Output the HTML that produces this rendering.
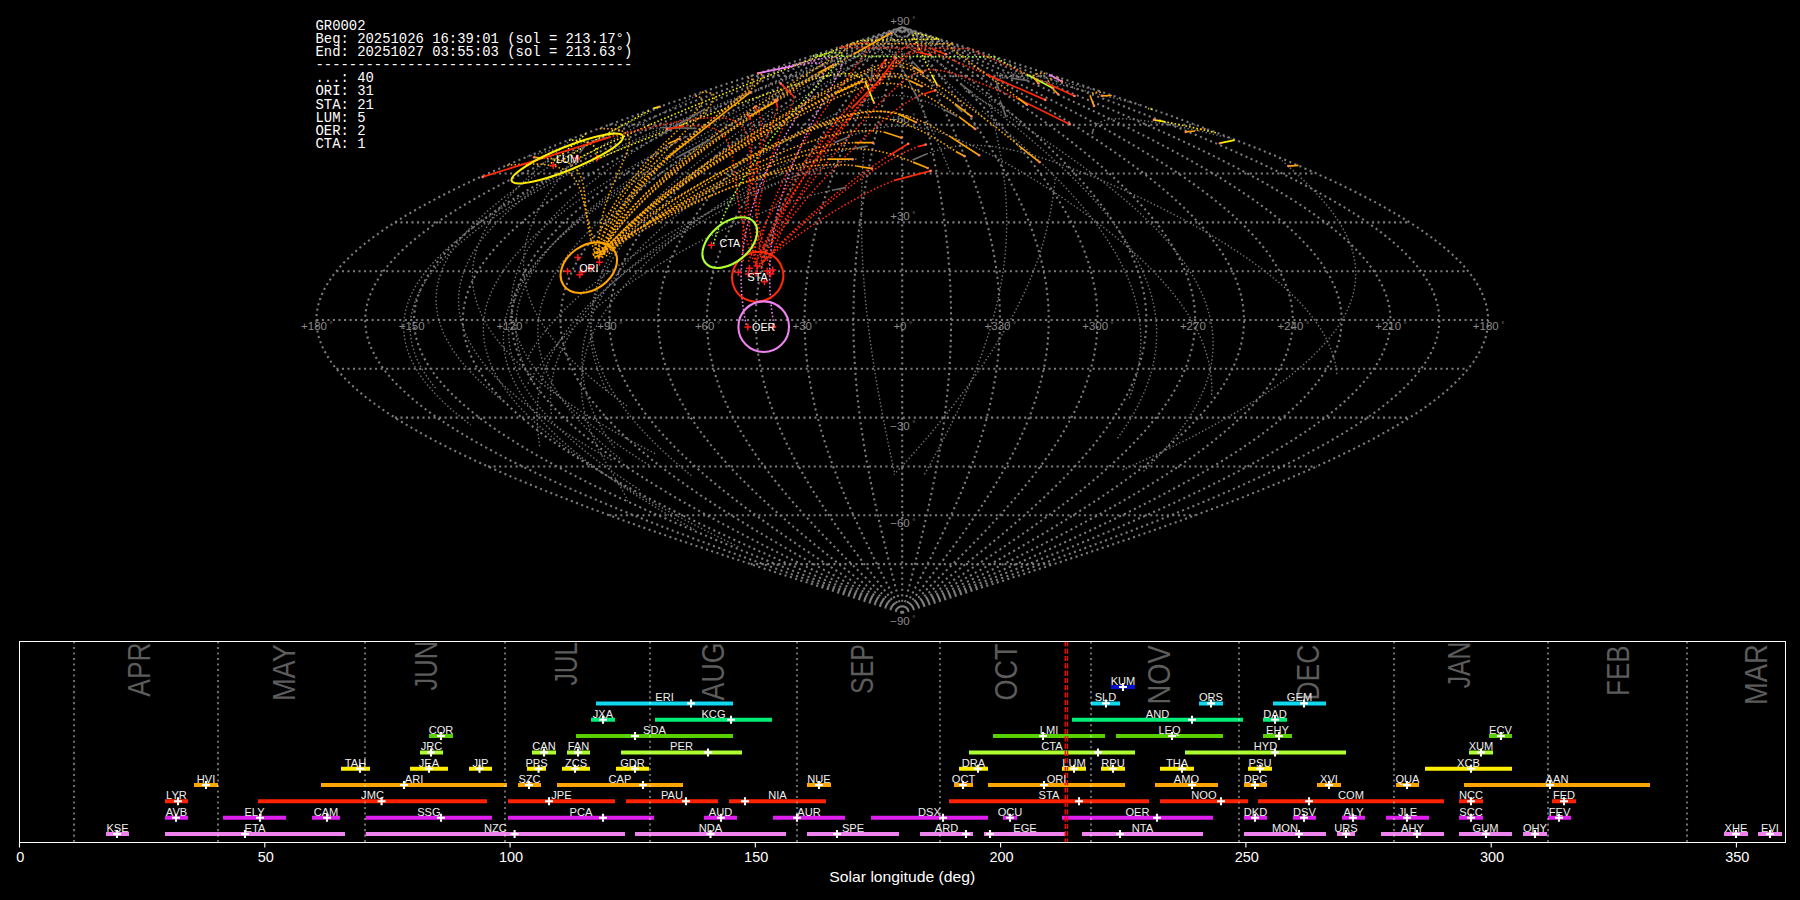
<!DOCTYPE html><html><head><meta charset="utf-8"><style>html,body{margin:0;padding:0;background:#000;width:1800px;height:900px;overflow:hidden}svg{display:block}</style></head><body>
<svg width="1800" height="900" viewBox="0 0 1800 900">
<rect width="1800" height="900" fill="#000"/>
<path d="M902.2 612.9 L907.4 611.3 L912.5 609.7 L917.6 608 L922.7 606.4 L927.8 604.8 L932.9 603.2 L938 601.5 L943.1 599.9 L948.2 598.3 L953.3 596.6 L958.4 595 L963.5 593.4 L968.6 591.8 L973.6 590.1 L978.7 588.5 L983.8 586.9 L988.8 585.3 L993.9 583.6 L998.9 582 L1004 580.4 L1009 578.7 L1014 577.1 L1019 575.5 L1024.1 573.9 L1029.1 572.2 L1034 570.6 L1039 569 L1044 567.4 L1048.9 565.7 L1053.9 564.1 L1058.8 562.5 L1063.7 560.8 L1068.6 559.2 L1073.5 557.6 L1078.4 556 L1083.3 554.3 L1088.1 552.7 L1093 551.1 L1097.8 549.5 L1102.6 547.8 L1107.4 546.2 L1112.2 544.6 L1117 542.9 L1121.7 541.3 L1126.4 539.7 L1131.2 538.1 L1135.9 536.4 L1140.5 534.8 L1145.2 533.2 L1149.8 531.6 L1154.5 529.9 L1159.1 528.3 L1163.7 526.7 L1168.2 525 L1172.8 523.4 L1177.3 521.8 L1181.8 520.2 L1186.3 518.5 L1190.7 516.9 L1195.2 515.3 L1199.6 513.7 L1204 512 L1208.4 510.4 L1212.7 508.8 L1217 507.1 L1221.3 505.5 L1225.6 503.9 L1229.9 502.3 L1234.1 500.6 L1238.3 499 L1242.5 497.4 L1246.6 495.8 L1250.7 494.1 L1254.8 492.5 L1258.9 490.9 L1262.9 489.2 L1266.9 487.6 L1270.9 486 L1274.9 484.4 L1278.8 482.7 L1282.7 481.1 L1286.6 479.5 L1290.4 477.9 L1294.3 476.2 L1298 474.6 L1301.8 473 L1305.5 471.3 L1309.2 469.7 L1312.9 468.1 L1316.5 466.5 L1320.1 464.8 L1323.7 463.2 L1327.2 461.6 L1330.7 460 L1334.2 458.3 L1337.6 456.7 L1341 455.1 L1344.4 453.4 L1347.7 451.8 L1351 450.2 L1354.3 448.6 L1357.5 446.9 L1360.7 445.3 L1363.9 443.7 L1367 442.1 L1370.1 440.4 L1373.2 438.8 L1376.2 437.2 L1379.2 435.5 L1382.1 433.9 L1385.1 432.3 L1387.9 430.7 L1390.8 429 L1393.6 427.4 L1396.3 425.8 L1399.1 424.2 L1401.8 422.5 L1404.4 420.9 L1407 419.3 L1409.6 417.6 L1412.1 416 L1414.6 414.4 L1417.1 412.8 L1419.5 411.1 L1421.9 409.5 L1424.2 407.9 L1426.5 406.2 L1428.8 404.6 L1431 403 L1433.2 401.4 L1435.3 399.7 L1437.4 398.1 L1439.5 396.5 L1441.5 394.9 L1443.5 393.2 L1445.4 391.6 L1447.3 390 L1449.2 388.3 L1451 386.7 L1452.8 385.1 L1454.5 383.5 L1456.2 381.8 L1457.8 380.2 L1459.4 378.6 L1461 377 L1462.5 375.3 L1464 373.7 L1465.4 372.1 L1466.8 370.4 L1468.1 368.8 L1469.4 367.2 L1470.7 365.6 L1471.9 363.9 L1473.1 362.3 L1474.2 360.7 L1475.3 359.1 L1476.3 357.4 L1477.3 355.8 L1478.3 354.2 L1479.2 352.5 L1480.1 350.9 L1480.9 349.3 L1481.7 347.7 L1482.4 346 L1483.1 344.4 L1483.7 342.8 L1484.3 341.2 L1484.9 339.5 L1485.4 337.9 L1485.9 336.3 L1486.3 334.6 L1486.7 333 L1487 331.4 L1487.3 329.8 L1487.5 328.1 L1487.7 326.5 L1487.9 324.9 L1488 323.3 L1488.1 321.6 L1488.1 320 L1488.1 318.4 L1488 316.7 L1487.9 315.1 L1487.7 313.5 L1487.5 311.9 L1487.3 310.2 L1487 308.6 L1486.7 307 L1486.3 305.4 L1485.9 303.7 L1485.4 302.1 L1484.9 300.5 L1484.3 298.8 L1483.7 297.2 L1483.1 295.6 L1482.4 294 L1481.7 292.3 L1480.9 290.7 L1480.1 289.1 L1479.2 287.5 L1478.3 285.8 L1477.3 284.2 L1476.3 282.6 L1475.3 280.9 L1474.2 279.3 L1473.1 277.7 L1471.9 276.1 L1470.7 274.4 L1469.4 272.8 L1468.1 271.2 L1466.8 269.6 L1465.4 267.9 L1464 266.3 L1462.5 264.7 L1461 263 L1459.4 261.4 L1457.8 259.8 L1456.2 258.2 L1454.5 256.5 L1452.8 254.9 L1451 253.3 L1449.2 251.7 L1447.3 250 L1445.4 248.4 L1443.5 246.8 L1441.5 245.1 L1439.5 243.5 L1437.4 241.9 L1435.3 240.3 L1433.2 238.6 L1431 237 L1428.8 235.4 L1426.5 233.8 L1424.2 232.1 L1421.9 230.5 L1419.5 228.9 L1417.1 227.2 L1414.6 225.6 L1412.1 224 L1409.6 222.4 L1407 220.7 L1404.4 219.1 L1401.8 217.5 L1399.1 215.8 L1396.3 214.2 L1393.6 212.6 L1390.8 211 L1387.9 209.3 L1385.1 207.7 L1382.1 206.1 L1379.2 204.5 L1376.2 202.8 L1373.2 201.2 L1370.1 199.6 L1367 197.9 L1363.9 196.3 L1360.7 194.7 L1357.5 193.1 L1354.3 191.4 L1351 189.8 L1347.7 188.2 L1344.4 186.6 L1341 184.9 L1337.6 183.3 L1334.2 181.7 L1330.7 180 L1327.2 178.4 L1323.7 176.8 L1320.1 175.2 L1316.5 173.5 L1312.9 171.9 L1309.2 170.3 L1305.5 168.7 L1301.8 167 L1298 165.4 L1294.3 163.8 L1290.4 162.1 L1286.6 160.5 L1282.7 158.9 L1278.8 157.3 L1274.9 155.6 L1270.9 154 L1266.9 152.4 L1262.9 150.8 L1258.9 149.1 L1254.8 147.5 L1250.7 145.9 L1246.6 144.2 L1242.5 142.6 L1238.3 141 L1234.1 139.4 L1229.9 137.7 L1225.6 136.1 L1221.3 134.5 L1217 132.9 L1212.7 131.2 L1208.4 129.6 L1204 128 L1199.6 126.3 L1195.2 124.7 L1190.7 123.1 L1186.3 121.5 L1181.8 119.8 L1177.3 118.2 L1172.8 116.6 L1168.2 115 L1163.7 113.3 L1159.1 111.7 L1154.5 110.1 L1149.8 108.4 L1145.2 106.8 L1140.5 105.2 L1135.9 103.6 L1131.2 101.9 L1126.4 100.3 L1121.7 98.7 L1117 97.1 L1112.2 95.4 L1107.4 93.8 L1102.6 92.2 L1097.8 90.5 L1093 88.9 L1088.1 87.3 L1083.3 85.7 L1078.4 84 L1073.5 82.4 L1068.6 80.8 L1063.7 79.2 L1058.8 77.5 L1053.9 75.9 L1048.9 74.3 L1044 72.6 L1039 71 L1034 69.4 L1029.1 67.8 L1024.1 66.1 L1019 64.5 L1014 62.9 L1009 61.3 L1004 59.6 L998.9 58 L993.9 56.4 L988.8 54.7 L983.8 53.1 L978.7 51.5 L973.6 49.9 L968.6 48.2 L963.5 46.6 L958.4 45 L953.3 43.4 L948.2 41.7 L943.1 40.1 L938 38.5 L932.9 36.8 L927.8 35.2 L922.7 33.6 L917.6 32 L912.5 30.3 L907.4 28.7 L902.2 27.1 M902.2 612.9 L906.9 611.3 L911.6 609.7 L916.3 608 L921 606.4 L925.7 604.8 L930.4 603.2 L935 601.5 L939.7 599.9 L944.4 598.3 L949.1 596.6 L953.7 595 L958.4 593.4 L963 591.8 L967.7 590.1 L972.3 588.5 L977 586.9 L981.6 585.3 L986.3 583.6 L990.9 582 L995.5 580.4 L1000.1 578.7 L1004.7 577.1 L1009.3 575.5 L1013.9 573.9 L1018.5 572.2 L1023.1 570.6 L1027.6 569 L1032.2 567.4 L1036.7 565.7 L1041.2 564.1 L1045.8 562.5 L1050.3 560.8 L1054.8 559.2 L1059.3 557.6 L1063.7 556 L1068.2 554.3 L1072.7 552.7 L1077.1 551.1 L1081.5 549.5 L1085.9 547.8 L1090.3 546.2 L1094.7 544.6 L1099.1 542.9 L1103.4 541.3 L1107.8 539.7 L1112.1 538.1 L1116.4 536.4 L1120.7 534.8 L1125 533.2 L1129.2 531.6 L1133.4 529.9 L1137.7 528.3 L1141.9 526.7 L1146.1 525 L1150.2 523.4 L1154.4 521.8 L1158.5 520.2 L1162.6 518.5 L1166.7 516.9 L1170.8 515.3 L1174.8 513.7 L1178.8 512 L1182.8 510.4 L1186.8 508.8 L1190.8 507.1 L1194.7 505.5 L1198.7 503.9 L1202.6 502.3 L1206.4 500.6 L1210.3 499 L1214.1 497.4 L1217.9 495.8 L1221.7 494.1 L1225.4 492.5 L1229.2 490.9 L1232.9 489.2 L1236.6 487.6 L1240.2 486 L1243.8 484.4 L1247.4 482.7 L1251 481.1 L1254.6 479.5 L1258.1 477.9 L1261.6 476.2 L1265.1 474.6 L1268.5 473 L1271.9 471.3 L1275.3 469.7 L1278.7 468.1 L1282 466.5 L1285.3 464.8 L1288.6 463.2 L1291.8 461.6 L1295 460 L1298.2 458.3 L1301.3 456.7 L1304.5 455.1 L1307.5 453.4 L1310.6 451.8 L1313.6 450.2 L1316.6 448.6 L1319.6 446.9 L1322.5 445.3 L1325.4 443.7 L1328.3 442.1 L1331.1 440.4 L1333.9 438.8 L1336.7 437.2 L1339.5 435.5 L1342.2 433.9 L1344.8 432.3 L1347.5 430.7 L1350.1 429 L1352.6 427.4 L1355.2 425.8 L1357.7 424.2 L1360.1 422.5 L1362.6 420.9 L1365 419.3 L1367.3 417.6 L1369.7 416 L1371.9 414.4 L1374.2 412.8 L1376.4 411.1 L1378.6 409.5 L1380.7 407.9 L1382.9 406.2 L1384.9 404.6 L1387 403 L1389 401.4 L1390.9 399.7 L1392.8 398.1 L1394.7 396.5 L1396.6 394.9 L1398.4 393.2 L1400.2 391.6 L1401.9 390 L1403.6 388.3 L1405.3 386.7 L1406.9 385.1 L1408.5 383.5 L1410 381.8 L1411.5 380.2 L1413 378.6 L1414.4 377 L1415.8 375.3 L1417.2 373.7 L1418.5 372.1 L1419.7 370.4 L1421 368.8 L1422.2 367.2 L1423.3 365.6 L1424.4 363.9 L1425.5 362.3 L1426.5 360.7 L1427.5 359.1 L1428.5 357.4 L1429.4 355.8 L1430.3 354.2 L1431.1 352.5 L1431.9 350.9 L1432.7 349.3 L1433.4 347.7 L1434 346 L1434.7 344.4 L1435.3 342.8 L1435.8 341.2 L1436.3 339.5 L1436.8 337.9 L1437.2 336.3 L1437.6 334.6 L1438 333 L1438.3 331.4 L1438.5 329.8 L1438.8 328.1 L1438.9 326.5 L1439.1 324.9 L1439.2 323.3 L1439.3 321.6 L1439.3 320 L1439.3 318.4 L1439.2 316.7 L1439.1 315.1 L1438.9 313.5 L1438.8 311.9 L1438.5 310.2 L1438.3 308.6 L1438 307 L1437.6 305.4 L1437.2 303.7 L1436.8 302.1 L1436.3 300.5 L1435.8 298.8 L1435.3 297.2 L1434.7 295.6 L1434 294 L1433.4 292.3 L1432.7 290.7 L1431.9 289.1 L1431.1 287.5 L1430.3 285.8 L1429.4 284.2 L1428.5 282.6 L1427.5 280.9 L1426.5 279.3 L1425.5 277.7 L1424.4 276.1 L1423.3 274.4 L1422.2 272.8 L1421 271.2 L1419.7 269.6 L1418.5 267.9 L1417.2 266.3 L1415.8 264.7 L1414.4 263 L1413 261.4 L1411.5 259.8 L1410 258.2 L1408.5 256.5 L1406.9 254.9 L1405.3 253.3 L1403.6 251.7 L1401.9 250 L1400.2 248.4 L1398.4 246.8 L1396.6 245.1 L1394.7 243.5 L1392.8 241.9 L1390.9 240.3 L1389 238.6 L1387 237 L1384.9 235.4 L1382.9 233.8 L1380.7 232.1 L1378.6 230.5 L1376.4 228.9 L1374.2 227.2 L1371.9 225.6 L1369.7 224 L1367.3 222.4 L1365 220.7 L1362.6 219.1 L1360.1 217.5 L1357.7 215.8 L1355.2 214.2 L1352.6 212.6 L1350.1 211 L1347.5 209.3 L1344.8 207.7 L1342.2 206.1 L1339.5 204.5 L1336.7 202.8 L1333.9 201.2 L1331.1 199.6 L1328.3 197.9 L1325.4 196.3 L1322.5 194.7 L1319.6 193.1 L1316.6 191.4 L1313.6 189.8 L1310.6 188.2 L1307.5 186.6 L1304.5 184.9 L1301.3 183.3 L1298.2 181.7 L1295 180 L1291.8 178.4 L1288.6 176.8 L1285.3 175.2 L1282 173.5 L1278.7 171.9 L1275.3 170.3 L1271.9 168.7 L1268.5 167 L1265.1 165.4 L1261.6 163.8 L1258.1 162.1 L1254.6 160.5 L1251 158.9 L1247.4 157.3 L1243.8 155.6 L1240.2 154 L1236.6 152.4 L1232.9 150.8 L1229.2 149.1 L1225.4 147.5 L1221.7 145.9 L1217.9 144.2 L1214.1 142.6 L1210.3 141 L1206.4 139.4 L1202.6 137.7 L1198.7 136.1 L1194.7 134.5 L1190.8 132.9 L1186.8 131.2 L1182.8 129.6 L1178.8 128 L1174.8 126.3 L1170.8 124.7 L1166.7 123.1 L1162.6 121.5 L1158.5 119.8 L1154.4 118.2 L1150.2 116.6 L1146.1 115 L1141.9 113.3 L1137.7 111.7 L1133.4 110.1 L1129.2 108.4 L1125 106.8 L1120.7 105.2 L1116.4 103.6 L1112.1 101.9 L1107.8 100.3 L1103.4 98.7 L1099.1 97.1 L1094.7 95.4 L1090.3 93.8 L1085.9 92.2 L1081.5 90.5 L1077.1 88.9 L1072.7 87.3 L1068.2 85.7 L1063.7 84 L1059.3 82.4 L1054.8 80.8 L1050.3 79.2 L1045.8 77.5 L1041.2 75.9 L1036.7 74.3 L1032.2 72.6 L1027.6 71 L1023.1 69.4 L1018.5 67.8 L1013.9 66.1 L1009.3 64.5 L1004.7 62.9 L1000.1 61.3 L995.5 59.6 L990.9 58 L986.3 56.4 L981.6 54.7 L977 53.1 L972.3 51.5 L967.7 49.9 L963 48.2 L958.4 46.6 L953.7 45 L949.1 43.4 L944.4 41.7 L939.7 40.1 L935 38.5 L930.4 36.8 L925.7 35.2 L921 33.6 L916.3 32 L911.6 30.3 L906.9 28.7 L902.2 27.1 M902.2 612.9 L906.5 611.3 L910.8 609.7 L915 608 L919.3 606.4 L923.5 604.8 L927.8 603.2 L932.1 601.5 L936.3 599.9 L940.6 598.3 L944.8 596.6 L949 595 L953.3 593.4 L957.5 591.8 L961.7 590.1 L966 588.5 L970.2 586.9 L974.4 585.3 L978.6 583.6 L982.8 582 L987 580.4 L991.2 578.7 L995.4 577.1 L999.6 575.5 L1003.8 573.9 L1007.9 572.2 L1012.1 570.6 L1016.2 569 L1020.4 567.4 L1024.5 565.7 L1028.6 564.1 L1032.7 562.5 L1036.8 560.8 L1040.9 559.2 L1045 557.6 L1049.1 556 L1053.1 554.3 L1057.2 552.7 L1061.2 551.1 L1065.2 549.5 L1069.2 547.8 L1073.2 546.2 L1077.2 544.6 L1081.2 542.9 L1085.1 541.3 L1089.1 539.7 L1093 538.1 L1096.9 536.4 L1100.8 534.8 L1104.7 533.2 L1108.6 531.6 L1112.4 529.9 L1116.3 528.3 L1120.1 526.7 L1123.9 525 L1127.7 523.4 L1131.4 521.8 L1135.2 520.2 L1138.9 518.5 L1142.7 516.9 L1146.4 515.3 L1150 513.7 L1153.7 512 L1157.3 510.4 L1161 508.8 L1164.6 507.1 L1168.1 505.5 L1171.7 503.9 L1175.3 502.3 L1178.8 500.6 L1182.3 499 L1185.8 497.4 L1189.2 495.8 L1192.6 494.1 L1196.1 492.5 L1199.5 490.9 L1202.8 489.2 L1206.2 487.6 L1209.5 486 L1212.8 484.4 L1216.1 482.7 L1219.3 481.1 L1222.5 479.5 L1225.7 477.9 L1228.9 476.2 L1232.1 474.6 L1235.2 473 L1238.3 471.3 L1241.4 469.7 L1244.4 468.1 L1247.5 466.5 L1250.5 464.8 L1253.4 463.2 L1256.4 461.6 L1259.3 460 L1262.2 458.3 L1265.1 456.7 L1267.9 455.1 L1270.7 453.4 L1273.5 451.8 L1276.2 450.2 L1279 448.6 L1281.7 446.9 L1284.3 445.3 L1287 443.7 L1289.6 442.1 L1292.1 440.4 L1294.7 438.8 L1297.2 437.2 L1299.7 435.5 L1302.2 433.9 L1304.6 432.3 L1307 430.7 L1309.4 429 L1311.7 427.4 L1314 425.8 L1316.3 424.2 L1318.5 422.5 L1320.7 420.9 L1322.9 419.3 L1325 417.6 L1327.2 416 L1329.2 414.4 L1331.3 412.8 L1333.3 411.1 L1335.3 409.5 L1337.2 407.9 L1339.2 406.2 L1341 404.6 L1342.9 403 L1344.7 401.4 L1346.5 399.7 L1348.2 398.1 L1350 396.5 L1351.6 394.9 L1353.3 393.2 L1354.9 391.6 L1356.5 390 L1358 388.3 L1359.5 386.7 L1361 385.1 L1362.5 383.5 L1363.9 381.8 L1365.2 380.2 L1366.6 378.6 L1367.9 377 L1369.1 375.3 L1370.4 373.7 L1371.5 372.1 L1372.7 370.4 L1373.8 368.8 L1374.9 367.2 L1376 365.6 L1377 363.9 L1377.9 362.3 L1378.9 360.7 L1379.8 359.1 L1380.7 357.4 L1381.5 355.8 L1382.3 354.2 L1383 352.5 L1383.8 350.9 L1384.4 349.3 L1385.1 347.7 L1385.7 346 L1386.3 344.4 L1386.8 342.8 L1387.3 341.2 L1387.8 339.5 L1388.2 337.9 L1388.6 336.3 L1389 334.6 L1389.3 333 L1389.5 331.4 L1389.8 329.8 L1390 328.1 L1390.2 326.5 L1390.3 324.9 L1390.4 323.3 L1390.4 321.6 L1390.5 320 L1390.4 318.4 L1390.4 316.7 L1390.3 315.1 L1390.2 313.5 L1390 311.9 L1389.8 310.2 L1389.5 308.6 L1389.3 307 L1389 305.4 L1388.6 303.7 L1388.2 302.1 L1387.8 300.5 L1387.3 298.8 L1386.8 297.2 L1386.3 295.6 L1385.7 294 L1385.1 292.3 L1384.4 290.7 L1383.8 289.1 L1383 287.5 L1382.3 285.8 L1381.5 284.2 L1380.7 282.6 L1379.8 280.9 L1378.9 279.3 L1377.9 277.7 L1377 276.1 L1376 274.4 L1374.9 272.8 L1373.8 271.2 L1372.7 269.6 L1371.5 267.9 L1370.4 266.3 L1369.1 264.7 L1367.9 263 L1366.6 261.4 L1365.2 259.8 L1363.9 258.2 L1362.5 256.5 L1361 254.9 L1359.5 253.3 L1358 251.7 L1356.5 250 L1354.9 248.4 L1353.3 246.8 L1351.6 245.1 L1350 243.5 L1348.2 241.9 L1346.5 240.3 L1344.7 238.6 L1342.9 237 L1341 235.4 L1339.2 233.8 L1337.2 232.1 L1335.3 230.5 L1333.3 228.9 L1331.3 227.2 L1329.2 225.6 L1327.2 224 L1325 222.4 L1322.9 220.7 L1320.7 219.1 L1318.5 217.5 L1316.3 215.8 L1314 214.2 L1311.7 212.6 L1309.4 211 L1307 209.3 L1304.6 207.7 L1302.2 206.1 L1299.7 204.5 L1297.2 202.8 L1294.7 201.2 L1292.1 199.6 L1289.6 197.9 L1287 196.3 L1284.3 194.7 L1281.7 193.1 L1279 191.4 L1276.2 189.8 L1273.5 188.2 L1270.7 186.6 L1267.9 184.9 L1265.1 183.3 L1262.2 181.7 L1259.3 180 L1256.4 178.4 L1253.4 176.8 L1250.5 175.2 L1247.5 173.5 L1244.4 171.9 L1241.4 170.3 L1238.3 168.7 L1235.2 167 L1232.1 165.4 L1228.9 163.8 L1225.7 162.1 L1222.5 160.5 L1219.3 158.9 L1216.1 157.3 L1212.8 155.6 L1209.5 154 L1206.2 152.4 L1202.8 150.8 L1199.5 149.1 L1196.1 147.5 L1192.6 145.9 L1189.2 144.2 L1185.8 142.6 L1182.3 141 L1178.8 139.4 L1175.3 137.7 L1171.7 136.1 L1168.1 134.5 L1164.6 132.9 L1161 131.2 L1157.3 129.6 L1153.7 128 L1150 126.3 L1146.4 124.7 L1142.7 123.1 L1138.9 121.5 L1135.2 119.8 L1131.4 118.2 L1127.7 116.6 L1123.9 115 L1120.1 113.3 L1116.3 111.7 L1112.4 110.1 L1108.6 108.4 L1104.7 106.8 L1100.8 105.2 L1096.9 103.6 L1093 101.9 L1089.1 100.3 L1085.1 98.7 L1081.2 97.1 L1077.2 95.4 L1073.2 93.8 L1069.2 92.2 L1065.2 90.5 L1061.2 88.9 L1057.2 87.3 L1053.1 85.7 L1049.1 84 L1045 82.4 L1040.9 80.8 L1036.8 79.2 L1032.7 77.5 L1028.6 75.9 L1024.5 74.3 L1020.4 72.6 L1016.2 71 L1012.1 69.4 L1007.9 67.8 L1003.8 66.1 L999.6 64.5 L995.4 62.9 L991.2 61.3 L987 59.6 L982.8 58 L978.6 56.4 L974.4 54.7 L970.2 53.1 L966 51.5 L961.7 49.9 L957.5 48.2 L953.3 46.6 L949 45 L944.8 43.4 L940.6 41.7 L936.3 40.1 L932.1 38.5 L927.8 36.8 L923.5 35.2 L919.3 33.6 L915 32 L910.8 30.3 L906.5 28.7 L902.2 27.1 M902.2 612.9 L906.1 611.3 L909.9 609.7 L913.8 608 L917.6 606.4 L921.4 604.8 L925.2 603.2 L929.1 601.5 L932.9 599.9 L936.7 598.3 L940.5 596.6 L944.4 595 L948.2 593.4 L952 591.8 L955.8 590.1 L959.6 588.5 L963.4 586.9 L967.2 585.3 L971 583.6 L974.8 582 L978.5 580.4 L982.3 578.7 L986.1 577.1 L989.8 575.5 L993.6 573.9 L997.4 572.2 L1001.1 570.6 L1004.8 569 L1008.5 567.4 L1012.3 565.7 L1016 564.1 L1019.7 562.5 L1023.4 560.8 L1027 559.2 L1030.7 557.6 L1034.4 556 L1038 554.3 L1041.7 552.7 L1045.3 551.1 L1048.9 549.5 L1052.5 547.8 L1056.1 546.2 L1059.7 544.6 L1063.3 542.9 L1066.8 541.3 L1070.4 539.7 L1073.9 538.1 L1077.5 536.4 L1081 534.8 L1084.5 533.2 L1087.9 531.6 L1091.4 529.9 L1094.9 528.3 L1098.3 526.7 L1101.7 525 L1105.1 523.4 L1108.5 521.8 L1111.9 520.2 L1115.3 518.5 L1118.6 516.9 L1121.9 515.3 L1125.3 513.7 L1128.5 512 L1131.8 510.4 L1135.1 508.8 L1138.3 507.1 L1141.6 505.5 L1144.8 503.9 L1148 502.3 L1151.1 500.6 L1154.3 499 L1157.4 497.4 L1160.5 495.8 L1163.6 494.1 L1166.7 492.5 L1169.7 490.9 L1172.8 489.2 L1175.8 487.6 L1178.8 486 L1181.7 484.4 L1184.7 482.7 L1187.6 481.1 L1190.5 479.5 L1193.4 477.9 L1196.3 476.2 L1199.1 474.6 L1201.9 473 L1204.7 471.3 L1207.5 469.7 L1210.2 468.1 L1212.9 466.5 L1215.6 464.8 L1218.3 463.2 L1221 461.6 L1223.6 460 L1226.2 458.3 L1228.8 456.7 L1231.3 455.1 L1233.9 453.4 L1236.4 451.8 L1238.8 450.2 L1241.3 448.6 L1243.7 446.9 L1246.1 445.3 L1248.5 443.7 L1250.8 442.1 L1253.2 440.4 L1255.5 438.8 L1257.7 437.2 L1260 435.5 L1262.2 433.9 L1264.4 432.3 L1266.5 430.7 L1268.6 429 L1270.7 427.4 L1272.8 425.8 L1274.9 424.2 L1276.9 422.5 L1278.9 420.9 L1280.8 419.3 L1282.8 417.6 L1284.7 416 L1286.5 414.4 L1288.4 412.8 L1290.2 411.1 L1292 409.5 L1293.7 407.9 L1295.5 406.2 L1297.2 404.6 L1298.8 403 L1300.5 401.4 L1302.1 399.7 L1303.6 398.1 L1305.2 396.5 L1306.7 394.9 L1308.2 393.2 L1309.6 391.6 L1311.1 390 L1312.5 388.3 L1313.8 386.7 L1315.1 385.1 L1316.4 383.5 L1317.7 381.8 L1318.9 380.2 L1320.1 378.6 L1321.3 377 L1322.4 375.3 L1323.5 373.7 L1324.6 372.1 L1325.7 370.4 L1326.7 368.8 L1327.6 367.2 L1328.6 365.6 L1329.5 363.9 L1330.4 362.3 L1331.2 360.7 L1332 359.1 L1332.8 357.4 L1333.6 355.8 L1334.3 354.2 L1335 352.5 L1335.6 350.9 L1336.2 349.3 L1336.8 347.7 L1337.4 346 L1337.9 344.4 L1338.4 342.8 L1338.8 341.2 L1339.2 339.5 L1339.6 337.9 L1340 336.3 L1340.3 334.6 L1340.6 333 L1340.8 331.4 L1341 329.8 L1341.2 328.1 L1341.4 326.5 L1341.5 324.9 L1341.6 323.3 L1341.6 321.6 L1341.6 320 L1341.6 318.4 L1341.6 316.7 L1341.5 315.1 L1341.4 313.5 L1341.2 311.9 L1341 310.2 L1340.8 308.6 L1340.6 307 L1340.3 305.4 L1340 303.7 L1339.6 302.1 L1339.2 300.5 L1338.8 298.8 L1338.4 297.2 L1337.9 295.6 L1337.4 294 L1336.8 292.3 L1336.2 290.7 L1335.6 289.1 L1335 287.5 L1334.3 285.8 L1333.6 284.2 L1332.8 282.6 L1332 280.9 L1331.2 279.3 L1330.4 277.7 L1329.5 276.1 L1328.6 274.4 L1327.6 272.8 L1326.7 271.2 L1325.7 269.6 L1324.6 267.9 L1323.5 266.3 L1322.4 264.7 L1321.3 263 L1320.1 261.4 L1318.9 259.8 L1317.7 258.2 L1316.4 256.5 L1315.1 254.9 L1313.8 253.3 L1312.5 251.7 L1311.1 250 L1309.6 248.4 L1308.2 246.8 L1306.7 245.1 L1305.2 243.5 L1303.6 241.9 L1302.1 240.3 L1300.5 238.6 L1298.8 237 L1297.2 235.4 L1295.5 233.8 L1293.7 232.1 L1292 230.5 L1290.2 228.9 L1288.4 227.2 L1286.5 225.6 L1284.7 224 L1282.8 222.4 L1280.8 220.7 L1278.9 219.1 L1276.9 217.5 L1274.9 215.8 L1272.8 214.2 L1270.7 212.6 L1268.6 211 L1266.5 209.3 L1264.4 207.7 L1262.2 206.1 L1260 204.5 L1257.7 202.8 L1255.5 201.2 L1253.2 199.6 L1250.8 197.9 L1248.5 196.3 L1246.1 194.7 L1243.7 193.1 L1241.3 191.4 L1238.8 189.8 L1236.4 188.2 L1233.9 186.6 L1231.3 184.9 L1228.8 183.3 L1226.2 181.7 L1223.6 180 L1221 178.4 L1218.3 176.8 L1215.6 175.2 L1212.9 173.5 L1210.2 171.9 L1207.5 170.3 L1204.7 168.7 L1201.9 167 L1199.1 165.4 L1196.3 163.8 L1193.4 162.1 L1190.5 160.5 L1187.6 158.9 L1184.7 157.3 L1181.7 155.6 L1178.8 154 L1175.8 152.4 L1172.8 150.8 L1169.7 149.1 L1166.7 147.5 L1163.6 145.9 L1160.5 144.2 L1157.4 142.6 L1154.3 141 L1151.1 139.4 L1148 137.7 L1144.8 136.1 L1141.6 134.5 L1138.3 132.9 L1135.1 131.2 L1131.8 129.6 L1128.5 128 L1125.3 126.3 L1121.9 124.7 L1118.6 123.1 L1115.3 121.5 L1111.9 119.8 L1108.5 118.2 L1105.1 116.6 L1101.7 115 L1098.3 113.3 L1094.9 111.7 L1091.4 110.1 L1087.9 108.4 L1084.5 106.8 L1081 105.2 L1077.5 103.6 L1073.9 101.9 L1070.4 100.3 L1066.8 98.7 L1063.3 97.1 L1059.7 95.4 L1056.1 93.8 L1052.5 92.2 L1048.9 90.5 L1045.3 88.9 L1041.7 87.3 L1038 85.7 L1034.4 84 L1030.7 82.4 L1027 80.8 L1023.4 79.2 L1019.7 77.5 L1016 75.9 L1012.3 74.3 L1008.5 72.6 L1004.8 71 L1001.1 69.4 L997.4 67.8 L993.6 66.1 L989.8 64.5 L986.1 62.9 L982.3 61.3 L978.5 59.6 L974.8 58 L971 56.4 L967.2 54.7 L963.4 53.1 L959.6 51.5 L955.8 49.9 L952 48.2 L948.2 46.6 L944.4 45 L940.5 43.4 L936.7 41.7 L932.9 40.1 L929.1 38.5 L925.2 36.8 L921.4 35.2 L917.6 33.6 L913.8 32 L909.9 30.3 L906.1 28.7 L902.2 27.1 M902.2 612.9 L905.7 611.3 L909.1 609.7 L912.5 608 L915.9 606.4 L919.3 604.8 L922.7 603.2 L926.1 601.5 L929.5 599.9 L932.9 598.3 L936.3 596.6 L939.7 595 L943.1 593.4 L946.5 591.8 L949.8 590.1 L953.2 588.5 L956.6 586.9 L960 585.3 L963.3 583.6 L966.7 582 L970.1 580.4 L973.4 578.7 L976.8 577.1 L980.1 575.5 L983.5 573.9 L986.8 572.2 L990.1 570.6 L993.4 569 L996.7 567.4 L1000 565.7 L1003.3 564.1 L1006.6 562.5 L1009.9 560.8 L1013.2 559.2 L1016.4 557.6 L1019.7 556 L1022.9 554.3 L1026.2 552.7 L1029.4 551.1 L1032.6 549.5 L1035.8 547.8 L1039 546.2 L1042.2 544.6 L1045.4 542.9 L1048.6 541.3 L1051.7 539.7 L1054.9 538.1 L1058 536.4 L1061.1 534.8 L1064.2 533.2 L1067.3 531.6 L1070.4 529.9 L1073.5 528.3 L1076.5 526.7 L1079.6 525 L1082.6 523.4 L1085.6 521.8 L1088.6 520.2 L1091.6 518.5 L1094.6 516.9 L1097.5 515.3 L1100.5 513.7 L1103.4 512 L1106.3 510.4 L1109.2 508.8 L1112.1 507.1 L1115 505.5 L1117.8 503.9 L1120.7 502.3 L1123.5 500.6 L1126.3 499 L1129.1 497.4 L1131.8 495.8 L1134.6 494.1 L1137.3 492.5 L1140 490.9 L1142.7 489.2 L1145.4 487.6 L1148 486 L1150.7 484.4 L1153.3 482.7 L1155.9 481.1 L1158.5 479.5 L1161 477.9 L1163.6 476.2 L1166.1 474.6 L1168.6 473 L1171.1 471.3 L1173.6 469.7 L1176 468.1 L1178.4 466.5 L1180.8 464.8 L1183.2 463.2 L1185.6 461.6 L1187.9 460 L1190.2 458.3 L1192.5 456.7 L1194.8 455.1 L1197 453.4 L1199.2 451.8 L1201.4 450.2 L1203.6 448.6 L1205.8 446.9 L1207.9 445.3 L1210 443.7 L1212.1 442.1 L1214.2 440.4 L1216.2 438.8 L1218.2 437.2 L1220.2 435.5 L1222.2 433.9 L1224.1 432.3 L1226 430.7 L1227.9 429 L1229.8 427.4 L1231.6 425.8 L1233.5 424.2 L1235.3 422.5 L1237 420.9 L1238.8 419.3 L1240.5 417.6 L1242.2 416 L1243.8 414.4 L1245.5 412.8 L1247.1 411.1 L1248.7 409.5 L1250.2 407.9 L1251.8 406.2 L1253.3 404.6 L1254.8 403 L1256.2 401.4 L1257.6 399.7 L1259 398.1 L1260.4 396.5 L1261.8 394.9 L1263.1 393.2 L1264.4 391.6 L1265.6 390 L1266.9 388.3 L1268.1 386.7 L1269.3 385.1 L1270.4 383.5 L1271.5 381.8 L1272.6 380.2 L1273.7 378.6 L1274.7 377 L1275.7 375.3 L1276.7 373.7 L1277.7 372.1 L1278.6 370.4 L1279.5 368.8 L1280.4 367.2 L1281.2 365.6 L1282 363.9 L1282.8 362.3 L1283.6 360.7 L1284.3 359.1 L1285 357.4 L1285.6 355.8 L1286.3 354.2 L1286.9 352.5 L1287.5 350.9 L1288 349.3 L1288.5 347.7 L1289 346 L1289.5 344.4 L1289.9 342.8 L1290.3 341.2 L1290.7 339.5 L1291 337.9 L1291.3 336.3 L1291.6 334.6 L1291.9 333 L1292.1 331.4 L1292.3 329.8 L1292.4 328.1 L1292.6 326.5 L1292.7 324.9 L1292.8 323.3 L1292.8 321.6 L1292.8 320 L1292.8 318.4 L1292.8 316.7 L1292.7 315.1 L1292.6 313.5 L1292.4 311.9 L1292.3 310.2 L1292.1 308.6 L1291.9 307 L1291.6 305.4 L1291.3 303.7 L1291 302.1 L1290.7 300.5 L1290.3 298.8 L1289.9 297.2 L1289.5 295.6 L1289 294 L1288.5 292.3 L1288 290.7 L1287.5 289.1 L1286.9 287.5 L1286.3 285.8 L1285.6 284.2 L1285 282.6 L1284.3 280.9 L1283.6 279.3 L1282.8 277.7 L1282 276.1 L1281.2 274.4 L1280.4 272.8 L1279.5 271.2 L1278.6 269.6 L1277.7 267.9 L1276.7 266.3 L1275.7 264.7 L1274.7 263 L1273.7 261.4 L1272.6 259.8 L1271.5 258.2 L1270.4 256.5 L1269.3 254.9 L1268.1 253.3 L1266.9 251.7 L1265.6 250 L1264.4 248.4 L1263.1 246.8 L1261.8 245.1 L1260.4 243.5 L1259 241.9 L1257.6 240.3 L1256.2 238.6 L1254.8 237 L1253.3 235.4 L1251.8 233.8 L1250.2 232.1 L1248.7 230.5 L1247.1 228.9 L1245.5 227.2 L1243.8 225.6 L1242.2 224 L1240.5 222.4 L1238.8 220.7 L1237 219.1 L1235.3 217.5 L1233.5 215.8 L1231.6 214.2 L1229.8 212.6 L1227.9 211 L1226 209.3 L1224.1 207.7 L1222.2 206.1 L1220.2 204.5 L1218.2 202.8 L1216.2 201.2 L1214.2 199.6 L1212.1 197.9 L1210 196.3 L1207.9 194.7 L1205.8 193.1 L1203.6 191.4 L1201.4 189.8 L1199.2 188.2 L1197 186.6 L1194.8 184.9 L1192.5 183.3 L1190.2 181.7 L1187.9 180 L1185.6 178.4 L1183.2 176.8 L1180.8 175.2 L1178.4 173.5 L1176 171.9 L1173.6 170.3 L1171.1 168.7 L1168.6 167 L1166.1 165.4 L1163.6 163.8 L1161 162.1 L1158.5 160.5 L1155.9 158.9 L1153.3 157.3 L1150.7 155.6 L1148 154 L1145.4 152.4 L1142.7 150.8 L1140 149.1 L1137.3 147.5 L1134.6 145.9 L1131.8 144.2 L1129.1 142.6 L1126.3 141 L1123.5 139.4 L1120.7 137.7 L1117.8 136.1 L1115 134.5 L1112.1 132.9 L1109.2 131.2 L1106.3 129.6 L1103.4 128 L1100.5 126.3 L1097.5 124.7 L1094.6 123.1 L1091.6 121.5 L1088.6 119.8 L1085.6 118.2 L1082.6 116.6 L1079.6 115 L1076.5 113.3 L1073.5 111.7 L1070.4 110.1 L1067.3 108.4 L1064.2 106.8 L1061.1 105.2 L1058 103.6 L1054.9 101.9 L1051.7 100.3 L1048.6 98.7 L1045.4 97.1 L1042.2 95.4 L1039 93.8 L1035.8 92.2 L1032.6 90.5 L1029.4 88.9 L1026.2 87.3 L1022.9 85.7 L1019.7 84 L1016.4 82.4 L1013.2 80.8 L1009.9 79.2 L1006.6 77.5 L1003.3 75.9 L1000 74.3 L996.7 72.6 L993.4 71 L990.1 69.4 L986.8 67.8 L983.5 66.1 L980.1 64.5 L976.8 62.9 L973.4 61.3 L970.1 59.6 L966.7 58 L963.3 56.4 L960 54.7 L956.6 53.1 L953.2 51.5 L949.8 49.9 L946.5 48.2 L943.1 46.6 L939.7 45 L936.3 43.4 L932.9 41.7 L929.5 40.1 L926.1 38.5 L922.7 36.8 L919.3 35.2 L915.9 33.6 L912.5 32 L909.1 30.3 L905.7 28.7 L902.2 27.1 M902.2 612.9 L905.2 611.3 L908.2 609.7 L911.2 608 L914.2 606.4 L917.2 604.8 L920.1 603.2 L923.1 601.5 L926.1 599.9 L929.1 598.3 L932 596.6 L935 595 L938 593.4 L940.9 591.8 L943.9 590.1 L946.9 588.5 L949.8 586.9 L952.8 585.3 L955.7 583.6 L958.7 582 L961.6 580.4 L964.5 578.7 L967.5 577.1 L970.4 575.5 L973.3 573.9 L976.2 572.2 L979.1 570.6 L982 569 L984.9 567.4 L987.8 565.7 L990.7 564.1 L993.6 562.5 L996.4 560.8 L999.3 559.2 L1002.2 557.6 L1005 556 L1007.9 554.3 L1010.7 552.7 L1013.5 551.1 L1016.3 549.5 L1019.1 547.8 L1021.9 546.2 L1024.7 544.6 L1027.5 542.9 L1030.3 541.3 L1033 539.7 L1035.8 538.1 L1038.5 536.4 L1041.2 534.8 L1044 533.2 L1046.7 531.6 L1049.4 529.9 L1052.1 528.3 L1054.7 526.7 L1057.4 525 L1060 523.4 L1062.7 521.8 L1065.3 520.2 L1067.9 518.5 L1070.5 516.9 L1073.1 515.3 L1075.7 513.7 L1078.3 512 L1080.8 510.4 L1083.3 508.8 L1085.9 507.1 L1088.4 505.5 L1090.9 503.9 L1093.4 502.3 L1095.8 500.6 L1098.3 499 L1100.7 497.4 L1103.1 495.8 L1105.5 494.1 L1107.9 492.5 L1110.3 490.9 L1112.6 489.2 L1115 487.6 L1117.3 486 L1119.6 484.4 L1121.9 482.7 L1124.2 481.1 L1126.5 479.5 L1128.7 477.9 L1130.9 476.2 L1133.1 474.6 L1135.3 473 L1137.5 471.3 L1139.6 469.7 L1141.8 468.1 L1143.9 466.5 L1146 464.8 L1148.1 463.2 L1150.1 461.6 L1152.2 460 L1154.2 458.3 L1156.2 456.7 L1158.2 455.1 L1160.2 453.4 L1162.1 451.8 L1164 450.2 L1165.9 448.6 L1167.8 446.9 L1169.7 445.3 L1171.5 443.7 L1173.4 442.1 L1175.2 440.4 L1177 438.8 L1178.7 437.2 L1180.5 435.5 L1182.2 433.9 L1183.9 432.3 L1185.6 430.7 L1187.2 429 L1188.9 427.4 L1190.5 425.8 L1192.1 424.2 L1193.6 422.5 L1195.2 420.9 L1196.7 419.3 L1198.2 417.6 L1199.7 416 L1201.1 414.4 L1202.6 412.8 L1204 411.1 L1205.4 409.5 L1206.7 407.9 L1208.1 406.2 L1209.4 404.6 L1210.7 403 L1212 401.4 L1213.2 399.7 L1214.4 398.1 L1215.6 396.5 L1216.8 394.9 L1218 393.2 L1219.1 391.6 L1220.2 390 L1221.3 388.3 L1222.4 386.7 L1223.4 385.1 L1224.4 383.5 L1225.4 381.8 L1226.3 380.2 L1227.3 378.6 L1228.2 377 L1229.1 375.3 L1229.9 373.7 L1230.8 372.1 L1231.6 370.4 L1232.3 368.8 L1233.1 367.2 L1233.8 365.6 L1234.6 363.9 L1235.2 362.3 L1235.9 360.7 L1236.5 359.1 L1237.1 357.4 L1237.7 355.8 L1238.3 354.2 L1238.8 352.5 L1239.3 350.9 L1239.8 349.3 L1240.2 347.7 L1240.7 346 L1241.1 344.4 L1241.4 342.8 L1241.8 341.2 L1242.1 339.5 L1242.4 337.9 L1242.7 336.3 L1242.9 334.6 L1243.2 333 L1243.4 331.4 L1243.5 329.8 L1243.7 328.1 L1243.8 326.5 L1243.9 324.9 L1243.9 323.3 L1244 321.6 L1244 320 L1244 318.4 L1243.9 316.7 L1243.9 315.1 L1243.8 313.5 L1243.7 311.9 L1243.5 310.2 L1243.4 308.6 L1243.2 307 L1242.9 305.4 L1242.7 303.7 L1242.4 302.1 L1242.1 300.5 L1241.8 298.8 L1241.4 297.2 L1241.1 295.6 L1240.7 294 L1240.2 292.3 L1239.8 290.7 L1239.3 289.1 L1238.8 287.5 L1238.3 285.8 L1237.7 284.2 L1237.1 282.6 L1236.5 280.9 L1235.9 279.3 L1235.2 277.7 L1234.6 276.1 L1233.8 274.4 L1233.1 272.8 L1232.3 271.2 L1231.6 269.6 L1230.8 267.9 L1229.9 266.3 L1229.1 264.7 L1228.2 263 L1227.3 261.4 L1226.3 259.8 L1225.4 258.2 L1224.4 256.5 L1223.4 254.9 L1222.4 253.3 L1221.3 251.7 L1220.2 250 L1219.1 248.4 L1218 246.8 L1216.8 245.1 L1215.6 243.5 L1214.4 241.9 L1213.2 240.3 L1212 238.6 L1210.7 237 L1209.4 235.4 L1208.1 233.8 L1206.7 232.1 L1205.4 230.5 L1204 228.9 L1202.6 227.2 L1201.1 225.6 L1199.7 224 L1198.2 222.4 L1196.7 220.7 L1195.2 219.1 L1193.6 217.5 L1192.1 215.8 L1190.5 214.2 L1188.9 212.6 L1187.2 211 L1185.6 209.3 L1183.9 207.7 L1182.2 206.1 L1180.5 204.5 L1178.7 202.8 L1177 201.2 L1175.2 199.6 L1173.4 197.9 L1171.5 196.3 L1169.7 194.7 L1167.8 193.1 L1165.9 191.4 L1164 189.8 L1162.1 188.2 L1160.2 186.6 L1158.2 184.9 L1156.2 183.3 L1154.2 181.7 L1152.2 180 L1150.1 178.4 L1148.1 176.8 L1146 175.2 L1143.9 173.5 L1141.8 171.9 L1139.6 170.3 L1137.5 168.7 L1135.3 167 L1133.1 165.4 L1130.9 163.8 L1128.7 162.1 L1126.5 160.5 L1124.2 158.9 L1121.9 157.3 L1119.6 155.6 L1117.3 154 L1115 152.4 L1112.6 150.8 L1110.3 149.1 L1107.9 147.5 L1105.5 145.9 L1103.1 144.2 L1100.7 142.6 L1098.3 141 L1095.8 139.4 L1093.4 137.7 L1090.9 136.1 L1088.4 134.5 L1085.9 132.9 L1083.3 131.2 L1080.8 129.6 L1078.3 128 L1075.7 126.3 L1073.1 124.7 L1070.5 123.1 L1067.9 121.5 L1065.3 119.8 L1062.7 118.2 L1060 116.6 L1057.4 115 L1054.7 113.3 L1052.1 111.7 L1049.4 110.1 L1046.7 108.4 L1044 106.8 L1041.2 105.2 L1038.5 103.6 L1035.8 101.9 L1033 100.3 L1030.3 98.7 L1027.5 97.1 L1024.7 95.4 L1021.9 93.8 L1019.1 92.2 L1016.3 90.5 L1013.5 88.9 L1010.7 87.3 L1007.9 85.7 L1005 84 L1002.2 82.4 L999.3 80.8 L996.4 79.2 L993.6 77.5 L990.7 75.9 L987.8 74.3 L984.9 72.6 L982 71 L979.1 69.4 L976.2 67.8 L973.3 66.1 L970.4 64.5 L967.5 62.9 L964.5 61.3 L961.6 59.6 L958.7 58 L955.7 56.4 L952.8 54.7 L949.8 53.1 L946.9 51.5 L943.9 49.9 L940.9 48.2 L938 46.6 L935 45 L932 43.4 L929.1 41.7 L926.1 40.1 L923.1 38.5 L920.1 36.8 L917.2 35.2 L914.2 33.6 L911.2 32 L908.2 30.3 L905.2 28.7 L902.2 27.1 M902.2 612.9 L904.8 611.3 L907.4 609.7 L909.9 608 L912.5 606.4 L915 604.8 L917.6 603.2 L920.1 601.5 L922.7 599.9 L925.2 598.3 L927.8 596.6 L930.3 595 L932.9 593.4 L935.4 591.8 L937.9 590.1 L940.5 588.5 L943 586.9 L945.5 585.3 L948.1 583.6 L950.6 582 L953.1 580.4 L955.6 578.7 L958.1 577.1 L960.6 575.5 L963.2 573.9 L965.7 572.2 L968.1 570.6 L970.6 569 L973.1 567.4 L975.6 565.7 L978.1 564.1 L980.5 562.5 L983 560.8 L985.4 559.2 L987.9 557.6 L990.3 556 L992.8 554.3 L995.2 552.7 L997.6 551.1 L1000 549.5 L1002.4 547.8 L1004.8 546.2 L1007.2 544.6 L1009.6 542.9 L1012 541.3 L1014.3 539.7 L1016.7 538.1 L1019.1 536.4 L1021.4 534.8 L1023.7 533.2 L1026 531.6 L1028.4 529.9 L1030.7 528.3 L1033 526.7 L1035.2 525 L1037.5 523.4 L1039.8 521.8 L1042 520.2 L1044.3 518.5 L1046.5 516.9 L1048.7 515.3 L1050.9 513.7 L1053.1 512 L1055.3 510.4 L1057.5 508.8 L1059.6 507.1 L1061.8 505.5 L1063.9 503.9 L1066.1 502.3 L1068.2 500.6 L1070.3 499 L1072.4 497.4 L1074.4 495.8 L1076.5 494.1 L1078.5 492.5 L1080.6 490.9 L1082.6 489.2 L1084.6 487.6 L1086.6 486 L1088.6 484.4 L1090.5 482.7 L1092.5 481.1 L1094.4 479.5 L1096.3 477.9 L1098.3 476.2 L1100.1 474.6 L1102 473 L1103.9 471.3 L1105.7 469.7 L1107.6 468.1 L1109.4 466.5 L1111.2 464.8 L1113 463.2 L1114.7 461.6 L1116.5 460 L1118.2 458.3 L1119.9 456.7 L1121.6 455.1 L1123.3 453.4 L1125 451.8 L1126.6 450.2 L1128.3 448.6 L1129.9 446.9 L1131.5 445.3 L1133.1 443.7 L1134.6 442.1 L1136.2 440.4 L1137.7 438.8 L1139.2 437.2 L1140.7 435.5 L1142.2 433.9 L1143.7 432.3 L1145.1 430.7 L1146.5 429 L1147.9 427.4 L1149.3 425.8 L1150.7 424.2 L1152 422.5 L1153.3 420.9 L1154.6 419.3 L1155.9 417.6 L1157.2 416 L1158.4 414.4 L1159.7 412.8 L1160.9 411.1 L1162.1 409.5 L1163.2 407.9 L1164.4 406.2 L1165.5 404.6 L1166.6 403 L1167.7 401.4 L1168.8 399.7 L1169.8 398.1 L1170.9 396.5 L1171.9 394.9 L1172.9 393.2 L1173.8 391.6 L1174.8 390 L1175.7 388.3 L1176.6 386.7 L1177.5 385.1 L1178.4 383.5 L1179.2 381.8 L1180 380.2 L1180.8 378.6 L1181.6 377 L1182.4 375.3 L1183.1 373.7 L1183.8 372.1 L1184.5 370.4 L1185.2 368.8 L1185.8 367.2 L1186.5 365.6 L1187.1 363.9 L1187.7 362.3 L1188.2 360.7 L1188.8 359.1 L1189.3 357.4 L1189.8 355.8 L1190.3 354.2 L1190.7 352.5 L1191.2 350.9 L1191.6 349.3 L1192 347.7 L1192.3 346 L1192.7 344.4 L1193 342.8 L1193.3 341.2 L1193.6 339.5 L1193.8 337.9 L1194.1 336.3 L1194.3 334.6 L1194.5 333 L1194.6 331.4 L1194.8 329.8 L1194.9 328.1 L1195 326.5 L1195.1 324.9 L1195.1 323.3 L1195.2 321.6 L1195.2 320 L1195.2 318.4 L1195.1 316.7 L1195.1 315.1 L1195 313.5 L1194.9 311.9 L1194.8 310.2 L1194.6 308.6 L1194.5 307 L1194.3 305.4 L1194.1 303.7 L1193.8 302.1 L1193.6 300.5 L1193.3 298.8 L1193 297.2 L1192.7 295.6 L1192.3 294 L1192 292.3 L1191.6 290.7 L1191.2 289.1 L1190.7 287.5 L1190.3 285.8 L1189.8 284.2 L1189.3 282.6 L1188.8 280.9 L1188.2 279.3 L1187.7 277.7 L1187.1 276.1 L1186.5 274.4 L1185.8 272.8 L1185.2 271.2 L1184.5 269.6 L1183.8 267.9 L1183.1 266.3 L1182.4 264.7 L1181.6 263 L1180.8 261.4 L1180 259.8 L1179.2 258.2 L1178.4 256.5 L1177.5 254.9 L1176.6 253.3 L1175.7 251.7 L1174.8 250 L1173.8 248.4 L1172.9 246.8 L1171.9 245.1 L1170.9 243.5 L1169.8 241.9 L1168.8 240.3 L1167.7 238.6 L1166.6 237 L1165.5 235.4 L1164.4 233.8 L1163.2 232.1 L1162.1 230.5 L1160.9 228.9 L1159.7 227.2 L1158.4 225.6 L1157.2 224 L1155.9 222.4 L1154.6 220.7 L1153.3 219.1 L1152 217.5 L1150.7 215.8 L1149.3 214.2 L1147.9 212.6 L1146.5 211 L1145.1 209.3 L1143.7 207.7 L1142.2 206.1 L1140.7 204.5 L1139.2 202.8 L1137.7 201.2 L1136.2 199.6 L1134.6 197.9 L1133.1 196.3 L1131.5 194.7 L1129.9 193.1 L1128.3 191.4 L1126.6 189.8 L1125 188.2 L1123.3 186.6 L1121.6 184.9 L1119.9 183.3 L1118.2 181.7 L1116.5 180 L1114.7 178.4 L1113 176.8 L1111.2 175.2 L1109.4 173.5 L1107.6 171.9 L1105.7 170.3 L1103.9 168.7 L1102 167 L1100.1 165.4 L1098.3 163.8 L1096.3 162.1 L1094.4 160.5 L1092.5 158.9 L1090.5 157.3 L1088.6 155.6 L1086.6 154 L1084.6 152.4 L1082.6 150.8 L1080.6 149.1 L1078.5 147.5 L1076.5 145.9 L1074.4 144.2 L1072.4 142.6 L1070.3 141 L1068.2 139.4 L1066.1 137.7 L1063.9 136.1 L1061.8 134.5 L1059.6 132.9 L1057.5 131.2 L1055.3 129.6 L1053.1 128 L1050.9 126.3 L1048.7 124.7 L1046.5 123.1 L1044.3 121.5 L1042 119.8 L1039.8 118.2 L1037.5 116.6 L1035.2 115 L1033 113.3 L1030.7 111.7 L1028.4 110.1 L1026 108.4 L1023.7 106.8 L1021.4 105.2 L1019.1 103.6 L1016.7 101.9 L1014.3 100.3 L1012 98.7 L1009.6 97.1 L1007.2 95.4 L1004.8 93.8 L1002.4 92.2 L1000 90.5 L997.6 88.9 L995.2 87.3 L992.8 85.7 L990.3 84 L987.9 82.4 L985.4 80.8 L983 79.2 L980.5 77.5 L978.1 75.9 L975.6 74.3 L973.1 72.6 L970.6 71 L968.1 69.4 L965.7 67.8 L963.2 66.1 L960.6 64.5 L958.1 62.9 L955.6 61.3 L953.1 59.6 L950.6 58 L948.1 56.4 L945.5 54.7 L943 53.1 L940.5 51.5 L937.9 49.9 L935.4 48.2 L932.9 46.6 L930.3 45 L927.8 43.4 L925.2 41.7 L922.7 40.1 L920.1 38.5 L917.6 36.8 L915 35.2 L912.5 33.6 L909.9 32 L907.4 30.3 L904.8 28.7 L902.2 27.1 M902.2 612.9 L904.4 611.3 L906.5 609.7 L908.6 608 L910.8 606.4 L912.9 604.8 L915 603.2 L917.2 601.5 L919.3 599.9 L921.4 598.3 L923.5 596.6 L925.6 595 L927.8 593.4 L929.9 591.8 L932 590.1 L934.1 588.5 L936.2 586.9 L938.3 585.3 L940.4 583.6 L942.5 582 L944.6 580.4 L946.7 578.7 L948.8 577.1 L950.9 575.5 L953 573.9 L955.1 572.2 L957.2 570.6 L959.2 569 L961.3 567.4 L963.4 565.7 L965.4 564.1 L967.5 562.5 L969.5 560.8 L971.6 559.2 L973.6 557.6 L975.7 556 L977.7 554.3 L979.7 552.7 L981.7 551.1 L983.7 549.5 L985.7 547.8 L987.7 546.2 L989.7 544.6 L991.7 542.9 L993.7 541.3 L995.7 539.7 L997.6 538.1 L999.6 536.4 L1001.5 534.8 L1003.5 533.2 L1005.4 531.6 L1007.3 529.9 L1009.3 528.3 L1011.2 526.7 L1013.1 525 L1015 523.4 L1016.8 521.8 L1018.7 520.2 L1020.6 518.5 L1022.5 516.9 L1024.3 515.3 L1026.1 513.7 L1028 512 L1029.8 510.4 L1031.6 508.8 L1033.4 507.1 L1035.2 505.5 L1037 503.9 L1038.8 502.3 L1040.5 500.6 L1042.3 499 L1044 497.4 L1045.7 495.8 L1047.4 494.1 L1049.2 492.5 L1050.9 490.9 L1052.5 489.2 L1054.2 487.6 L1055.9 486 L1057.5 484.4 L1059.2 482.7 L1060.8 481.1 L1062.4 479.5 L1064 477.9 L1065.6 476.2 L1067.2 474.6 L1068.7 473 L1070.3 471.3 L1071.8 469.7 L1073.3 468.1 L1074.9 466.5 L1076.4 464.8 L1077.8 463.2 L1079.3 461.6 L1080.8 460 L1082.2 458.3 L1083.7 456.7 L1085.1 455.1 L1086.5 453.4 L1087.9 451.8 L1089.2 450.2 L1090.6 448.6 L1092 446.9 L1093.3 445.3 L1094.6 443.7 L1095.9 442.1 L1097.2 440.4 L1098.5 438.8 L1099.7 437.2 L1101 435.5 L1102.2 433.9 L1103.4 432.3 L1104.6 430.7 L1105.8 429 L1107 427.4 L1108.1 425.8 L1109.3 424.2 L1110.4 422.5 L1111.5 420.9 L1112.6 419.3 L1113.6 417.6 L1114.7 416 L1115.7 414.4 L1116.8 412.8 L1117.8 411.1 L1118.8 409.5 L1119.7 407.9 L1120.7 406.2 L1121.6 404.6 L1122.6 403 L1123.5 401.4 L1124.4 399.7 L1125.2 398.1 L1126.1 396.5 L1126.9 394.9 L1127.8 393.2 L1128.6 391.6 L1129.4 390 L1130.1 388.3 L1130.9 386.7 L1131.6 385.1 L1132.4 383.5 L1133.1 381.8 L1133.7 380.2 L1134.4 378.6 L1135.1 377 L1135.7 375.3 L1136.3 373.7 L1136.9 372.1 L1137.5 370.4 L1138 368.8 L1138.6 367.2 L1139.1 365.6 L1139.6 363.9 L1140.1 362.3 L1140.6 360.7 L1141 359.1 L1141.5 357.4 L1141.9 355.8 L1142.3 354.2 L1142.6 352.5 L1143 350.9 L1143.3 349.3 L1143.7 347.7 L1144 346 L1144.3 344.4 L1144.5 342.8 L1144.8 341.2 L1145 339.5 L1145.2 337.9 L1145.4 336.3 L1145.6 334.6 L1145.8 333 L1145.9 331.4 L1146 329.8 L1146.1 328.1 L1146.2 326.5 L1146.3 324.9 L1146.3 323.3 L1146.3 321.6 L1146.4 320 L1146.3 318.4 L1146.3 316.7 L1146.3 315.1 L1146.2 313.5 L1146.1 311.9 L1146 310.2 L1145.9 308.6 L1145.8 307 L1145.6 305.4 L1145.4 303.7 L1145.2 302.1 L1145 300.5 L1144.8 298.8 L1144.5 297.2 L1144.3 295.6 L1144 294 L1143.7 292.3 L1143.3 290.7 L1143 289.1 L1142.6 287.5 L1142.3 285.8 L1141.9 284.2 L1141.5 282.6 L1141 280.9 L1140.6 279.3 L1140.1 277.7 L1139.6 276.1 L1139.1 274.4 L1138.6 272.8 L1138 271.2 L1137.5 269.6 L1136.9 267.9 L1136.3 266.3 L1135.7 264.7 L1135.1 263 L1134.4 261.4 L1133.7 259.8 L1133.1 258.2 L1132.4 256.5 L1131.6 254.9 L1130.9 253.3 L1130.1 251.7 L1129.4 250 L1128.6 248.4 L1127.8 246.8 L1126.9 245.1 L1126.1 243.5 L1125.2 241.9 L1124.4 240.3 L1123.5 238.6 L1122.6 237 L1121.6 235.4 L1120.7 233.8 L1119.7 232.1 L1118.8 230.5 L1117.8 228.9 L1116.8 227.2 L1115.7 225.6 L1114.7 224 L1113.6 222.4 L1112.6 220.7 L1111.5 219.1 L1110.4 217.5 L1109.3 215.8 L1108.1 214.2 L1107 212.6 L1105.8 211 L1104.6 209.3 L1103.4 207.7 L1102.2 206.1 L1101 204.5 L1099.7 202.8 L1098.5 201.2 L1097.2 199.6 L1095.9 197.9 L1094.6 196.3 L1093.3 194.7 L1092 193.1 L1090.6 191.4 L1089.2 189.8 L1087.9 188.2 L1086.5 186.6 L1085.1 184.9 L1083.7 183.3 L1082.2 181.7 L1080.8 180 L1079.3 178.4 L1077.8 176.8 L1076.4 175.2 L1074.9 173.5 L1073.3 171.9 L1071.8 170.3 L1070.3 168.7 L1068.7 167 L1067.2 165.4 L1065.6 163.8 L1064 162.1 L1062.4 160.5 L1060.8 158.9 L1059.2 157.3 L1057.5 155.6 L1055.9 154 L1054.2 152.4 L1052.5 150.8 L1050.9 149.1 L1049.2 147.5 L1047.4 145.9 L1045.7 144.2 L1044 142.6 L1042.3 141 L1040.5 139.4 L1038.8 137.7 L1037 136.1 L1035.2 134.5 L1033.4 132.9 L1031.6 131.2 L1029.8 129.6 L1028 128 L1026.1 126.3 L1024.3 124.7 L1022.5 123.1 L1020.6 121.5 L1018.7 119.8 L1016.8 118.2 L1015 116.6 L1013.1 115 L1011.2 113.3 L1009.3 111.7 L1007.3 110.1 L1005.4 108.4 L1003.5 106.8 L1001.5 105.2 L999.6 103.6 L997.6 101.9 L995.7 100.3 L993.7 98.7 L991.7 97.1 L989.7 95.4 L987.7 93.8 L985.7 92.2 L983.7 90.5 L981.7 88.9 L979.7 87.3 L977.7 85.7 L975.7 84 L973.6 82.4 L971.6 80.8 L969.5 79.2 L967.5 77.5 L965.4 75.9 L963.4 74.3 L961.3 72.6 L959.2 71 L957.2 69.4 L955.1 67.8 L953 66.1 L950.9 64.5 L948.8 62.9 L946.7 61.3 L944.6 59.6 L942.5 58 L940.4 56.4 L938.3 54.7 L936.2 53.1 L934.1 51.5 L932 49.9 L929.9 48.2 L927.8 46.6 L925.6 45 L923.5 43.4 L921.4 41.7 L919.3 40.1 L917.2 38.5 L915 36.8 L912.9 35.2 L910.8 33.6 L908.6 32 L906.5 30.3 L904.4 28.7 L902.2 27.1 M902.2 612.9 L904 611.3 L905.7 609.7 L907.4 608 L909.1 606.4 L910.8 604.8 L912.5 603.2 L914.2 601.5 L915.9 599.9 L917.6 598.3 L919.3 596.6 L921 595 L922.7 593.4 L924.4 591.8 L926 590.1 L927.7 588.5 L929.4 586.9 L931.1 585.3 L932.8 583.6 L934.5 582 L936.2 580.4 L937.8 578.7 L939.5 577.1 L941.2 575.5 L942.9 573.9 L944.5 572.2 L946.2 570.6 L947.8 569 L949.5 567.4 L951.1 565.7 L952.8 564.1 L954.4 562.5 L956.1 560.8 L957.7 559.2 L959.3 557.6 L961 556 L962.6 554.3 L964.2 552.7 L965.8 551.1 L967.4 549.5 L969 547.8 L970.6 546.2 L972.2 544.6 L973.8 542.9 L975.4 541.3 L977 539.7 L978.6 538.1 L980.1 536.4 L981.7 534.8 L983.2 533.2 L984.8 531.6 L986.3 529.9 L987.9 528.3 L989.4 526.7 L990.9 525 L992.4 523.4 L993.9 521.8 L995.4 520.2 L996.9 518.5 L998.4 516.9 L999.9 515.3 L1001.4 513.7 L1002.8 512 L1004.3 510.4 L1005.7 508.8 L1007.2 507.1 L1008.6 505.5 L1010 503.9 L1011.5 502.3 L1012.9 500.6 L1014.3 499 L1015.7 497.4 L1017 495.8 L1018.4 494.1 L1019.8 492.5 L1021.1 490.9 L1022.5 489.2 L1023.8 487.6 L1025.1 486 L1026.5 484.4 L1027.8 482.7 L1029.1 481.1 L1030.4 479.5 L1031.6 477.9 L1032.9 476.2 L1034.2 474.6 L1035.4 473 L1036.7 471.3 L1037.9 469.7 L1039.1 468.1 L1040.3 466.5 L1041.5 464.8 L1042.7 463.2 L1043.9 461.6 L1045.1 460 L1046.2 458.3 L1047.4 456.7 L1048.5 455.1 L1049.6 453.4 L1050.7 451.8 L1051.8 450.2 L1052.9 448.6 L1054 446.9 L1055.1 445.3 L1056.1 443.7 L1057.2 442.1 L1058.2 440.4 L1059.2 438.8 L1060.2 437.2 L1061.2 435.5 L1062.2 433.9 L1063.2 432.3 L1064.1 430.7 L1065.1 429 L1066 427.4 L1066.9 425.8 L1067.9 424.2 L1068.8 422.5 L1069.6 420.9 L1070.5 419.3 L1071.4 417.6 L1072.2 416 L1073 414.4 L1073.9 412.8 L1074.7 411.1 L1075.5 409.5 L1076.2 407.9 L1077 406.2 L1077.8 404.6 L1078.5 403 L1079.2 401.4 L1079.9 399.7 L1080.6 398.1 L1081.3 396.5 L1082 394.9 L1082.7 393.2 L1083.3 391.6 L1083.9 390 L1084.6 388.3 L1085.2 386.7 L1085.8 385.1 L1086.3 383.5 L1086.9 381.8 L1087.4 380.2 L1088 378.6 L1088.5 377 L1089 375.3 L1089.5 373.7 L1090 372.1 L1090.4 370.4 L1090.9 368.8 L1091.3 367.2 L1091.7 365.6 L1092.1 363.9 L1092.5 362.3 L1092.9 360.7 L1093.3 359.1 L1093.6 357.4 L1093.9 355.8 L1094.3 354.2 L1094.6 352.5 L1094.9 350.9 L1095.1 349.3 L1095.4 347.7 L1095.6 346 L1095.9 344.4 L1096.1 342.8 L1096.3 341.2 L1096.5 339.5 L1096.6 337.9 L1096.8 336.3 L1096.9 334.6 L1097.1 333 L1097.2 331.4 L1097.3 329.8 L1097.3 328.1 L1097.4 326.5 L1097.5 324.9 L1097.5 323.3 L1097.5 321.6 L1097.5 320 L1097.5 318.4 L1097.5 316.7 L1097.5 315.1 L1097.4 313.5 L1097.3 311.9 L1097.3 310.2 L1097.2 308.6 L1097.1 307 L1096.9 305.4 L1096.8 303.7 L1096.6 302.1 L1096.5 300.5 L1096.3 298.8 L1096.1 297.2 L1095.9 295.6 L1095.6 294 L1095.4 292.3 L1095.1 290.7 L1094.9 289.1 L1094.6 287.5 L1094.3 285.8 L1093.9 284.2 L1093.6 282.6 L1093.3 280.9 L1092.9 279.3 L1092.5 277.7 L1092.1 276.1 L1091.7 274.4 L1091.3 272.8 L1090.9 271.2 L1090.4 269.6 L1090 267.9 L1089.5 266.3 L1089 264.7 L1088.5 263 L1088 261.4 L1087.4 259.8 L1086.9 258.2 L1086.3 256.5 L1085.8 254.9 L1085.2 253.3 L1084.6 251.7 L1083.9 250 L1083.3 248.4 L1082.7 246.8 L1082 245.1 L1081.3 243.5 L1080.6 241.9 L1079.9 240.3 L1079.2 238.6 L1078.5 237 L1077.8 235.4 L1077 233.8 L1076.2 232.1 L1075.5 230.5 L1074.7 228.9 L1073.9 227.2 L1073 225.6 L1072.2 224 L1071.4 222.4 L1070.5 220.7 L1069.6 219.1 L1068.8 217.5 L1067.9 215.8 L1066.9 214.2 L1066 212.6 L1065.1 211 L1064.1 209.3 L1063.2 207.7 L1062.2 206.1 L1061.2 204.5 L1060.2 202.8 L1059.2 201.2 L1058.2 199.6 L1057.2 197.9 L1056.1 196.3 L1055.1 194.7 L1054 193.1 L1052.9 191.4 L1051.8 189.8 L1050.7 188.2 L1049.6 186.6 L1048.5 184.9 L1047.4 183.3 L1046.2 181.7 L1045.1 180 L1043.9 178.4 L1042.7 176.8 L1041.5 175.2 L1040.3 173.5 L1039.1 171.9 L1037.9 170.3 L1036.7 168.7 L1035.4 167 L1034.2 165.4 L1032.9 163.8 L1031.6 162.1 L1030.4 160.5 L1029.1 158.9 L1027.8 157.3 L1026.5 155.6 L1025.1 154 L1023.8 152.4 L1022.5 150.8 L1021.1 149.1 L1019.8 147.5 L1018.4 145.9 L1017 144.2 L1015.7 142.6 L1014.3 141 L1012.9 139.4 L1011.5 137.7 L1010 136.1 L1008.6 134.5 L1007.2 132.9 L1005.7 131.2 L1004.3 129.6 L1002.8 128 L1001.4 126.3 L999.9 124.7 L998.4 123.1 L996.9 121.5 L995.4 119.8 L993.9 118.2 L992.4 116.6 L990.9 115 L989.4 113.3 L987.9 111.7 L986.3 110.1 L984.8 108.4 L983.2 106.8 L981.7 105.2 L980.1 103.6 L978.6 101.9 L977 100.3 L975.4 98.7 L973.8 97.1 L972.2 95.4 L970.6 93.8 L969 92.2 L967.4 90.5 L965.8 88.9 L964.2 87.3 L962.6 85.7 L961 84 L959.3 82.4 L957.7 80.8 L956.1 79.2 L954.4 77.5 L952.8 75.9 L951.1 74.3 L949.5 72.6 L947.8 71 L946.2 69.4 L944.5 67.8 L942.9 66.1 L941.2 64.5 L939.5 62.9 L937.8 61.3 L936.2 59.6 L934.5 58 L932.8 56.4 L931.1 54.7 L929.4 53.1 L927.7 51.5 L926 49.9 L924.4 48.2 L922.7 46.6 L921 45 L919.3 43.4 L917.6 41.7 L915.9 40.1 L914.2 38.5 L912.5 36.8 L910.8 35.2 L909.1 33.6 L907.4 32 L905.7 30.3 L904 28.7 L902.2 27.1 M902.2 612.9 L903.5 611.3 L904.8 609.7 L906.1 608 L907.4 606.4 L908.6 604.8 L909.9 603.2 L911.2 601.5 L912.5 599.9 L913.7 598.3 L915 596.6 L916.3 595 L917.6 593.4 L918.8 591.8 L920.1 590.1 L921.4 588.5 L922.6 586.9 L923.9 585.3 L925.2 583.6 L926.4 582 L927.7 580.4 L928.9 578.7 L930.2 577.1 L931.4 575.5 L932.7 573.9 L934 572.2 L935.2 570.6 L936.4 569 L937.7 567.4 L938.9 565.7 L940.2 564.1 L941.4 562.5 L942.6 560.8 L943.8 559.2 L945.1 557.6 L946.3 556 L947.5 554.3 L948.7 552.7 L949.9 551.1 L951.1 549.5 L952.3 547.8 L953.5 546.2 L954.7 544.6 L955.9 542.9 L957.1 541.3 L958.3 539.7 L959.5 538.1 L960.7 536.4 L961.8 534.8 L963 533.2 L964.1 531.6 L965.3 529.9 L966.5 528.3 L967.6 526.7 L968.7 525 L969.9 523.4 L971 521.8 L972.1 520.2 L973.3 518.5 L974.4 516.9 L975.5 515.3 L976.6 513.7 L977.7 512 L978.8 510.4 L979.9 508.8 L980.9 507.1 L982 505.5 L983.1 503.9 L984.2 502.3 L985.2 500.6 L986.3 499 L987.3 497.4 L988.3 495.8 L989.4 494.1 L990.4 492.5 L991.4 490.9 L992.4 489.2 L993.4 487.6 L994.4 486 L995.4 484.4 L996.4 482.7 L997.4 481.1 L998.3 479.5 L999.3 477.9 L1000.3 476.2 L1001.2 474.6 L1002.1 473 L1003.1 471.3 L1004 469.7 L1004.9 468.1 L1005.8 466.5 L1006.7 464.8 L1007.6 463.2 L1008.5 461.6 L1009.4 460 L1010.2 458.3 L1011.1 456.7 L1011.9 455.1 L1012.8 453.4 L1013.6 451.8 L1014.4 450.2 L1015.3 448.6 L1016.1 446.9 L1016.9 445.3 L1017.7 443.7 L1018.4 442.1 L1019.2 440.4 L1020 438.8 L1020.7 437.2 L1021.5 435.5 L1022.2 433.9 L1023 432.3 L1023.7 430.7 L1024.4 429 L1025.1 427.4 L1025.8 425.8 L1026.5 424.2 L1027.1 422.5 L1027.8 420.9 L1028.4 419.3 L1029.1 417.6 L1029.7 416 L1030.3 414.4 L1031 412.8 L1031.6 411.1 L1032.2 409.5 L1032.7 407.9 L1033.3 406.2 L1033.9 404.6 L1034.4 403 L1035 401.4 L1035.5 399.7 L1036 398.1 L1036.6 396.5 L1037.1 394.9 L1037.6 393.2 L1038 391.6 L1038.5 390 L1039 388.3 L1039.4 386.7 L1039.9 385.1 L1040.3 383.5 L1040.7 381.8 L1041.1 380.2 L1041.5 378.6 L1041.9 377 L1042.3 375.3 L1042.7 373.7 L1043 372.1 L1043.4 370.4 L1043.7 368.8 L1044 367.2 L1044.4 365.6 L1044.7 363.9 L1045 362.3 L1045.2 360.7 L1045.5 359.1 L1045.8 357.4 L1046 355.8 L1046.3 354.2 L1046.5 352.5 L1046.7 350.9 L1046.9 349.3 L1047.1 347.7 L1047.3 346 L1047.5 344.4 L1047.6 342.8 L1047.8 341.2 L1047.9 339.5 L1048 337.9 L1048.2 336.3 L1048.3 334.6 L1048.4 333 L1048.4 331.4 L1048.5 329.8 L1048.6 328.1 L1048.6 326.5 L1048.7 324.9 L1048.7 323.3 L1048.7 321.6 L1048.7 320 L1048.7 318.4 L1048.7 316.7 L1048.7 315.1 L1048.6 313.5 L1048.6 311.9 L1048.5 310.2 L1048.4 308.6 L1048.4 307 L1048.3 305.4 L1048.2 303.7 L1048 302.1 L1047.9 300.5 L1047.8 298.8 L1047.6 297.2 L1047.5 295.6 L1047.3 294 L1047.1 292.3 L1046.9 290.7 L1046.7 289.1 L1046.5 287.5 L1046.3 285.8 L1046 284.2 L1045.8 282.6 L1045.5 280.9 L1045.2 279.3 L1045 277.7 L1044.7 276.1 L1044.4 274.4 L1044 272.8 L1043.7 271.2 L1043.4 269.6 L1043 267.9 L1042.7 266.3 L1042.3 264.7 L1041.9 263 L1041.5 261.4 L1041.1 259.8 L1040.7 258.2 L1040.3 256.5 L1039.9 254.9 L1039.4 253.3 L1039 251.7 L1038.5 250 L1038 248.4 L1037.6 246.8 L1037.1 245.1 L1036.6 243.5 L1036 241.9 L1035.5 240.3 L1035 238.6 L1034.4 237 L1033.9 235.4 L1033.3 233.8 L1032.7 232.1 L1032.2 230.5 L1031.6 228.9 L1031 227.2 L1030.3 225.6 L1029.7 224 L1029.1 222.4 L1028.4 220.7 L1027.8 219.1 L1027.1 217.5 L1026.5 215.8 L1025.8 214.2 L1025.1 212.6 L1024.4 211 L1023.7 209.3 L1023 207.7 L1022.2 206.1 L1021.5 204.5 L1020.7 202.8 L1020 201.2 L1019.2 199.6 L1018.4 197.9 L1017.7 196.3 L1016.9 194.7 L1016.1 193.1 L1015.3 191.4 L1014.4 189.8 L1013.6 188.2 L1012.8 186.6 L1011.9 184.9 L1011.1 183.3 L1010.2 181.7 L1009.4 180 L1008.5 178.4 L1007.6 176.8 L1006.7 175.2 L1005.8 173.5 L1004.9 171.9 L1004 170.3 L1003.1 168.7 L1002.1 167 L1001.2 165.4 L1000.3 163.8 L999.3 162.1 L998.3 160.5 L997.4 158.9 L996.4 157.3 L995.4 155.6 L994.4 154 L993.4 152.4 L992.4 150.8 L991.4 149.1 L990.4 147.5 L989.4 145.9 L988.3 144.2 L987.3 142.6 L986.3 141 L985.2 139.4 L984.2 137.7 L983.1 136.1 L982 134.5 L980.9 132.9 L979.9 131.2 L978.8 129.6 L977.7 128 L976.6 126.3 L975.5 124.7 L974.4 123.1 L973.3 121.5 L972.1 119.8 L971 118.2 L969.9 116.6 L968.7 115 L967.6 113.3 L966.5 111.7 L965.3 110.1 L964.1 108.4 L963 106.8 L961.8 105.2 L960.7 103.6 L959.5 101.9 L958.3 100.3 L957.1 98.7 L955.9 97.1 L954.7 95.4 L953.5 93.8 L952.3 92.2 L951.1 90.5 L949.9 88.9 L948.7 87.3 L947.5 85.7 L946.3 84 L945.1 82.4 L943.8 80.8 L942.6 79.2 L941.4 77.5 L940.2 75.9 L938.9 74.3 L937.7 72.6 L936.4 71 L935.2 69.4 L934 67.8 L932.7 66.1 L931.4 64.5 L930.2 62.9 L928.9 61.3 L927.7 59.6 L926.4 58 L925.2 56.4 L923.9 54.7 L922.6 53.1 L921.4 51.5 L920.1 49.9 L918.8 48.2 L917.6 46.6 L916.3 45 L915 43.4 L913.7 41.7 L912.5 40.1 L911.2 38.5 L909.9 36.8 L908.6 35.2 L907.4 33.6 L906.1 32 L904.8 30.3 L903.5 28.7 L902.2 27.1 M902.2 612.9 L903.1 611.3 L904 609.7 L904.8 608 L905.7 606.4 L906.5 604.8 L907.4 603.2 L908.2 601.5 L909.1 599.9 L909.9 598.3 L910.8 596.6 L911.6 595 L912.5 593.4 L913.3 591.8 L914.1 590.1 L915 588.5 L915.8 586.9 L916.7 585.3 L917.5 583.6 L918.4 582 L919.2 580.4 L920 578.7 L920.9 577.1 L921.7 575.5 L922.6 573.9 L923.4 572.2 L924.2 570.6 L925 569 L925.9 567.4 L926.7 565.7 L927.5 564.1 L928.3 562.5 L929.2 560.8 L930 559.2 L930.8 557.6 L931.6 556 L932.4 554.3 L933.2 552.7 L934 551.1 L934.8 549.5 L935.6 547.8 L936.4 546.2 L937.2 544.6 L938 542.9 L938.8 541.3 L939.6 539.7 L940.4 538.1 L941.2 536.4 L942 534.8 L942.7 533.2 L943.5 531.6 L944.3 529.9 L945.1 528.3 L945.8 526.7 L946.6 525 L947.3 523.4 L948.1 521.8 L948.8 520.2 L949.6 518.5 L950.3 516.9 L951.1 515.3 L951.8 513.7 L952.5 512 L953.3 510.4 L954 508.8 L954.7 507.1 L955.4 505.5 L956.1 503.9 L956.9 502.3 L957.6 500.6 L958.3 499 L959 497.4 L959.6 495.8 L960.3 494.1 L961 492.5 L961.7 490.9 L962.4 489.2 L963 487.6 L963.7 486 L964.4 484.4 L965 482.7 L965.7 481.1 L966.3 479.5 L966.9 477.9 L967.6 476.2 L968.2 474.6 L968.8 473 L969.5 471.3 L970.1 469.7 L970.7 468.1 L971.3 466.5 L971.9 464.8 L972.5 463.2 L973.1 461.6 L973.7 460 L974.2 458.3 L974.8 456.7 L975.4 455.1 L975.9 453.4 L976.5 451.8 L977 450.2 L977.6 448.6 L978.1 446.9 L978.7 445.3 L979.2 443.7 L979.7 442.1 L980.2 440.4 L980.7 438.8 L981.2 437.2 L981.7 435.5 L982.2 433.9 L982.7 432.3 L983.2 430.7 L983.7 429 L984.1 427.4 L984.6 425.8 L985.1 424.2 L985.5 422.5 L985.9 420.9 L986.4 419.3 L986.8 417.6 L987.2 416 L987.6 414.4 L988.1 412.8 L988.5 411.1 L988.9 409.5 L989.2 407.9 L989.6 406.2 L990 404.6 L990.4 403 L990.7 401.4 L991.1 399.7 L991.4 398.1 L991.8 396.5 L992.1 394.9 L992.5 393.2 L992.8 391.6 L993.1 390 L993.4 388.3 L993.7 386.7 L994 385.1 L994.3 383.5 L994.6 381.8 L994.8 380.2 L995.1 378.6 L995.4 377 L995.6 375.3 L995.9 373.7 L996.1 372.1 L996.3 370.4 L996.6 368.8 L996.8 367.2 L997 365.6 L997.2 363.9 L997.4 362.3 L997.6 360.7 L997.8 359.1 L997.9 357.4 L998.1 355.8 L998.3 354.2 L998.4 352.5 L998.6 350.9 L998.7 349.3 L998.8 347.7 L998.9 346 L999.1 344.4 L999.2 342.8 L999.3 341.2 L999.4 339.5 L999.4 337.9 L999.5 336.3 L999.6 334.6 L999.7 333 L999.7 331.4 L999.8 329.8 L999.8 328.1 L999.8 326.5 L999.9 324.9 L999.9 323.3 L999.9 321.6 L999.9 320 L999.9 318.4 L999.9 316.7 L999.9 315.1 L999.8 313.5 L999.8 311.9 L999.8 310.2 L999.7 308.6 L999.7 307 L999.6 305.4 L999.5 303.7 L999.4 302.1 L999.4 300.5 L999.3 298.8 L999.2 297.2 L999.1 295.6 L998.9 294 L998.8 292.3 L998.7 290.7 L998.6 289.1 L998.4 287.5 L998.3 285.8 L998.1 284.2 L997.9 282.6 L997.8 280.9 L997.6 279.3 L997.4 277.7 L997.2 276.1 L997 274.4 L996.8 272.8 L996.6 271.2 L996.3 269.6 L996.1 267.9 L995.9 266.3 L995.6 264.7 L995.4 263 L995.1 261.4 L994.8 259.8 L994.6 258.2 L994.3 256.5 L994 254.9 L993.7 253.3 L993.4 251.7 L993.1 250 L992.8 248.4 L992.5 246.8 L992.1 245.1 L991.8 243.5 L991.4 241.9 L991.1 240.3 L990.7 238.6 L990.4 237 L990 235.4 L989.6 233.8 L989.2 232.1 L988.9 230.5 L988.5 228.9 L988.1 227.2 L987.6 225.6 L987.2 224 L986.8 222.4 L986.4 220.7 L985.9 219.1 L985.5 217.5 L985.1 215.8 L984.6 214.2 L984.1 212.6 L983.7 211 L983.2 209.3 L982.7 207.7 L982.2 206.1 L981.7 204.5 L981.2 202.8 L980.7 201.2 L980.2 199.6 L979.7 197.9 L979.2 196.3 L978.7 194.7 L978.1 193.1 L977.6 191.4 L977 189.8 L976.5 188.2 L975.9 186.6 L975.4 184.9 L974.8 183.3 L974.2 181.7 L973.7 180 L973.1 178.4 L972.5 176.8 L971.9 175.2 L971.3 173.5 L970.7 171.9 L970.1 170.3 L969.5 168.7 L968.8 167 L968.2 165.4 L967.6 163.8 L966.9 162.1 L966.3 160.5 L965.7 158.9 L965 157.3 L964.4 155.6 L963.7 154 L963 152.4 L962.4 150.8 L961.7 149.1 L961 147.5 L960.3 145.9 L959.6 144.2 L959 142.6 L958.3 141 L957.6 139.4 L956.9 137.7 L956.1 136.1 L955.4 134.5 L954.7 132.9 L954 131.2 L953.3 129.6 L952.5 128 L951.8 126.3 L951.1 124.7 L950.3 123.1 L949.6 121.5 L948.8 119.8 L948.1 118.2 L947.3 116.6 L946.6 115 L945.8 113.3 L945.1 111.7 L944.3 110.1 L943.5 108.4 L942.7 106.8 L942 105.2 L941.2 103.6 L940.4 101.9 L939.6 100.3 L938.8 98.7 L938 97.1 L937.2 95.4 L936.4 93.8 L935.6 92.2 L934.8 90.5 L934 88.9 L933.2 87.3 L932.4 85.7 L931.6 84 L930.8 82.4 L930 80.8 L929.2 79.2 L928.3 77.5 L927.5 75.9 L926.7 74.3 L925.9 72.6 L925 71 L924.2 69.4 L923.4 67.8 L922.6 66.1 L921.7 64.5 L920.9 62.9 L920 61.3 L919.2 59.6 L918.4 58 L917.5 56.4 L916.7 54.7 L915.8 53.1 L915 51.5 L914.1 49.9 L913.3 48.2 L912.5 46.6 L911.6 45 L910.8 43.4 L909.9 41.7 L909.1 40.1 L908.2 38.5 L907.4 36.8 L906.5 35.2 L905.7 33.6 L904.8 32 L904 30.3 L903.1 28.7 L902.2 27.1 M902.2 612.9 L902.7 611.3 L903.1 609.7 L903.5 608 L904 606.4 L904.4 604.8 L904.8 603.2 L905.2 601.5 L905.7 599.9 L906.1 598.3 L906.5 596.6 L906.9 595 L907.4 593.4 L907.8 591.8 L908.2 590.1 L908.6 588.5 L909 586.9 L909.5 585.3 L909.9 583.6 L910.3 582 L910.7 580.4 L911.1 578.7 L911.6 577.1 L912 575.5 L912.4 573.9 L912.8 572.2 L913.2 570.6 L913.6 569 L914.1 567.4 L914.5 565.7 L914.9 564.1 L915.3 562.5 L915.7 560.8 L916.1 559.2 L916.5 557.6 L916.9 556 L917.3 554.3 L917.7 552.7 L918.1 551.1 L918.5 549.5 L918.9 547.8 L919.3 546.2 L919.7 544.6 L920.1 542.9 L920.5 541.3 L920.9 539.7 L921.3 538.1 L921.7 536.4 L922.1 534.8 L922.5 533.2 L922.9 531.6 L923.3 529.9 L923.7 528.3 L924 526.7 L924.4 525 L924.8 523.4 L925.2 521.8 L925.5 520.2 L925.9 518.5 L926.3 516.9 L926.7 515.3 L927 513.7 L927.4 512 L927.8 510.4 L928.1 508.8 L928.5 507.1 L928.8 505.5 L929.2 503.9 L929.6 502.3 L929.9 500.6 L930.3 499 L930.6 497.4 L930.9 495.8 L931.3 494.1 L931.6 492.5 L932 490.9 L932.3 489.2 L932.6 487.6 L933 486 L933.3 484.4 L933.6 482.7 L934 481.1 L934.3 479.5 L934.6 477.9 L934.9 476.2 L935.2 474.6 L935.5 473 L935.9 471.3 L936.2 469.7 L936.5 468.1 L936.8 466.5 L937.1 464.8 L937.4 463.2 L937.7 461.6 L938 460 L938.2 458.3 L938.5 456.7 L938.8 455.1 L939.1 453.4 L939.4 451.8 L939.6 450.2 L939.9 448.6 L940.2 446.9 L940.5 445.3 L940.7 443.7 L941 442.1 L941.2 440.4 L941.5 438.8 L941.7 437.2 L942 435.5 L942.2 433.9 L942.5 432.3 L942.7 430.7 L943 429 L943.2 427.4 L943.4 425.8 L943.7 424.2 L943.9 422.5 L944.1 420.9 L944.3 419.3 L944.5 417.6 L944.7 416 L944.9 414.4 L945.2 412.8 L945.4 411.1 L945.6 409.5 L945.7 407.9 L945.9 406.2 L946.1 404.6 L946.3 403 L946.5 401.4 L946.7 399.7 L946.8 398.1 L947 396.5 L947.2 394.9 L947.4 393.2 L947.5 391.6 L947.7 390 L947.8 388.3 L948 386.7 L948.1 385.1 L948.3 383.5 L948.4 381.8 L948.5 380.2 L948.7 378.6 L948.8 377 L948.9 375.3 L949.1 373.7 L949.2 372.1 L949.3 370.4 L949.4 368.8 L949.5 367.2 L949.6 365.6 L949.7 363.9 L949.8 362.3 L949.9 360.7 L950 359.1 L950.1 357.4 L950.2 355.8 L950.3 354.2 L950.3 352.5 L950.4 350.9 L950.5 349.3 L950.5 347.7 L950.6 346 L950.7 344.4 L950.7 342.8 L950.8 341.2 L950.8 339.5 L950.8 337.9 L950.9 336.3 L950.9 334.6 L951 333 L951 331.4 L951 329.8 L951 328.1 L951 326.5 L951.1 324.9 L951.1 323.3 L951.1 321.6 L951.1 320 L951.1 318.4 L951.1 316.7 L951.1 315.1 L951 313.5 L951 311.9 L951 310.2 L951 308.6 L951 307 L950.9 305.4 L950.9 303.7 L950.8 302.1 L950.8 300.5 L950.8 298.8 L950.7 297.2 L950.7 295.6 L950.6 294 L950.5 292.3 L950.5 290.7 L950.4 289.1 L950.3 287.5 L950.3 285.8 L950.2 284.2 L950.1 282.6 L950 280.9 L949.9 279.3 L949.8 277.7 L949.7 276.1 L949.6 274.4 L949.5 272.8 L949.4 271.2 L949.3 269.6 L949.2 267.9 L949.1 266.3 L948.9 264.7 L948.8 263 L948.7 261.4 L948.5 259.8 L948.4 258.2 L948.3 256.5 L948.1 254.9 L948 253.3 L947.8 251.7 L947.7 250 L947.5 248.4 L947.4 246.8 L947.2 245.1 L947 243.5 L946.8 241.9 L946.7 240.3 L946.5 238.6 L946.3 237 L946.1 235.4 L945.9 233.8 L945.7 232.1 L945.6 230.5 L945.4 228.9 L945.2 227.2 L944.9 225.6 L944.7 224 L944.5 222.4 L944.3 220.7 L944.1 219.1 L943.9 217.5 L943.7 215.8 L943.4 214.2 L943.2 212.6 L943 211 L942.7 209.3 L942.5 207.7 L942.2 206.1 L942 204.5 L941.7 202.8 L941.5 201.2 L941.2 199.6 L941 197.9 L940.7 196.3 L940.5 194.7 L940.2 193.1 L939.9 191.4 L939.6 189.8 L939.4 188.2 L939.1 186.6 L938.8 184.9 L938.5 183.3 L938.2 181.7 L938 180 L937.7 178.4 L937.4 176.8 L937.1 175.2 L936.8 173.5 L936.5 171.9 L936.2 170.3 L935.9 168.7 L935.5 167 L935.2 165.4 L934.9 163.8 L934.6 162.1 L934.3 160.5 L934 158.9 L933.6 157.3 L933.3 155.6 L933 154 L932.6 152.4 L932.3 150.8 L932 149.1 L931.6 147.5 L931.3 145.9 L930.9 144.2 L930.6 142.6 L930.3 141 L929.9 139.4 L929.6 137.7 L929.2 136.1 L928.8 134.5 L928.5 132.9 L928.1 131.2 L927.8 129.6 L927.4 128 L927 126.3 L926.7 124.7 L926.3 123.1 L925.9 121.5 L925.5 119.8 L925.2 118.2 L924.8 116.6 L924.4 115 L924 113.3 L923.7 111.7 L923.3 110.1 L922.9 108.4 L922.5 106.8 L922.1 105.2 L921.7 103.6 L921.3 101.9 L920.9 100.3 L920.5 98.7 L920.1 97.1 L919.7 95.4 L919.3 93.8 L918.9 92.2 L918.5 90.5 L918.1 88.9 L917.7 87.3 L917.3 85.7 L916.9 84 L916.5 82.4 L916.1 80.8 L915.7 79.2 L915.3 77.5 L914.9 75.9 L914.5 74.3 L914.1 72.6 L913.6 71 L913.2 69.4 L912.8 67.8 L912.4 66.1 L912 64.5 L911.6 62.9 L911.1 61.3 L910.7 59.6 L910.3 58 L909.9 56.4 L909.5 54.7 L909 53.1 L908.6 51.5 L908.2 49.9 L907.8 48.2 L907.4 46.6 L906.9 45 L906.5 43.4 L906.1 41.7 L905.7 40.1 L905.2 38.5 L904.8 36.8 L904.4 35.2 L904 33.6 L903.5 32 L903.1 30.3 L902.7 28.7 L902.2 27.1 M902.2 612.9 L902.2 611.3 L902.2 609.7 L902.2 608 L902.2 606.4 L902.2 604.8 L902.2 603.2 L902.2 601.5 L902.2 599.9 L902.2 598.3 L902.2 596.6 L902.2 595 L902.2 593.4 L902.2 591.8 L902.2 590.1 L902.2 588.5 L902.2 586.9 L902.2 585.3 L902.2 583.6 L902.2 582 L902.2 580.4 L902.2 578.7 L902.2 577.1 L902.2 575.5 L902.2 573.9 L902.2 572.2 L902.2 570.6 L902.2 569 L902.2 567.4 L902.2 565.7 L902.2 564.1 L902.2 562.5 L902.2 560.8 L902.2 559.2 L902.2 557.6 L902.2 556 L902.2 554.3 L902.2 552.7 L902.2 551.1 L902.2 549.5 L902.2 547.8 L902.2 546.2 L902.2 544.6 L902.2 542.9 L902.2 541.3 L902.2 539.7 L902.2 538.1 L902.2 536.4 L902.2 534.8 L902.2 533.2 L902.2 531.6 L902.2 529.9 L902.2 528.3 L902.2 526.7 L902.2 525 L902.2 523.4 L902.2 521.8 L902.2 520.2 L902.2 518.5 L902.2 516.9 L902.2 515.3 L902.2 513.7 L902.2 512 L902.2 510.4 L902.2 508.8 L902.2 507.1 L902.2 505.5 L902.2 503.9 L902.2 502.3 L902.2 500.6 L902.2 499 L902.2 497.4 L902.2 495.8 L902.2 494.1 L902.2 492.5 L902.2 490.9 L902.2 489.2 L902.2 487.6 L902.2 486 L902.2 484.4 L902.2 482.7 L902.2 481.1 L902.2 479.5 L902.2 477.9 L902.2 476.2 L902.2 474.6 L902.2 473 L902.2 471.3 L902.2 469.7 L902.2 468.1 L902.2 466.5 L902.2 464.8 L902.2 463.2 L902.2 461.6 L902.2 460 L902.2 458.3 L902.2 456.7 L902.2 455.1 L902.2 453.4 L902.2 451.8 L902.2 450.2 L902.2 448.6 L902.2 446.9 L902.2 445.3 L902.2 443.7 L902.2 442.1 L902.2 440.4 L902.2 438.8 L902.2 437.2 L902.2 435.5 L902.2 433.9 L902.2 432.3 L902.2 430.7 L902.2 429 L902.2 427.4 L902.2 425.8 L902.2 424.2 L902.2 422.5 L902.2 420.9 L902.2 419.3 L902.2 417.6 L902.2 416 L902.2 414.4 L902.2 412.8 L902.2 411.1 L902.2 409.5 L902.2 407.9 L902.2 406.2 L902.2 404.6 L902.2 403 L902.2 401.4 L902.2 399.7 L902.2 398.1 L902.2 396.5 L902.2 394.9 L902.2 393.2 L902.2 391.6 L902.2 390 L902.2 388.3 L902.2 386.7 L902.2 385.1 L902.2 383.5 L902.2 381.8 L902.2 380.2 L902.2 378.6 L902.2 377 L902.2 375.3 L902.2 373.7 L902.2 372.1 L902.2 370.4 L902.2 368.8 L902.2 367.2 L902.2 365.6 L902.2 363.9 L902.2 362.3 L902.2 360.7 L902.2 359.1 L902.2 357.4 L902.2 355.8 L902.2 354.2 L902.2 352.5 L902.2 350.9 L902.2 349.3 L902.2 347.7 L902.2 346 L902.2 344.4 L902.2 342.8 L902.2 341.2 L902.2 339.5 L902.2 337.9 L902.2 336.3 L902.2 334.6 L902.2 333 L902.2 331.4 L902.2 329.8 L902.2 328.1 L902.2 326.5 L902.2 324.9 L902.2 323.3 L902.2 321.6 L902.2 320 L902.2 318.4 L902.2 316.7 L902.2 315.1 L902.2 313.5 L902.2 311.9 L902.2 310.2 L902.2 308.6 L902.2 307 L902.2 305.4 L902.2 303.7 L902.2 302.1 L902.2 300.5 L902.2 298.8 L902.2 297.2 L902.2 295.6 L902.2 294 L902.2 292.3 L902.2 290.7 L902.2 289.1 L902.2 287.5 L902.2 285.8 L902.2 284.2 L902.2 282.6 L902.2 280.9 L902.2 279.3 L902.2 277.7 L902.2 276.1 L902.2 274.4 L902.2 272.8 L902.2 271.2 L902.2 269.6 L902.2 267.9 L902.2 266.3 L902.2 264.7 L902.2 263 L902.2 261.4 L902.2 259.8 L902.2 258.2 L902.2 256.5 L902.2 254.9 L902.2 253.3 L902.2 251.7 L902.2 250 L902.2 248.4 L902.2 246.8 L902.2 245.1 L902.2 243.5 L902.2 241.9 L902.2 240.3 L902.2 238.6 L902.2 237 L902.2 235.4 L902.2 233.8 L902.2 232.1 L902.2 230.5 L902.2 228.9 L902.2 227.2 L902.2 225.6 L902.2 224 L902.2 222.4 L902.2 220.7 L902.2 219.1 L902.2 217.5 L902.2 215.8 L902.2 214.2 L902.2 212.6 L902.2 211 L902.2 209.3 L902.2 207.7 L902.2 206.1 L902.2 204.5 L902.2 202.8 L902.2 201.2 L902.2 199.6 L902.2 197.9 L902.2 196.3 L902.2 194.7 L902.2 193.1 L902.2 191.4 L902.2 189.8 L902.2 188.2 L902.2 186.6 L902.2 184.9 L902.2 183.3 L902.2 181.7 L902.2 180 L902.2 178.4 L902.2 176.8 L902.2 175.2 L902.2 173.5 L902.2 171.9 L902.2 170.3 L902.2 168.7 L902.2 167 L902.2 165.4 L902.2 163.8 L902.2 162.1 L902.2 160.5 L902.2 158.9 L902.2 157.3 L902.2 155.6 L902.2 154 L902.2 152.4 L902.2 150.8 L902.2 149.1 L902.2 147.5 L902.2 145.9 L902.2 144.2 L902.2 142.6 L902.2 141 L902.2 139.4 L902.2 137.7 L902.2 136.1 L902.2 134.5 L902.2 132.9 L902.2 131.2 L902.2 129.6 L902.2 128 L902.2 126.3 L902.2 124.7 L902.2 123.1 L902.2 121.5 L902.2 119.8 L902.2 118.2 L902.2 116.6 L902.2 115 L902.2 113.3 L902.2 111.7 L902.2 110.1 L902.2 108.4 L902.2 106.8 L902.2 105.2 L902.2 103.6 L902.2 101.9 L902.2 100.3 L902.2 98.7 L902.2 97.1 L902.2 95.4 L902.2 93.8 L902.2 92.2 L902.2 90.5 L902.2 88.9 L902.2 87.3 L902.2 85.7 L902.2 84 L902.2 82.4 L902.2 80.8 L902.2 79.2 L902.2 77.5 L902.2 75.9 L902.2 74.3 L902.2 72.6 L902.2 71 L902.2 69.4 L902.2 67.8 L902.2 66.1 L902.2 64.5 L902.2 62.9 L902.2 61.3 L902.2 59.6 L902.2 58 L902.2 56.4 L902.2 54.7 L902.2 53.1 L902.2 51.5 L902.2 49.9 L902.2 48.2 L902.2 46.6 L902.2 45 L902.2 43.4 L902.2 41.7 L902.2 40.1 L902.2 38.5 L902.2 36.8 L902.2 35.2 L902.2 33.6 L902.2 32 L902.2 30.3 L902.2 28.7 L902.2 27.1 M902.2 612.9 L901.8 611.3 L901.4 609.7 L901 608 L900.5 606.4 L900.1 604.8 L899.7 603.2 L899.3 601.5 L898.8 599.9 L898.4 598.3 L898 596.6 L897.6 595 L897.1 593.4 L896.7 591.8 L896.3 590.1 L895.9 588.5 L895.5 586.9 L895 585.3 L894.6 583.6 L894.2 582 L893.8 580.4 L893.4 578.7 L892.9 577.1 L892.5 575.5 L892.1 573.9 L891.7 572.2 L891.3 570.6 L890.9 569 L890.4 567.4 L890 565.7 L889.6 564.1 L889.2 562.5 L888.8 560.8 L888.4 559.2 L888 557.6 L887.6 556 L887.2 554.3 L886.8 552.7 L886.4 551.1 L886 549.5 L885.6 547.8 L885.2 546.2 L884.8 544.6 L884.4 542.9 L884 541.3 L883.6 539.7 L883.2 538.1 L882.8 536.4 L882.4 534.8 L882 533.2 L881.6 531.6 L881.2 529.9 L880.8 528.3 L880.5 526.7 L880.1 525 L879.7 523.4 L879.3 521.8 L879 520.2 L878.6 518.5 L878.2 516.9 L877.8 515.3 L877.5 513.7 L877.1 512 L876.7 510.4 L876.4 508.8 L876 507.1 L875.7 505.5 L875.3 503.9 L874.9 502.3 L874.6 500.6 L874.2 499 L873.9 497.4 L873.6 495.8 L873.2 494.1 L872.9 492.5 L872.5 490.9 L872.2 489.2 L871.9 487.6 L871.5 486 L871.2 484.4 L870.9 482.7 L870.5 481.1 L870.2 479.5 L869.9 477.9 L869.6 476.2 L869.3 474.6 L869 473 L868.6 471.3 L868.3 469.7 L868 468.1 L867.7 466.5 L867.4 464.8 L867.1 463.2 L866.8 461.6 L866.5 460 L866.3 458.3 L866 456.7 L865.7 455.1 L865.4 453.4 L865.1 451.8 L864.9 450.2 L864.6 448.6 L864.3 446.9 L864 445.3 L863.8 443.7 L863.5 442.1 L863.3 440.4 L863 438.8 L862.8 437.2 L862.5 435.5 L862.3 433.9 L862 432.3 L861.8 430.7 L861.5 429 L861.3 427.4 L861.1 425.8 L860.8 424.2 L860.6 422.5 L860.4 420.9 L860.2 419.3 L860 417.6 L859.8 416 L859.6 414.4 L859.3 412.8 L859.1 411.1 L858.9 409.5 L858.8 407.9 L858.6 406.2 L858.4 404.6 L858.2 403 L858 401.4 L857.8 399.7 L857.7 398.1 L857.5 396.5 L857.3 394.9 L857.1 393.2 L857 391.6 L856.8 390 L856.7 388.3 L856.5 386.7 L856.4 385.1 L856.2 383.5 L856.1 381.8 L856 380.2 L855.8 378.6 L855.7 377 L855.6 375.3 L855.4 373.7 L855.3 372.1 L855.2 370.4 L855.1 368.8 L855 367.2 L854.9 365.6 L854.8 363.9 L854.7 362.3 L854.6 360.7 L854.5 359.1 L854.4 357.4 L854.3 355.8 L854.2 354.2 L854.2 352.5 L854.1 350.9 L854 349.3 L854 347.7 L853.9 346 L853.8 344.4 L853.8 342.8 L853.7 341.2 L853.7 339.5 L853.7 337.9 L853.6 336.3 L853.6 334.6 L853.5 333 L853.5 331.4 L853.5 329.8 L853.5 328.1 L853.5 326.5 L853.4 324.9 L853.4 323.3 L853.4 321.6 L853.4 320 L853.4 318.4 L853.4 316.7 L853.4 315.1 L853.5 313.5 L853.5 311.9 L853.5 310.2 L853.5 308.6 L853.5 307 L853.6 305.4 L853.6 303.7 L853.7 302.1 L853.7 300.5 L853.7 298.8 L853.8 297.2 L853.8 295.6 L853.9 294 L854 292.3 L854 290.7 L854.1 289.1 L854.2 287.5 L854.2 285.8 L854.3 284.2 L854.4 282.6 L854.5 280.9 L854.6 279.3 L854.7 277.7 L854.8 276.1 L854.9 274.4 L855 272.8 L855.1 271.2 L855.2 269.6 L855.3 267.9 L855.4 266.3 L855.6 264.7 L855.7 263 L855.8 261.4 L856 259.8 L856.1 258.2 L856.2 256.5 L856.4 254.9 L856.5 253.3 L856.7 251.7 L856.8 250 L857 248.4 L857.1 246.8 L857.3 245.1 L857.5 243.5 L857.7 241.9 L857.8 240.3 L858 238.6 L858.2 237 L858.4 235.4 L858.6 233.8 L858.8 232.1 L858.9 230.5 L859.1 228.9 L859.3 227.2 L859.6 225.6 L859.8 224 L860 222.4 L860.2 220.7 L860.4 219.1 L860.6 217.5 L860.8 215.8 L861.1 214.2 L861.3 212.6 L861.5 211 L861.8 209.3 L862 207.7 L862.3 206.1 L862.5 204.5 L862.8 202.8 L863 201.2 L863.3 199.6 L863.5 197.9 L863.8 196.3 L864 194.7 L864.3 193.1 L864.6 191.4 L864.9 189.8 L865.1 188.2 L865.4 186.6 L865.7 184.9 L866 183.3 L866.3 181.7 L866.5 180 L866.8 178.4 L867.1 176.8 L867.4 175.2 L867.7 173.5 L868 171.9 L868.3 170.3 L868.6 168.7 L869 167 L869.3 165.4 L869.6 163.8 L869.9 162.1 L870.2 160.5 L870.5 158.9 L870.9 157.3 L871.2 155.6 L871.5 154 L871.9 152.4 L872.2 150.8 L872.5 149.1 L872.9 147.5 L873.2 145.9 L873.6 144.2 L873.9 142.6 L874.2 141 L874.6 139.4 L874.9 137.7 L875.3 136.1 L875.7 134.5 L876 132.9 L876.4 131.2 L876.7 129.6 L877.1 128 L877.5 126.3 L877.8 124.7 L878.2 123.1 L878.6 121.5 L879 119.8 L879.3 118.2 L879.7 116.6 L880.1 115 L880.5 113.3 L880.8 111.7 L881.2 110.1 L881.6 108.4 L882 106.8 L882.4 105.2 L882.8 103.6 L883.2 101.9 L883.6 100.3 L884 98.7 L884.4 97.1 L884.8 95.4 L885.2 93.8 L885.6 92.2 L886 90.5 L886.4 88.9 L886.8 87.3 L887.2 85.7 L887.6 84 L888 82.4 L888.4 80.8 L888.8 79.2 L889.2 77.5 L889.6 75.9 L890 74.3 L890.4 72.6 L890.9 71 L891.3 69.4 L891.7 67.8 L892.1 66.1 L892.5 64.5 L892.9 62.9 L893.4 61.3 L893.8 59.6 L894.2 58 L894.6 56.4 L895 54.7 L895.5 53.1 L895.9 51.5 L896.3 49.9 L896.7 48.2 L897.1 46.6 L897.6 45 L898 43.4 L898.4 41.7 L898.8 40.1 L899.3 38.5 L899.7 36.8 L900.1 35.2 L900.5 33.6 L901 32 L901.4 30.3 L901.8 28.7 L902.2 27.1 M902.2 612.9 L901.4 611.3 L900.5 609.7 L899.7 608 L898.8 606.4 L898 604.8 L897.1 603.2 L896.3 601.5 L895.4 599.9 L894.6 598.3 L893.7 596.6 L892.9 595 L892 593.4 L891.2 591.8 L890.4 590.1 L889.5 588.5 L888.7 586.9 L887.8 585.3 L887 583.6 L886.1 582 L885.3 580.4 L884.5 578.7 L883.6 577.1 L882.8 575.5 L881.9 573.9 L881.1 572.2 L880.3 570.6 L879.5 569 L878.6 567.4 L877.8 565.7 L877 564.1 L876.2 562.5 L875.3 560.8 L874.5 559.2 L873.7 557.6 L872.9 556 L872.1 554.3 L871.3 552.7 L870.5 551.1 L869.7 549.5 L868.9 547.8 L868.1 546.2 L867.3 544.6 L866.5 542.9 L865.7 541.3 L864.9 539.7 L864.1 538.1 L863.3 536.4 L862.5 534.8 L861.8 533.2 L861 531.6 L860.2 529.9 L859.4 528.3 L858.7 526.7 L857.9 525 L857.2 523.4 L856.4 521.8 L855.7 520.2 L854.9 518.5 L854.2 516.9 L853.4 515.3 L852.7 513.7 L852 512 L851.2 510.4 L850.5 508.8 L849.8 507.1 L849.1 505.5 L848.4 503.9 L847.6 502.3 L846.9 500.6 L846.2 499 L845.5 497.4 L844.9 495.8 L844.2 494.1 L843.5 492.5 L842.8 490.9 L842.1 489.2 L841.5 487.6 L840.8 486 L840.1 484.4 L839.5 482.7 L838.8 481.1 L838.2 479.5 L837.6 477.9 L836.9 476.2 L836.3 474.6 L835.7 473 L835 471.3 L834.4 469.7 L833.8 468.1 L833.2 466.5 L832.6 464.8 L832 463.2 L831.4 461.6 L830.8 460 L830.3 458.3 L829.7 456.7 L829.1 455.1 L828.6 453.4 L828 451.8 L827.5 450.2 L826.9 448.6 L826.4 446.9 L825.8 445.3 L825.3 443.7 L824.8 442.1 L824.3 440.4 L823.8 438.8 L823.3 437.2 L822.8 435.5 L822.3 433.9 L821.8 432.3 L821.3 430.7 L820.8 429 L820.4 427.4 L819.9 425.8 L819.4 424.2 L819 422.5 L818.6 420.9 L818.1 419.3 L817.7 417.6 L817.3 416 L816.9 414.4 L816.4 412.8 L816 411.1 L815.6 409.5 L815.3 407.9 L814.9 406.2 L814.5 404.6 L814.1 403 L813.8 401.4 L813.4 399.7 L813.1 398.1 L812.7 396.5 L812.4 394.9 L812 393.2 L811.7 391.6 L811.4 390 L811.1 388.3 L810.8 386.7 L810.5 385.1 L810.2 383.5 L809.9 381.8 L809.7 380.2 L809.4 378.6 L809.1 377 L808.9 375.3 L808.6 373.7 L808.4 372.1 L808.2 370.4 L807.9 368.8 L807.7 367.2 L807.5 365.6 L807.3 363.9 L807.1 362.3 L806.9 360.7 L806.7 359.1 L806.6 357.4 L806.4 355.8 L806.2 354.2 L806.1 352.5 L805.9 350.9 L805.8 349.3 L805.7 347.7 L805.6 346 L805.4 344.4 L805.3 342.8 L805.2 341.2 L805.1 339.5 L805.1 337.9 L805 336.3 L804.9 334.6 L804.8 333 L804.8 331.4 L804.7 329.8 L804.7 328.1 L804.7 326.5 L804.6 324.9 L804.6 323.3 L804.6 321.6 L804.6 320 L804.6 318.4 L804.6 316.7 L804.6 315.1 L804.7 313.5 L804.7 311.9 L804.7 310.2 L804.8 308.6 L804.8 307 L804.9 305.4 L805 303.7 L805.1 302.1 L805.1 300.5 L805.2 298.8 L805.3 297.2 L805.4 295.6 L805.6 294 L805.7 292.3 L805.8 290.7 L805.9 289.1 L806.1 287.5 L806.2 285.8 L806.4 284.2 L806.6 282.6 L806.7 280.9 L806.9 279.3 L807.1 277.7 L807.3 276.1 L807.5 274.4 L807.7 272.8 L807.9 271.2 L808.2 269.6 L808.4 267.9 L808.6 266.3 L808.9 264.7 L809.1 263 L809.4 261.4 L809.7 259.8 L809.9 258.2 L810.2 256.5 L810.5 254.9 L810.8 253.3 L811.1 251.7 L811.4 250 L811.7 248.4 L812 246.8 L812.4 245.1 L812.7 243.5 L813.1 241.9 L813.4 240.3 L813.8 238.6 L814.1 237 L814.5 235.4 L814.9 233.8 L815.3 232.1 L815.6 230.5 L816 228.9 L816.4 227.2 L816.9 225.6 L817.3 224 L817.7 222.4 L818.1 220.7 L818.6 219.1 L819 217.5 L819.4 215.8 L819.9 214.2 L820.4 212.6 L820.8 211 L821.3 209.3 L821.8 207.7 L822.3 206.1 L822.8 204.5 L823.3 202.8 L823.8 201.2 L824.3 199.6 L824.8 197.9 L825.3 196.3 L825.8 194.7 L826.4 193.1 L826.9 191.4 L827.5 189.8 L828 188.2 L828.6 186.6 L829.1 184.9 L829.7 183.3 L830.3 181.7 L830.8 180 L831.4 178.4 L832 176.8 L832.6 175.2 L833.2 173.5 L833.8 171.9 L834.4 170.3 L835 168.7 L835.7 167 L836.3 165.4 L836.9 163.8 L837.6 162.1 L838.2 160.5 L838.8 158.9 L839.5 157.3 L840.1 155.6 L840.8 154 L841.5 152.4 L842.1 150.8 L842.8 149.1 L843.5 147.5 L844.2 145.9 L844.9 144.2 L845.5 142.6 L846.2 141 L846.9 139.4 L847.6 137.7 L848.4 136.1 L849.1 134.5 L849.8 132.9 L850.5 131.2 L851.2 129.6 L852 128 L852.7 126.3 L853.4 124.7 L854.2 123.1 L854.9 121.5 L855.7 119.8 L856.4 118.2 L857.2 116.6 L857.9 115 L858.7 113.3 L859.4 111.7 L860.2 110.1 L861 108.4 L861.8 106.8 L862.5 105.2 L863.3 103.6 L864.1 101.9 L864.9 100.3 L865.7 98.7 L866.5 97.1 L867.3 95.4 L868.1 93.8 L868.9 92.2 L869.7 90.5 L870.5 88.9 L871.3 87.3 L872.1 85.7 L872.9 84 L873.7 82.4 L874.5 80.8 L875.3 79.2 L876.2 77.5 L877 75.9 L877.8 74.3 L878.6 72.6 L879.5 71 L880.3 69.4 L881.1 67.8 L881.9 66.1 L882.8 64.5 L883.6 62.9 L884.5 61.3 L885.3 59.6 L886.1 58 L887 56.4 L887.8 54.7 L888.7 53.1 L889.5 51.5 L890.4 49.9 L891.2 48.2 L892 46.6 L892.9 45 L893.7 43.4 L894.6 41.7 L895.4 40.1 L896.3 38.5 L897.1 36.8 L898 35.2 L898.8 33.6 L899.7 32 L900.5 30.3 L901.4 28.7 L902.2 27.1 M902.2 612.9 L901 611.3 L899.7 609.7 L898.4 608 L897.1 606.4 L895.9 604.8 L894.6 603.2 L893.3 601.5 L892 599.9 L890.8 598.3 L889.5 596.6 L888.2 595 L886.9 593.4 L885.7 591.8 L884.4 590.1 L883.1 588.5 L881.9 586.9 L880.6 585.3 L879.3 583.6 L878.1 582 L876.8 580.4 L875.6 578.7 L874.3 577.1 L873.1 575.5 L871.8 573.9 L870.5 572.2 L869.3 570.6 L868.1 569 L866.8 567.4 L865.6 565.7 L864.3 564.1 L863.1 562.5 L861.9 560.8 L860.7 559.2 L859.4 557.6 L858.2 556 L857 554.3 L855.8 552.7 L854.6 551.1 L853.4 549.5 L852.2 547.8 L851 546.2 L849.8 544.6 L848.6 542.9 L847.4 541.3 L846.2 539.7 L845 538.1 L843.8 536.4 L842.7 534.8 L841.5 533.2 L840.4 531.6 L839.2 529.9 L838 528.3 L836.9 526.7 L835.8 525 L834.6 523.4 L833.5 521.8 L832.4 520.2 L831.2 518.5 L830.1 516.9 L829 515.3 L827.9 513.7 L826.8 512 L825.7 510.4 L824.6 508.8 L823.6 507.1 L822.5 505.5 L821.4 503.9 L820.3 502.3 L819.3 500.6 L818.2 499 L817.2 497.4 L816.2 495.8 L815.1 494.1 L814.1 492.5 L813.1 490.9 L812.1 489.2 L811.1 487.6 L810.1 486 L809.1 484.4 L808.1 482.7 L807.1 481.1 L806.2 479.5 L805.2 477.9 L804.2 476.2 L803.3 474.6 L802.4 473 L801.4 471.3 L800.5 469.7 L799.6 468.1 L798.7 466.5 L797.8 464.8 L796.9 463.2 L796 461.6 L795.1 460 L794.3 458.3 L793.4 456.7 L792.6 455.1 L791.7 453.4 L790.9 451.8 L790.1 450.2 L789.2 448.6 L788.4 446.9 L787.6 445.3 L786.8 443.7 L786.1 442.1 L785.3 440.4 L784.5 438.8 L783.8 437.2 L783 435.5 L782.3 433.9 L781.5 432.3 L780.8 430.7 L780.1 429 L779.4 427.4 L778.7 425.8 L778 424.2 L777.4 422.5 L776.7 420.9 L776.1 419.3 L775.4 417.6 L774.8 416 L774.2 414.4 L773.5 412.8 L772.9 411.1 L772.3 409.5 L771.8 407.9 L771.2 406.2 L770.6 404.6 L770.1 403 L769.5 401.4 L769 399.7 L768.5 398.1 L767.9 396.5 L767.4 394.9 L766.9 393.2 L766.5 391.6 L766 390 L765.5 388.3 L765.1 386.7 L764.6 385.1 L764.2 383.5 L763.8 381.8 L763.4 380.2 L763 378.6 L762.6 377 L762.2 375.3 L761.8 373.7 L761.5 372.1 L761.1 370.4 L760.8 368.8 L760.5 367.2 L760.1 365.6 L759.8 363.9 L759.5 362.3 L759.3 360.7 L759 359.1 L758.7 357.4 L758.5 355.8 L758.2 354.2 L758 352.5 L757.8 350.9 L757.6 349.3 L757.4 347.7 L757.2 346 L757 344.4 L756.9 342.8 L756.7 341.2 L756.6 339.5 L756.5 337.9 L756.3 336.3 L756.2 334.6 L756.1 333 L756.1 331.4 L756 329.8 L755.9 328.1 L755.9 326.5 L755.8 324.9 L755.8 323.3 L755.8 321.6 L755.8 320 L755.8 318.4 L755.8 316.7 L755.8 315.1 L755.9 313.5 L755.9 311.9 L756 310.2 L756.1 308.6 L756.1 307 L756.2 305.4 L756.3 303.7 L756.5 302.1 L756.6 300.5 L756.7 298.8 L756.9 297.2 L757 295.6 L757.2 294 L757.4 292.3 L757.6 290.7 L757.8 289.1 L758 287.5 L758.2 285.8 L758.5 284.2 L758.7 282.6 L759 280.9 L759.3 279.3 L759.5 277.7 L759.8 276.1 L760.1 274.4 L760.5 272.8 L760.8 271.2 L761.1 269.6 L761.5 267.9 L761.8 266.3 L762.2 264.7 L762.6 263 L763 261.4 L763.4 259.8 L763.8 258.2 L764.2 256.5 L764.6 254.9 L765.1 253.3 L765.5 251.7 L766 250 L766.5 248.4 L766.9 246.8 L767.4 245.1 L767.9 243.5 L768.5 241.9 L769 240.3 L769.5 238.6 L770.1 237 L770.6 235.4 L771.2 233.8 L771.8 232.1 L772.3 230.5 L772.9 228.9 L773.5 227.2 L774.2 225.6 L774.8 224 L775.4 222.4 L776.1 220.7 L776.7 219.1 L777.4 217.5 L778 215.8 L778.7 214.2 L779.4 212.6 L780.1 211 L780.8 209.3 L781.5 207.7 L782.3 206.1 L783 204.5 L783.8 202.8 L784.5 201.2 L785.3 199.6 L786.1 197.9 L786.8 196.3 L787.6 194.7 L788.4 193.1 L789.2 191.4 L790.1 189.8 L790.9 188.2 L791.7 186.6 L792.6 184.9 L793.4 183.3 L794.3 181.7 L795.1 180 L796 178.4 L796.9 176.8 L797.8 175.2 L798.7 173.5 L799.6 171.9 L800.5 170.3 L801.4 168.7 L802.4 167 L803.3 165.4 L804.2 163.8 L805.2 162.1 L806.2 160.5 L807.1 158.9 L808.1 157.3 L809.1 155.6 L810.1 154 L811.1 152.4 L812.1 150.8 L813.1 149.1 L814.1 147.5 L815.1 145.9 L816.2 144.2 L817.2 142.6 L818.2 141 L819.3 139.4 L820.3 137.7 L821.4 136.1 L822.5 134.5 L823.6 132.9 L824.6 131.2 L825.7 129.6 L826.8 128 L827.9 126.3 L829 124.7 L830.1 123.1 L831.2 121.5 L832.4 119.8 L833.5 118.2 L834.6 116.6 L835.8 115 L836.9 113.3 L838 111.7 L839.2 110.1 L840.4 108.4 L841.5 106.8 L842.7 105.2 L843.8 103.6 L845 101.9 L846.2 100.3 L847.4 98.7 L848.6 97.1 L849.8 95.4 L851 93.8 L852.2 92.2 L853.4 90.5 L854.6 88.9 L855.8 87.3 L857 85.7 L858.2 84 L859.4 82.4 L860.7 80.8 L861.9 79.2 L863.1 77.5 L864.3 75.9 L865.6 74.3 L866.8 72.6 L868.1 71 L869.3 69.4 L870.5 67.8 L871.8 66.1 L873.1 64.5 L874.3 62.9 L875.6 61.3 L876.8 59.6 L878.1 58 L879.3 56.4 L880.6 54.7 L881.9 53.1 L883.1 51.5 L884.4 49.9 L885.7 48.2 L886.9 46.6 L888.2 45 L889.5 43.4 L890.8 41.7 L892 40.1 L893.3 38.5 L894.6 36.8 L895.9 35.2 L897.1 33.6 L898.4 32 L899.7 30.3 L901 28.7 L902.2 27.1 M902.2 612.9 L900.5 611.3 L898.8 609.7 L897.1 608 L895.4 606.4 L893.7 604.8 L892 603.2 L890.3 601.5 L888.6 599.9 L886.9 598.3 L885.2 596.6 L883.5 595 L881.8 593.4 L880.1 591.8 L878.5 590.1 L876.8 588.5 L875.1 586.9 L873.4 585.3 L871.7 583.6 L870 582 L868.3 580.4 L866.7 578.7 L865 577.1 L863.3 575.5 L861.6 573.9 L860 572.2 L858.3 570.6 L856.7 569 L855 567.4 L853.4 565.7 L851.7 564.1 L850.1 562.5 L848.4 560.8 L846.8 559.2 L845.2 557.6 L843.5 556 L841.9 554.3 L840.3 552.7 L838.7 551.1 L837.1 549.5 L835.5 547.8 L833.9 546.2 L832.3 544.6 L830.7 542.9 L829.1 541.3 L827.5 539.7 L825.9 538.1 L824.4 536.4 L822.8 534.8 L821.3 533.2 L819.7 531.6 L818.2 529.9 L816.6 528.3 L815.1 526.7 L813.6 525 L812.1 523.4 L810.6 521.8 L809.1 520.2 L807.6 518.5 L806.1 516.9 L804.6 515.3 L803.1 513.7 L801.7 512 L800.2 510.4 L798.8 508.8 L797.3 507.1 L795.9 505.5 L794.5 503.9 L793 502.3 L791.6 500.6 L790.2 499 L788.8 497.4 L787.5 495.8 L786.1 494.1 L784.7 492.5 L783.4 490.9 L782 489.2 L780.7 487.6 L779.4 486 L778 484.4 L776.7 482.7 L775.4 481.1 L774.1 479.5 L772.9 477.9 L771.6 476.2 L770.3 474.6 L769.1 473 L767.8 471.3 L766.6 469.7 L765.4 468.1 L764.2 466.5 L763 464.8 L761.8 463.2 L760.6 461.6 L759.4 460 L758.3 458.3 L757.1 456.7 L756 455.1 L754.9 453.4 L753.8 451.8 L752.7 450.2 L751.6 448.6 L750.5 446.9 L749.4 445.3 L748.4 443.7 L747.3 442.1 L746.3 440.4 L745.3 438.8 L744.3 437.2 L743.3 435.5 L742.3 433.9 L741.3 432.3 L740.4 430.7 L739.4 429 L738.5 427.4 L737.6 425.8 L736.6 424.2 L735.7 422.5 L734.9 420.9 L734 419.3 L733.1 417.6 L732.3 416 L731.5 414.4 L730.6 412.8 L729.8 411.1 L729 409.5 L728.3 407.9 L727.5 406.2 L726.7 404.6 L726 403 L725.3 401.4 L724.6 399.7 L723.9 398.1 L723.2 396.5 L722.5 394.9 L721.8 393.2 L721.2 391.6 L720.6 390 L719.9 388.3 L719.3 386.7 L718.7 385.1 L718.2 383.5 L717.6 381.8 L717.1 380.2 L716.5 378.6 L716 377 L715.5 375.3 L715 373.7 L714.5 372.1 L714.1 370.4 L713.6 368.8 L713.2 367.2 L712.8 365.6 L712.4 363.9 L712 362.3 L711.6 360.7 L711.2 359.1 L710.9 357.4 L710.6 355.8 L710.2 354.2 L709.9 352.5 L709.6 350.9 L709.4 349.3 L709.1 347.7 L708.9 346 L708.6 344.4 L708.4 342.8 L708.2 341.2 L708 339.5 L707.9 337.9 L707.7 336.3 L707.6 334.6 L707.4 333 L707.3 331.4 L707.2 329.8 L707.2 328.1 L707.1 326.5 L707 324.9 L707 323.3 L707 321.6 L707 320 L707 318.4 L707 316.7 L707 315.1 L707.1 313.5 L707.2 311.9 L707.2 310.2 L707.3 308.6 L707.4 307 L707.6 305.4 L707.7 303.7 L707.9 302.1 L708 300.5 L708.2 298.8 L708.4 297.2 L708.6 295.6 L708.9 294 L709.1 292.3 L709.4 290.7 L709.6 289.1 L709.9 287.5 L710.2 285.8 L710.6 284.2 L710.9 282.6 L711.2 280.9 L711.6 279.3 L712 277.7 L712.4 276.1 L712.8 274.4 L713.2 272.8 L713.6 271.2 L714.1 269.6 L714.5 267.9 L715 266.3 L715.5 264.7 L716 263 L716.5 261.4 L717.1 259.8 L717.6 258.2 L718.2 256.5 L718.7 254.9 L719.3 253.3 L719.9 251.7 L720.6 250 L721.2 248.4 L721.8 246.8 L722.5 245.1 L723.2 243.5 L723.9 241.9 L724.6 240.3 L725.3 238.6 L726 237 L726.7 235.4 L727.5 233.8 L728.3 232.1 L729 230.5 L729.8 228.9 L730.6 227.2 L731.5 225.6 L732.3 224 L733.1 222.4 L734 220.7 L734.9 219.1 L735.7 217.5 L736.6 215.8 L737.6 214.2 L738.5 212.6 L739.4 211 L740.4 209.3 L741.3 207.7 L742.3 206.1 L743.3 204.5 L744.3 202.8 L745.3 201.2 L746.3 199.6 L747.3 197.9 L748.4 196.3 L749.4 194.7 L750.5 193.1 L751.6 191.4 L752.7 189.8 L753.8 188.2 L754.9 186.6 L756 184.9 L757.1 183.3 L758.3 181.7 L759.4 180 L760.6 178.4 L761.8 176.8 L763 175.2 L764.2 173.5 L765.4 171.9 L766.6 170.3 L767.8 168.7 L769.1 167 L770.3 165.4 L771.6 163.8 L772.9 162.1 L774.1 160.5 L775.4 158.9 L776.7 157.3 L778 155.6 L779.4 154 L780.7 152.4 L782 150.8 L783.4 149.1 L784.7 147.5 L786.1 145.9 L787.5 144.2 L788.8 142.6 L790.2 141 L791.6 139.4 L793 137.7 L794.5 136.1 L795.9 134.5 L797.3 132.9 L798.8 131.2 L800.2 129.6 L801.7 128 L803.1 126.3 L804.6 124.7 L806.1 123.1 L807.6 121.5 L809.1 119.8 L810.6 118.2 L812.1 116.6 L813.6 115 L815.1 113.3 L816.6 111.7 L818.2 110.1 L819.7 108.4 L821.3 106.8 L822.8 105.2 L824.4 103.6 L825.9 101.9 L827.5 100.3 L829.1 98.7 L830.7 97.1 L832.3 95.4 L833.9 93.8 L835.5 92.2 L837.1 90.5 L838.7 88.9 L840.3 87.3 L841.9 85.7 L843.5 84 L845.2 82.4 L846.8 80.8 L848.4 79.2 L850.1 77.5 L851.7 75.9 L853.4 74.3 L855 72.6 L856.7 71 L858.3 69.4 L860 67.8 L861.6 66.1 L863.3 64.5 L865 62.9 L866.7 61.3 L868.3 59.6 L870 58 L871.7 56.4 L873.4 54.7 L875.1 53.1 L876.8 51.5 L878.5 49.9 L880.1 48.2 L881.8 46.6 L883.5 45 L885.2 43.4 L886.9 41.7 L888.6 40.1 L890.3 38.5 L892 36.8 L893.7 35.2 L895.4 33.6 L897.1 32 L898.8 30.3 L900.5 28.7 L902.2 27.1 M902.2 612.9 L900.1 611.3 L898 609.7 L895.9 608 L893.7 606.4 L891.6 604.8 L889.5 603.2 L887.3 601.5 L885.2 599.9 L883.1 598.3 L881 596.6 L878.9 595 L876.7 593.4 L874.6 591.8 L872.5 590.1 L870.4 588.5 L868.3 586.9 L866.2 585.3 L864.1 583.6 L862 582 L859.9 580.4 L857.8 578.7 L855.7 577.1 L853.6 575.5 L851.5 573.9 L849.4 572.2 L847.3 570.6 L845.3 569 L843.2 567.4 L841.1 565.7 L839.1 564.1 L837 562.5 L835 560.8 L832.9 559.2 L830.9 557.6 L828.8 556 L826.8 554.3 L824.8 552.7 L822.8 551.1 L820.8 549.5 L818.8 547.8 L816.8 546.2 L814.8 544.6 L812.8 542.9 L810.8 541.3 L808.8 539.7 L806.9 538.1 L804.9 536.4 L803 534.8 L801 533.2 L799.1 531.6 L797.2 529.9 L795.2 528.3 L793.3 526.7 L791.4 525 L789.5 523.4 L787.7 521.8 L785.8 520.2 L783.9 518.5 L782 516.9 L780.2 515.3 L778.4 513.7 L776.5 512 L774.7 510.4 L772.9 508.8 L771.1 507.1 L769.3 505.5 L767.5 503.9 L765.7 502.3 L764 500.6 L762.2 499 L760.5 497.4 L758.8 495.8 L757.1 494.1 L755.3 492.5 L753.6 490.9 L752 489.2 L750.3 487.6 L748.6 486 L747 484.4 L745.3 482.7 L743.7 481.1 L742.1 479.5 L740.5 477.9 L738.9 476.2 L737.3 474.6 L735.8 473 L734.2 471.3 L732.7 469.7 L731.2 468.1 L729.6 466.5 L728.1 464.8 L726.7 463.2 L725.2 461.6 L723.7 460 L722.3 458.3 L720.8 456.7 L719.4 455.1 L718 453.4 L716.6 451.8 L715.3 450.2 L713.9 448.6 L712.5 446.9 L711.2 445.3 L709.9 443.7 L708.6 442.1 L707.3 440.4 L706 438.8 L704.8 437.2 L703.5 435.5 L702.3 433.9 L701.1 432.3 L699.9 430.7 L698.7 429 L697.5 427.4 L696.4 425.8 L695.2 424.2 L694.1 422.5 L693 420.9 L691.9 419.3 L690.9 417.6 L689.8 416 L688.8 414.4 L687.7 412.8 L686.7 411.1 L685.7 409.5 L684.8 407.9 L683.8 406.2 L682.9 404.6 L681.9 403 L681 401.4 L680.1 399.7 L679.3 398.1 L678.4 396.5 L677.6 394.9 L676.7 393.2 L675.9 391.6 L675.1 390 L674.4 388.3 L673.6 386.7 L672.9 385.1 L672.1 383.5 L671.4 381.8 L670.8 380.2 L670.1 378.6 L669.4 377 L668.8 375.3 L668.2 373.7 L667.6 372.1 L667 370.4 L666.5 368.8 L665.9 367.2 L665.4 365.6 L664.9 363.9 L664.4 362.3 L663.9 360.7 L663.5 359.1 L663 357.4 L662.6 355.8 L662.2 354.2 L661.9 352.5 L661.5 350.9 L661.2 349.3 L660.8 347.7 L660.5 346 L660.2 344.4 L660 342.8 L659.7 341.2 L659.5 339.5 L659.3 337.9 L659.1 336.3 L658.9 334.6 L658.7 333 L658.6 331.4 L658.5 329.8 L658.4 328.1 L658.3 326.5 L658.2 324.9 L658.2 323.3 L658.2 321.6 L658.1 320 L658.2 318.4 L658.2 316.7 L658.2 315.1 L658.3 313.5 L658.4 311.9 L658.5 310.2 L658.6 308.6 L658.7 307 L658.9 305.4 L659.1 303.7 L659.3 302.1 L659.5 300.5 L659.7 298.8 L660 297.2 L660.2 295.6 L660.5 294 L660.8 292.3 L661.2 290.7 L661.5 289.1 L661.9 287.5 L662.2 285.8 L662.6 284.2 L663 282.6 L663.5 280.9 L663.9 279.3 L664.4 277.7 L664.9 276.1 L665.4 274.4 L665.9 272.8 L666.5 271.2 L667 269.6 L667.6 267.9 L668.2 266.3 L668.8 264.7 L669.4 263 L670.1 261.4 L670.8 259.8 L671.4 258.2 L672.1 256.5 L672.9 254.9 L673.6 253.3 L674.4 251.7 L675.1 250 L675.9 248.4 L676.7 246.8 L677.6 245.1 L678.4 243.5 L679.3 241.9 L680.1 240.3 L681 238.6 L681.9 237 L682.9 235.4 L683.8 233.8 L684.8 232.1 L685.7 230.5 L686.7 228.9 L687.7 227.2 L688.8 225.6 L689.8 224 L690.9 222.4 L691.9 220.7 L693 219.1 L694.1 217.5 L695.2 215.8 L696.4 214.2 L697.5 212.6 L698.7 211 L699.9 209.3 L701.1 207.7 L702.3 206.1 L703.5 204.5 L704.8 202.8 L706 201.2 L707.3 199.6 L708.6 197.9 L709.9 196.3 L711.2 194.7 L712.5 193.1 L713.9 191.4 L715.3 189.8 L716.6 188.2 L718 186.6 L719.4 184.9 L720.8 183.3 L722.3 181.7 L723.7 180 L725.2 178.4 L726.7 176.8 L728.1 175.2 L729.6 173.5 L731.2 171.9 L732.7 170.3 L734.2 168.7 L735.8 167 L737.3 165.4 L738.9 163.8 L740.5 162.1 L742.1 160.5 L743.7 158.9 L745.3 157.3 L747 155.6 L748.6 154 L750.3 152.4 L752 150.8 L753.6 149.1 L755.3 147.5 L757.1 145.9 L758.8 144.2 L760.5 142.6 L762.2 141 L764 139.4 L765.7 137.7 L767.5 136.1 L769.3 134.5 L771.1 132.9 L772.9 131.2 L774.7 129.6 L776.5 128 L778.4 126.3 L780.2 124.7 L782 123.1 L783.9 121.5 L785.8 119.8 L787.7 118.2 L789.5 116.6 L791.4 115 L793.3 113.3 L795.2 111.7 L797.2 110.1 L799.1 108.4 L801 106.8 L803 105.2 L804.9 103.6 L806.9 101.9 L808.8 100.3 L810.8 98.7 L812.8 97.1 L814.8 95.4 L816.8 93.8 L818.8 92.2 L820.8 90.5 L822.8 88.9 L824.8 87.3 L826.8 85.7 L828.8 84 L830.9 82.4 L832.9 80.8 L835 79.2 L837 77.5 L839.1 75.9 L841.1 74.3 L843.2 72.6 L845.3 71 L847.3 69.4 L849.4 67.8 L851.5 66.1 L853.6 64.5 L855.7 62.9 L857.8 61.3 L859.9 59.6 L862 58 L864.1 56.4 L866.2 54.7 L868.3 53.1 L870.4 51.5 L872.5 49.9 L874.6 48.2 L876.7 46.6 L878.9 45 L881 43.4 L883.1 41.7 L885.2 40.1 L887.3 38.5 L889.5 36.8 L891.6 35.2 L893.7 33.6 L895.9 32 L898 30.3 L900.1 28.7 L902.2 27.1 M902.2 612.9 L899.7 611.3 L897.1 609.7 L894.6 608 L892 606.4 L889.5 604.8 L886.9 603.2 L884.4 601.5 L881.8 599.9 L879.3 598.3 L876.7 596.6 L874.2 595 L871.6 593.4 L869.1 591.8 L866.6 590.1 L864 588.5 L861.5 586.9 L859 585.3 L856.4 583.6 L853.9 582 L851.4 580.4 L848.9 578.7 L846.4 577.1 L843.9 575.5 L841.3 573.9 L838.8 572.2 L836.4 570.6 L833.9 569 L831.4 567.4 L828.9 565.7 L826.4 564.1 L824 562.5 L821.5 560.8 L819.1 559.2 L816.6 557.6 L814.2 556 L811.7 554.3 L809.3 552.7 L806.9 551.1 L804.5 549.5 L802.1 547.8 L799.7 546.2 L797.3 544.6 L794.9 542.9 L792.5 541.3 L790.2 539.7 L787.8 538.1 L785.4 536.4 L783.1 534.8 L780.8 533.2 L778.5 531.6 L776.1 529.9 L773.8 528.3 L771.5 526.7 L769.3 525 L767 523.4 L764.7 521.8 L762.5 520.2 L760.2 518.5 L758 516.9 L755.8 515.3 L753.6 513.7 L751.4 512 L749.2 510.4 L747 508.8 L744.9 507.1 L742.7 505.5 L740.6 503.9 L738.4 502.3 L736.3 500.6 L734.2 499 L732.1 497.4 L730.1 495.8 L728 494.1 L726 492.5 L723.9 490.9 L721.9 489.2 L719.9 487.6 L717.9 486 L715.9 484.4 L714 482.7 L712 481.1 L710.1 479.5 L708.2 477.9 L706.2 476.2 L704.4 474.6 L702.5 473 L700.6 471.3 L698.8 469.7 L696.9 468.1 L695.1 466.5 L693.3 464.8 L691.5 463.2 L689.8 461.6 L688 460 L686.3 458.3 L684.6 456.7 L682.9 455.1 L681.2 453.4 L679.5 451.8 L677.9 450.2 L676.2 448.6 L674.6 446.9 L673 445.3 L671.4 443.7 L669.9 442.1 L668.3 440.4 L666.8 438.8 L665.3 437.2 L663.8 435.5 L662.3 433.9 L660.8 432.3 L659.4 430.7 L658 429 L656.6 427.4 L655.2 425.8 L653.8 424.2 L652.5 422.5 L651.2 420.9 L649.9 419.3 L648.6 417.6 L647.3 416 L646.1 414.4 L644.8 412.8 L643.6 411.1 L642.4 409.5 L641.3 407.9 L640.1 406.2 L639 404.6 L637.9 403 L636.8 401.4 L635.7 399.7 L634.7 398.1 L633.6 396.5 L632.6 394.9 L631.6 393.2 L630.7 391.6 L629.7 390 L628.8 388.3 L627.9 386.7 L627 385.1 L626.1 383.5 L625.3 381.8 L624.5 380.2 L623.7 378.6 L622.9 377 L622.1 375.3 L621.4 373.7 L620.7 372.1 L620 370.4 L619.3 368.8 L618.7 367.2 L618 365.6 L617.4 363.9 L616.8 362.3 L616.3 360.7 L615.7 359.1 L615.2 357.4 L614.7 355.8 L614.2 354.2 L613.8 352.5 L613.3 350.9 L612.9 349.3 L612.5 347.7 L612.2 346 L611.8 344.4 L611.5 342.8 L611.2 341.2 L610.9 339.5 L610.7 337.9 L610.4 336.3 L610.2 334.6 L610 333 L609.9 331.4 L609.7 329.8 L609.6 328.1 L609.5 326.5 L609.4 324.9 L609.4 323.3 L609.3 321.6 L609.3 320 L609.3 318.4 L609.4 316.7 L609.4 315.1 L609.5 313.5 L609.6 311.9 L609.7 310.2 L609.9 308.6 L610 307 L610.2 305.4 L610.4 303.7 L610.7 302.1 L610.9 300.5 L611.2 298.8 L611.5 297.2 L611.8 295.6 L612.2 294 L612.5 292.3 L612.9 290.7 L613.3 289.1 L613.8 287.5 L614.2 285.8 L614.7 284.2 L615.2 282.6 L615.7 280.9 L616.3 279.3 L616.8 277.7 L617.4 276.1 L618 274.4 L618.7 272.8 L619.3 271.2 L620 269.6 L620.7 267.9 L621.4 266.3 L622.1 264.7 L622.9 263 L623.7 261.4 L624.5 259.8 L625.3 258.2 L626.1 256.5 L627 254.9 L627.9 253.3 L628.8 251.7 L629.7 250 L630.7 248.4 L631.6 246.8 L632.6 245.1 L633.6 243.5 L634.7 241.9 L635.7 240.3 L636.8 238.6 L637.9 237 L639 235.4 L640.1 233.8 L641.3 232.1 L642.4 230.5 L643.6 228.9 L644.8 227.2 L646.1 225.6 L647.3 224 L648.6 222.4 L649.9 220.7 L651.2 219.1 L652.5 217.5 L653.8 215.8 L655.2 214.2 L656.6 212.6 L658 211 L659.4 209.3 L660.8 207.7 L662.3 206.1 L663.8 204.5 L665.3 202.8 L666.8 201.2 L668.3 199.6 L669.9 197.9 L671.4 196.3 L673 194.7 L674.6 193.1 L676.2 191.4 L677.9 189.8 L679.5 188.2 L681.2 186.6 L682.9 184.9 L684.6 183.3 L686.3 181.7 L688 180 L689.8 178.4 L691.5 176.8 L693.3 175.2 L695.1 173.5 L696.9 171.9 L698.8 170.3 L700.6 168.7 L702.5 167 L704.4 165.4 L706.2 163.8 L708.2 162.1 L710.1 160.5 L712 158.9 L714 157.3 L715.9 155.6 L717.9 154 L719.9 152.4 L721.9 150.8 L723.9 149.1 L726 147.5 L728 145.9 L730.1 144.2 L732.1 142.6 L734.2 141 L736.3 139.4 L738.4 137.7 L740.6 136.1 L742.7 134.5 L744.9 132.9 L747 131.2 L749.2 129.6 L751.4 128 L753.6 126.3 L755.8 124.7 L758 123.1 L760.2 121.5 L762.5 119.8 L764.7 118.2 L767 116.6 L769.3 115 L771.5 113.3 L773.8 111.7 L776.1 110.1 L778.5 108.4 L780.8 106.8 L783.1 105.2 L785.4 103.6 L787.8 101.9 L790.2 100.3 L792.5 98.7 L794.9 97.1 L797.3 95.4 L799.7 93.8 L802.1 92.2 L804.5 90.5 L806.9 88.9 L809.3 87.3 L811.7 85.7 L814.2 84 L816.6 82.4 L819.1 80.8 L821.5 79.2 L824 77.5 L826.4 75.9 L828.9 74.3 L831.4 72.6 L833.9 71 L836.4 69.4 L838.8 67.8 L841.3 66.1 L843.9 64.5 L846.4 62.9 L848.9 61.3 L851.4 59.6 L853.9 58 L856.4 56.4 L859 54.7 L861.5 53.1 L864 51.5 L866.6 49.9 L869.1 48.2 L871.6 46.6 L874.2 45 L876.7 43.4 L879.3 41.7 L881.8 40.1 L884.4 38.5 L886.9 36.8 L889.5 35.2 L892 33.6 L894.6 32 L897.1 30.3 L899.7 28.7 L902.2 27.1 M902.2 612.9 L899.3 611.3 L896.3 609.7 L893.3 608 L890.3 606.4 L887.3 604.8 L884.4 603.2 L881.4 601.5 L878.4 599.9 L875.4 598.3 L872.5 596.6 L869.5 595 L866.5 593.4 L863.6 591.8 L860.6 590.1 L857.6 588.5 L854.7 586.9 L851.7 585.3 L848.8 583.6 L845.8 582 L842.9 580.4 L840 578.7 L837 577.1 L834.1 575.5 L831.2 573.9 L828.3 572.2 L825.4 570.6 L822.5 569 L819.6 567.4 L816.7 565.7 L813.8 564.1 L810.9 562.5 L808.1 560.8 L805.2 559.2 L802.3 557.6 L799.5 556 L796.6 554.3 L793.8 552.7 L791 551.1 L788.2 549.5 L785.4 547.8 L782.6 546.2 L779.8 544.6 L777 542.9 L774.2 541.3 L771.5 539.7 L768.7 538.1 L766 536.4 L763.3 534.8 L760.5 533.2 L757.8 531.6 L755.1 529.9 L752.4 528.3 L749.8 526.7 L747.1 525 L744.5 523.4 L741.8 521.8 L739.2 520.2 L736.6 518.5 L734 516.9 L731.4 515.3 L728.8 513.7 L726.2 512 L723.7 510.4 L721.2 508.8 L718.6 507.1 L716.1 505.5 L713.6 503.9 L711.1 502.3 L708.7 500.6 L706.2 499 L703.8 497.4 L701.4 495.8 L699 494.1 L696.6 492.5 L694.2 490.9 L691.9 489.2 L689.5 487.6 L687.2 486 L684.9 484.4 L682.6 482.7 L680.3 481.1 L678 479.5 L675.8 477.9 L673.6 476.2 L671.4 474.6 L669.2 473 L667 471.3 L664.9 469.7 L662.7 468.1 L660.6 466.5 L658.5 464.8 L656.4 463.2 L654.4 461.6 L652.3 460 L650.3 458.3 L648.3 456.7 L646.3 455.1 L644.3 453.4 L642.4 451.8 L640.5 450.2 L638.6 448.6 L636.7 446.9 L634.8 445.3 L633 443.7 L631.1 442.1 L629.3 440.4 L627.5 438.8 L625.8 437.2 L624 435.5 L622.3 433.9 L620.6 432.3 L618.9 430.7 L617.3 429 L615.6 427.4 L614 425.8 L612.4 424.2 L610.9 422.5 L609.3 420.9 L607.8 419.3 L606.3 417.6 L604.8 416 L603.4 414.4 L601.9 412.8 L600.5 411.1 L599.1 409.5 L597.8 407.9 L596.4 406.2 L595.1 404.6 L593.8 403 L592.5 401.4 L591.3 399.7 L590.1 398.1 L588.9 396.5 L587.7 394.9 L586.5 393.2 L585.4 391.6 L584.3 390 L583.2 388.3 L582.1 386.7 L581.1 385.1 L580.1 383.5 L579.1 381.8 L578.2 380.2 L577.2 378.6 L576.3 377 L575.4 375.3 L574.6 373.7 L573.7 372.1 L572.9 370.4 L572.2 368.8 L571.4 367.2 L570.7 365.6 L569.9 363.9 L569.3 362.3 L568.6 360.7 L568 359.1 L567.4 357.4 L566.8 355.8 L566.2 354.2 L565.7 352.5 L565.2 350.9 L564.7 349.3 L564.3 347.7 L563.8 346 L563.4 344.4 L563.1 342.8 L562.7 341.2 L562.4 339.5 L562.1 337.9 L561.8 336.3 L561.6 334.6 L561.3 333 L561.1 331.4 L561 329.8 L560.8 328.1 L560.7 326.5 L560.6 324.9 L560.6 323.3 L560.5 321.6 L560.5 320 L560.5 318.4 L560.6 316.7 L560.6 315.1 L560.7 313.5 L560.8 311.9 L561 310.2 L561.1 308.6 L561.3 307 L561.6 305.4 L561.8 303.7 L562.1 302.1 L562.4 300.5 L562.7 298.8 L563.1 297.2 L563.4 295.6 L563.8 294 L564.3 292.3 L564.7 290.7 L565.2 289.1 L565.7 287.5 L566.2 285.8 L566.8 284.2 L567.4 282.6 L568 280.9 L568.6 279.3 L569.3 277.7 L569.9 276.1 L570.7 274.4 L571.4 272.8 L572.2 271.2 L572.9 269.6 L573.7 267.9 L574.6 266.3 L575.4 264.7 L576.3 263 L577.2 261.4 L578.2 259.8 L579.1 258.2 L580.1 256.5 L581.1 254.9 L582.1 253.3 L583.2 251.7 L584.3 250 L585.4 248.4 L586.5 246.8 L587.7 245.1 L588.9 243.5 L590.1 241.9 L591.3 240.3 L592.5 238.6 L593.8 237 L595.1 235.4 L596.4 233.8 L597.8 232.1 L599.1 230.5 L600.5 228.9 L601.9 227.2 L603.4 225.6 L604.8 224 L606.3 222.4 L607.8 220.7 L609.3 219.1 L610.9 217.5 L612.4 215.8 L614 214.2 L615.6 212.6 L617.3 211 L618.9 209.3 L620.6 207.7 L622.3 206.1 L624 204.5 L625.8 202.8 L627.5 201.2 L629.3 199.6 L631.1 197.9 L633 196.3 L634.8 194.7 L636.7 193.1 L638.6 191.4 L640.5 189.8 L642.4 188.2 L644.3 186.6 L646.3 184.9 L648.3 183.3 L650.3 181.7 L652.3 180 L654.4 178.4 L656.4 176.8 L658.5 175.2 L660.6 173.5 L662.7 171.9 L664.9 170.3 L667 168.7 L669.2 167 L671.4 165.4 L673.6 163.8 L675.8 162.1 L678 160.5 L680.3 158.9 L682.6 157.3 L684.9 155.6 L687.2 154 L689.5 152.4 L691.9 150.8 L694.2 149.1 L696.6 147.5 L699 145.9 L701.4 144.2 L703.8 142.6 L706.2 141 L708.7 139.4 L711.1 137.7 L713.6 136.1 L716.1 134.5 L718.6 132.9 L721.2 131.2 L723.7 129.6 L726.2 128 L728.8 126.3 L731.4 124.7 L734 123.1 L736.6 121.5 L739.2 119.8 L741.8 118.2 L744.5 116.6 L747.1 115 L749.8 113.3 L752.4 111.7 L755.1 110.1 L757.8 108.4 L760.5 106.8 L763.3 105.2 L766 103.6 L768.7 101.9 L771.5 100.3 L774.2 98.7 L777 97.1 L779.8 95.4 L782.6 93.8 L785.4 92.2 L788.2 90.5 L791 88.9 L793.8 87.3 L796.6 85.7 L799.5 84 L802.3 82.4 L805.2 80.8 L808.1 79.2 L810.9 77.5 L813.8 75.9 L816.7 74.3 L819.6 72.6 L822.5 71 L825.4 69.4 L828.3 67.8 L831.2 66.1 L834.1 64.5 L837 62.9 L840 61.3 L842.9 59.6 L845.8 58 L848.8 56.4 L851.7 54.7 L854.7 53.1 L857.6 51.5 L860.6 49.9 L863.6 48.2 L866.5 46.6 L869.5 45 L872.5 43.4 L875.4 41.7 L878.4 40.1 L881.4 38.5 L884.4 36.8 L887.3 35.2 L890.3 33.6 L893.3 32 L896.3 30.3 L899.3 28.7 L902.2 27.1 M902.2 612.9 L898.8 611.3 L895.4 609.7 L892 608 L888.6 606.4 L885.2 604.8 L881.8 603.2 L878.4 601.5 L875 599.9 L871.6 598.3 L868.2 596.6 L864.8 595 L861.4 593.4 L858 591.8 L854.7 590.1 L851.3 588.5 L847.9 586.9 L844.5 585.3 L841.2 583.6 L837.8 582 L834.4 580.4 L831.1 578.7 L827.7 577.1 L824.4 575.5 L821 573.9 L817.7 572.2 L814.4 570.6 L811.1 569 L807.8 567.4 L804.5 565.7 L801.2 564.1 L797.9 562.5 L794.6 560.8 L791.3 559.2 L788.1 557.6 L784.8 556 L781.6 554.3 L778.3 552.7 L775.1 551.1 L771.9 549.5 L768.7 547.8 L765.5 546.2 L762.3 544.6 L759.1 542.9 L755.9 541.3 L752.8 539.7 L749.6 538.1 L746.5 536.4 L743.4 534.8 L740.3 533.2 L737.2 531.6 L734.1 529.9 L731 528.3 L728 526.7 L724.9 525 L721.9 523.4 L718.9 521.8 L715.9 520.2 L712.9 518.5 L709.9 516.9 L707 515.3 L704 513.7 L701.1 512 L698.2 510.4 L695.3 508.8 L692.4 507.1 L689.5 505.5 L686.7 503.9 L683.8 502.3 L681 500.6 L678.2 499 L675.4 497.4 L672.7 495.8 L669.9 494.1 L667.2 492.5 L664.5 490.9 L661.8 489.2 L659.1 487.6 L656.5 486 L653.8 484.4 L651.2 482.7 L648.6 481.1 L646 479.5 L643.5 477.9 L640.9 476.2 L638.4 474.6 L635.9 473 L633.4 471.3 L630.9 469.7 L628.5 468.1 L626.1 466.5 L623.7 464.8 L621.3 463.2 L618.9 461.6 L616.6 460 L614.3 458.3 L612 456.7 L609.7 455.1 L607.5 453.4 L605.3 451.8 L603.1 450.2 L600.9 448.6 L598.7 446.9 L596.6 445.3 L594.5 443.7 L592.4 442.1 L590.3 440.4 L588.3 438.8 L586.3 437.2 L584.3 435.5 L582.3 433.9 L580.4 432.3 L578.5 430.7 L576.6 429 L574.7 427.4 L572.9 425.8 L571 424.2 L569.2 422.5 L567.5 420.9 L565.7 419.3 L564 417.6 L562.3 416 L560.7 414.4 L559 412.8 L557.4 411.1 L555.8 409.5 L554.3 407.9 L552.7 406.2 L551.2 404.6 L549.7 403 L548.3 401.4 L546.9 399.7 L545.5 398.1 L544.1 396.5 L542.7 394.9 L541.4 393.2 L540.1 391.6 L538.9 390 L537.6 388.3 L536.4 386.7 L535.2 385.1 L534.1 383.5 L533 381.8 L531.9 380.2 L530.8 378.6 L529.8 377 L528.8 375.3 L527.8 373.7 L526.8 372.1 L525.9 370.4 L525 368.8 L524.1 367.2 L523.3 365.6 L522.5 363.9 L521.7 362.3 L520.9 360.7 L520.2 359.1 L519.5 357.4 L518.9 355.8 L518.2 354.2 L517.6 352.5 L517 350.9 L516.5 349.3 L516 347.7 L515.5 346 L515 344.4 L514.6 342.8 L514.2 341.2 L513.8 339.5 L513.5 337.9 L513.2 336.3 L512.9 334.6 L512.6 333 L512.4 331.4 L512.2 329.8 L512.1 328.1 L511.9 326.5 L511.8 324.9 L511.7 323.3 L511.7 321.6 L511.7 320 L511.7 318.4 L511.7 316.7 L511.8 315.1 L511.9 313.5 L512.1 311.9 L512.2 310.2 L512.4 308.6 L512.6 307 L512.9 305.4 L513.2 303.7 L513.5 302.1 L513.8 300.5 L514.2 298.8 L514.6 297.2 L515 295.6 L515.5 294 L516 292.3 L516.5 290.7 L517 289.1 L517.6 287.5 L518.2 285.8 L518.9 284.2 L519.5 282.6 L520.2 280.9 L520.9 279.3 L521.7 277.7 L522.5 276.1 L523.3 274.4 L524.1 272.8 L525 271.2 L525.9 269.6 L526.8 267.9 L527.8 266.3 L528.8 264.7 L529.8 263 L530.8 261.4 L531.9 259.8 L533 258.2 L534.1 256.5 L535.2 254.9 L536.4 253.3 L537.6 251.7 L538.9 250 L540.1 248.4 L541.4 246.8 L542.7 245.1 L544.1 243.5 L545.5 241.9 L546.9 240.3 L548.3 238.6 L549.7 237 L551.2 235.4 L552.7 233.8 L554.3 232.1 L555.8 230.5 L557.4 228.9 L559 227.2 L560.7 225.6 L562.3 224 L564 222.4 L565.7 220.7 L567.5 219.1 L569.2 217.5 L571 215.8 L572.9 214.2 L574.7 212.6 L576.6 211 L578.5 209.3 L580.4 207.7 L582.3 206.1 L584.3 204.5 L586.3 202.8 L588.3 201.2 L590.3 199.6 L592.4 197.9 L594.5 196.3 L596.6 194.7 L598.7 193.1 L600.9 191.4 L603.1 189.8 L605.3 188.2 L607.5 186.6 L609.7 184.9 L612 183.3 L614.3 181.7 L616.6 180 L618.9 178.4 L621.3 176.8 L623.7 175.2 L626.1 173.5 L628.5 171.9 L630.9 170.3 L633.4 168.7 L635.9 167 L638.4 165.4 L640.9 163.8 L643.5 162.1 L646 160.5 L648.6 158.9 L651.2 157.3 L653.8 155.6 L656.5 154 L659.1 152.4 L661.8 150.8 L664.5 149.1 L667.2 147.5 L669.9 145.9 L672.7 144.2 L675.4 142.6 L678.2 141 L681 139.4 L683.8 137.7 L686.7 136.1 L689.5 134.5 L692.4 132.9 L695.3 131.2 L698.2 129.6 L701.1 128 L704 126.3 L707 124.7 L709.9 123.1 L712.9 121.5 L715.9 119.8 L718.9 118.2 L721.9 116.6 L724.9 115 L728 113.3 L731 111.7 L734.1 110.1 L737.2 108.4 L740.3 106.8 L743.4 105.2 L746.5 103.6 L749.6 101.9 L752.8 100.3 L755.9 98.7 L759.1 97.1 L762.3 95.4 L765.5 93.8 L768.7 92.2 L771.9 90.5 L775.1 88.9 L778.3 87.3 L781.6 85.7 L784.8 84 L788.1 82.4 L791.3 80.8 L794.6 79.2 L797.9 77.5 L801.2 75.9 L804.5 74.3 L807.8 72.6 L811.1 71 L814.4 69.4 L817.7 67.8 L821 66.1 L824.4 64.5 L827.7 62.9 L831.1 61.3 L834.4 59.6 L837.8 58 L841.2 56.4 L844.5 54.7 L847.9 53.1 L851.3 51.5 L854.7 49.9 L858 48.2 L861.4 46.6 L864.8 45 L868.2 43.4 L871.6 41.7 L875 40.1 L878.4 38.5 L881.8 36.8 L885.2 35.2 L888.6 33.6 L892 32 L895.4 30.3 L898.8 28.7 L902.2 27.1 M902.2 612.9 L898.4 611.3 L894.6 609.7 L890.7 608 L886.9 606.4 L883.1 604.8 L879.3 603.2 L875.4 601.5 L871.6 599.9 L867.8 598.3 L864 596.6 L860.1 595 L856.3 593.4 L852.5 591.8 L848.7 590.1 L844.9 588.5 L841.1 586.9 L837.3 585.3 L833.5 583.6 L829.7 582 L826 580.4 L822.2 578.7 L818.4 577.1 L814.7 575.5 L810.9 573.9 L807.1 572.2 L803.4 570.6 L799.7 569 L796 567.4 L792.2 565.7 L788.5 564.1 L784.8 562.5 L781.1 560.8 L777.5 559.2 L773.8 557.6 L770.1 556 L766.5 554.3 L762.8 552.7 L759.2 551.1 L755.6 549.5 L752 547.8 L748.4 546.2 L744.8 544.6 L741.2 542.9 L737.7 541.3 L734.1 539.7 L730.6 538.1 L727 536.4 L723.5 534.8 L720 533.2 L716.6 531.6 L713.1 529.9 L709.6 528.3 L706.2 526.7 L702.8 525 L699.4 523.4 L696 521.8 L692.6 520.2 L689.2 518.5 L685.9 516.9 L682.6 515.3 L679.2 513.7 L676 512 L672.7 510.4 L669.4 508.8 L666.2 507.1 L662.9 505.5 L659.7 503.9 L656.5 502.3 L653.4 500.6 L650.2 499 L647.1 497.4 L644 495.8 L640.9 494.1 L637.8 492.5 L634.8 490.9 L631.7 489.2 L628.7 487.6 L625.7 486 L622.8 484.4 L619.8 482.7 L616.9 481.1 L614 479.5 L611.1 477.9 L608.2 476.2 L605.4 474.6 L602.6 473 L599.8 471.3 L597 469.7 L594.3 468.1 L591.6 466.5 L588.9 464.8 L586.2 463.2 L583.5 461.6 L580.9 460 L578.3 458.3 L575.7 456.7 L573.2 455.1 L570.6 453.4 L568.1 451.8 L565.7 450.2 L563.2 448.6 L560.8 446.9 L558.4 445.3 L556 443.7 L553.7 442.1 L551.3 440.4 L549 438.8 L546.8 437.2 L544.5 435.5 L542.3 433.9 L540.1 432.3 L538 430.7 L535.9 429 L533.8 427.4 L531.7 425.8 L529.6 424.2 L527.6 422.5 L525.6 420.9 L523.7 419.3 L521.7 417.6 L519.8 416 L518 414.4 L516.1 412.8 L514.3 411.1 L512.5 409.5 L510.8 407.9 L509 406.2 L507.3 404.6 L505.7 403 L504 401.4 L502.4 399.7 L500.9 398.1 L499.3 396.5 L497.8 394.9 L496.3 393.2 L494.9 391.6 L493.4 390 L492 388.3 L490.7 386.7 L489.4 385.1 L488.1 383.5 L486.8 381.8 L485.6 380.2 L484.4 378.6 L483.2 377 L482.1 375.3 L481 373.7 L479.9 372.1 L478.8 370.4 L477.8 368.8 L476.9 367.2 L475.9 365.6 L475 363.9 L474.1 362.3 L473.3 360.7 L472.5 359.1 L471.7 357.4 L470.9 355.8 L470.2 354.2 L469.5 352.5 L468.9 350.9 L468.3 349.3 L467.7 347.7 L467.1 346 L466.6 344.4 L466.1 342.8 L465.7 341.2 L465.3 339.5 L464.9 337.9 L464.5 336.3 L464.2 334.6 L463.9 333 L463.7 331.4 L463.5 329.8 L463.3 328.1 L463.1 326.5 L463 324.9 L462.9 323.3 L462.9 321.6 L462.9 320 L462.9 318.4 L462.9 316.7 L463 315.1 L463.1 313.5 L463.3 311.9 L463.5 310.2 L463.7 308.6 L463.9 307 L464.2 305.4 L464.5 303.7 L464.9 302.1 L465.3 300.5 L465.7 298.8 L466.1 297.2 L466.6 295.6 L467.1 294 L467.7 292.3 L468.3 290.7 L468.9 289.1 L469.5 287.5 L470.2 285.8 L470.9 284.2 L471.7 282.6 L472.5 280.9 L473.3 279.3 L474.1 277.7 L475 276.1 L475.9 274.4 L476.9 272.8 L477.8 271.2 L478.8 269.6 L479.9 267.9 L481 266.3 L482.1 264.7 L483.2 263 L484.4 261.4 L485.6 259.8 L486.8 258.2 L488.1 256.5 L489.4 254.9 L490.7 253.3 L492 251.7 L493.4 250 L494.9 248.4 L496.3 246.8 L497.8 245.1 L499.3 243.5 L500.9 241.9 L502.4 240.3 L504 238.6 L505.7 237 L507.3 235.4 L509 233.8 L510.8 232.1 L512.5 230.5 L514.3 228.9 L516.1 227.2 L518 225.6 L519.8 224 L521.7 222.4 L523.7 220.7 L525.6 219.1 L527.6 217.5 L529.6 215.8 L531.7 214.2 L533.8 212.6 L535.9 211 L538 209.3 L540.1 207.7 L542.3 206.1 L544.5 204.5 L546.8 202.8 L549 201.2 L551.3 199.6 L553.7 197.9 L556 196.3 L558.4 194.7 L560.8 193.1 L563.2 191.4 L565.7 189.8 L568.1 188.2 L570.6 186.6 L573.2 184.9 L575.7 183.3 L578.3 181.7 L580.9 180 L583.5 178.4 L586.2 176.8 L588.9 175.2 L591.6 173.5 L594.3 171.9 L597 170.3 L599.8 168.7 L602.6 167 L605.4 165.4 L608.2 163.8 L611.1 162.1 L614 160.5 L616.9 158.9 L619.8 157.3 L622.8 155.6 L625.7 154 L628.7 152.4 L631.7 150.8 L634.8 149.1 L637.8 147.5 L640.9 145.9 L644 144.2 L647.1 142.6 L650.2 141 L653.4 139.4 L656.5 137.7 L659.7 136.1 L662.9 134.5 L666.2 132.9 L669.4 131.2 L672.7 129.6 L676 128 L679.2 126.3 L682.6 124.7 L685.9 123.1 L689.2 121.5 L692.6 119.8 L696 118.2 L699.4 116.6 L702.8 115 L706.2 113.3 L709.6 111.7 L713.1 110.1 L716.6 108.4 L720 106.8 L723.5 105.2 L727 103.6 L730.6 101.9 L734.1 100.3 L737.7 98.7 L741.2 97.1 L744.8 95.4 L748.4 93.8 L752 92.2 L755.6 90.5 L759.2 88.9 L762.8 87.3 L766.5 85.7 L770.1 84 L773.8 82.4 L777.5 80.8 L781.1 79.2 L784.8 77.5 L788.5 75.9 L792.2 74.3 L796 72.6 L799.7 71 L803.4 69.4 L807.1 67.8 L810.9 66.1 L814.7 64.5 L818.4 62.9 L822.2 61.3 L826 59.6 L829.7 58 L833.5 56.4 L837.3 54.7 L841.1 53.1 L844.9 51.5 L848.7 49.9 L852.5 48.2 L856.3 46.6 L860.1 45 L864 43.4 L867.8 41.7 L871.6 40.1 L875.4 38.5 L879.3 36.8 L883.1 35.2 L886.9 33.6 L890.7 32 L894.6 30.3 L898.4 28.7 L902.2 27.1 M902.2 612.9 L898 611.3 L893.7 609.7 L889.5 608 L885.2 606.4 L881 604.8 L876.7 603.2 L872.4 601.5 L868.2 599.9 L863.9 598.3 L859.7 596.6 L855.5 595 L851.2 593.4 L847 591.8 L842.8 590.1 L838.5 588.5 L834.3 586.9 L830.1 585.3 L825.9 583.6 L821.7 582 L817.5 580.4 L813.3 578.7 L809.1 577.1 L804.9 575.5 L800.7 573.9 L796.6 572.2 L792.4 570.6 L788.3 569 L784.1 567.4 L780 565.7 L775.9 564.1 L771.8 562.5 L767.7 560.8 L763.6 559.2 L759.5 557.6 L755.4 556 L751.4 554.3 L747.3 552.7 L743.3 551.1 L739.3 549.5 L735.3 547.8 L731.3 546.2 L727.3 544.6 L723.3 542.9 L719.4 541.3 L715.4 539.7 L711.5 538.1 L707.6 536.4 L703.7 534.8 L699.8 533.2 L695.9 531.6 L692.1 529.9 L688.2 528.3 L684.4 526.7 L680.6 525 L676.8 523.4 L673.1 521.8 L669.3 520.2 L665.6 518.5 L661.8 516.9 L658.1 515.3 L654.5 513.7 L650.8 512 L647.2 510.4 L643.5 508.8 L639.9 507.1 L636.4 505.5 L632.8 503.9 L629.2 502.3 L625.7 500.6 L622.2 499 L618.7 497.4 L615.3 495.8 L611.9 494.1 L608.4 492.5 L605 490.9 L601.7 489.2 L598.3 487.6 L595 486 L591.7 484.4 L588.4 482.7 L585.2 481.1 L582 479.5 L578.8 477.9 L575.6 476.2 L572.4 474.6 L569.3 473 L566.2 471.3 L563.1 469.7 L560.1 468.1 L557 466.5 L554 464.8 L551.1 463.2 L548.1 461.6 L545.2 460 L542.3 458.3 L539.4 456.7 L536.6 455.1 L533.8 453.4 L531 451.8 L528.3 450.2 L525.5 448.6 L522.8 446.9 L520.2 445.3 L517.5 443.7 L514.9 442.1 L512.4 440.4 L509.8 438.8 L507.3 437.2 L504.8 435.5 L502.3 433.9 L499.9 432.3 L497.5 430.7 L495.1 429 L492.8 427.4 L490.5 425.8 L488.2 424.2 L486 422.5 L483.8 420.9 L481.6 419.3 L479.5 417.6 L477.3 416 L475.3 414.4 L473.2 412.8 L471.2 411.1 L469.2 409.5 L467.3 407.9 L465.3 406.2 L463.5 404.6 L461.6 403 L459.8 401.4 L458 399.7 L456.3 398.1 L454.5 396.5 L452.9 394.9 L451.2 393.2 L449.6 391.6 L448 390 L446.5 388.3 L445 386.7 L443.5 385.1 L442 383.5 L440.6 381.8 L439.3 380.2 L437.9 378.6 L436.6 377 L435.4 375.3 L434.1 373.7 L433 372.1 L431.8 370.4 L430.7 368.8 L429.6 367.2 L428.5 365.6 L427.5 363.9 L426.6 362.3 L425.6 360.7 L424.7 359.1 L423.8 357.4 L423 355.8 L422.2 354.2 L421.5 352.5 L420.7 350.9 L420.1 349.3 L419.4 347.7 L418.8 346 L418.2 344.4 L417.7 342.8 L417.2 341.2 L416.7 339.5 L416.3 337.9 L415.9 336.3 L415.5 334.6 L415.2 333 L415 331.4 L414.7 329.8 L414.5 328.1 L414.3 326.5 L414.2 324.9 L414.1 323.3 L414.1 321.6 L414 320 L414.1 318.4 L414.1 316.7 L414.2 315.1 L414.3 313.5 L414.5 311.9 L414.7 310.2 L415 308.6 L415.2 307 L415.5 305.4 L415.9 303.7 L416.3 302.1 L416.7 300.5 L417.2 298.8 L417.7 297.2 L418.2 295.6 L418.8 294 L419.4 292.3 L420.1 290.7 L420.7 289.1 L421.5 287.5 L422.2 285.8 L423 284.2 L423.8 282.6 L424.7 280.9 L425.6 279.3 L426.6 277.7 L427.5 276.1 L428.5 274.4 L429.6 272.8 L430.7 271.2 L431.8 269.6 L433 267.9 L434.1 266.3 L435.4 264.7 L436.6 263 L437.9 261.4 L439.3 259.8 L440.6 258.2 L442 256.5 L443.5 254.9 L445 253.3 L446.5 251.7 L448 250 L449.6 248.4 L451.2 246.8 L452.9 245.1 L454.5 243.5 L456.3 241.9 L458 240.3 L459.8 238.6 L461.6 237 L463.5 235.4 L465.3 233.8 L467.3 232.1 L469.2 230.5 L471.2 228.9 L473.2 227.2 L475.3 225.6 L477.3 224 L479.5 222.4 L481.6 220.7 L483.8 219.1 L486 217.5 L488.2 215.8 L490.5 214.2 L492.8 212.6 L495.1 211 L497.5 209.3 L499.9 207.7 L502.3 206.1 L504.8 204.5 L507.3 202.8 L509.8 201.2 L512.4 199.6 L514.9 197.9 L517.5 196.3 L520.2 194.7 L522.8 193.1 L525.5 191.4 L528.3 189.8 L531 188.2 L533.8 186.6 L536.6 184.9 L539.4 183.3 L542.3 181.7 L545.2 180 L548.1 178.4 L551.1 176.8 L554 175.2 L557 173.5 L560.1 171.9 L563.1 170.3 L566.2 168.7 L569.3 167 L572.4 165.4 L575.6 163.8 L578.8 162.1 L582 160.5 L585.2 158.9 L588.4 157.3 L591.7 155.6 L595 154 L598.3 152.4 L601.7 150.8 L605 149.1 L608.4 147.5 L611.9 145.9 L615.3 144.2 L618.7 142.6 L622.2 141 L625.7 139.4 L629.2 137.7 L632.8 136.1 L636.4 134.5 L639.9 132.9 L643.5 131.2 L647.2 129.6 L650.8 128 L654.5 126.3 L658.1 124.7 L661.8 123.1 L665.6 121.5 L669.3 119.8 L673.1 118.2 L676.8 116.6 L680.6 115 L684.4 113.3 L688.2 111.7 L692.1 110.1 L695.9 108.4 L699.8 106.8 L703.7 105.2 L707.6 103.6 L711.5 101.9 L715.4 100.3 L719.4 98.7 L723.3 97.1 L727.3 95.4 L731.3 93.8 L735.3 92.2 L739.3 90.5 L743.3 88.9 L747.3 87.3 L751.4 85.7 L755.4 84 L759.5 82.4 L763.6 80.8 L767.7 79.2 L771.8 77.5 L775.9 75.9 L780 74.3 L784.1 72.6 L788.3 71 L792.4 69.4 L796.6 67.8 L800.7 66.1 L804.9 64.5 L809.1 62.9 L813.3 61.3 L817.5 59.6 L821.7 58 L825.9 56.4 L830.1 54.7 L834.3 53.1 L838.5 51.5 L842.8 49.9 L847 48.2 L851.2 46.6 L855.5 45 L859.7 43.4 L863.9 41.7 L868.2 40.1 L872.4 38.5 L876.7 36.8 L881 35.2 L885.2 33.6 L889.5 32 L893.7 30.3 L898 28.7 L902.2 27.1 M902.2 612.9 L897.6 611.3 L892.9 609.7 L888.2 608 L883.5 606.4 L878.8 604.8 L874.1 603.2 L869.5 601.5 L864.8 599.9 L860.1 598.3 L855.4 596.6 L850.8 595 L846.1 593.4 L841.5 591.8 L836.8 590.1 L832.2 588.5 L827.5 586.9 L822.9 585.3 L818.2 583.6 L813.6 582 L809 580.4 L804.4 578.7 L799.8 577.1 L795.2 575.5 L790.6 573.9 L786 572.2 L781.4 570.6 L776.9 569 L772.3 567.4 L767.8 565.7 L763.3 564.1 L758.7 562.5 L754.2 560.8 L749.7 559.2 L745.2 557.6 L740.8 556 L736.3 554.3 L731.8 552.7 L727.4 551.1 L723 549.5 L718.6 547.8 L714.2 546.2 L709.8 544.6 L705.4 542.9 L701.1 541.3 L696.7 539.7 L692.4 538.1 L688.1 536.4 L683.8 534.8 L679.5 533.2 L675.3 531.6 L671.1 529.9 L666.8 528.3 L662.6 526.7 L658.4 525 L654.3 523.4 L650.1 521.8 L646 520.2 L641.9 518.5 L637.8 516.9 L633.7 515.3 L629.7 513.7 L625.7 512 L621.7 510.4 L617.7 508.8 L613.7 507.1 L609.8 505.5 L605.8 503.9 L601.9 502.3 L598.1 500.6 L594.2 499 L590.4 497.4 L586.6 495.8 L582.8 494.1 L579.1 492.5 L575.3 490.9 L571.6 489.2 L567.9 487.6 L564.3 486 L560.7 484.4 L557.1 482.7 L553.5 481.1 L549.9 479.5 L546.4 477.9 L542.9 476.2 L539.4 474.6 L536 473 L532.6 471.3 L529.2 469.7 L525.8 468.1 L522.5 466.5 L519.2 464.8 L515.9 463.2 L512.7 461.6 L509.5 460 L506.3 458.3 L503.2 456.7 L500 455.1 L497 453.4 L493.9 451.8 L490.9 450.2 L487.9 448.6 L484.9 446.9 L482 445.3 L479.1 443.7 L476.2 442.1 L473.4 440.4 L470.6 438.8 L467.8 437.2 L465 435.5 L462.3 433.9 L459.7 432.3 L457 430.7 L454.4 429 L451.9 427.4 L449.3 425.8 L446.8 424.2 L444.4 422.5 L441.9 420.9 L439.5 419.3 L437.2 417.6 L434.8 416 L432.6 414.4 L430.3 412.8 L428.1 411.1 L425.9 409.5 L423.8 407.9 L421.6 406.2 L419.6 404.6 L417.5 403 L415.5 401.4 L413.6 399.7 L411.7 398.1 L409.8 396.5 L407.9 394.9 L406.1 393.2 L404.3 391.6 L402.6 390 L400.9 388.3 L399.2 386.7 L397.6 385.1 L396 383.5 L394.5 381.8 L393 380.2 L391.5 378.6 L390.1 377 L388.7 375.3 L387.3 373.7 L386 372.1 L384.8 370.4 L383.5 368.8 L382.3 367.2 L381.2 365.6 L380.1 363.9 L379 362.3 L378 360.7 L377 359.1 L376 357.4 L375.1 355.8 L374.2 354.2 L373.4 352.5 L372.6 350.9 L371.8 349.3 L371.1 347.7 L370.5 346 L369.8 344.4 L369.2 342.8 L368.7 341.2 L368.2 339.5 L367.7 337.9 L367.3 336.3 L366.9 334.6 L366.5 333 L366.2 331.4 L366 329.8 L365.7 328.1 L365.6 326.5 L365.4 324.9 L365.3 323.3 L365.2 321.6 L365.2 320 L365.2 318.4 L365.3 316.7 L365.4 315.1 L365.6 313.5 L365.7 311.9 L366 310.2 L366.2 308.6 L366.5 307 L366.9 305.4 L367.3 303.7 L367.7 302.1 L368.2 300.5 L368.7 298.8 L369.2 297.2 L369.8 295.6 L370.5 294 L371.1 292.3 L371.8 290.7 L372.6 289.1 L373.4 287.5 L374.2 285.8 L375.1 284.2 L376 282.6 L377 280.9 L378 279.3 L379 277.7 L380.1 276.1 L381.2 274.4 L382.3 272.8 L383.5 271.2 L384.8 269.6 L386 267.9 L387.3 266.3 L388.7 264.7 L390.1 263 L391.5 261.4 L393 259.8 L394.5 258.2 L396 256.5 L397.6 254.9 L399.2 253.3 L400.9 251.7 L402.6 250 L404.3 248.4 L406.1 246.8 L407.9 245.1 L409.8 243.5 L411.7 241.9 L413.6 240.3 L415.5 238.6 L417.5 237 L419.6 235.4 L421.6 233.8 L423.8 232.1 L425.9 230.5 L428.1 228.9 L430.3 227.2 L432.6 225.6 L434.8 224 L437.2 222.4 L439.5 220.7 L441.9 219.1 L444.4 217.5 L446.8 215.8 L449.3 214.2 L451.9 212.6 L454.4 211 L457 209.3 L459.7 207.7 L462.3 206.1 L465 204.5 L467.8 202.8 L470.6 201.2 L473.4 199.6 L476.2 197.9 L479.1 196.3 L482 194.7 L484.9 193.1 L487.9 191.4 L490.9 189.8 L493.9 188.2 L497 186.6 L500 184.9 L503.2 183.3 L506.3 181.7 L509.5 180 L512.7 178.4 L515.9 176.8 L519.2 175.2 L522.5 173.5 L525.8 171.9 L529.2 170.3 L532.6 168.7 L536 167 L539.4 165.4 L542.9 163.8 L546.4 162.1 L549.9 160.5 L553.5 158.9 L557.1 157.3 L560.7 155.6 L564.3 154 L567.9 152.4 L571.6 150.8 L575.3 149.1 L579.1 147.5 L582.8 145.9 L586.6 144.2 L590.4 142.6 L594.2 141 L598.1 139.4 L601.9 137.7 L605.8 136.1 L609.8 134.5 L613.7 132.9 L617.7 131.2 L621.7 129.6 L625.7 128 L629.7 126.3 L633.7 124.7 L637.8 123.1 L641.9 121.5 L646 119.8 L650.1 118.2 L654.3 116.6 L658.4 115 L662.6 113.3 L666.8 111.7 L671.1 110.1 L675.3 108.4 L679.5 106.8 L683.8 105.2 L688.1 103.6 L692.4 101.9 L696.7 100.3 L701.1 98.7 L705.4 97.1 L709.8 95.4 L714.2 93.8 L718.6 92.2 L723 90.5 L727.4 88.9 L731.8 87.3 L736.3 85.7 L740.8 84 L745.2 82.4 L749.7 80.8 L754.2 79.2 L758.7 77.5 L763.3 75.9 L767.8 74.3 L772.3 72.6 L776.9 71 L781.4 69.4 L786 67.8 L790.6 66.1 L795.2 64.5 L799.8 62.9 L804.4 61.3 L809 59.6 L813.6 58 L818.2 56.4 L822.9 54.7 L827.5 53.1 L832.2 51.5 L836.8 49.9 L841.5 48.2 L846.1 46.6 L850.8 45 L855.4 43.4 L860.1 41.7 L864.8 40.1 L869.5 38.5 L874.1 36.8 L878.8 35.2 L883.5 33.6 L888.2 32 L892.9 30.3 L897.6 28.7 L902.2 27.1 M902.2 612.9 L897.1 611.3 L892 609.7 L886.9 608 L881.8 606.4 L876.7 604.8 L871.6 603.2 L866.5 601.5 L861.4 599.9 L856.3 598.3 L851.2 596.6 L846.1 595 L841 593.4 L835.9 591.8 L830.9 590.1 L825.8 588.5 L820.7 586.9 L815.7 585.3 L810.6 583.6 L805.6 582 L800.5 580.4 L795.5 578.7 L790.5 577.1 L785.5 575.5 L780.4 573.9 L775.4 572.2 L770.5 570.6 L765.5 569 L760.5 567.4 L755.6 565.7 L750.6 564.1 L745.7 562.5 L740.8 560.8 L735.9 559.2 L731 557.6 L726.1 556 L721.2 554.3 L716.4 552.7 L711.5 551.1 L706.7 549.5 L701.9 547.8 L697.1 546.2 L692.3 544.6 L687.5 542.9 L682.8 541.3 L678.1 539.7 L673.3 538.1 L668.6 536.4 L664 534.8 L659.3 533.2 L654.7 531.6 L650 529.9 L645.4 528.3 L640.8 526.7 L636.3 525 L631.7 523.4 L627.2 521.8 L622.7 520.2 L618.2 518.5 L613.8 516.9 L609.3 515.3 L604.9 513.7 L600.5 512 L596.1 510.4 L591.8 508.8 L587.5 507.1 L583.2 505.5 L578.9 503.9 L574.6 502.3 L570.4 500.6 L566.2 499 L562 497.4 L557.9 495.8 L553.8 494.1 L549.7 492.5 L545.6 490.9 L541.6 489.2 L537.6 487.6 L533.6 486 L529.6 484.4 L525.7 482.7 L521.8 481.1 L517.9 479.5 L514.1 477.9 L510.2 476.2 L506.5 474.6 L502.7 473 L499 471.3 L495.3 469.7 L491.6 468.1 L488 466.5 L484.4 464.8 L480.8 463.2 L477.3 461.6 L473.8 460 L470.3 458.3 L466.9 456.7 L463.5 455.1 L460.1 453.4 L456.8 451.8 L453.5 450.2 L450.2 448.6 L447 446.9 L443.8 445.3 L440.6 443.7 L437.5 442.1 L434.4 440.4 L431.3 438.8 L428.3 437.2 L425.3 435.5 L422.4 433.9 L419.4 432.3 L416.6 430.7 L413.7 429 L410.9 427.4 L408.2 425.8 L405.4 424.2 L402.7 422.5 L400.1 420.9 L397.5 419.3 L394.9 417.6 L392.4 416 L389.9 414.4 L387.4 412.8 L385 411.1 L382.6 409.5 L380.3 407.9 L378 406.2 L375.7 404.6 L373.5 403 L371.3 401.4 L369.2 399.7 L367.1 398.1 L365 396.5 L363 394.9 L361 393.2 L359.1 391.6 L357.2 390 L355.3 388.3 L353.5 386.7 L351.7 385.1 L350 383.5 L348.3 381.8 L346.7 380.2 L345.1 378.6 L343.5 377 L342 375.3 L340.5 373.7 L339.1 372.1 L337.7 370.4 L336.4 368.8 L335.1 367.2 L333.8 365.6 L332.6 363.9 L331.4 362.3 L330.3 360.7 L329.2 359.1 L328.2 357.4 L327.2 355.8 L326.2 354.2 L325.3 352.5 L324.4 350.9 L323.6 349.3 L322.8 347.7 L322.1 346 L321.4 344.4 L320.8 342.8 L320.2 341.2 L319.6 339.5 L319.1 337.9 L318.6 336.3 L318.2 334.6 L317.8 333 L317.5 331.4 L317.2 329.8 L317 328.1 L316.8 326.5 L316.6 324.9 L316.5 323.3 L316.4 321.6 L316.4 320 L316.4 318.4 L316.5 316.7 L316.6 315.1 L316.8 313.5 L317 311.9 L317.2 310.2 L317.5 308.6 L317.8 307 L318.2 305.4 L318.6 303.7 L319.1 302.1 L319.6 300.5 L320.2 298.8 L320.8 297.2 L321.4 295.6 L322.1 294 L322.8 292.3 L323.6 290.7 L324.4 289.1 L325.3 287.5 L326.2 285.8 L327.2 284.2 L328.2 282.6 L329.2 280.9 L330.3 279.3 L331.4 277.7 L332.6 276.1 L333.8 274.4 L335.1 272.8 L336.4 271.2 L337.7 269.6 L339.1 267.9 L340.5 266.3 L342 264.7 L343.5 263 L345.1 261.4 L346.7 259.8 L348.3 258.2 L350 256.5 L351.7 254.9 L353.5 253.3 L355.3 251.7 L357.2 250 L359.1 248.4 L361 246.8 L363 245.1 L365 243.5 L367.1 241.9 L369.2 240.3 L371.3 238.6 L373.5 237 L375.7 235.4 L378 233.8 L380.3 232.1 L382.6 230.5 L385 228.9 L387.4 227.2 L389.9 225.6 L392.4 224 L394.9 222.4 L397.5 220.7 L400.1 219.1 L402.7 217.5 L405.4 215.8 L408.2 214.2 L410.9 212.6 L413.7 211 L416.6 209.3 L419.4 207.7 L422.4 206.1 L425.3 204.5 L428.3 202.8 L431.3 201.2 L434.4 199.6 L437.5 197.9 L440.6 196.3 L443.8 194.7 L447 193.1 L450.2 191.4 L453.5 189.8 L456.8 188.2 L460.1 186.6 L463.5 184.9 L466.9 183.3 L470.3 181.7 L473.8 180 L477.3 178.4 L480.8 176.8 L484.4 175.2 L488 173.5 L491.6 171.9 L495.3 170.3 L499 168.7 L502.7 167 L506.5 165.4 L510.2 163.8 L514.1 162.1 L517.9 160.5 L521.8 158.9 L525.7 157.3 L529.6 155.6 L533.6 154 L537.6 152.4 L541.6 150.8 L545.6 149.1 L549.7 147.5 L553.8 145.9 L557.9 144.2 L562 142.6 L566.2 141 L570.4 139.4 L574.6 137.7 L578.9 136.1 L583.2 134.5 L587.5 132.9 L591.8 131.2 L596.1 129.6 L600.5 128 L604.9 126.3 L609.3 124.7 L613.8 123.1 L618.2 121.5 L622.7 119.8 L627.2 118.2 L631.7 116.6 L636.3 115 L640.8 113.3 L645.4 111.7 L650 110.1 L654.7 108.4 L659.3 106.8 L664 105.2 L668.6 103.6 L673.3 101.9 L678.1 100.3 L682.8 98.7 L687.5 97.1 L692.3 95.4 L697.1 93.8 L701.9 92.2 L706.7 90.5 L711.5 88.9 L716.4 87.3 L721.2 85.7 L726.1 84 L731 82.4 L735.9 80.8 L740.8 79.2 L745.7 77.5 L750.6 75.9 L755.6 74.3 L760.5 72.6 L765.5 71 L770.5 69.4 L775.4 67.8 L780.4 66.1 L785.5 64.5 L790.5 62.9 L795.5 61.3 L800.5 59.6 L805.6 58 L810.6 56.4 L815.7 54.7 L820.7 53.1 L825.8 51.5 L830.9 49.9 L835.9 48.2 L841 46.6 L846.1 45 L851.2 43.4 L856.3 41.7 L861.4 40.1 L866.5 38.5 L871.6 36.8 L876.7 35.2 L881.8 33.6 L886.9 32 L892 30.3 L897.1 28.7 L902.2 27.1 M750.6 564.1 L1053.9 564.1 M609.3 515.3 L1195.2 515.3 M488 466.5 L1316.5 466.5 M394.9 417.6 L1409.6 417.6 M336.4 368.8 L1468.1 368.8 M316.4 320 L1488.1 320 M336.4 271.2 L1468.1 271.2 M394.9 222.4 L1409.6 222.4 M488 173.5 L1316.5 173.5 M609.3 124.7 L1195.2 124.7 M750.6 75.9 L1053.9 75.9" fill="none" stroke="#7c7c7c" stroke-width="2.08" stroke-dasharray="2.08 3.44"/>
<text x="1488.6" y="330.2" font-family="&quot;Liberation Sans&quot;, sans-serif" font-size="11.5" fill="#8a8a8a" text-anchor="middle">+180<tspan dx="2.5" dy="-3.5" font-size="8">°</tspan></text>
<text x="1391" y="330.2" font-family="&quot;Liberation Sans&quot;, sans-serif" font-size="11.5" fill="#8a8a8a" text-anchor="middle">+210<tspan dx="2.5" dy="-3.5" font-size="8">°</tspan></text>
<text x="1293.3" y="330.2" font-family="&quot;Liberation Sans&quot;, sans-serif" font-size="11.5" fill="#8a8a8a" text-anchor="middle">+240<tspan dx="2.5" dy="-3.5" font-size="8">°</tspan></text>
<text x="1195.7" y="330.2" font-family="&quot;Liberation Sans&quot;, sans-serif" font-size="11.5" fill="#8a8a8a" text-anchor="middle">+270<tspan dx="2.5" dy="-3.5" font-size="8">°</tspan></text>
<text x="1098" y="330.2" font-family="&quot;Liberation Sans&quot;, sans-serif" font-size="11.5" fill="#8a8a8a" text-anchor="middle">+300<tspan dx="2.5" dy="-3.5" font-size="8">°</tspan></text>
<text x="1000.4" y="330.2" font-family="&quot;Liberation Sans&quot;, sans-serif" font-size="11.5" fill="#8a8a8a" text-anchor="middle">+330<tspan dx="2.5" dy="-3.5" font-size="8">°</tspan></text>
<text x="902.8" y="330.2" font-family="&quot;Liberation Sans&quot;, sans-serif" font-size="11.5" fill="#8a8a8a" text-anchor="middle">+0<tspan dx="2.5" dy="-3.5" font-size="8">°</tspan></text>
<text x="805.1" y="330.2" font-family="&quot;Liberation Sans&quot;, sans-serif" font-size="11.5" fill="#8a8a8a" text-anchor="middle">+30<tspan dx="2.5" dy="-3.5" font-size="8">°</tspan></text>
<text x="707.5" y="330.2" font-family="&quot;Liberation Sans&quot;, sans-serif" font-size="11.5" fill="#8a8a8a" text-anchor="middle">+60<tspan dx="2.5" dy="-3.5" font-size="8">°</tspan></text>
<text x="609.8" y="330.2" font-family="&quot;Liberation Sans&quot;, sans-serif" font-size="11.5" fill="#8a8a8a" text-anchor="middle">+90<tspan dx="2.5" dy="-3.5" font-size="8">°</tspan></text>
<text x="512.2" y="330.2" font-family="&quot;Liberation Sans&quot;, sans-serif" font-size="11.5" fill="#8a8a8a" text-anchor="middle">+120<tspan dx="2.5" dy="-3.5" font-size="8">°</tspan></text>
<text x="414.5" y="330.2" font-family="&quot;Liberation Sans&quot;, sans-serif" font-size="11.5" fill="#8a8a8a" text-anchor="middle">+150<tspan dx="2.5" dy="-3.5" font-size="8">°</tspan></text>
<text x="316.9" y="330.2" font-family="&quot;Liberation Sans&quot;, sans-serif" font-size="11.5" fill="#8a8a8a" text-anchor="middle">+180<tspan dx="2.5" dy="-3.5" font-size="8">°</tspan></text>
<text x="902.8" y="220.4" font-family="&quot;Liberation Sans&quot;, sans-serif" font-size="11.5" fill="#8a8a8a" text-anchor="middle">+30<tspan dx="2.5" dy="-3.5" font-size="8">°</tspan></text>
<text x="902.8" y="122.7" font-family="&quot;Liberation Sans&quot;, sans-serif" font-size="11.5" fill="#8a8a8a" text-anchor="middle">+60<tspan dx="2.5" dy="-3.5" font-size="8">°</tspan></text>
<text x="902.8" y="25.1" font-family="&quot;Liberation Sans&quot;, sans-serif" font-size="11.5" fill="#8a8a8a" text-anchor="middle">+90<tspan dx="2.5" dy="-3.5" font-size="8">°</tspan></text>
<text x="902.8" y="429.6" font-family="&quot;Liberation Sans&quot;, sans-serif" font-size="11.5" fill="#8a8a8a" text-anchor="middle">−30<tspan dx="2.5" dy="-3.5" font-size="8">°</tspan></text>
<text x="902.8" y="527.3" font-family="&quot;Liberation Sans&quot;, sans-serif" font-size="11.5" fill="#8a8a8a" text-anchor="middle">−60<tspan dx="2.5" dy="-3.5" font-size="8">°</tspan></text>
<text x="902.8" y="624.9" font-family="&quot;Liberation Sans&quot;, sans-serif" font-size="11.5" fill="#8a8a8a" text-anchor="middle">−90<tspan dx="2.5" dy="-3.5" font-size="8">°</tspan></text>
<path d="M580.4 152 L579.4 153.3 L578.4 154.6 L577.4 155.9 L576.3 157.2 L575.2 158.5 L574.1 159.9 L573 161.3 L571.9 162.7 L570.7 164.1 L569.6 165.5 L568.4 167 L567.2 168.4 L566 169.9 L564.8 171.4 L563.7 172.9 L562.5 174.4 L561.3 175.9 L560.1 177.5 L558.9 179 L557.7 180.6 L556.5 182.2 L555.3 183.8 L554.1 185.4 L553 187 L551.8 188.6 L550.7 190.2 L549.5 191.9 L548.4 193.5 L547.3 195.2 L546.2 196.8 L545.2 198.5 L544.1 200.2 L543.1 201.9 L542.1 203.6 L541.1 205.3 L540.1 207 L539.2 208.7 L538.2 210.4 L537.3 212.1 L536.4 213.9 L535.6 215.6 L534.7 217.3 L533.9 219.1 L533.2 220.9 L532.4 222.6 L531.7 224.4 L531 226.2 L530.3 227.9 L529.7 229.7 L529 231.5 L528.5 233.3 L527.9 235.1 L527.4 236.9 L526.9 238.7 L526.4 240.5 L526 242.3 L525.6 244.1 L525.3 245.9 L524.9 247.7 L524.6 249.6 L524.4 251.4 L524.1 253.2 L524 255 L523.8 256.9 L523.7 258.7 L523.6 260.5 L523.5 262.4 L523.5 264.2 L523.5 266.1 L523.6 267.9 L523.7 269.8 L523.8 271.6 L523.9 273.5 L524.1 275.3 L524.4 277.2 L524.6 279 L525 280.9 L525.3 282.7 L525.7 284.6 L526.1 286.5 L526.6 288.3 L527 290.2 L527.6 292.1 L528.1 293.9 L528.8 295.8 L529.4 297.7 L530.1 299.5 L530.8 301.4 L531.5 303.3 L532.3 305.2 L533.2 307 L534 308.9 L534.9 310.8 L535.9 312.6 L536.8 314.5 L537.9 316.4 L538.9 318.3 L540 320.1 L541.1 322 L542.3 323.9 L543.5 325.8 L544.7 327.6 L546 329.5 L547.3 331.4 L548.6 333.3 L550 335.1 L551.4 337 L552.8 338.9 L554.3 340.7 L555.8 342.6 L557.4 344.5 L559 346.4 L560.6 348.2 L562.3 350.1 L563.9 352 L565.7 353.8 L567.4 355.7 L569.2 357.5 L571 359.4 L572.9 361.3 L574.8 363.1 L576.7 365 L578.6 366.8 L580.6 368.7 L582.6 370.5 L584.6 372.4 L586.7 374.2 L588.8 376.1 L590.9 377.9 L593.1 379.7 L595.3 381.6 L597.5 383.4 L599.7 385.2 L602 387.1 L604.3 388.9 L606.6 390.7 L609 392.5 L611.4 394.4 L613.8 396.2 L616.2 398 L618.6 399.8 L621.1 401.6 L623.6 403.4 L626.1 405.2 L628.7 407 M971.4 92.1 L974.1 94.2 L976.9 96.3 L979.6 98.4 L982.4 100.5 L985.1 102.6 L987.8 104.7 L990.5 106.8 L993.2 108.9 L995.9 111 L998.6 113.1 L1001.3 115.3 L1004 117.4 L1006.6 119.5 L1009.3 121.6 L1011.9 123.8 L1014.5 125.9 L1017.1 128 L1019.7 130.2 L1022.3 132.3 L1024.9 134.5 L1027.4 136.6 L1030 138.7 L1032.5 140.9 L1035 143 L1037.5 145.2 L1040 147.3 L1042.4 149.4 L1044.8 151.6 L1047.3 153.7 L1049.7 155.9 L1052 158 L1054.4 160.2 L1056.7 162.3 L1059.1 164.5 L1061.4 166.6 L1063.7 168.8 L1065.9 170.9 L1068.2 173.1 L1070.4 175.3 L1072.6 177.4 L1074.7 179.6 L1076.9 181.7 L1079 183.9 L1081.1 186 L1083.2 188.2 L1085.3 190.3 L1087.3 192.5 L1089.3 194.7 L1091.3 196.8 L1093.2 199 L1095.2 201.1 L1097.1 203.3 L1099 205.4 L1100.8 207.6 L1102.6 209.8 L1104.4 211.9 L1106.2 214.1 L1108 216.2 L1109.7 218.4 L1111.4 220.6 L1113 222.7 L1114.7 224.9 L1116.3 227 L1117.9 229.2 L1119.4 231.4 L1120.9 233.5 L1122.4 235.7 L1123.9 237.8 L1125.3 240 L1126.7 242.2 L1128.1 244.3 L1129.4 246.5 L1130.7 248.7 L1132 250.8 L1133.3 253 L1134.5 255.1 L1135.7 257.3 L1136.8 259.5 L1138 261.6 L1139.1 263.8 L1140.1 266 L1141.2 268.1 L1142.1 270.3 L1143.1 272.4 L1144 274.6 L1144.9 276.8 L1145.8 278.9 L1146.7 281.1 L1147.5 283.3 L1148.2 285.4 L1149 287.6 L1149.7 289.8 L1150.3 291.9 L1151 294.1 L1151.6 296.2 L1152.1 298.4 L1152.7 300.6 L1153.2 302.7 L1153.6 304.9 L1154.1 307.1 L1154.5 309.2 L1154.8 311.4 L1155.2 313.6 L1155.5 315.7 L1155.7 317.9 L1156 320 L1156.2 322.2 L1156.3 324.4 L1156.5 326.5 L1156.6 328.7 L1156.6 330.9 L1156.6 333 L1156.6 335.2 L1156.6 337.4 L1156.5 339.5 L1156.4 341.7 L1156.2 343.8 L1156.1 346 L1155.9 348.2 L1155.6 350.3 L1155.3 352.5 L1155 354.7 L1154.7 356.8 L1154.3 359 L1153.8 361.2 L1153.4 363.3 L1152.9 365.5 L1152.4 367.6 L1151.8 369.8 L1151.2 372 L1150.6 374.1 L1150 376.3 L1149.3 378.5 L1148.6 380.6 L1147.8 382.8 L1147 384.9 L1146.2 387.1 L1145.4 389.3 L1144.5 391.4 L1143.6 393.6 L1142.6 395.8 L1141.6 397.9 L1140.6 400.1 L1139.6 402.2 L1138.5 404.4 L1137.4 406.6 L1136.2 408.7 L1135.1 410.9 L1133.9 413.1 L1132.6 415.2 L1131.4 417.4 L1130.1 419.5 L1128.7 421.7 L1127.4 423.9 L1126 426 L1124.6 428.2 L1123.1 430.3 L1121.7 432.5 L1120.1 434.6 L1118.6 436.8 L1117 439 M996.7 83.4 L996.5 82.2 L996.3 81 L996.2 79.9 L996.3 78.8 L996.5 77.8 L996.8 76.9 L997.2 76.1 L997.8 75.3 L998.6 74.6 L999.5 74.1 L1000.7 73.6 L1002 73.2 L1003.5 72.9 L1005.3 72.7 L1007.3 72.6 L1009.5 72.6 L1011.9 72.8 L1014.6 73 L1017.5 73.3 L1020.7 73.7 L1024.1 74.2 L1027.7 74.8 L1031.6 75.5 L1035.6 76.3 L1039.9 77.1 L1044.4 78.1 L1049.1 79.1 L1053.9 80.1 L1059 81.3 L1064.2 82.5 L1069.5 83.7 L1075 85 L1080.7 86.4 L1086.4 87.8 L1092.3 89.3 L1098.3 90.7 M703.1 92.3 L700 93.8 L696.9 95.4 L693.7 97 L690.5 98.7 L687.2 100.4 L683.9 102.1 L680.5 103.8 L677 105.5 L673.6 107.3 L670.1 109.1 L666.6 110.9 L663 112.7 L659.5 114.5 L655.9 116.4 L652.3 118.2 L648.8 120.1 L645.2 122 L641.6 123.9 L638 125.8 L634.4 127.7 L630.8 129.6 L627.2 131.6 L623.7 133.5 L620.1 135.5 L616.6 137.4 L613.1 139.4 L609.6 141.4 L606.1 143.3 L602.6 145.3 L599.2 147.3 L595.8 149.3 L592.4 151.3 L589 153.3 L585.7 155.3 L582.3 157.4 L579 159.4 L575.8 161.4 L572.6 163.4 L569.4 165.5 L566.2 167.5 L563.1 169.5 L560 171.6 L556.9 173.6 L553.9 175.7 L550.9 177.7 L548 179.8 L545 181.8 L542.2 183.9 L539.3 185.9 L536.6 188 L533.8 190.1 L531.1 192.1 L528.4 194.2 L525.8 196.3 L523.2 198.4 L520.7 200.4 L518.2 202.5 L515.8 204.6 L513.4 206.7 L511 208.8 L508.7 210.8 L506.4 212.9 L504.2 215 L502.1 217.1 L499.9 219.2 L497.9 221.3 L495.9 223.4 L493.9 225.5 L492 227.6 L490.1 229.6 L488.3 231.7 L486.5 233.8 L484.8 235.9 L483.1 238 L481.5 240.1 L480 242.2 L478.5 244.3 L477 246.4 L475.6 248.5 L474.3 250.6 L473 252.7 L471.7 254.8 L470.6 257 L469.4 259.1 L468.4 261.2 L467.3 263.3 L466.4 265.4 L465.5 267.5 L464.6 269.6 L463.8 271.7 L463.1 273.8 L462.4 275.9 L461.8 278 L461.2 280.1 L460.7 282.2 L460.2 284.4 L459.8 286.5 L459.5 288.6 L459.2 290.7 L459 292.8 L458.8 294.9 L458.7 297 L458.6 299.1 L458.6 301.2 L458.6 303.4 L458.7 305.5 L458.9 307.6 L459.1 309.7 L459.4 311.8 L459.7 313.9 L460.1 316 L460.6 318.2 L461.1 320.3 L461.7 322.4 L462.3 324.5 L462.9 326.6 L463.7 328.7 L464.5 330.8 L465.3 332.9 L466.2 335.1 L467.2 337.2 L468.2 339.3 L469.2 341.4 L470.4 343.5 L471.5 345.6 L472.8 347.7 L474.1 349.8 L475.4 352 L476.8 354.1 L478.3 356.2 L479.8 358.3 L481.3 360.4 L482.9 362.5 L484.6 364.6 L486.3 366.7 L488.1 368.8 L489.9 370.9 L491.8 373 L493.7 375.2 L495.7 377.3 L497.8 379.4 L499.8 381.5 L502 383.6 L504.2 385.7 L506.4 387.8 L508.7 389.9 L511 392 L513.4 394.1 L515.8 396.2 L518.3 398.3 L520.9 400.4 L523.4 402.5 L526.1 404.6 L528.7 406.7 L531.5 408.8 L534.2 410.9 L537 413 L539.9 415.1 L542.8 417.2 L545.7 419.3 L548.7 421.3 L551.7 423.4 L554.8 425.5 L557.9 427.6 L561.1 429.7 L564.3 431.8 L567.5 433.9 L570.8 435.9 L574.1 438 L577.5 440.1 L580.8 442.2 L584.3 444.2 L587.7 446.3 L591.2 448.4 L594.8 450.4 L598.4 452.5 L602 454.6 L605.6 456.6 L609.3 458.7 L613 460.7 M1000.6 101.7 L1000.1 100.1 L999.6 98.5 L999.1 97 L998.7 95.5 L998.3 94 L997.9 92.6 L997.7 91.2 L997.4 89.9 L997.2 88.6 L997.1 87.3 L997.1 86.1 L997.2 85 L997.3 83.9 L997.5 82.9 L997.9 81.9 L998.3 81 L998.9 80.2 L999.6 79.4 L1000.5 78.8 L1001.5 78.2 L1002.6 77.7 L1004 77.3 L1005.5 76.9 L1007.2 76.7 L1009 76.6 L1011.1 76.5 L1013.4 76.6 L1015.9 76.7 L1018.6 76.9 L1021.4 77.3 L1024.5 77.7 L1027.9 78.2 L1031.4 78.8 L1035.1 79.4 L1039 80.2 L1043 81 L1047.3 81.9 L1051.7 82.9 L1056.3 83.9 L1061.1 85 L1066 86.1 L1071.1 87.3 L1076.2 88.6 L1081.5 89.9 L1087 91.2 L1092.5 92.6 L1098.1 94 L1103.8 95.5 L1109.6 97 L1115.5 98.5 L1121.5 100.1 L1127.5 101.7 L1133.6 103.3 L1139.8 105 M661.1 106.6 L657.6 108.3 L654.2 110.1 L650.7 111.8 L647.1 113.5 L643.6 115.3 L640 117.1 L636.4 118.9 L632.8 120.7 L629.2 122.6 L625.5 124.4 L621.9 126.3 L618.3 128.1 L614.6 130 L611 131.9 L607.4 133.8 L603.8 135.7 L600.1 137.6 L596.6 139.5 L593 141.5 L589.4 143.4 L585.9 145.4 L582.3 147.3 L578.8 149.3 L575.3 151.2 L571.9 153.2 L568.4 155.2 L565 157.2 L561.6 159.2 L558.3 161.2 L555 163.2 L551.7 165.2 L548.4 167.2 L545.2 169.2 L542 171.2 L538.8 173.2 L535.7 175.2 L532.6 177.3 L529.6 179.3 L526.6 181.3 L523.6 183.3 L520.6 185.4 L517.8 187.4 L514.9 189.5 L512.1 191.5 L509.3 193.6 L506.6 195.6 L503.9 197.7 L501.3 199.7 L498.7 201.8 L496.2 203.8 L493.7 205.9 L491.2 207.9 L488.8 210 L486.5 212.1 L484.2 214.1 L481.9 216.2 L479.7 218.3 L477.5 220.4 L475.4 222.4 L473.4 224.5 L471.4 226.6 L469.4 228.7 L467.5 230.7 L465.7 232.8 L463.9 234.9 L462.2 237 L460.5 239.1 L458.8 241.1 L457.3 243.2 L455.7 245.3 L454.3 247.4 L452.9 249.5 L451.5 251.6 L450.2 253.7 L449 255.7 L447.8 257.8 L446.6 259.9 L445.6 262 L444.5 264.1 L443.6 266.2 L442.7 268.3 L441.8 270.4 L441 272.5 L440.3 274.6 L439.6 276.7 L439 278.8 L438.5 280.9 L438 282.9 L437.5 285 L437.1 287.1 L436.8 289.2 L436.6 291.3 L436.4 293.4 L436.2 295.5 L436.1 297.6 L436.1 299.7 L436.1 301.8 L436.2 303.9 L436.4 306 L436.6 308.1 L436.8 310.2 L437.2 312.3 L437.5 314.4 L438 316.5 L438.5 318.6 L439.1 320.7 L439.7 322.8 L440.3 324.9 L441.1 327 L441.9 329.1 L442.7 331.2 L443.6 333.3 L444.6 335.4 L445.6 337.5 L446.7 339.6 L447.9 341.7 L449.1 343.8 L450.3 345.9 L451.6 348 L453 350.1 L454.4 352.2 L455.9 354.3 L457.5 356.4 L459.1 358.5 L460.7 360.6 L462.4 362.7 L464.2 364.8 L466 366.9 L467.9 369 L469.8 371.1 L471.8 373.1 L473.8 375.2 L475.9 377.3 L478.1 379.4 L480.3 381.5 L482.5 383.6 L484.8 385.7 L487.2 387.8 L489.6 389.9 L492 392 L494.5 394 L497.1 396.1 L499.7 398.2 L502.3 400.3 L505 402.4 M1025 124.2 L1022.2 122.1 L1019.3 119.9 L1016.4 117.8 L1013.6 115.6 L1010.7 113.5 L1007.8 111.4 L1004.8 109.2 L1001.9 107.1 L999 105 L996 102.8 L993.1 100.7 L990.1 98.6 L987.1 96.5 L984.2 94.4 L981.2 92.2 L978.2 90.1 L975.2 88 L972.2 85.9 L969.2 83.9 L966.2 81.8 L963.2 79.7 L960.2 77.6 L957.2 75.6 L954.2 73.5 L951.2 71.5 L948.2 69.5 L945.3 67.4 L942.3 65.5 L939.4 63.5 L936.5 61.5 L933.6 59.6 L930.7 57.8 L927.9 55.9 L925.1 54.1 L922.4 52.4 L919.7 50.7 L917.1 49.2 L914.6 47.7 L912.1 46.4 L909.7 45.2 L907.4 44.3 L905.2 43.6 L903 43.1 L900.9 42.9 L898.7 43.1 L896.4 43.5 L894.1 44.2 L891.6 45.1 L889 46.2 L886.3 47.5 L883.5 48.9 L880.6 50.5 L877.6 52.1 L874.5 53.8 L871.4 55.6 L868.2 57.5 L865 59.3 L861.8 61.2 L858.5 63.2 L855.2 65.1 L851.8 67.1 L848.5 69.1 L845.1 71.2 L841.8 73.2 L838.4 75.2 L835 77.3 L831.6 79.4 L828.2 81.4 L824.8 83.5 L821.4 85.6 L818 87.7 L814.6 89.8 L811.3 91.9 L807.9 94 L804.5 96.1 L801.1 98.3 L797.8 100.4 L794.4 102.5 L791.1 104.6 L787.8 106.8 L784.5 108.9 L781.2 111 L777.9 113.2 L774.6 115.3 L771.4 117.4 L768.1 119.6 L764.9 121.7 L761.7 123.9 L758.5 126 L755.3 128.2 L752.1 130.3 L749 132.5 L745.9 134.6 L742.8 136.8 L739.7 138.9 L736.6 141.1 L733.6 143.2 L730.6 145.4 L727.6 147.5 L724.6 149.7 L721.7 151.8 L718.7 154 L715.8 156.1 L713 158.3 L710.1 160.5 L707.3 162.6 L704.5 164.8 L701.7 166.9 L698.9 169.1 L696.2 171.3 L693.5 173.4 L690.8 175.6 L688.2 177.7 L685.6 179.9 L683 182.1 L680.5 184.2 L677.9 186.4 L675.4 188.5 L673 190.7 L670.5 192.9 L668.1 195 L665.8 197.2 L663.4 199.4 L661.1 201.5 L658.8 203.7 L656.6 205.9 L654.4 208 L652.2 210.2 L650 212.4 L647.9 214.5 L645.9 216.7 L643.8 218.8 L641.8 221 L639.8 223.2 L637.9 225.3 L636 227.5 L634.1 229.7 L632.3 231.8 L630.5 234 L628.7 236.2 L627 238.3 L625.3 240.5 L623.7 242.7 L622.1 244.8 L620.5 247 L619 249.2 L617.5 251.3 L616 253.5 L614.6 255.7 L613.2 257.9 L611.9 260 L610.6 262.2 L609.3 264.4 L608.1 266.5 L606.9 268.7 L605.8 270.9 L604.7 273 L603.6 275.2 L602.6 277.4 L601.6 279.5 L600.7 281.7 L599.8 283.9 L598.9 286 L598.1 288.2 L597.3 290.4 L596.6 292.5 L595.9 294.7 L595.3 296.9 L594.7 299 L594.1 301.2 L593.6 303.4 L593.1 305.6 L592.6 307.7 L592.2 309.9 L591.9 312.1 L591.6 314.2 L591.3 316.4 L591 318.6 L590.9 320.7 L590.7 322.9 L590.6 325.1 L590.5 327.2 L590.5 329.4 L590.5 331.6 L590.6 333.7 L590.7 335.9 L590.8 338.1 L591 340.3 L591.3 342.4 L591.5 344.6 L591.8 346.8 L592.2 348.9 L592.6 351.1 L593 353.3 L593.5 355.4 L594 357.6 L594.6 359.8 L595.2 361.9 L595.9 364.1 L596.5 366.3 L597.3 368.4 L598 370.6 L598.9 372.8 L599.7 374.9 L600.6 377.1 L601.5 379.3 L602.5 381.4 L603.5 383.6 L604.6 385.8 L605.7 387.9 L606.8 390.1 L608 392.3 M946.1 110.6 L943.7 109.4 L941.3 108.2 L939 107.1 L936.7 106 L934.3 105 L932 104 L929.7 103 L927.5 102.1 L925.2 101.3 L923 100.5 L920.7 99.7 L918.5 99 L916.3 98.4 L914.1 97.8 L912 97.3 L909.8 96.9 L907.6 96.5 L905.4 96.1 L903.3 95.9 L901.1 95.6 L899 95.5 L896.8 95.4 L894.6 95.4 L892.4 95.5 L890.3 95.6 L888.1 95.8 L885.9 96 L883.6 96.4 L881.4 96.7 L879.1 97.2 L876.9 97.7 L874.6 98.2 L872.2 98.9 L869.9 99.5 L867.5 100.3 L865.2 101.1 L862.7 101.9 L860.3 102.8 L857.9 103.7 L855.4 104.7 L852.9 105.7 L850.3 106.8 L847.8 107.9 L845.2 109.1 L842.6 110.3 L840 111.5 L837.3 112.7 L834.7 114 L832 115.4 L829.3 116.7 L826.6 118.1 L823.8 119.5 L821.1 121 L818.3 122.4 L815.5 123.9 L812.7 125.4 L809.9 127 L807.1 128.5 L804.3 130.1 L801.4 131.7 L798.6 133.3 L795.7 134.9 L792.9 136.6 L790 138.2 L787.1 139.9 L784.3 141.6 L781.4 143.3 L778.5 145 L775.6 146.8 L772.7 148.5 L769.9 150.3 L767 152.1 L764.1 153.8 L761.3 155.6 L758.4 157.4 L755.5 159.2 L752.7 161 L749.8 162.9 L747 164.7 L744.1 166.5 L741.3 168.4 L738.5 170.2 L735.7 172.1 L732.9 174 L730.1 175.9 L727.3 177.7 L724.6 179.6 L721.8 181.5 L719.1 183.4 L716.4 185.3 L713.7 187.2 L711 189.1 L708.3 191.1 L705.7 193 L703 194.9 L700.4 196.8 L697.8 198.8 L695.2 200.7 L692.7 202.7 L690.1 204.6 L687.6 206.6 L685.1 208.5 L682.6 210.5 L680.2 212.4 L677.7 214.4 L675.3 216.4 L672.9 218.3 L670.5 220.3 L668.2 222.3 L665.9 224.3 L663.6 226.2 L661.3 228.2 L659.1 230.2 L656.9 232.2 L654.7 234.2 L652.5 236.2 L650.4 238.2 L648.3 240.2 L646.2 242.2 L644.1 244.2 L642.1 246.2 L640.1 248.2 L638.1 250.2 L636.2 252.2 L634.3 254.2 L632.4 256.2 L630.6 258.2 L628.8 260.2 L627 262.2 L625.2 264.2 L623.5 266.2 L621.8 268.2 L620.2 270.3 L618.5 272.3 L616.9 274.3 L615.4 276.3 L613.9 278.3 L612.4 280.3 L610.9 282.4 L609.5 284.4 L608.1 286.4 L606.8 288.4 L605.4 290.4 L604.1 292.5 L602.9 294.5 L601.7 296.5 L600.5 298.5 L599.4 300.6 L598.3 302.6 L597.2 304.6 L596.1 306.6 L595.1 308.7 L594.2 310.7 L593.3 312.7 L592.4 314.7 L591.5 316.8 L590.7 318.8 L589.9 320.8 L589.2 322.9 L588.5 324.9 L587.8 326.9 L587.1 328.9 L586.6 331 L586 333 L585.5 335 L585 337 L584.5 339.1 L584.1 341.1 L583.8 343.1 L583.4 345.1 L583.1 347.2 L582.9 349.2 L582.6 351.2 L582.5 353.2 L582.3 355.2 L582.2 357.3 L582.1 359.3 L582.1 361.3 L582.1 363.3 L582.1 365.3 L582.2 367.4 L582.3 369.4 L582.5 371.4 L582.7 373.4 L582.9 375.4 L583.1 377.4 L583.4 379.4 L583.8 381.4 L584.1 383.5 L584.6 385.5 L585 387.5 L585.5 389.5 L586 391.5 L586.5 393.5 L587.1 395.5 L587.7 397.5 L588.4 399.5 L589.1 401.5 L589.8 403.5 L590.6 405.4 L591.3 407.4 L592.2 409.4 L593 411.4 L593.9 413.4 L594.8 415.4 L595.8 417.3 L596.8 419.3 L597.8 421.3 L598.8 423.3 L599.9 425.2 L601 427.2 L602.2 429.2 L603.4 431.1 L604.6 433.1 L605.8 435 L607 437 L608.3 438.9 L609.6 440.9 L611 442.8 L612.4 444.7 L613.8 446.7 L615.2 448.6 M955.9 105.7 L953.8 103.7 L951.7 101.6 L949.7 99.6 L947.6 97.6 L945.5 95.6 L943.4 93.6 L941.3 91.7 L939.3 89.7 L937.2 87.8 L935.1 85.8 L933.1 83.9 L931 82 L929 80.1 L927 78.3 L924.9 76.5 L922.9 74.7 L920.9 72.9 L918.9 71.2 L916.9 69.5 L915 67.9 L913 66.3 L911.1 64.7 L909.2 63.3 L907.3 61.9 L905.4 60.6 L903.5 59.3 L901.6 58.2 L899.7 57.2 L897.8 56.4 L895.9 55.6 L894 55 L892 54.6 L889.9 54.4 L887.8 54.3 L885.6 54.3 L883.2 54.6 L880.8 55 L878.2 55.6 L875.6 56.3 L872.7 57.2 L869.8 58.2 L866.8 59.3 L863.6 60.5 L860.3 61.8 L857 63.2 L853.5 64.7 L850 66.2 L846.4 67.8 L842.7 69.5 L839 71.1 L835.2 72.9 L831.4 74.6 L827.5 76.4 L823.6 78.3 L819.7 80.1 L815.7 82 L811.7 83.9 L807.7 85.8 L803.7 87.7 L799.6 89.7 L795.6 91.6 L791.5 93.6 L787.5 95.6 L783.4 97.6 L779.3 99.6 L775.3 101.6 L771.2 103.6 L767.1 105.7 L763.1 107.7 L759 109.7 L755 111.8 L750.9 113.8 L746.9 115.9 L742.9 118 L738.9 120 L734.9 122.1 L730.9 124.2 L727 126.3 L723 128.4 L719.1 130.5 L715.2 132.6 L711.3 134.7 L707.4 136.8 L703.6 138.9 L699.7 141 L695.9 143.1 L692.1 145.2 L688.4 147.3 L684.6 149.4 L680.9 151.5 L677.3 153.6 L673.6 155.8 L670 157.9 L666.4 160 L662.8 162.1 L659.2 164.2 L655.7 166.4 L652.2 168.5 L648.8 170.6 L645.4 172.8 L642 174.9 L638.6 177 L635.3 179.2 L632 181.3 L628.7 183.4 L625.5 185.6 L622.3 187.7 L619.2 189.8 L616 192 L613 194.1 L609.9 196.2 L606.9 198.4 L603.9 200.5 L601 202.7 L598.1 204.8 L595.3 207 L592.5 209.1 L589.7 211.2 L587 213.4 L584.3 215.5 L581.6 217.7 L579 219.8 L576.5 222 L573.9 224.1 L571.5 226.3 L569 228.4 L566.6 230.5 L564.3 232.7 L562 234.8 L559.7 237 L557.5 239.1 L555.4 241.3 L553.3 243.4 L551.2 245.6 L549.2 247.7 L547.2 249.9 L545.2 252 L543.4 254.2 L541.5 256.3 L539.7 258.5 L538 260.6 L536.3 262.8 L534.6 264.9 L533.1 267.1 L531.5 269.3 L530 271.4 L528.6 273.6 L527.2 275.7 L525.8 277.9 L524.5 280 L523.3 282.2 L522.1 284.3 L520.9 286.5 L519.8 288.6 L518.8 290.8 L517.8 292.9 L516.8 295.1 L516 297.2 L515.1 299.4 L514.3 301.5 L513.6 303.7 L512.9 305.9 L512.3 308 L511.7 310.2 L511.2 312.3 L510.7 314.5 L510.3 316.6 L509.9 318.8 L509.6 320.9 L509.3 323.1 L509.1 325.2 L508.9 327.4 L508.8 329.5 L508.8 331.7 L508.7 333.9 L508.8 336 L508.9 338.2 L509 340.3 L509.3 342.5 L509.5 344.6 L509.8 346.8 L510.2 348.9 L510.6 351.1 L511.1 353.2 L511.6 355.4 L512.1 357.5 L512.8 359.7 L513.4 361.8 L514.2 364 L514.9 366.1 L515.8 368.3 L516.7 370.5 L517.6 372.6 L518.6 374.8 L519.6 376.9 L520.7 379.1 L521.8 381.2 L523 383.4 L524.2 385.5 L525.5 387.7 L526.9 389.8 L528.3 392 L529.7 394.1 L531.2 396.3 L532.7 398.4 L534.3 400.6 L535.9 402.7 L537.6 404.9 L539.3 407 L541.1 409.2 L542.9 411.3 L544.8 413.4 L546.7 415.6 L548.7 417.7 L550.7 419.9 L552.7 422 L554.8 424.2 L557 426.3 L559.2 428.5 L561.4 430.6 L563.7 432.8 L566 434.9 L568.4 437 L570.8 439.2 L573.3 441.3 L575.8 443.5 L578.3 445.6 L580.9 447.7 L583.5 449.9 L586.2 452 L588.9 454.1 L591.6 456.3 L594.4 458.4 L597.2 460.6 L600.1 462.7 L603 464.8 L605.9 466.9 L608.9 469.1 L611.9 471.2 L614.9 473.3 L618 475.5 L621.1 477.6 L624.3 479.7 L627.5 481.8 L630.7 484 L633.9 486.1 L637.2 488.2 L640.5 490.3 M1093.2 130 L1093.6 129.1 L1094.1 128.2 L1094.6 127.3 L1095.1 126.5 L1095.8 125.7 L1096.5 124.9 L1097.2 124.2 L1098.1 123.6 L1099 122.9 L1099.9 122.3 L1101 121.8 L1102.1 121.3 L1103.4 120.8 L1104.7 120.4 L1106.1 120 L1107.5 119.7 L1109.1 119.4 L1110.8 119.2 L1112.6 119 L1114.4 118.8 L1116.4 118.7 L1118.5 118.7 L1120.6 118.7 L1122.9 118.7 L1125.3 118.8 L1127.8 119 L1130.3 119.2 L1133 119.4 L1135.8 119.7 L1138.7 120 L1141.7 120.4 L1144.9 120.8 L1148.1 121.2 L1151.4 121.7 L1154.8 122.3 L1158.3 122.9 L1161.9 123.5 L1165.7 124.2 L1169.5 124.9 L1173.4 125.6 L1177.4 126.4 L1181.4 127.2 L1185.6 128.1 L1189.8 129 L1194.2 129.9 L1198.6 130.9 L1203 131.9 L1207.6 132.9 L1212.2 134 L1216.9 135.1 L1221.6 136.2 L1226.4 137.3 L1231.3 138.5 M570.9 139.7 L569.6 140.9 L568.2 142.2 L566.8 143.4 L565.3 144.7 L563.8 146 L562.2 147.4 L560.7 148.7 L559.1 150.1 L557.4 151.5 L555.8 152.9 L554.1 154.3 L552.4 155.8 L550.7 157.3 L549 158.7 L547.2 160.2 L545.5 161.8 L543.7 163.3 L541.9 164.8 L540.2 166.4 L538.4 168 L536.6 169.5 L534.9 171.1 L533.1 172.7 L531.3 174.4 L529.6 176 L527.8 177.6 L526.1 179.3 L524.4 180.9 L522.6 182.6 L520.9 184.3 L519.3 186 L517.6 187.7 L515.9 189.4 L514.3 191.1 L512.7 192.8 L511.1 194.6 L509.5 196.3 L508 198 L506.4 199.8 L504.9 201.5 L503.4 203.3 L502 205.1 L500.6 206.9 L499.2 208.6 L497.8 210.4 L496.5 212.2 L495.1 214 L493.9 215.8 L492.6 217.6 L491.4 219.4 L490.2 221.3 L489.1 223.1 L488 224.9 L486.9 226.7 L485.8 228.6 L484.8 230.4 L483.9 232.2 L482.9 234.1 L482 235.9 L481.2 237.8 L480.3 239.6 L479.6 241.5 L478.8 243.4 L478.1 245.2 L477.4 247.1 L476.8 249 L476.2 250.8 L475.7 252.7 L475.2 254.6 L474.7 256.5 L474.3 258.4 L473.9 260.2 L473.6 262.1 L473.3 264 L473 265.9 L472.8 267.8 L472.7 269.7 L472.5 271.6 L472.5 273.5 L472.4 275.4 L472.4 277.3 L472.5 279.2 L472.6 281.1 L472.7 283 L472.9 284.9 L473.1 286.8 L473.4 288.7 L473.7 290.6 L474.1 292.5 L474.5 294.4 L475 296.3 L475.5 298.3 L476 300.2 L476.6 302.1 L477.2 304 L477.9 305.9 L478.6 307.8 L479.4 309.7 L480.2 311.6 L481 313.6 L481.9 315.5 L482.9 317.4 L483.9 319.3 L484.9 321.2 L486 323.1 L487.1 325.1 L488.3 327 L489.5 328.9 L490.7 330.8 L492 332.7 L493.3 334.6 L494.7 336.5 L496.1 338.5 L497.6 340.4 L499.1 342.3 L500.7 344.2 L502.3 346.1 L503.9 348 L505.6 349.9 L507.3 351.8 L509 353.7 L510.8 355.6 L512.7 357.6 L514.6 359.5 L516.5 361.4 L518.4 363.3 L520.4 365.2 L522.5 367.1 L524.5 369 L526.6 370.8 L528.8 372.7 L531 374.6 L533.2 376.5 L535.5 378.4 L537.8 380.3 L540.1 382.2 L542.5 384.1 L544.9 385.9 L547.3 387.8 L549.8 389.7 L552.3 391.6 L554.8 393.4 L557.4 395.3 L560 397.2 L562.6 399 L565.3 400.9 L568 402.7 L570.7 404.6 L573.5 406.4 L576.3 408.3 L579.1 410.1 L581.9 412 L584.8 413.8 L587.7 415.6 L590.6 417.4 L593.6 419.3 L596.6 421.1 L599.5 422.9 L602.6 424.7 L605.6 426.5 L608.7 428.3 L611.8 430.1 L614.9 431.9 L618 433.6 L621.2 435.4 L624.3 437.2 L627.5 439 L630.7 440.7 L633.9 442.5 L637.2 444.2 L640.4 445.9 L643.7 447.7 L647 449.4 L650.3 451.1 L653.6 452.8 L656.9 454.5 M833.3 190 L831 190.5 L828.7 191 L826.4 191.5 L824.1 192.1 L821.8 192.6 L819.5 193.2 L817.2 193.8 L814.9 194.4 L812.6 195.1 L810.2 195.7 L807.9 196.4 L805.6 197.1 L803.2 197.8 L800.9 198.6 L798.5 199.3 L796.1 200.1 L793.8 200.8 L791.4 201.6 L789 202.5 L786.6 203.3 L784.2 204.1 L781.8 205 L779.4 205.9 L777 206.8 L774.6 207.7 L772.2 208.6 L769.8 209.5 L767.4 210.5 L764.9 211.4 L762.5 212.4 L760.1 213.4 L757.6 214.4 L755.2 215.4 L752.8 216.5 L750.3 217.5 L747.9 218.5 L745.5 219.6 L743 220.7 L740.6 221.8 L738.2 222.9 L735.7 224 L733.3 225.1 L730.8 226.2 L728.4 227.4 L726 228.5 L723.5 229.7 L721.1 230.8 L718.7 232 L716.3 233.2 L713.8 234.4 L711.4 235.6 L709 236.8 L706.6 238.1 L704.2 239.3 L701.8 240.5 L699.4 241.8 L697 243 L694.6 244.3 L692.2 245.6 L689.8 246.8 L687.5 248.1 L685.1 249.4 L682.8 250.7 L680.4 252 L678.1 253.3 L675.8 254.6 L673.4 255.9 L671.1 257.3 L668.8 258.6 L666.5 259.9 L664.3 261.3 L662 262.6 L659.7 264 L657.5 265.4 L655.2 266.7 L653 268.1 L650.8 269.5 L648.6 270.8 L646.4 272.2 L644.2 273.6 L642.1 275 L639.9 276.4 L637.8 277.8 L635.6 279.2 L633.5 280.6 L631.4 282 L629.4 283.4 L627.3 284.8 L625.2 286.2 L623.2 287.6 L621.2 289.1 L619.2 290.5 L617.2 291.9 L615.2 293.3 L613.3 294.8 L611.3 296.2 L609.4 297.6 L607.5 299.1 L605.6 300.5 L603.7 301.9 L601.9 303.4 L600 304.8 L598.2 306.2 L596.4 307.7 L594.6 309.1 L592.9 310.6 L591.1 312 L589.4 313.5 L587.7 314.9 L586 316.4 L584.3 317.8 L582.7 319.3 L581 320.7 L579.4 322.1 L577.8 323.6 L576.2 325 L574.7 326.5 L573.2 327.9 L571.6 329.4 L570.1 330.8 L568.7 332.3 L567.2 333.7 L565.8 335.2 L564.4 336.6 L563 338 L561.6 339.5 L560.2 340.9 L558.9 342.3 L557.6 343.8 L556.3 345.2 L555 346.6 L553.8 348.1 L552.5 349.5 L551.3 350.9 L550.1 352.3 L548.9 353.7 L547.8 355.2 L546.6 356.6 L545.5 358 L544.4 359.4 L543.3 360.8 L542.3 362.2 L541.2 363.6 L540.2 365 L539.2 366.4 L538.2 367.7 L537.2 369.1 L536.3 370.5 L535.3 371.9 L534.4 373.2 L533.5 374.6 L532.6 376 L531.8 377.3 L530.9 378.7 L530.1 380 L529.2 381.4 L528.4 382.7 L527.7 384 L526.9 385.3 M913 62 L911.2 60.2 L909.5 58.5 L907.8 56.8 L906 55.2 L904.3 53.7 L902.6 52.3 L900.9 51 L899.2 49.8 L897.5 48.8 L895.7 47.9 L893.9 47.3 L891.9 46.8 L889.9 46.6 L887.7 46.7 L885.3 46.9 L882.7 47.4 L880 48.1 L877 49.1 L873.8 50.1 L870.5 51.3 L867 52.7 L863.3 54.2 L859.6 55.7 L855.7 57.3 L851.7 59 L847.6 60.7 L843.5 62.5 L839.3 64.4 L835.1 66.2 L830.8 68.1 L826.5 70 L822.1 72 L817.7 73.9 L813.3 75.9 L808.9 77.9 L804.5 79.9 L800 82 L795.6 84 L791.1 86 L786.7 88.1 L782.2 90.1 L777.7 92.2 L773.3 94.3 L768.8 96.4 L764.4 98.4 L760 100.5 L755.5 102.6 L751.1 104.7 L746.7 106.8 L742.3 108.9 L738 111 L733.6 113.1 L729.3 115.2 L724.9 117.4 L720.6 119.5 L716.3 121.6 L712.1 123.7 L707.8 125.8 L703.6 128 L699.4 130.1 L695.2 132.2 L691.1 134.4 L686.9 136.5 L682.8 138.6 L678.8 140.8 L674.7 142.9 L670.7 145 L666.7 147.2 L662.7 149.3 L658.8 151.5 L654.9 153.6 L651 155.7 L647.2 157.9 L643.4 160 L639.6 162.2 L635.9 164.3 L632.2 166.5 L628.5 168.6 L624.9 170.8 L621.3 172.9 L617.7 175.1 L614.2 177.2 L610.7 179.4 L607.2 181.5 L603.8 183.7 L600.4 185.8 L597.1 188 L593.8 190.1 L590.6 192.3 L587.4 194.4 L584.2 196.6 L581.1 198.7 L578 200.9 L574.9 203 L571.9 205.2 L569 207.4 L566.1 209.5 L563.2 211.7 L560.4 213.8 L557.6 216 L554.9 218.1 L552.2 220.3 L549.5 222.4 L546.9 224.6 L544.4 226.8 L541.9 228.9 L539.5 231.1 L537.1 233.2 L534.7 235.4 L532.4 237.5 L530.2 239.7 L528 241.9 L525.8 244 L523.7 246.2 L521.6 248.3 L519.6 250.5 L517.7 252.7 L515.8 254.8 L513.9 257 L512.2 259.1 L510.4 261.3 L508.7 263.5 L507.1 265.6 L505.5 267.8 L504 269.9 L502.5 272.1 L501.1 274.2 L499.7 276.4 L498.4 278.6 L497.1 280.7 L495.9 282.9 L494.8 285 L493.7 287.2 L492.6 289.4 L491.6 291.5 L490.7 293.7 L489.8 295.9 L489 298 L488.2 300.2 L487.5 302.3 L486.8 304.5 L486.2 306.7 L485.7 308.8 L485.2 311 L484.8 313.1 L484.4 315.3 L484.1 317.5 L483.8 319.6 L483.6 321.8 L483.5 323.9 L483.4 326.1 L483.3 328.3 L483.3 330.4 L483.4 332.6 L483.5 334.7 L483.7 336.9 L484 339.1 L484.3 341.2 L484.6 343.4 L485 345.5 L485.5 347.7 L486 349.9 L486.6 352 L487.2 354.2 L487.9 356.3 L488.6 358.5 L489.4 360.7 L490.3 362.8 L491.2 365 L492.2 367.1 L493.2 369.3 L494.3 371.5 L495.4 373.6 L496.6 375.8 L497.8 377.9 L499.1 380.1 L500.5 382.3 L501.9 384.4 L503.3 386.6 L504.8 388.7 L506.4 390.9 L508 393.1 L509.7 395.2 L511.4 397.4 L513.2 399.5 L515 401.7 L516.8 403.9 L518.8 406 L520.8 408.2 L522.8 410.3 L524.9 412.5 L527 414.6 L529.2 416.8 L531.4 419 L533.7 421.1 L536 423.3 L538.4 425.4 L540.8 427.6 L543.3 429.7 L545.8 431.9 L548.4 434 L551 436.2 L553.6 438.4 L556.3 440.5 L559.1 442.7 L561.9 444.8 L564.7 447 L567.6 449.1 L570.5 451.3 L573.5 453.4 L576.5 455.6 L579.6 457.7 L582.7 459.9 L585.8 462 L589 464.2 L592.3 466.3 L595.5 468.5 L598.8 470.6 L602.2 472.8 L605.6 474.9 L609 477.1 L612.4 479.2 L615.9 481.4 L619.5 483.5 L623 485.6 L626.6 487.8 L630.3 489.9 L633.9 492.1 L637.7 494.2 L641.4 496.3 L645.2 498.5 L649 500.6 L652.8 502.7 L656.7 504.9 L660.6 507 L664.5 509.1 L668.4 511.3 L672.4 513.4 L676.4 515.5 L680.4 517.6 L684.5 519.8 L688.6 521.9 L692.7 524 L696.8 526.1 L700.9 528.2 L705.1 530.3 L709.2 532.4 L713.4 534.5 L717.7 536.6 L721.9 538.7 L726.1 540.8 L730.4 542.9 L734.6 545 L738.9 547.1 M913.3 89.9 L912.2 87.8 L911.1 85.8 L910.1 83.7 L909 81.7 L907.9 79.7 L906.8 77.7 L905.7 75.8 L904.7 73.8 L903.6 71.9 L902.5 70 L901.4 68.1 L900.4 66.2 L899.3 64.4 L898.2 62.6 L897.1 60.9 L896 59.2 L894.9 57.6 L893.8 56 L892.7 54.5 L891.5 53.2 L890.3 51.9 L889 50.8 L887.6 49.8 L886.1 49 L884.5 48.4 L882.7 48.1 L880.7 47.9 L878.4 47.9 L875.9 48.2 L873.2 48.7 L870.1 49.4 L866.9 50.3 L863.3 51.3 L859.6 52.5 L855.6 53.8 L851.4 55.3 L847.1 56.8 L842.7 58.4 L838.1 60 L833.4 61.7 L828.7 63.5 L823.8 65.3 L818.9 67.1 L813.9 69 L808.9 70.9 L803.9 72.8 L798.8 74.8 L793.6 76.7 L788.5 78.7 L783.3 80.7 L778.1 82.7 L773 84.7 L767.8 86.8 L762.6 88.8 L757.3 90.9 L752.1 92.9 L746.9 95 L741.7 97.1 L736.5 99.1 L731.4 101.2 L726.2 103.3 L721 105.4 L715.9 107.5 L710.8 109.6 L705.6 111.7 L700.5 113.8 L695.5 115.9 L690.4 118 L685.4 120.2 L680.4 122.3 L675.4 124.4 L670.4 126.5 L665.5 128.7 L660.6 130.8 L655.7 132.9 L650.8 135 L646 137.2 L641.2 139.3 L636.4 141.4 L631.7 143.6 L627 145.7 L622.3 147.9 L617.7 150 L613.1 152.1 L608.5 154.3 L604 156.4 L599.5 158.6 L595.1 160.7 L590.7 162.9 L586.3 165 L582 167.2 L577.7 169.3 L573.5 171.5 L569.3 173.6 L565.1 175.8 L561 177.9 L556.9 180.1 L552.9 182.2 L548.9 184.4 L545 186.5 L541.1 188.7 L537.3 190.8 L533.5 193 L529.7 195.2 L526 197.3 L522.4 199.5 L518.8 201.6 L515.2 203.8 L511.8 205.9 L508.3 208.1 L504.9 210.3 L501.6 212.4 L498.3 214.6 L495.1 216.7 L491.9 218.9 L488.8 221.1 L485.7 223.2 L482.7 225.4 L479.8 227.5 L476.9 229.7 L474 231.9 L471.3 234 L468.5 236.2 L465.9 238.3 L463.3 240.5 L460.7 242.7 L458.2 244.8 L455.8 247 L453.4 249.1 L451.1 251.3 L448.9 253.5 L446.7 255.6 L444.6 257.8 L442.5 260 L440.5 262.1 L438.5 264.3 L436.7 266.4 L434.9 268.6 L433.1 270.8 L431.4 272.9 L429.8 275.1 L428.2 277.3 L426.7 279.4 L425.3 281.6 L423.9 283.8 L422.6 285.9 L421.4 288.1 L420.2 290.2 L419.1 292.4 L418 294.6 L417 296.7 L416.1 298.9 L415.3 301.1 L414.5 303.2 L413.8 305.4 L413.1 307.6 L412.5 309.7 L412 311.9 L411.5 314.1 L411.1 316.2 L410.8 318.4 L410.6 320.5 L410.4 322.7 L410.2 324.9 L410.2 327 L410.2 329.2 L410.3 331.4 L410.4 333.5 L410.6 335.7 L410.9 337.9 L411.2 340 L411.6 342.2 L412.1 344.4 L412.6 346.5 L413.2 348.7 L413.9 350.8 L414.6 353 L415.4 355.2 L416.3 357.3 L417.2 359.5 L418.2 361.7 L419.3 363.8 L420.4 366 L421.6 368.2 L422.8 370.3 L424.2 372.5 L425.5 374.6 L427 376.8 L428.5 379 L430.1 381.1 L431.7 383.3 L433.4 385.5 L435.2 387.6 L437 389.8 M856.5 159 L854.3 159.4 L852 159.7 L849.7 160.1 L847.5 160.5 L845.2 161 L842.9 161.5 L840.6 162 L838.3 162.5 L836 163.1 L833.6 163.6 L831.3 164.3 L828.9 164.9 L826.6 165.5 L824.2 166.2 L821.8 166.9 L819.4 167.7 L817 168.4 L814.6 169.2 L812.2 170 L809.8 170.9 L807.3 171.7 L804.9 172.6 L802.4 173.5 L799.9 174.4 L797.5 175.3 L795 176.3 L792.5 177.3 L790 178.2 L787.5 179.3 L785 180.3 L782.4 181.3 L779.9 182.4 L777.4 183.5 L774.8 184.6 L772.3 185.7 L769.7 186.9 L767.2 188 L764.6 189.2 L762.1 190.4 L759.5 191.6 L756.9 192.8 L754.3 194 L751.8 195.2 L749.2 196.5 L746.6 197.7 L744 199 L741.4 200.3 L738.9 201.6 L736.3 202.9 L733.7 204.3 L731.1 205.6 L728.5 207 L726 208.3 L723.4 209.7 L720.8 211.1 L718.2 212.5 L715.7 213.9 L713.1 215.3 L710.6 216.7 L708 218.1 L705.5 219.6 L703 221 L700.4 222.5 L697.9 223.9 L695.4 225.4 L692.9 226.9 L690.4 228.3 L687.9 229.8 L685.4 231.3 L683 232.8 L680.5 234.4 L678.1 235.9 L675.6 237.4 L673.2 238.9 L670.8 240.5 L668.4 242 L666 243.6 L663.6 245.1 L661.3 246.7 L658.9 248.2 L656.6 249.8 L654.3 251.4 L652 253 L649.7 254.5 L647.4 256.1 L645.2 257.7 L642.9 259.3 L640.7 260.9 L638.5 262.5 L636.4 264.1 L634.2 265.7 L632 267.4 L629.9 269 L627.8 270.6 L625.7 272.2 L623.7 273.8 L621.6 275.5 L619.6 277.1 L617.6 278.7 L615.6 280.4 L613.6 282 L611.7 283.7 L609.8 285.3 L607.9 287 L606 288.6 L604.1 290.3 L602.3 291.9 L600.5 293.6 L598.7 295.2 L597 296.9 L595.2 298.5 L593.5 300.2 L591.8 301.8 L590.2 303.5 L588.5 305.2 L586.9 306.8 L585.3 308.5 L583.8 310.2 L582.2 311.8 L580.7 313.5 L579.2 315.2 L577.8 316.8 L576.3 318.5 L574.9 320.2 L573.5 321.8 L572.2 323.5 L570.8 325.2 L569.5 326.8 L568.3 328.5 L567 330.1 L565.8 331.8 L564.6 333.5 L563.4 335.1 L562.3 336.8 L561.2 338.5 L560.1 340.1 L559 341.8 L558 343.4 L557 345.1 L556 346.7 L555 348.4 L554.1 350.1 L553.2 351.7 L552.3 353.3 L551.5 355 L550.6 356.6 L549.8 358.3 L549.1 359.9 L548.3 361.6 L547.6 363.2 L546.9 364.8 L546.3 366.5 L545.6 368.1 L545 369.7 L544.4 371.3 L543.9 372.9 L543.3 374.6 L542.8 376.2 L542.3 377.8 L541.8 379.4 L541.4 381 L541 382.6 L540.6 384.2 L540.2 385.7 L539.9 387.3 L539.6 388.9 L539.3 390.5 L539 392 L538.7 393.6 L538.5 395.2 L538.3 396.7 L538.1 398.3 L537.9 399.8 L537.7 401.3 L537.6 402.9 L537.5 404.4 L537.4 405.9 L537.3 407.4 L537.2 408.9 L537.2 410.4 L537.2 411.9 L537.1 413.4 L537.1 414.9 L537.2 416.4 L537.2 417.8 L537.2 419.3 L537.3 420.7 L537.3 422.1 L537.4 423.6 L537.5 425 L537.6 426.4 L537.7 427.8 L537.8 429.2 L537.9 430.6 L538.1 431.9 L538.2 433.3 L538.3 434.6 L538.5 436 L538.6 437.3 L538.7 438.6 L538.9 439.9 L539 441.2 L539.2 442.5 L539.3 443.7 L539.5 445 L539.6 446.2 M950.1 172 L949.2 169.8 L948.3 167.7 L947.5 165.5 L946.6 163.4 L945.7 161.2 L944.7 159.1 L943.8 156.9 L942.9 154.8 L942 152.7 L941.1 150.5 L940.1 148.4 L939.2 146.2 L938.3 144.1 L937.3 142 L936.4 139.8 L935.4 137.7 L934.4 135.6 L933.5 133.4 L932.5 131.3 L931.5 129.2 L930.6 127 L929.6 124.9 L928.6 122.8 L927.6 120.7 L926.6 118.6 L925.7 116.4 L924.7 114.3 L923.7 112.2 L922.7 110.1 L921.7 108 L920.7 105.9 L919.7 103.8 L918.7 101.7 L917.7 99.6 L916.7 97.5 L915.7 95.4 L914.7 93.3 L913.7 91.3 L912.6 89.2 L911.6 87.1 L910.6 85.1 L909.6 83.1 L908.6 81 L907.6 79 L906.6 77 L905.6 75 L904.6 73 L903.6 71.1 L902.6 69.1 L901.6 67.2 L900.6 65.3 L899.6 63.4 L898.6 61.6 L897.6 59.8 L896.6 58.1 L895.5 56.4 L894.5 54.8 L893.4 53.2 L892.3 51.8 L891.2 50.5 L890 49.3 L888.7 48.2 L887.3 47.4 L885.7 46.7 L884 46.3 L882 46.1 L879.8 46.1 L877.3 46.4 L874.5 46.9 L871.4 47.7 L868 48.6 L864.3 49.7 L860.4 51 L856.3 52.3 L852 53.8 L847.6 55.4 L843 57 L838.2 58.7 L833.4 60.5 L828.5 62.3 L823.5 64.1 L818.5 66 L813.4 67.9 L808.2 69.8 L803 71.8 L797.8 73.8 L792.6 75.7 L787.3 77.7 L782.1 79.8 L776.8 81.8 L771.5 83.8 L766.2 85.9 L760.9 87.9 L755.6 90 L750.3 92.1 L745 94.1 L739.7 96.2 L734.5 98.3 L729.2 100.4 L724 102.5 L718.7 104.6 L713.5 106.7 L708.3 108.8 L703.1 110.9 L697.9 113 L692.8 115.1 L687.7 117.2 L682.6 119.4 L677.5 121.5 L672.4 123.6 L667.4 125.7 L662.4 127.8 L657.4 130 L652.5 132.1 L647.5 134.2 L642.7 136.4 L637.8 138.5 L633 140.6 L628.2 142.8 L623.4 144.9 L618.7 147 L614 149.2 L609.4 151.3 L604.8 153.5 L600.2 155.6 L595.6 157.7 L591.1 159.9 L586.7 162 L582.3 164.2 L577.9 166.3 L573.6 168.5 L569.3 170.6 L565 172.8 L560.8 174.9 L556.6 177.1 L552.5 179.2 L548.5 181.4 L544.4 183.5 L540.5 185.7 L536.5 187.8 L532.6 190 L528.8 192.1 L525 194.3 L521.3 196.4 L517.6 198.6 L514 200.7 L510.4 202.9 L506.8 205 L503.4 207.2 L499.9 209.3 L496.6 211.5 L493.2 213.6 L490 215.8 L486.8 217.9 L483.6 220.1 L480.5 222.2 L477.5 224.4 L474.5 226.6 L471.5 228.7 L468.7 230.9 L465.9 233 L463.1 235.2 L460.4 237.3 L457.8 239.5 L455.2 241.7 L452.7 243.8 L450.2 246 L447.8 248.1 L445.5 250.3 L443.2 252.4 L441 254.6 L438.8 256.7 L436.7 258.9 L434.7 261.1 L432.7 263.2 L430.8 265.4 L429 267.5 L427.2 269.7 L425.5 271.9 L423.8 274 L422.2 276.2 L420.7 278.3 L419.2 280.5 L417.8 282.6 L416.5 284.8 L415.2 287 L414 289.1 L412.9 291.3 L411.8 293.4 L410.8 295.6 L409.9 297.7 L409 299.9 L408.2 302.1 L407.5 304.2 L406.8 306.4 L406.2 308.5 L405.6 310.7 L405.2 312.9 L404.8 315 L404.4 317.2 L404.2 319.3 L403.9 321.5 L403.8 323.7 L403.7 325.8 L403.7 328 L403.8 330.1 L403.9 332.3 L404.1 334.4 L404.4 336.6 L404.7 338.8 L405.1 340.9 L405.5 343.1 L406.1 345.2 L406.7 347.4 L407.3 349.6 L408 351.7 L408.8 353.9 L409.7 356 L410.6 358.2 L411.6 360.3 L412.7 362.5 L413.8 364.7 L415 366.8 L416.2 369 L417.5 371.1 L418.9 373.3 L420.4 375.4 L421.9 377.6 L423.4 379.8 L425.1 381.9 L426.8 384.1 L428.5 386.2 L430.4 388.4 L432.3 390.5 L434.2 392.7 L436.2 394.9 L438.3 397 L440.5 399.2 L442.7 401.3 L444.9 403.5 L447.2 405.6 L449.6 407.8 L452.1 410 L454.6 412.1 L457.2 414.3 L459.8 416.4 L462.5 418.6 L465.2 420.7 L468 422.9 L470.9 425 M797.3 157.4 L794.7 158.8 L792.1 160.2 L789.5 161.7 L786.8 163.1 L784.2 164.6 L781.6 166 L778.9 167.5 L776.3 169 L773.7 170.6 L771 172.1 L768.4 173.6 L765.7 175.2 L763.1 176.8 L760.5 178.4 L757.8 180 L755.2 181.6 L752.6 183.2 L749.9 184.8 L747.3 186.4 L744.7 188.1 L742.1 189.7 L739.5 191.4 L736.9 193.1 L734.3 194.8 L731.7 196.5 L729.1 198.2 L726.6 199.9 L724 201.6 L721.5 203.3 L718.9 205 L716.4 206.7 L713.9 208.5 L711.4 210.2 L708.9 212 L706.4 213.7 L704 215.5 L701.5 217.3 L699.1 219 L696.7 220.8 L694.3 222.6 L691.9 224.4 L689.5 226.2 L687.2 228 L684.8 229.8 L682.5 231.6 L680.2 233.4 L677.9 235.2 L675.7 237 L673.4 238.9 L671.2 240.7 L669 242.5 L666.8 244.4 L664.7 246.2 L662.5 248 L660.4 249.9 L658.3 251.7 L656.2 253.6 L654.2 255.4 L652.2 257.3 L650.2 259.1 L648.2 261 L646.2 262.8 L644.3 264.7 L642.4 266.6 L640.5 268.4 L638.7 270.3 L636.8 272.2 L635 274 L633.3 275.9 L631.5 277.8 L629.8 279.7 L628.1 281.5 L626.4 283.4 L624.8 285.3 L623.2 287.2 L621.6 289.1 L620 290.9 L618.5 292.8 L617 294.7 L615.5 296.6 L614.1 298.5 L612.7 300.4 L611.3 302.3 L609.9 304.1 L608.6 306 L607.3 307.9 L606.1 309.8 L604.8 311.7 L603.6 313.6 L602.5 315.5 L601.3 317.4 L600.2 319.3 L599.1 321.2 L598.1 323.1 L597.1 325 L596.1 326.8 L595.1 328.7 L594.2 330.6 L593.3 332.5 L592.5 334.4 L591.7 336.3 L590.9 338.2 L590.1 340.1 L589.4 342 L588.7 343.8 L588 345.7 L587.4 347.6 L586.8 349.5 L586.2 351.4 L585.7 353.3 L585.2 355.1 L584.7 357 L584.2 358.9 L583.8 360.8 L583.4 362.7 L583.1 364.5 L582.8 366.4 L582.5 368.3 L582.2 370.1 L582 372 L581.8 373.9 L581.7 375.7 L581.5 377.6 L581.4 379.5 L581.4 381.3 L581.3 383.2 L581.3 385 L581.4 386.9 L581.4 388.7 L581.5 390.6 L581.6 392.4 L581.7 394.2 L581.9 396.1 L582.1 397.9 L582.3 399.7 L582.6 401.6 L582.9 403.4 L583.2 405.2 L583.5 407 L583.9 408.8 L584.3 410.6 L584.7 412.4 L585.1 414.2 L585.6 416 L586.1 417.8 L586.6 419.6 L587.1 421.4 L587.7 423.1 L588.3 424.9 L588.9 426.7 L589.5 428.4 L590.2 430.2 L590.8 431.9 L591.5 433.7 L592.2 435.4 L593 437.1 L593.7 438.8 L594.5 440.5 L595.3 442.2 L596.1 443.9 L596.9 445.6 L597.7 447.3 L598.5 449 L599.4 450.6 L600.2 452.3 L601.1 453.9 L602 455.6 L602.9 457.2 L603.8 458.8 L604.7 460.4 L605.6 462 L606.5 463.6 L607.4 465.2 L608.4 466.7 L609.3 468.3 L610.2 469.8 L611.1 471.3 L612 472.8 L612.9 474.3 L613.8 475.8 L614.7 477.2 L615.6 478.7 L616.5 480.1 L617.3 481.5 L618.2 482.9 L619 484.3 L619.8 485.6 L620.6 487 L621.3 488.3 L622.1 489.6 L622.8 490.9 L623.5 492.1 L624.1 493.3 L624.7 494.5 L625.3 495.7 L625.8 496.9 L626.3 498 L626.7 499.1 L627.1 500.2 L627.5 501.2 M965.8 90.9 L968.8 92.6 L971.9 94.3 L974.9 96.1 L977.9 97.9 L981 99.7 L984.1 101.6 L987.2 103.4 L990.3 105.3 L993.4 107.2 L996.5 109.1 L999.6 111 L1002.7 112.9 L1005.8 114.8 L1008.9 116.8 L1012 118.7 L1015.1 120.7 L1018.2 122.7 L1021.3 124.7 L1024.4 126.6 L1027.5 128.6 L1030.6 130.6 L1033.7 132.6 L1036.7 134.7 L1039.8 136.7 L1042.8 138.7 L1045.9 140.7 L1048.9 142.8 L1051.9 144.8 L1054.9 146.8 L1057.9 148.9 L1060.9 150.9 L1063.8 153 L1066.8 155.1 L1069.7 157.1 L1072.6 159.2 L1075.5 161.3 L1078.3 163.3 L1081.2 165.4 L1084 167.5 L1086.8 169.6 L1089.6 171.6 L1092.4 173.7 L1095.1 175.8 L1097.9 177.9 L1100.6 180 L1103.3 182.1 L1105.9 184.2 L1108.5 186.3 L1111.2 188.4 L1113.7 190.5 L1116.3 192.6 L1118.8 194.7 L1121.3 196.8 L1123.8 198.9 L1126.3 201 L1128.7 203.1 L1131.1 205.2 L1133.5 207.3 L1135.8 209.4 L1138.1 211.5 L1140.4 213.6 L1142.6 215.7 L1144.9 217.9 L1147.1 220 L1149.2 222.1 L1151.4 224.2 L1153.5 226.3 L1155.5 228.4 L1157.6 230.6 L1159.6 232.7 L1161.5 234.8 L1163.5 236.9 L1165.4 239 L1167.2 241.2 L1169.1 243.3 L1170.9 245.4 L1172.6 247.5 L1174.4 249.7 L1176.1 251.8 L1177.7 253.9 L1179.3 256 L1180.9 258.2 L1182.5 260.3 L1184 262.4 L1185.5 264.5 L1186.9 266.7 L1188.3 268.8 L1189.7 270.9 L1191 273.1 L1192.3 275.2 L1193.6 277.3 L1194.8 279.4 L1196 281.6 L1197.1 283.7 L1198.2 285.8 L1199.3 288 L1200.3 290.1 L1201.3 292.2 L1202.3 294.4 L1203.2 296.5 L1204.1 298.6 L1204.9 300.8 L1205.7 302.9 L1206.4 305 L1207.2 307.2 L1207.8 309.3 L1208.5 311.4 L1209 313.6 L1209.6 315.7 L1210.1 317.8 L1210.6 320 L1211 322.1 L1211.4 324.2 L1211.8 326.3 L1212.1 328.5 L1212.3 330.6 L1212.6 332.7 L1212.8 334.9 L1212.9 337 L1213 339.1 L1213.1 341.3 L1213.1 343.4 L1213.1 345.5 L1213 347.7 L1213 349.8 L1212.8 351.9 L1212.6 354.1 L1212.4 356.2 L1212.2 358.3 L1211.9 360.5 L1211.5 362.6 L1211.2 364.7 L1210.7 366.8 L1210.3 369 L1209.8 371.1 L1209.2 373.2 L1208.7 375.4 L1208 377.5 L1207.4 379.6 L1206.7 381.7 L1206 383.9 L1205.2 386 L1204.4 388.1 L1203.5 390.2 L1202.6 392.4 L1201.7 394.5 L1200.7 396.6 L1199.7 398.7 L1198.7 400.9 L1197.6 403 L1196.5 405.1 L1195.3 407.2 L1194.1 409.3 L1192.9 411.5 L1191.6 413.6 L1190.3 415.7 L1189 417.8 L1187.6 419.9 L1186.2 422.1 L1184.7 424.2 L1183.2 426.3 L1181.7 428.4 L1180.1 430.5 L1178.6 432.6 L1176.9 434.7 L1175.3 436.8 L1173.6 438.9 L1171.9 441 L1170.1 443.1 L1168.3 445.2 L1166.5 447.3 L1164.6 449.4 L1162.7 451.5 L1160.8 453.6 L1158.9 455.7 L1156.9 457.8 L1154.9 459.9 L1152.8 462 L1150.8 464.1 L1148.7 466.2 L1146.6 468.3 L1144.4 470.4 L1142.2 472.4 M982 110.8 L984.5 112.9 L987.1 115 L989.6 117 L992.1 119.1 L994.5 121.2 L997 123.3 L999.5 125.4 L1001.9 127.5 L1004.4 129.6 L1006.8 131.7 L1009.3 133.8 L1011.7 136 L1014.1 138.1 L1016.5 140.2 L1018.9 142.3 L1021.2 144.4 L1023.6 146.6 L1025.9 148.7 L1028.2 150.8 L1030.6 152.9 L1032.8 155.1 L1035.1 157.2 L1037.4 159.3 L1039.6 161.5 L1041.9 163.6 L1044.1 165.7 L1046.3 167.9 L1048.4 170 L1050.6 172.1 L1052.7 174.3 L1054.9 176.4 L1057 178.6 L1059 180.7 L1061.1 182.9 L1063.1 185 L1065.1 187.1 L1067.1 189.3 L1069.1 191.4 L1071.1 193.6 L1073 195.7 L1074.9 197.9 L1076.8 200 L1078.7 202.2 L1080.5 204.3 L1082.3 206.5 L1084.1 208.6 L1085.9 210.8 L1087.6 212.9 L1089.4 215.1 L1091.1 217.2 L1092.7 219.4 L1094.4 221.5 L1096 223.7 L1097.6 225.8 L1099.2 228 L1100.7 230.2 L1102.2 232.3 L1103.7 234.5 L1105.2 236.6 L1106.6 238.8 L1108 240.9 L1109.4 243.1 L1110.8 245.2 L1112.1 247.4 L1113.4 249.6 L1114.7 251.7 L1115.9 253.9 L1117.1 256 L1118.3 258.2 L1119.5 260.3 L1120.6 262.5 L1121.7 264.7 L1122.8 266.8 L1123.8 269 L1124.8 271.1 L1125.8 273.3 L1126.8 275.5 L1127.7 277.6 L1128.6 279.8 L1129.4 281.9 L1130.3 284.1 L1131.1 286.3 L1131.8 288.4 L1132.6 290.6 L1133.3 292.7 L1133.9 294.9 L1134.6 297.1 L1135.2 299.2 L1135.8 301.4 L1136.3 303.5 L1136.9 305.7 L1137.3 307.9 L1137.8 310 L1138.2 312.2 L1138.6 314.3 L1139 316.5 L1139.3 318.7 L1139.6 320.8 L1139.9 323 L1140.1 325.1 L1140.3 327.3 L1140.5 329.5 L1140.6 331.6 L1140.7 333.8 L1140.8 335.9 L1140.9 338.1 L1140.9 340.3 L1140.8 342.4 L1140.8 344.6 L1140.7 346.7 L1140.6 348.9 L1140.4 351.1 L1140.3 353.2 L1140 355.4 L1139.8 357.5 L1139.5 359.7 L1139.2 361.9 L1138.9 364 L1138.5 366.2 L1138.1 368.3 L1137.7 370.5 L1137.2 372.7 L1136.7 374.8 L1136.2 377 L1135.6 379.1 L1135 381.3 L1134.4 383.4 L1133.7 385.6 L1133 387.8 L1132.3 389.9 L1131.6 392.1 L1130.8 394.2 L1130 396.4 L1129.2 398.5 M871.1 80 L870.9 82 L870.6 84 L870.4 86 L870.2 88 L869.9 90 L869.7 92.1 L869.4 94.1 L869.2 96.2 L868.9 98.3 L868.7 100.3 L868.4 102.4 L868.2 104.5 L867.9 106.6 L867.7 108.7 L867.5 110.8 L867.2 112.9 L867 115 L866.8 117.1 L866.6 119.2 L866.3 121.3 L866.1 123.5 L865.9 125.6 L865.7 127.7 L865.5 129.8 L865.3 131.9 L865.1 134.1 L864.9 136.2 L864.8 138.3 L864.6 140.5 L864.4 142.6 L864.2 144.7 L864.1 146.9 L863.9 149 L863.7 151.2 L863.6 153.3 L863.4 155.4 L863.3 157.6 L863.2 159.7 L863 161.9 L862.9 164 L862.8 166.2 L862.6 168.3 L862.5 170.5 L862.4 172.6 L862.3 174.8 L862.2 176.9 L862.1 179.1 L862 181.2 L862 183.4 L861.9 185.5 L861.8 187.7 L861.8 189.8 L861.7 192 L861.6 194.1 L861.6 196.3 L861.5 198.4 L861.5 200.6 L861.5 202.7 L861.4 204.9 L861.4 207.1 L861.4 209.2 L861.4 211.4 L861.4 213.5 L861.4 215.7 L861.4 217.9 L861.4 220 L861.4 222.2 L861.4 224.3 L861.4 226.5 L861.5 228.7 L861.5 230.8 L861.6 233 L861.6 235.1 L861.7 237.3 L861.7 239.5 L861.8 241.6 L861.8 243.8 L861.9 245.9 L862 248.1 L862.1 250.3 L862.2 252.4 L862.3 254.6 L862.4 256.7 L862.5 258.9 L862.6 261.1 L862.7 263.2 L862.8 265.4 L863 267.6 L863.1 269.7 L863.2 271.9 L863.4 274.1 L863.5 276.2 L863.7 278.4 L863.8 280.5 L864 282.7 L864.2 284.9 L864.3 287 L864.5 289.2 L864.7 291.4 L864.9 293.5 L865.1 295.7 L865.3 297.9 L865.5 300 L865.7 302.2 L865.9 304.3 L866.1 306.5 L866.4 308.7 L866.6 310.8 L866.8 313 L867.1 315.2 L867.3 317.3 L867.6 319.5 L867.8 321.7 L868.1 323.8 L868.3 326 L868.6 328.2 L868.9 330.3 L869.2 332.5 L869.4 334.6 L869.7 336.8 L870 339 L870.3 341.1 L870.6 343.3 L870.9 345.5 L871.2 347.6 L871.5 349.8 L871.8 352 L872.2 354.1 L872.5 356.3 L872.8 358.4 L873.1 360.6 L873.5 362.8 L873.8 364.9 L874.1 367.1 L874.5 369.3 L874.8 371.4 L875.2 373.6 L875.6 375.8 L875.9 377.9 L876.3 380.1 L876.6 382.2 L877 384.4 L877.4 386.6 L877.8 388.7 L878.2 390.9 L878.5 393.1 L878.9 395.2 L879.3 397.4 L879.7 399.5 L880.1 401.7 L880.5 403.9 L880.9 406 L881.3 408.2 L881.7 410.3 L882.1 412.5 L882.5 414.7 L883 416.8 L883.4 419 L883.8 421.1 L884.2 423.3 L884.7 425.5 L885.1 427.6 L885.5 429.8 L885.9 431.9 L886.4 434.1 L886.8 436.2 L887.3 438.4 L887.7 440.6 L888.1 442.7 L888.6 444.9 L889 447 L889.5 449.2 L889.9 451.3 L890.4 453.5 L890.8 455.6 L891.3 457.8 L891.8 459.9 L892.2 462.1 L892.7 464.2 L893.1 466.4 L893.6 468.5 L894.1 470.7 L894.5 472.8 M749.7 118.8 L745.9 120.9 L742.2 123 L738.5 125.1 L734.8 127.2 L731.2 129.4 L727.5 131.5 L723.9 133.6 L720.3 135.7 L716.7 137.8 L713.1 140 L709.6 142.1 L706 144.2 L702.5 146.4 L699.1 148.5 L695.6 150.6 L692.2 152.8 L688.8 154.9 L685.4 157 L682.1 159.2 L678.8 161.3 L675.5 163.4 L672.2 165.6 L669 167.7 L665.8 169.9 L662.6 172 L659.5 174.1 L656.4 176.3 L653.3 178.4 L650.3 180.6 L647.2 182.7 L644.3 184.9 L641.3 187 L638.4 189.1 L635.5 191.3 L632.7 193.4 L629.9 195.6 L627.1 197.7 L624.4 199.9 L621.7 202 L619 204.2 L616.4 206.3 L613.8 208.5 L611.3 210.6 L608.7 212.8 L606.3 214.9 L603.8 217.1 L601.4 219.2 L599.1 221.4 L596.8 223.5 L594.5 225.7 L592.3 227.8 L590.1 230 L587.9 232.2 L585.8 234.3 L583.8 236.5 L581.7 238.6 L579.8 240.8 L577.8 242.9 L575.9 245.1 L574.1 247.2 L572.3 249.4 L570.5 251.5 L568.8 253.7 L567.1 255.8 L565.5 258 L563.9 260.2 L562.3 262.3 L560.8 264.5 L559.4 266.6 L558 268.8 L556.6 270.9 L555.3 273.1 L554.1 275.2 L552.8 277.4 L551.7 279.6 L550.5 281.7 L549.5 283.9 L548.4 286 L547.4 288.2 L546.5 290.3 L545.6 292.5 L544.8 294.7 L544 296.8 L543.2 299 L542.5 301.1 L541.9 303.3 L541.3 305.4 L540.7 307.6 L540.2 309.8 L539.8 311.9 L539.4 314.1 L539 316.2 L538.7 318.4 L538.4 320.5 L538.2 322.7 L538 324.9 L537.9 327 L537.9 329.2 L537.8 331.3 L537.9 333.5 L538 335.6 L538.1 337.8 L538.3 339.9 L538.5 342.1 L538.8 344.3 L539.1 346.4 L539.4 348.6 L539.9 350.7 L540.3 352.9 L540.9 355 L541.4 357.2 L542 359.4 L542.7 361.5 L543.4 363.7 L544.2 365.8 L545 368 L545.8 370.1 L546.7 372.3 L547.7 374.4 L548.7 376.6 L549.7 378.8 L550.8 380.9 L551.9 383.1 L553.1 385.2 L554.3 387.4 L555.6 389.5 L556.9 391.7 L558.3 393.8 L559.7 396 L561.2 398.1 L562.7 400.3 L564.2 402.5 L565.8 404.6 L567.4 406.8 L569.1 408.9 L570.9 411.1 L572.6 413.2 L574.4 415.4 L576.3 417.5 L578.2 419.7 L580.1 421.8 L582.1 424 L584.2 426.1 L586.2 428.3 L588.3 430.4 L590.5 432.6 L592.7 434.7 L594.9 436.9 L597.2 439 L599.5 441.2 L601.9 443.3 L604.3 445.5 L606.7 447.6 L609.2 449.8 L611.7 451.9 L614.2 454.1 L616.8 456.2 L619.5 458.4 L622.1 460.5 M1012 78.2 L1009.4 78 L1007 77.9 L1004.8 77.8 L1002.8 77.9 L1000.9 78.1 L999.2 78.3 L997.7 78.7 L996.3 79.1 L995 79.6 L994 80.2 L993 80.8 L992.2 81.6 L991.4 82.4 L990.8 83.3 L990.3 84.3 L989.9 85.3 L989.6 86.4 L989.3 87.5 L989.1 88.7 L989 89.9 L988.9 91.2 L988.9 92.6 L989 93.9 L989.1 95.3 L989.2 96.8 L989.4 98.3 L989.6 99.8 L989.8 101.4 L990 102.9 L990.3 104.6 L990.6 106.2 L990.9 107.8 L991.3 109.5 L991.6 111.2 L992 113 L992.3 114.7 L992.7 116.5 L993.1 118.2 L993.5 120 L993.9 121.8 L994.3 123.6 L994.7 125.5 L995.1 127.3 L995.5 129.2 L995.9 131.1 L996.3 132.9 L996.7 134.8 L997.1 136.7 L997.5 138.6 L997.9 140.5 L998.3 142.5 L998.7 144.4 L999 146.3 L999.4 148.3 L999.8 150.2 L1000.1 152.2 L1000.5 154.2 L1000.8 156.1 L1001.2 158.1 L1001.5 160.1 L1001.8 162.1 L1002.1 164.1 L1002.4 166 L1002.7 168 L1003 170.1 L1003.3 172.1 L1003.6 174.1 L1003.8 176.1 L1004.1 178.1 L1004.3 180.1 L1004.5 182.1 L1004.8 184.2 L1005 186.2 L1005.2 188.2 L1005.3 190.3 L1005.5 192.3 L1005.7 194.4 L1005.8 196.4 L1006 198.4 L1006.1 200.5 L1006.2 202.5 L1006.3 204.6 L1006.4 206.7 L1006.5 208.7 L1006.5 210.8 L1006.6 212.8 L1006.6 214.9 L1006.7 217 L1006.7 219 L1006.7 221.1 L1006.7 223.2 L1006.7 225.2 L1006.6 227.3 L1006.6 229.4 L1006.6 231.4 L1006.5 233.5 L1006.4 235.6 L1006.3 237.7 L1006.2 239.7 L1006.1 241.8 L1006 243.9 L1005.8 246 L1005.7 248.1 L1005.5 250.1 L1005.3 252.2 L1005.1 254.3 L1004.9 256.4 L1004.7 258.5 L1004.5 260.6 L1004.2 262.7 L1003.9 264.7 L1003.7 266.8 L1003.4 268.9 L1003.1 271 L1002.8 273.1 L1002.5 275.2 L1002.1 277.3 L1001.8 279.4 L1001.4 281.5 L1001.1 283.5 L1000.7 285.6 L1000.3 287.7 L999.9 289.8 L999.5 291.9 L999 294 L998.6 296.1 L998.1 298.2 L997.7 300.3 L997.2 302.4 L996.7 304.5 L996.2 306.6 L995.7 308.7 L995.1 310.8 L994.6 312.9 L994 315 L993.5 317.1 L992.9 319.2 L992.3 321.2 L991.7 323.3 L991.1 325.4 L990.5 327.5 L989.9 329.6 L989.2 331.7 L988.6 333.8 L987.9 335.9 L987.2 338 L986.5 340.1 L985.8 342.2 L985.1 344.3 L984.4 346.4 L983.7 348.5 L983 350.6 L982.2 352.7 L981.5 354.8 L980.7 356.8 L979.9 358.9 L979.1 361 L978.3 363.1 L977.5 365.2 L976.7 367.3 L975.9 369.4 L975 371.5 L974.2 373.6 L973.3 375.7 L972.5 377.7 L971.6 379.8 L970.7 381.9 L969.8 384 L969 386.1 L968 388.2 L967.1 390.3 L966.2 392.3 L965.3 394.4 L964.4 396.5 L963.4 398.6 L962.5 400.7 L961.5 402.7 L960.5 404.8 L959.6 406.9 L958.6 409 L957.6 411 L956.6 413.1 L955.6 415.2 L954.6 417.2 L953.6 419.3 L952.6 421.4 L951.6 423.4 L950.5 425.5 L949.5 427.6 L948.4 429.6 L947.4 431.7 L946.4 433.7 L945.3 435.8 L944.2 437.8 L943.2 439.9 L942.1 441.9 L941 444 L939.9 446 L938.9 448.1 L937.8 450.1 L936.7 452.1 L935.6 454.2 L934.5 456.2 L933.4 458.2 L932.3 460.3 L931.2 462.3 L930.1 464.3 L929 466.3 L927.8 468.3 L926.7 470.3 L925.6 472.3 L924.5 474.3 M853.2 148.6 L850.9 149.1 L848.6 149.6 L846.3 150.1 L844 150.7 L841.7 151.3 L839.3 152 L836.9 152.6 L834.6 153.3 L832.2 154.1 L829.8 154.8 L827.4 155.6 L824.9 156.4 L822.5 157.2 L820.1 158.1 L817.6 159 L815.1 159.9 L812.7 160.8 L810.2 161.8 L807.7 162.8 L805.2 163.8 L802.6 164.8 L800.1 165.9 L797.6 166.9 L795 168 L792.5 169.1 L789.9 170.3 L787.3 171.4 L784.7 172.6 L782.2 173.8 L779.6 175 L777 176.2 L774.4 177.4 L771.7 178.7 L769.1 180 L766.5 181.2 L763.9 182.6 L761.3 183.9 L758.6 185.2 L756 186.5 L753.4 187.9 L750.7 189.3 L748.1 190.7 L745.5 192.1 L742.8 193.5 L740.2 194.9 L737.6 196.3 L734.9 197.8 L732.3 199.2 L729.7 200.7 L727.1 202.2 L724.5 203.6 L721.8 205.1 L719.2 206.6 L716.6 208.2 L714 209.7 L711.5 211.2 L708.9 212.8 L706.3 214.3 L703.7 215.9 L701.2 217.4 L698.6 219 L696.1 220.6 L693.6 222.2 L691.1 223.8 L688.6 225.4 L686.1 227 L683.6 228.6 L681.1 230.2 L678.7 231.8 L676.2 233.5 L673.8 235.1 L671.4 236.7 L669 238.4 L666.6 240 L664.2 241.7 L661.9 243.3 L659.6 245 L657.2 246.7 L654.9 248.4 L652.7 250 L650.4 251.7 L648.2 253.4 L645.9 255.1 L643.7 256.8 L641.5 258.5 L639.4 260.2 L637.2 261.9 L635.1 263.6 L633 265.3 L630.9 267 L628.8 268.8 L626.8 270.5 L624.8 272.2 L622.8 273.9 L620.8 275.7 L618.9 277.4 L616.9 279.1 L615 280.8 L613.2 282.6 L611.3 284.3 L609.5 286.1 L607.7 287.8 L605.9 289.5 L604.2 291.3 L602.4 293 L600.7 294.8 L599.1 296.5 L597.4 298.3 L595.8 300 L594.2 301.8 L592.6 303.5 L591.1 305.3 L589.6 307 L588.1 308.8 L586.6 310.6 L585.2 312.3 L583.8 314.1 L582.4 315.8 L581.1 317.6 L579.8 319.3 L578.5 321.1 L577.2 322.8 L576 324.6 L574.8 326.4 L573.6 328.1 L572.5 329.9 L571.4 331.6 L570.3 333.4 L569.2 335.1 L568.2 336.9 L567.2 338.6 L566.3 340.4 L565.3 342.1 L564.4 343.9 L563.5 345.6 L562.7 347.4 L561.9 349.1 L561.1 350.9 L560.3 352.6 L559.6 354.4 L558.9 356.1 L558.2 357.8 L557.6 359.6 L556.9 361.3 L556.4 363 L555.8 364.8 L555.3 366.5 L554.8 368.2 L554.3 369.9 L553.9 371.7 L553.4 373.4 L553.1 375.1 L552.7 376.8 L552.4 378.5 L552.1 380.2 L551.8 381.9 L551.5 383.6 L551.3 385.3 L551.1 387 L550.9 388.7 L550.8 390.4 L550.7 392 L550.6 393.7 L550.5 395.4 L550.5 397 L550.5 398.7 L550.5 400.4 L550.5 402 L550.5 403.7 L550.6 405.3 L550.7 406.9 L550.8 408.6 L550.9 410.2 L551.1 411.8 L551.3 413.4 L551.5 415 M660 135.2 L656.7 137.3 L653.3 139.3 L650 141.4 L646.8 143.5 L643.5 145.5 L640.3 147.6 L637.1 149.7 L633.9 151.8 L630.8 153.8 L627.7 155.9 L624.6 158 L621.5 160.1 L618.5 162.2 L615.5 164.3 L612.6 166.3 L609.7 168.4 L606.8 170.5 L603.9 172.6 L601.1 174.7 L598.3 176.8 L595.6 178.9 L592.9 181 L590.2 183.1 L587.6 185.3 L585 187.4 L582.4 189.5 L579.9 191.6 L577.4 193.7 L575 195.8 L572.6 197.9 L570.2 200 L567.9 202.2 L565.6 204.3 L563.4 206.4 L561.2 208.5 L559.1 210.6 L557 212.7 L554.9 214.9 L552.9 217 L550.9 219.1 L549 221.2 L547.1 223.4 L545.3 225.5 L543.5 227.6 L541.8 229.7 L540.1 231.9 L538.4 234 L536.8 236.1 L535.3 238.2 L533.8 240.4 L532.3 242.5 L530.9 244.6 L529.5 246.7 L528.2 248.9 L526.9 251 L525.7 253.1 L524.6 255.3 L523.4 257.4 L522.4 259.5 L521.3 261.7 L520.4 263.8 L519.4 265.9 L518.6 268.1 L517.7 270.2 L517 272.3 L516.2 274.4 L515.6 276.6 L515 278.7 L514.4 280.8 L513.9 283 L513.4 285.1 L513 287.3 L512.6 289.4 L512.3 291.5 L512 293.7 L511.8 295.8 L511.6 297.9 L511.5 300.1 L511.5 302.2 L511.5 304.3 L511.5 306.5 L511.6 308.6 L511.7 310.7 L511.9 312.9 L512.2 315 L512.5 317.1 L512.8 319.3 L513.2 321.4 L513.7 323.5 L514.2 325.7 L514.7 327.8 L515.3 329.9 L516 332.1 L516.7 334.2 L517.4 336.4 L518.2 338.5 L519.1 340.6 L520 342.8 L520.9 344.9 L521.9 347 L523 349.2 L524.1 351.3 L525.3 353.4 L526.5 355.6 L527.7 357.7 L529 359.8 L530.4 362 L531.8 364.1 L533.2 366.2 L534.7 368.4 L536.3 370.5 L537.8 372.6 L539.5 374.8 L541.2 376.9 L542.9 379 L544.7 381.2 L546.5 383.3 L548.4 385.4 L550.3 387.5 L552.3 389.7 L554.3 391.8 L556.3 393.9 L558.4 396.1 L560.6 398.2 L562.8 400.3 L565 402.4 L567.3 404.6 L569.6 406.7 L571.9 408.8 L574.3 411 L576.8 413.1 L579.3 415.2 L581.8 417.3 L584.4 419.5 L587 421.6 L589.6 423.7 L592.3 425.8 L595 427.9 L597.8 430.1 L600.6 432.2 L603.5 434.3 L606.3 436.4 L609.3 438.5 L612.2 440.6 L615.2 442.8 L618.2 444.9 L621.3 447 L624.4 449.1 L627.5 451.2 L630.7 453.3 L633.9 455.4 L637.1 457.5 L640.4 459.6 L643.7 461.7 L647 463.8 L650.4 465.9 M984.4 118.5 L982.3 116.4 L980.2 114.3 L978 112.1 L975.9 110 L973.8 107.8 L971.6 105.7 L969.4 103.6 L967.3 101.4 L965.1 99.3 L962.9 97.2 L960.7 95 L958.5 92.9 L956.3 90.8 L954.1 88.7 L951.9 86.5 L949.7 84.4 L947.5 82.3 L945.3 80.2 L943.1 78.1 L940.9 76 L938.7 74 L936.5 71.9 L934.2 69.8 L932 67.8 L929.8 65.7 L927.7 63.7 L925.5 61.7 L923.3 59.7 L921.1 57.7 L919 55.8 L916.9 53.9 L914.8 52.1 L912.7 50.3 L910.7 48.5 L908.7 46.9 L906.7 45.4 L904.7 44 L902.8 42.8 L900.9 41.8 L899 41.1 L897 40.7 L894.8 40.6 L892.5 40.9 L889.9 41.5 L887.1 42.4 L884.1 43.5 L880.8 44.8 L877.4 46.3 L873.8 47.9 L870.1 49.6 L866.3 51.4 L862.4 53.2 L858.4 55.1 L854.4 57 L850.3 59 L846.2 60.9 L842.1 62.9 L837.9 65 L833.7 67 L829.5 69 L825.3 71.1 L821.1 73.2 L816.9 75.3 L812.6 77.3 L808.4 79.4 L804.2 81.5 L800 83.6 L795.7 85.7 L791.5 87.9 L787.3 90 L783.1 92.1 L778.9 94.2 L774.8 96.4 L770.6 98.5 L766.5 100.6 L762.3 102.7 L758.2 104.9 L754.1 107 L750 109.2 L745.9 111.3 L741.9 113.4 L737.9 115.6 L733.8 117.7 L729.9 119.9 L725.9 122 L721.9 124.2 L718 126.3 L714.1 128.5 L710.2 130.6 L706.4 132.8 L702.5 134.9 L698.7 137.1 L694.9 139.2 L691.2 141.4 L687.5 143.6 L683.8 145.7 L680.1 147.9 L676.5 150 L672.8 152.2 L669.3 154.3 L665.7 156.5 L662.2 158.7 L658.7 160.8 L655.2 163 L651.8 165.1 L648.4 167.3 L645.1 169.4 L641.8 171.6 L638.5 173.8 L635.2 175.9 L632 178.1 L628.8 180.3 L625.7 182.4 L622.6 184.6 L619.5 186.7 L616.5 188.9 L613.5 191.1 L610.5 193.2 L607.6 195.4 L604.7 197.5 L601.9 199.7 L599.1 201.9 L596.3 204 L593.6 206.2 L590.9 208.4 L588.3 210.5 L585.7 212.7 L583.1 214.9 L580.6 217 L578.2 219.2 L575.8 221.4 L573.4 223.5 L571.1 225.7 L568.8 227.8 L566.5 230 L564.3 232.2 L562.2 234.3 L560.1 236.5 L558 238.7 L556 240.8 L554 243 L552.1 245.2 L550.2 247.3 L548.4 249.5 L546.6 251.7 L544.9 253.8 L543.2 256 L541.6 258.2 L540 260.3 L538.5 262.5 L537 264.7 L535.6 266.8 L534.2 269 L532.8 271.2 L531.5 273.3 L530.3 275.5 L529.1 277.7 L528 279.8 L526.9 282 L525.9 284.1 L524.9 286.3 L523.9 288.5 L523.1 290.6 L522.2 292.8 L521.4 295 L520.7 297.1 L520 299.3 L519.4 301.5 L518.8 303.6 L518.3 305.8 L517.8 308 L517.4 310.1 L517 312.3 L516.7 314.5 L516.5 316.6 L516.3 318.8 L516.1 321 L516 323.1 L515.9 325.3 L515.9 327.5 L516 329.6 L516.1 331.8 L516.2 334 L516.4 336.1 L516.7 338.3 L517 340.5 L517.4 342.6 L517.8 344.8 L518.2 347 L518.8 349.1 L519.3 351.3 L519.9 353.5 L520.6 355.6 L521.3 357.8 L522.1 360 L522.9 362.1 L523.8 364.3 L524.7 366.5 L525.7 368.6 L526.8 370.8 L527.8 373 L529 375.1 L530.2 377.3 L531.4 379.5 L532.7 381.6 L534 383.8 L535.4 386 M1055.2 178.9 L1055.1 180.5 L1054.9 182.1 L1054.7 183.8 L1054.5 185.4 L1054.3 187.1 L1054 188.8 L1053.8 190.5 L1053.6 192.2 L1053.4 193.9 L1053.1 195.6 L1052.9 197.3 L1052.6 199 L1052.3 200.8 L1052.1 202.5 L1051.8 204.3 L1051.5 206 L1051.2 207.8 L1050.9 209.6 L1050.6 211.3 L1050.2 213.1 L1049.9 214.9 L1049.5 216.7 L1049.1 218.5 L1048.8 220.3 L1048.4 222.1 L1048 223.9 L1047.6 225.7 L1047.1 227.5 L1046.7 229.3 L1046.3 231.2 L1045.8 233 L1045.3 234.8 L1044.8 236.7 L1044.3 238.5 L1043.8 240.3 L1043.3 242.2 L1042.8 244 L1042.2 245.9 L1041.6 247.7 L1041.1 249.6 L1040.5 251.5 L1039.9 253.3 L1039.3 255.2 L1038.6 257.1 L1038 258.9 L1037.3 260.8 L1036.7 262.7 L1036 264.6 L1035.3 266.4 L1034.6 268.3 L1033.9 270.2 L1033.1 272.1 L1032.4 274 L1031.6 275.9 L1030.9 277.8 L1030.1 279.6 L1029.3 281.5 L1028.5 283.4 L1027.6 285.3 L1026.8 287.2 L1025.9 289.1 L1025.1 291 L1024.2 292.9 L1023.3 294.8 L1022.4 296.7 L1021.5 298.6 L1020.6 300.5 L1019.6 302.4 L1018.7 304.3 L1017.7 306.2 L1016.8 308.1 L1015.8 310 L1014.8 311.9 L1013.8 313.9 L1012.7 315.8 L1011.7 317.7 L1010.7 319.6 L1009.6 321.5 L1008.5 323.4 L1007.5 325.3 L1006.4 327.2 L1005.3 329.1 L1004.2 331 L1003.1 332.9 L1001.9 334.8 L1000.8 336.7 L999.6 338.6 L998.5 340.5 L997.3 342.4 L996.1 344.3 L994.9 346.2 L993.7 348.1 L992.5 350 L991.3 351.9 L990.1 353.8 L988.8 355.7 L987.6 357.6 L986.3 359.5 L985.1 361.4 L983.8 363.3 L982.5 365.2 L981.2 367.1 L979.9 368.9 L978.6 370.8 L977.3 372.7 L976 374.6 L974.7 376.5 L973.3 378.3 L972 380.2 L970.6 382.1 L969.3 384 L967.9 385.8 L966.6 387.7 L965.2 389.6 L963.8 391.4 L962.4 393.3 L961 395.1 L959.6 397 L958.2 398.8 L956.8 400.7 L955.4 402.5 L954 404.4 L952.6 406.2 L951.2 408 L949.7 409.8 L948.3 411.7 L946.9 413.5 L945.4 415.3 L944 417.1 L942.5 418.9 L941.1 420.7 L939.6 422.5 L938.2 424.3 L936.7 426.1 L935.3 427.9 L933.8 429.6 L932.3 431.4 L930.9 433.2 L929.4 434.9 L927.9 436.7 L926.5 438.4 L925 440.2 L923.5 441.9 L922 443.6 L920.5 445.3 L919.1 447 L917.6 448.7 L916.1 450.4 L914.6 452.1 L913.1 453.8 L911.7 455.5 L910.2 457.1 L908.7 458.8 L907.2 460.4 L905.7 462 L904.3 463.6 L902.8 465.2 L901.3 466.8 L899.8 468.4 L898.3 470 L896.8 471.5 L895.4 473.1 L893.9 474.6 M661.3 127.5 L658.5 127.8 L655.5 128.2 L652.5 128.6 L649.3 129.1 L646.1 129.6 L642.8 130.1 L639.4 130.7 L635.9 131.3 L632.4 131.9 L628.7 132.6 L625 133.3 L621.2 134.1 L617.3 134.8 L613.4 135.7 L609.4 136.5 L605.3 137.4 L601.1 138.3 L596.9 139.3 L592.6 140.3 L588.3 141.3 L583.9 142.3 L579.4 143.4 L574.9 144.4 L570.4 145.6 L565.8 146.7 L561.1 147.9 L556.4 149.1 L551.7 150.3 L546.9 151.5 L542.1 152.8 L537.2 154 L532.3 155.3 L527.4 156.7 M1279.1 158 L1280.6 159.3 L1282.2 160.7 L1283.7 162.1 L1285.3 163.5 L1286.9 164.9 L1288.5 166.4 L1290.1 167.8 L1291.7 169.3 L1293.4 170.8 L1295 172.3 L1296.6 173.8 L1298.3 175.3 L1299.9 176.9 L1301.6 178.4 L1303.2 180 L1304.8 181.5 L1306.5 183.1 L1308.1 184.7 L1309.7 186.3 L1311.3 187.9 L1312.9 189.6 L1314.4 191.2 L1316 192.9 L1317.5 194.5 L1319 196.2 L1320.5 197.8 L1322 199.5 L1323.5 201.2 L1324.9 202.9 L1326.3 204.6 L1327.7 206.3 L1329.1 208 L1330.4 209.7 L1331.7 211.5 L1333 213.2 L1334.2 214.9 L1335.5 216.7 L1336.7 218.4 L1337.8 220.2 L1339 221.9 L1340.1 223.7 L1341.1 225.5 L1342.2 227.2 L1343.2 229 L1344.1 230.8 L1345.1 232.6 L1346 234.4 L1346.8 236.2 L1347.7 238 L1348.4 239.8 L1349.2 241.6 L1349.9 243.4 L1350.6 245.2 L1351.2 247.1 L1351.8 248.9 L1352.3 250.7 L1352.9 252.5 L1353.3 254.4 L1353.8 256.2 L1354.1 258 L1354.5 259.9 L1354.8 261.7 L1355.1 263.6 L1355.3 265.4 L1355.5 267.2 L1355.6 269.1 L1355.7 270.9 L1355.7 272.8 L1355.7 274.7 L1355.7 276.5 L1355.6 278.4 L1355.5 280.2 L1355.3 282.1 L1355.1 284 L1354.8 285.8 L1354.5 287.7 L1354.1 289.6 L1353.8 291.4 L1353.3 293.3 L1352.8 295.2 L1352.3 297 L1351.7 298.9 L1351.1 300.8 L1350.4 302.7 L1349.7 304.5 L1349 306.4 L1348.1 308.3 L1347.3 310.2 L1346.4 312 L1345.5 313.9 L1344.5 315.8 L1343.5 317.7 L1342.4 319.5 L1341.3 321.4 L1340.1 323.3 L1338.9 325.2 L1337.7 327 L1336.4 328.9 L1335 330.8 L1333.6 332.7 L1332.2 334.5 L1330.7 336.4 L1329.2 338.3 L1327.7 340.2 L1326.1 342 L1324.4 343.9 L1322.8 345.8 L1321 347.6 L1319.3 349.5 L1317.5 351.4 L1315.6 353.2 L1313.7 355.1 L1311.8 357 L1309.8 358.8 L1307.8 360.7 L1305.8 362.6 L1303.7 364.4 L1301.6 366.3 L1299.4 368.1 L1297.2 370 L1294.9 371.8 L1292.7 373.7 L1290.3 375.5 L1288 377.4 L1285.6 379.2 L1283.2 381.1 L1280.7 382.9 L1278.2 384.7 L1275.7 386.6 L1273.1 388.4 L1270.5 390.2 L1267.9 392 L1265.2 393.9 L1262.5 395.7 L1259.8 397.5 L1257.1 399.3 L1254.3 401.1 L1251.4 402.9 L1248.6 404.7 L1245.7 406.5 L1242.8 408.3 L1239.9 410.1 L1236.9 411.9 L1234 413.6 L1230.9 415.4 L1227.9 417.2 L1224.9 418.9 L1221.8 420.7 L1218.7 422.5 L1215.5 424.2 L1212.4 425.9 L1209.2 427.7 L1206 429.4 L1202.8 431.1 L1199.6 432.9 L1196.4 434.6 L1193.1 436.3 L1189.8 438 L1186.5 439.6 L1183.2 441.3 L1179.9 443 L1176.6 444.7 L1173.2 446.3 L1169.9 448 L1166.5 449.6 L1163.1 451.2 L1159.8 452.9 L1156.4 454.5 L1153 456.1 L1149.6 457.7 L1146.2 459.2 L1142.7 460.8 L1139.3 462.4 L1135.9 463.9 L1132.5 465.4 L1129.1 467 L1125.7 468.5 L1122.2 470 M848.3 137 L850.7 136.1 L853 135.2 L855.4 134.4 L857.7 133.6 L860 132.9 L862.3 132.1 L864.6 131.5 L866.9 130.8 L869.1 130.2 L871.4 129.7 L873.6 129.1 L875.9 128.6 L878.1 128.2 L880.3 127.8 L882.5 127.4 L884.7 127.1 L886.9 126.8 L889.1 126.6 L891.3 126.4 L893.5 126.2 L895.7 126.1 L897.8 126 L900 126 L902.2 126 L904.4 126.1 L906.5 126.2 L908.7 126.3 L910.9 126.5 L913.1 126.7 L915.3 127 L917.5 127.3 L919.6 127.6 L921.8 128 L924.1 128.5 L926.3 129 L928.5 129.5 L930.7 130 L933 130.6 L935.2 131.2 L937.5 131.9 L939.8 132.6 L942 133.4 L944.3 134.1 L946.6 134.9 L949 135.8 L951.3 136.7 L953.6 137.6 L956 138.5 L958.3 139.5 L960.7 140.5 L963.1 141.5 L965.5 142.5 L967.9 143.6 L970.3 144.7 L972.7 145.8 L975.2 147 L977.6 148.2 L980.1 149.4 L982.6 150.6 L985 151.9 L987.5 153.1 L990 154.4 L992.5 155.7 L995 157 L997.5 158.4 L1000 159.8 L1002.5 161.1 L1005.1 162.5 L1007.6 164 L1010.1 165.4 L1012.7 166.8 L1015.2 168.3 L1017.8 169.8 L1020.3 171.3 L1022.9 172.8 L1025.4 174.3 L1027.9 175.8 L1030.5 177.4 L1033 178.9 L1035.6 180.5 L1038.1 182.1 L1040.7 183.7 L1043.2 185.3 L1045.7 186.9 L1048.3 188.5 L1050.8 190.1 L1053.3 191.7 L1055.8 193.4 L1058.3 195.1 L1060.8 196.7 L1063.3 198.4 L1065.8 200.1 L1068.3 201.8 L1070.7 203.5 L1073.2 205.2 L1075.7 206.9 L1078.1 208.6 L1080.5 210.3 L1082.9 212 L1085.3 213.8 L1087.7 215.5 L1090.1 217.2 L1092.5 219 L1094.8 220.8 L1097.2 222.5 L1099.5 224.3 L1101.8 226.1 L1104.1 227.8 L1106.4 229.6 L1108.6 231.4 L1110.9 233.2 L1113.1 235 L1115.3 236.8 L1117.5 238.6 L1119.7 240.4 L1121.8 242.2 L1124 244 L1126.1 245.8 L1128.2 247.6 L1130.3 249.5 L1132.3 251.3 L1134.4 253.1 L1136.4 254.9 L1138.4 256.8 L1140.4 258.6 L1142.3 260.4 L1144.2 262.3 L1146.1 264.1 L1148 266 L1149.9 267.8 L1151.7 269.7 L1153.5 271.5 L1155.3 273.4 L1157.1 275.2 L1158.8 277.1 L1160.5 278.9 L1162.2 280.8 L1163.9 282.7 L1165.5 284.5 L1167.1 286.4 L1168.7 288.2 L1170.3 290.1 L1171.8 292 L1173.3 293.8 L1174.8 295.7 L1176.3 297.6 L1177.7 299.5 L1179.1 301.3 L1180.5 303.2 L1181.8 305.1 L1183.1 306.9 L1184.4 308.8 L1185.7 310.7 L1186.9 312.6 L1188.1 314.4 L1189.3 316.3 L1190.4 318.2 L1191.5 320.1 L1192.6 321.9 L1193.7 323.8 L1194.7 325.7 L1195.7 327.6 L1196.6 329.4 L1197.6 331.3 L1198.5 333.2 L1199.4 335 L1200.2 336.9 L1201 338.8 L1201.8 340.7 L1202.6 342.5 L1203.3 344.4 L1204 346.3 L1204.7 348.1 L1205.3 350 L1205.9 351.9 L1206.5 353.7 L1207 355.6 L1207.5 357.5 L1208 359.3 L1208.5 361.2 L1208.9 363 L1209.3 364.9 L1209.7 366.7 L1210 368.6 L1210.3 370.4 L1210.6 372.3 L1210.8 374.1 L1211.1 376 L1211.3 377.8 L1211.4 379.7 L1211.6 381.5 L1211.7 383.3 L1211.7 385.2 L1211.8 387 L1211.8 388.8 L1211.8 390.7 L1211.8 392.5 L1211.7 394.3 L1211.6 396.1 M676.9 157.5 L673.3 159.6 L669.7 161.6 L666 163.7 L662.5 165.8 L658.9 167.9 L655.4 169.9 L651.9 172 L648.4 174.1 L645 176.2 L641.6 178.3 L638.2 180.4 L634.9 182.5 L631.5 184.6 L628.3 186.7 L625 188.8 L621.8 190.9 L618.6 193 L615.4 195.1 L612.3 197.2 L609.2 199.3 L606.2 201.4 L603.2 203.5 L600.2 205.6 L597.3 207.7 L594.4 209.8 L591.5 211.9 L588.7 214.1 L585.9 216.2 L583.2 218.3 L580.5 220.4 L577.8 222.5 L575.2 224.7 L572.6 226.8 L570.1 228.9 L567.6 231 L565.2 233.1 L562.8 235.3 L560.4 237.4 L558.1 239.5 L555.8 241.6 L553.6 243.8 L551.4 245.9 L549.2 248 L547.1 250.1 L545.1 252.3 L543.1 254.4 L541.1 256.5 L539.2 258.6 L537.4 260.8 L535.5 262.9 L533.8 265 L532.1 267.2 L530.4 269.3 L528.8 271.4 L527.2 273.6 L525.7 275.7 L524.2 277.8 L522.8 279.9 L521.4 282.1 L520 284.2 L518.8 286.3 L517.5 288.5 L516.4 290.6 L515.2 292.7 L514.2 294.9 L513.1 297 L512.1 299.1 L511.2 301.3 L510.3 303.4 L509.5 305.5 L508.8 307.7 L508 309.8 L507.4 311.9 L506.7 314.1 L506.2 316.2 L505.7 318.4 L505.2 320.5 L504.8 322.6 L504.4 324.8 L504.1 326.9 L503.9 329 L503.7 331.2 L503.5 333.3 L503.4 335.4 L503.4 337.6 L503.4 339.7 L503.5 341.8 L503.6 344 L503.7 346.1 L504 348.2 L504.2 350.4 L504.6 352.5 L504.9 354.6 L505.4 356.8 L505.8 358.9 L506.4 361 L506.9 363.2 L507.6 365.3 L508.3 367.4 L509 369.5 L509.8 371.7 L510.6 373.8 L511.5 375.9 L512.4 378.1 L513.4 380.2 L514.5 382.3 L515.6 384.5 L516.7 386.6 L517.9 388.7 L519.1 390.8 L520.4 393 L521.7 395.1 L523.1 397.2 L524.6 399.3 L526.1 401.5 L527.6 403.6 L529.2 405.7 L530.8 407.8 L532.5 410 L534.2 412.1 L536 414.2 L537.8 416.3 L539.6 418.4 L541.5 420.5 L543.5 422.7 L545.5 424.8 L547.5 426.9 L549.6 429 L551.8 431.1 L553.9 433.2 L556.1 435.3 L558.4 437.5 L560.7 439.6 L563.1 441.7 L565.4 443.8 L567.9 445.9 L570.3 448 L572.8 450.1 L575.4 452.2 L578 454.3 L580.6 456.4 L583.3 458.5 L586 460.6 L588.7 462.7 L591.5 464.8 L594.3 466.8 L597.1 468.9 L600 471 L602.9 473.1 L605.9 475.2 L608.8 477.2 L611.9 479.3 L614.9 481.4 L618 483.5 L621.1 485.5 L624.2 487.6 L627.3 489.6 L630.5 491.7 L633.7 493.7 L637 495.8 L640.2 497.8 L643.5 499.9 L646.8 501.9 L650.1 503.9 L653.5 505.9 L656.8 508 L660.2 510 L663.6 512 L667 514 L670.4 516 L673.8 517.9 L677.2 519.9 L680.7 521.9 L684.1 523.8 L687.5 525.8 L691 527.7 L694.4 529.7 M839.4 165.7 L837.1 166.1 L834.8 166.4 L832.5 166.8 L830.2 167.2 L827.9 167.7 L825.6 168.2 L823.2 168.7 L820.9 169.2 L818.5 169.7 L816.1 170.3 L813.7 170.9 L811.3 171.5 L808.9 172.2 L806.5 172.9 L804.1 173.6 L801.7 174.3 L799.2 175 L796.8 175.8 L794.3 176.6 L791.8 177.4 L789.3 178.2 L786.8 179 L784.3 179.9 L781.8 180.8 L779.3 181.7 L776.7 182.6 L774.2 183.6 L771.6 184.5 L769.1 185.5 L766.5 186.5 L763.9 187.5 L761.4 188.6 L758.8 189.6 L756.2 190.7 L753.6 191.8 L751 192.9 L748.4 194 L745.8 195.1 L743.2 196.2 L740.5 197.4 L737.9 198.6 L735.3 199.8 L732.7 201 L730 202.2 L727.4 203.4 L724.8 204.6 L722.1 205.9 L719.5 207.1 L716.9 208.4 L714.2 209.7 L711.6 211 L709 212.3 L706.4 213.6 L703.7 214.9 L701.1 216.3 L698.5 217.6 L695.9 219 L693.3 220.3 L690.7 221.7 L688.1 223.1 L685.5 224.5 L682.9 225.9 L680.4 227.3 L677.8 228.7 L675.2 230.1 L672.7 231.6 L670.1 233 L667.6 234.5 L665.1 235.9 L662.6 237.4 L660.1 238.8 L657.6 240.3 L655.1 241.8 L652.6 243.3 L650.2 244.8 L647.7 246.3 L645.3 247.8 L642.9 249.3 L640.5 250.8 L638.1 252.3 L635.8 253.8 L633.4 255.4 L631.1 256.9 L628.7 258.4 L626.4 260 L624.1 261.5 L621.9 263.1 L619.6 264.6 L617.4 266.2 L615.2 267.8 L613 269.3 L610.8 270.9 L608.6 272.5 L606.5 274 L604.3 275.6 L602.2 277.2 L600.2 278.8 L598.1 280.4 L596.1 282 L594 283.6 L592.1 285.2 L590.1 286.7 L588.1 288.3 L586.2 289.9 L584.3 291.5 L582.4 293.2 L580.5 294.8 L578.7 296.4 L576.9 298 L575.1 299.6 L573.3 301.2 L571.6 302.8 L569.9 304.4 L568.2 306 L566.5 307.7 L564.9 309.3 L563.3 310.9 L561.7 312.5 L560.1 314.1 L558.6 315.7 L557.1 317.4 L555.6 319 L554.1 320.6 L552.7 322.2 L551.3 323.8 L549.9 325.5 L548.5 327.1 L547.2 328.7 L545.9 330.3 L544.6 331.9 L543.4 333.5 L542.2 335.2 L541 336.8 L539.8 338.4 L538.7 340 L537.5 341.6 L536.5 343.2 L535.4 344.8 L534.4 346.4 L533.4 348 L532.4 349.6 L531.4 351.2 L530.5 352.8 L529.6 354.4 L528.7 356 L527.9 357.6 L527.1 359.2 M926.5 154 L928.4 153.3 L930.4 152.6 L932.3 151.9 L934.2 151.3 L936.2 150.7 L938.1 150.1 L940.1 149.5 L942.1 149 L944.1 148.5 L946 148.1 L948 147.7 L950 147.3 L952.1 146.9 L954.1 146.6 L956.1 146.3 L958.2 146.1 L960.3 145.8 L962.3 145.7 L964.4 145.5 L966.5 145.4 L968.7 145.3 L970.8 145.2 L973 145.2 L975.2 145.3 L977.4 145.3 L979.6 145.4 L981.8 145.5 L984.1 145.7 L986.3 145.9 L988.6 146.1 L991 146.3 L993.3 146.6 L995.7 146.9 L998 147.3 L1000.4 147.7 L1002.9 148.1 L1005.3 148.6 L1007.8 149 L1010.3 149.6 L1012.8 150.1 L1015.3 150.7 L1017.9 151.3 L1020.5 151.9 L1023.1 152.6 L1025.7 153.3 L1028.4 154 L1031 154.8 L1033.7 155.5 L1036.4 156.3 L1039.1 157.2 L1041.9 158 L1044.7 158.9 L1047.5 159.8 L1050.3 160.7 L1053.1 161.7 L1055.9 162.7 L1058.8 163.7 L1061.6 164.7 L1064.5 165.7 L1067.4 166.8 L1070.3 167.9 L1073.3 169 L1076.2 170.1 L1079.2 171.2 L1082.1 172.4 L1085.1 173.6 L1088.1 174.8 L1091.1 176 L1094.1 177.2 L1097.1 178.5 L1100.1 179.7 L1103.2 181 L1106.2 182.3 L1109.2 183.6 L1112.3 184.9 L1115.3 186.3 L1118.3 187.6 L1121.4 189 L1124.4 190.4 L1127.5 191.8 L1130.5 193.2 L1133.6 194.6 L1136.6 196 L1139.7 197.4 L1142.7 198.9 L1145.7 200.3 L1148.8 201.8 L1151.8 203.3 L1154.8 204.8 L1157.8 206.3 L1160.8 207.8 L1163.8 209.3 L1166.8 210.8 L1169.8 212.3 L1172.7 213.9 L1175.7 215.4 L1178.6 217 L1181.6 218.5 L1184.5 220.1 L1187.4 221.7 L1190.3 223.3 L1193.1 224.9 L1196 226.5 L1198.8 228.1 L1201.7 229.7 L1204.5 231.3 L1207.3 232.9 L1210 234.5 L1212.8 236.2 L1215.5 237.8 L1218.2 239.5 L1220.9 241.1 L1223.6 242.8 L1226.2 244.4 L1228.8 246.1 L1231.4 247.8 L1234 249.4 L1236.6 251.1 L1239.1 252.8 L1241.6 254.5 L1244.1 256.2 L1246.6 257.8 L1249 259.5 L1251.4 261.2 L1253.8 262.9 L1256.1 264.6 L1258.4 266.3 L1260.7 268 L1263 269.8 L1265.2 271.5 L1267.4 273.2 L1269.6 274.9 L1271.7 276.6 L1273.9 278.4 L1275.9 280.1 L1278 281.8 L1280 283.5 L1282 285.3 L1284 287 L1285.9 288.7 L1287.8 290.5 L1289.6 292.2 L1291.5 294 L1293.2 295.7 L1295 297.4 L1296.7 299.2 L1298.4 300.9 L1300.1 302.7 L1301.7 304.4 L1303.3 306.2 L1304.8 307.9 L1306.3 309.7 L1307.8 311.4 L1309.3 313.2 L1310.7 314.9 L1312 316.7 L1313.4 318.4 L1314.7 320.2 L1315.9 321.9 L1317.2 323.7 L1318.4 325.4 L1319.5 327.2 L1320.6 328.9 L1321.7 330.6 L1322.8 332.4 L1323.8 334.1 L1324.7 335.9 L1325.7 337.6 L1326.6 339.4 L1327.4 341.1 L1328.3 342.9 L1329 344.6 L1329.8 346.3 L1330.5 348.1 L1331.2 349.8 L1331.8 351.6 L1332.4 353.3 L1333 355 L1333.5 356.8 L1334 358.5 L1334.5 360.2 L1334.9 361.9 L1335.3 363.7 L1335.6 365.4 L1335.9 367.1 L1336.2 368.8 L1336.5 370.5 L1336.7 372.3 L1336.8 374 L1337 375.7 M772.5 109 L769.2 111.2 L765.9 113.3 L762.7 115.5 L759.5 117.7 L756.3 119.8 L753.1 122 L749.9 124.2 L746.8 126.3 L743.6 128.5 L740.5 130.7 L737.5 132.8 L734.4 135 L731.4 137.2 L728.4 139.3 L725.4 141.5 L722.4 143.7 L719.5 145.9 L716.5 148 L713.7 150.2 L710.8 152.4 L708 154.5 L705.1 156.7 L702.4 158.9 L699.6 161 L696.9 163.2 L694.2 165.4 L691.5 167.5 L688.8 169.7 L686.2 171.9 L683.6 174.1 L681.1 176.2 L678.5 178.4 L676 180.6 L673.6 182.7 L671.1 184.9 L668.7 187.1 L666.3 189.2 L664 191.4 L661.7 193.6 L659.4 195.8 L657.2 197.9 L655 200.1 L652.8 202.3 L650.6 204.4 L648.5 206.6 L646.4 208.8 L644.4 210.9 L642.4 213.1 L640.4 215.3 L638.5 217.4 L636.6 219.6 L634.7 221.8 L632.9 224 L631.1 226.1 L629.3 228.3 L627.6 230.5 L625.9 232.6 L624.3 234.8 L622.7 237 L621.1 239.1 L619.6 241.3 L618.1 243.5 L616.6 245.7 L615.2 247.8 L613.8 250 L612.5 252.2 L611.2 254.3 L610 256.5 L608.7 258.7 L607.6 260.8 L606.4 263 L605.3 265.2 L604.3 267.3 L603.2 269.5 L602.3 271.7 L601.3 273.9 L600.4 276 L599.6 278.2 L598.7 280.4 L598 282.5 L597.2 284.7 L596.5 286.9 L595.9 289 L595.3 291.2 L594.7 293.4 L594.2 295.6 L593.7 297.7 L593.3 299.9 L592.9 302.1 L592.5 304.2 L592.2 306.4 L591.9 308.6 L591.7 310.7 L591.5 312.9 L591.3 315.1 L591.2 317.3 L591.2 319.4 L591.2 321.6 L591.2 323.8 L591.2 325.9 L591.3 328.1 L591.5 330.3 L591.7 332.4 L591.9 334.6 L592.2 336.8 L592.5 338.9 L592.8 341.1 L593.2 343.3 L593.7 345.5 L594.2 347.6 L594.7 349.8 L595.3 352 L595.9 354.1 L596.5 356.3 L597.2 358.5 L597.9 360.6 L598.7 362.8 L599.5 365 L600.4 367.2 L601.3 369.3 L602.2 371.5 L603.2 373.7 L604.2 375.8 L605.2 378 L606.3 380.2 L607.5 382.3 L608.7 384.5 L609.9 386.7 L611.1 388.9 L612.4 391 L613.8 393.2 L615.1 395.4 L616.5 397.5 L618 399.7 L619.5 401.9 L621 404 L622.6 406.2 L624.2 408.4 L625.8 410.5 L627.5 412.7 L629.2 414.9 L631 417.1 L632.8 419.2 L634.6 421.4 L636.5 423.6 L638.4 425.7 L640.3 427.9 L642.3 430.1 L644.3 432.2 L646.3 434.4 L648.4 436.6 L650.5 438.8 L652.6 440.9 L654.8 443.1 L657 445.3 L659.3 447.4 L661.5 449.6 L663.8 451.8 L666.2 453.9 L668.6 456.1 L671 458.3 L673.4 460.4 L675.9 462.6 L678.4 464.8 L680.9 467 L683.5 469.1 L686 471.3 L688.7 473.5 L691.3 475.6" fill="none" stroke="#787878" stroke-width="1.39" stroke-dasharray="1.39 2.29"/>
<path d="M746.3 324.9 L745.9 323.3 L745.6 321.7 L745.3 320.1 L745 318.5 L744.7 316.9 L744.4 315.3 L744.1 313.7 L743.9 312.1 L743.6 310.5 L743.4 308.9 L743.2 307.3 L742.9 305.7 L742.7 304.1 L742.6 302.5 L742.4 300.9 L742.2 299.3 L742.1 297.7 L741.9 296.1 L741.8 294.5 L741.7 292.9 L741.6 291.3 L741.5 289.7 L741.4 288.1 L741.3 286.5 L741.2 284.9 L741.2 283.3 L741.2 281.7 L741.1 280.1 L741.1 278.5 L741.1 276.9 L741.1 275.3 L741.2 273.7 L741.2 272.1 L741.2 270.5 L741.3 268.9 L741.4 267.3 L741.5 265.7 L741.6 264.2 L741.7 262.6 L741.8 261 L741.9 259.4 L742 257.8 L742.2 256.2 L742.4 254.6 L742.5 253 L742.7 251.4 L742.9 249.8 L743.1 248.2 L743.4 246.6 L743.6 245 L743.8 243.4 L744.1 241.8 L744.4 240.2 L744.6 238.6 L744.9 237 L745.2 235.4 L745.5 233.9 L745.9 232.3 L746.2 230.7 L746.5 229.1 L746.9 227.5 L747.3 225.9 L747.7 224.3 L748 222.7 L748.5 221.1 L748.9 219.5 L749.3 218 L749.7 216.4 L750.2 214.8 L750.6 213.2 L751.1 211.6 L751.6 210 L752.1 208.4 L752.6 206.9 L753.1 205.3 L753.6 203.7 L754.1 202.1 L754.7 200.5 L755.2 198.9 L755.8 197.4 L756.4 195.8 L756.9 194.2 L757.5 192.6 L758.1 191 L758.7 189.5 L759.4 187.9 L760 186.3 L760.6 184.7 L761.3 183.1 L761.9 181.6 L762.6 180 L763.3 178.4 L764 176.9 L764.7 175.3 L765.4 173.7 L766.1 172.1 L766.8 170.6 L767.6 169 L768.3 167.5 L769 165.9 L769.8 164.3 L770.6 162.8 L771.3 161.2 L772.1 159.6 L772.9 158.1 L773.7 156.5 L774.5 155 L775.3 153.4 L776.2 151.9 L777 150.3 L777.8 148.8 L778.7 147.2 L779.5 145.7 L780.4 144.1 L781.2 142.6 L782.1 141.1 L783 139.5 L783.9 138 L784.7 136.5 L785.6 134.9 L786.5 133.4 L787.4 131.9 L788.3 130.4 L789.2 128.9 L790.2 127.3 L791.1 125.8 L792 124.3 L792.9 122.8 L793.9 121.3 L794.8 119.8 L795.7 118.3 L796.7 116.8 L797.6 115.4 L798.5 113.9 L799.5 112.4 L800.4 110.9 L801.4 109.5 L802.3 108 L803.3 106.6 L804.2 105.1 L805.1 103.7 L806.1 102.3 L807 100.9 L807.9 99.4 L808.8 98 L809.7 96.6 L810.6 95.3 L811.5 93.9 L812.4 92.5 L813.3 91.2 L814.2 89.8 L815 88.5 L815.8 87.2 L816.7 85.9 L817.5 84.6 L818.2 83.4 L819 82.1 L819.7 80.9 L820.4 79.7 L821.1 78.5 L821.7 77.4 L822.3 76.3 L822.8 75.2 L823.3 74.1 L823.8 73.1 L824.2 72.1 L824.5 71.1 L824.8 70.2 L825 69.3 L825.1 68.5 L825.2 67.7 L825.1 66.9 L825 66.2 L824.7 65.6 L824.3 65 L823.8 64.5 L823.2 64.1 L822.4 63.7 L821.5 63.4 L820.4 63.1 L819.2 63 L817.8 62.9 L816.2 62.9 L814.5 62.9 L812.6 63 L810.5 63.2 L808.2 63.5 L805.7 63.8 L803.1 64.2 L800.3 64.7 L797.3 65.2 L794.2 65.8 M774.6 328.2 L774.3 326.6 L774 325 L773.7 323.4 L773.4 321.8 L773.2 320.2 L772.9 318.5 L772.7 316.9 L772.4 315.3 L772.2 313.7 L772 312.1 L771.8 310.5 L771.5 308.9 L771.4 307.3 L771.2 305.6 L771 304 L770.8 302.4 L770.7 300.8 L770.5 299.2 L770.4 297.6 L770.3 296 L770.2 294.4 L770.1 292.8 L770 291.1 L769.9 289.5 L769.8 287.9 L769.8 286.3 L769.7 284.7 L769.7 283.1 L769.6 281.5 L769.6 279.9 L769.6 278.3 L769.6 276.6 L769.6 275 L769.6 273.4 L769.6 271.8 L769.7 270.2 L769.7 268.6 L769.8 267 L769.8 265.4 L769.9 263.8 L770 262.1 L770.1 260.5 L770.2 258.9 L770.3 257.3 L770.4 255.7 L770.6 254.1 L770.7 252.5 L770.9 250.9 L771 249.3 L771.2 247.7 L771.4 246.1 L771.6 244.4 L771.8 242.8 L772 241.2 L772.2 239.6 L772.5 238 L772.7 236.4 L772.9 234.8 L773.2 233.2 L773.5 231.6 L773.7 230 L774 228.4 L774.3 226.8 L774.6 225.2 L775 223.6 L775.3 221.9 L775.6 220.3 L776 218.7 L776.3 217.1 L776.7 215.5 L777 213.9 L777.4 212.3 L777.8 210.7 L778.2 209.1 L778.6 207.5 L779 205.9 L779.5 204.3 L779.9 202.7 L780.3 201.1 L780.8 199.5 L781.3 197.9 L781.7 196.3 L782.2 194.7 L782.7 193.1 L783.2 191.5 L783.7 189.9 L784.2 188.3 L784.7 186.7 L785.3 185.1 L785.8 183.5 L786.3 181.9 L786.9 180.3 L787.4 178.8 L788 177.2 L788.6 175.6 L789.2 174 L789.8 172.4 L790.4 170.8 L791 169.2 L791.6 167.6 L792.2 166 L792.9 164.4 L793.5 162.9 L794.1 161.3 L794.8 159.7 L795.4 158.1 L796.1 156.5 L796.8 154.9 L797.5 153.4 L798.2 151.8 L798.8 150.2 L799.5 148.6 L800.3 147.1 L801 145.5 L801.7 143.9 L802.4 142.4 L803.1 140.8 L803.9 139.2 L804.6 137.7 L805.4 136.1 L806.1 134.5 L806.9 133 L807.6 131.4 L808.4 129.9 L809.2 128.3 L810 126.7 L810.7 125.2 L811.5 123.7 L812.3 122.1 L813.1 120.6 L813.9 119 L814.7 117.5 L815.5 116 L816.3 114.4 L817.1 112.9 L817.9 111.4 L818.7 109.9 L819.6 108.4 L820.4 106.9 L821.2 105.4 L822 103.9 L822.8 102.4 L823.6 100.9 L824.5 99.4 L825.3 97.9 L826.1 96.5 L826.9 95 L827.7 93.5 L828.5 92.1 L829.3 90.7 L830.1 89.2 L830.9 87.8 L831.6 86.4 L832.4 85 L833.1 83.6 L833.9 82.3 L834.6 80.9 L835.3 79.6 L836 78.2 L836.7 76.9 L837.4 75.7 L838 74.4 L838.6 73.1 L839.2 71.9 L839.7 70.7 L840.2 69.6 L840.7 68.5 L841.1 67.4 L841.4 66.3 L841.7 65.3 L842 64.3 L842.1 63.4 L842.2 62.5 L842.2 61.7 L842.1 60.9 L841.9 60.2 L841.5 59.6 L841.1 59 L840.5 58.5 L839.7 58.1 L838.8 57.7 L837.7 57.5 L836.4 57.3 L835 57.2 L833.3 57.2 L831.5 57.3 L829.4 57.5 L827.2 57.8 L824.7 58.1 L822.1 58.6 L819.2 59.1 L816.2 59.7 L813 60.3 L809.6 61 L806 61.8 L802.3 62.6 L798.5 63.5 L794.5 64.5 L790.4 65.4 L786.1 66.5 L781.8 67.5 L777.3 68.6 L772.8 69.8 L768.2 70.9 L763.5 72.1 L758.7 73.4" fill="none" stroke="#ee82ee" stroke-width="1.6" stroke-dasharray="1.6 2.1"/>
<path d="M713.5 243.9 L714 242.3 L714.5 240.7 L715 239 L715.5 237.4 L716 235.8 L716.6 234.2 L717.1 232.6 L717.7 231 L718.3 229.4 L718.9 227.8 L719.5 226.1 L720.1 224.5 L720.7 222.9 L721.4 221.3 L722.1 219.7 L722.7 218.1 L723.4 216.5 L724.1 214.8 L724.8 213.2 L725.6 211.6 L726.3 210 L727.1 208.4 L727.8 206.8 L728.6 205.2 L729.4 203.6 L730.2 202 L731.1 200.4 L731.9 198.7 L732.7 197.1 L733.6 195.5 L734.5 193.9 L735.3 192.3 L736.2 190.7 L737.1 189.1 L738.1 187.5 L739 185.9 L739.9 184.3 L740.9 182.7 L741.9 181.1 L742.8 179.5 L743.8 177.9 L744.8 176.3 L745.8 174.7 L746.9 173 L747.9 171.4 L748.9 169.8 L750 168.2 L751.1 166.6 L752.1 165 L753.2 163.4 L754.3 161.8 L755.4 160.2 L756.5 158.7 L757.7 157.1 L758.8 155.5 L760 153.9 L761.1 152.3 L762.3 150.7 L763.5 149.1 L764.6 147.5 L765.8 145.9 L767 144.3 L768.3 142.7 L769.5 141.1 L770.7 139.6 L771.9 138 L773.2 136.4 L774.4 134.8 L775.7 133.2 L777 131.6 L778.3 130.1 L779.5 128.5 L780.8 126.9 L782.1 125.3 L783.4 123.8 L784.7 122.2 L786.1 120.6 L787.4 119.1 L788.7 117.5 L790 115.9 L791.4 114.4 L792.7 112.8 L794.1 111.3 L795.4 109.7 L796.8 108.2 L798.1 106.6 L799.5 105.1 L800.9 103.5 L802.2 102 L803.6 100.5 L805 99 L806.3 97.4 L807.7 95.9 L809.1 94.4 L810.4 92.9 L811.8 91.4 L813.2 89.9 L814.5 88.4 L815.9 87 L817.2 85.5 L818.6 84 L819.9 82.6 L821.2 81.1 L822.5 79.7 L823.8 78.3 L825.1 76.9 L826.4 75.5 L827.6 74.1 L828.9 72.7 L830.1 71.4 L831.3 70.1 L832.4 68.8 L833.5 67.5 L834.6 66.2 L835.6 65 L836.6 63.8 L837.5 62.7 L838.3 61.5 L839.1 60.5 L839.8 59.4 L840.4 58.4 L840.9 57.5 L841.3 56.6 L841.5 55.8 L841.6 55.1 L841.5 54.5 L841.2 53.9 L840.8 53.4 L840.1 53 L839.2 52.7 L838 52.5 L836.6 52.5 L834.9 52.5 L833 52.6 L830.7 52.8 L828.2 53.2 L825.5 53.6 L822.4 54.1 L819.1 54.7 L815.6 55.4 L811.8 56.1 L994.7 56.9 L996.1 57.8 L997.6 58.8 L999.3 59.8 L1001.1 60.8 L1003 61.9 L1005.1 63.1 L1007.2 64.2 L1009.5 65.5 L1011.8 66.7 L1014.2 67.9 L1016.6 69.2 L1019.1 70.5 L1021.7 71.9 L1024.3 73.2 L1026.9 74.6" fill="none" stroke="#adff2f" stroke-width="1.6" stroke-dasharray="1.6 2.1"/>
<path d="M554.7 165.2 L556.9 163.7 L559.2 162.3 L561.5 160.8 L563.8 159.3 L566.1 157.9 L568.5 156.4 L570.8 155 L573.2 153.5 L575.6 152.1 L577.9 150.6 L580.3 149.2 L582.7 147.8 L585.1 146.4 L587.5 144.9 L589.9 143.5 L592.4 142.1 L594.8 140.7 L597.2 139.3 L599.6 137.9 L602.1 136.6 L604.5 135.2 L606.9 133.8 L609.4 132.4 L611.8 131.1 L614.2 129.7 L616.6 128.4 L619 127.1 L621.4 125.8 L623.8 124.4 L626.2 123.1 L628.6 121.8 L630.9 120.6 L633.3 119.3 L635.6 118 L637.9 116.8 L640.2 115.5 L642.4 114.3 L644.7 113.1 L646.9 111.9 L649 110.7 M1152.7 109.6 L1148.2 108.4 M596.9 159.3 L600.4 157.7 L603.9 156.2 L607.5 154.7 L611 153.2 L614.6 151.7 L618.2 150.2 L621.8 148.8 L625.4 147.3 L629 145.8 L632.6 144.3 L636.2 142.8 L639.9 141.3 L643.5 139.9 L647.2 138.4 L650.9 136.9 L654.6 135.5 L658.2 134 L661.9 132.6 L665.6 131.1 L669.3 129.7 L673 128.2 L676.7 126.8 L680.4 125.4 L684.1 124 L687.8 122.6 L691.5 121.2 L695.2 119.8 L698.9 118.4 L702.6 117 L706.3 115.6 L710 114.2 L713.7 112.9 L717.4 111.5 L721 110.2 L724.7 108.8 L728.3 107.5 L731.9 106.2 L735.6 104.9 L739.1 103.6 L742.7 102.4 L746.3 101.1 L749.8 99.8 L753.3 98.6 L756.8 97.4 L760.3 96.2 L763.7 95 L767.1 93.8 L770.5 92.7 L773.8 91.6 L777.2 90.5 L780.4 89.4 L783.7 88.3 L786.8 87.3 L790 86.3 L793.1 85.3 L796.1 84.3 L799.1 83.4 L802.1 82.5 L805 81.6 L807.8 80.8 L810.5 80 L813.3 79.3 L815.9 78.6 L818.5 77.9 L821 77.3 L823.4 76.7 L825.8 76.2 L828.1 75.7 L830.3 75.2 L832.4 74.8 L834.5 74.5 L836.5 74.2 L838.4 74 L840.3 73.8 L842.1 73.7 L843.8 73.6 L845.4 73.6 L847 73.7 L848.5 73.8 L849.9 73.9 L851.3 74.1 L852.7 74.4 L853.9 74.7 L855.2 75.1 L856.3 75.5 L857.5 76 L858.6 76.5 L859.6 77.1 L860.6 77.7 L861.6 78.4 L862.5 79.1 L863.4 79.8 L864.3 80.6 L865.2 81.4 M576.9 159 L580.2 157.3 L583.5 155.7 L586.8 154 L590.2 152.4 L593.6 150.8 L596.9 149.1 L600.4 147.5 L603.8 145.8 L607.3 144.2 L610.8 142.6 L614.3 140.9 L617.8 139.3 L621.4 137.7 L624.9 136 L628.5 134.4 L632.2 132.7 L635.8 131.1 L639.5 129.5 L643.1 127.8 L646.8 126.2 L650.5 124.5 L654.3 122.9 L658 121.3 L661.8 119.6 L665.6 118 L669.4 116.4 L673.3 114.7 L677.1 113.1 L681 111.5 L684.8 109.8 L688.7 108.2 L692.6 106.5 L696.6 104.9 L700.5 103.3 L704.5 101.6 L708.4 100 L712.4 98.4 L716.4 96.7 L720.4 95.1 L724.5 93.5 L728.5 91.8 L732.6 90.2 L736.6 88.6 L740.7 86.9 L744.8 85.3 L748.9 83.7 L753 82 L757.1 80.4 L761.2 78.8 L765.4 77.1 L769.5 75.5 L773.7 73.9 L777.8 72.3 L782 70.6 L786.2 69 L790.3 67.4 L794.5 65.8 L798.7 64.2 L802.9 62.5 L807.1 60.9 L811.3 59.3 L815.5 57.7 L819.6 56.1 L823.8 54.5 L828 52.9 L832.1 51.3 L836.3 49.7 L840.4 48.1 L844.5 46.6 L848.5 45 L852.5 43.5 L856.5 42 L860.3 40.5 L939.4 39.1 L934.3 37.7 L929.5 36.4 L925 35.3 L921.1 34.3 L917.8 33.6 L915.5 33.2 L914 33.3 L913.3 33.8 L913.2 34.7 L913.4 35.7 L913.8 37 L914.3 38.3 L914.9 39.7 L915.6 41.2 L916.3 42.6 L917 44.2 L917.7 45.7 L918.4 47.3 L919.2 48.8 L920 50.4 L920.7 52 L921.5 53.6 L922.3 55.2 L923 56.8 L923.8 58.4 L924.6 60 L925.3 61.6 L926.1 63.2 L926.9 64.9 L927.7 66.5 L928.4 68.1 L929.2 69.7 L930 71.3 L930.7 73 L931.5 74.6 M551 163.3 L552.4 162.1 L553.8 161 L555.2 159.8 L556.6 158.6 L557.9 157.4 L559.3 156.3 L560.7 155.1 L562.1 154 L563.4 152.9 L564.7 151.8 L566.1 150.6 L567.4 149.6 L568.7 148.5 L570 147.4 L571.3 146.3 L572.5 145.3 L573.8 144.2 L575 143.2 L576.2 142.2 L577.4 141.2 L578.5 140.2 L579.7 139.2 L580.8 138.2 L581.8 137.3 L582.9 136.4 L583.9 135.4 L584.9 134.5 L585.8 133.6 M1215.9 132.8 L1212.2 131.9 L1208.6 131.1 L1205 130.3 L1201.5 129.5 L1197.9 128.7 L1194.5 127.9 L1191.1 127.2 L1187.7 126.4 L1184.4 125.7 L1181.1 125 L1177.9 124.4 L1174.7 123.7 L1171.6 123.1 L1168.5 122.5 L1165.5 121.9 M597.6 156.8 L597.6 156 L597.6 155.3 L597.6 154.5 L597.5 153.8 L597.4 153.1 L597.3 152.5 L597.1 151.8 L596.9 151.2 L596.7 150.5 L596.5 149.9 L596.2 149.3 L595.9 148.7 L595.6 148.2 L595.2 147.6 L594.8 147.1 L594.3 146.6 L593.9 146.1 L593.3 145.6 L592.8 145.2 L592.2 144.7 L591.5 144.3 L590.9 143.9 L590.1 143.5 L589.4 143.2 L588.6 142.8 L587.7 142.5 L586.8 142.2 L585.8 141.9 L584.8 141.6 L583.8 141.4 L582.7 141.2 L581.6 141 L580.4 140.8 L579.1 140.6 L577.8 140.5 L576.5 140.4 L575.1 140.3 L573.6 140.2 L572.1 140.1 L570.5 140.1 L568.9 140.1" fill="none" stroke="#ffee00" stroke-width="1.6" stroke-dasharray="1.6 2.1"/>
<path d="M769.2 264.4 L768.7 263 L768.2 261.6 L767.7 260.2 L767.3 258.7 L766.8 257.3 L766.4 255.9 L766 254.5 L765.5 253.1 L765.1 251.7 L764.7 250.3 L764.3 248.9 L763.9 247.5 L763.5 246.1 L763.1 244.7 L762.7 243.2 L762.4 241.8 L762 240.5 L761.7 239.1 L761.3 237.7 L761 236.3 L760.6 234.9 L760.3 233.5 L760 232.1 L759.7 230.7 L759.4 229.3 L759.1 227.9 L758.8 226.6 L758.5 225.2 L758.2 223.8 L758 222.4 L757.7 221.1 L757.5 219.7 L757.2 218.3 L757 217 L756.7 215.6 L756.5 214.3 L756.3 212.9 L756.1 211.6 L755.9 210.2 L755.7 208.9 L755.5 207.5 L755.3 206.2 L755.1 204.8 L754.9 203.5 L754.7 202.2 L754.6 200.9 L754.4 199.5 L754.2 198.2 L754.1 196.9 L753.9 195.6 L753.8 194.3 L753.6 193 L753.5 191.7 L753.4 190.4 L753.2 189.1 L753.1 187.8 L753 186.5 L752.9 185.2 L752.8 184 L752.7 182.7 L752.6 181.4 L752.5 180.2 L752.4 178.9 L752.3 177.7 L752.2 176.5 L752.1 175.2 L752 174 L751.9 172.8 L751.8 171.6 L751.7 170.3 L751.6 169.1 L751.6 167.9 L751.5 166.8 L751.4 165.6 L751.3 164.4 L751.2 163.2 L751.1 162.1 L751 160.9 L751 159.8 L750.9 158.6 L750.8 157.5 L750.7 156.4 L750.6 155.3 L750.5 154.2 L750.3 153.1 L750.2 152 L750.1 151 L750 149.9 L749.8 148.9 L749.7 147.8 L749.6 146.8 L749.4 145.8 L749.2 144.8 L749.1 143.8 L748.9 142.8 L748.7 141.8 L748.5 140.9 L748.3 140 L748 139 L747.8 138.1 L747.5 137.2 L747.3 136.3 L747 135.5 L746.7 134.6 L746.3 133.8 L746 133 L745.6 132.2 L745.3 131.4 L744.9 130.6 L744.4 129.9 L744 129.2 L743.5 128.4 L743 127.8 L742.5 127.1 L742 126.4 L741.4 125.8 L740.8 125.2 L740.2 124.6 L739.5 124 L738.8 123.5 L738.1 123 L737.3 122.5 L736.5 122 L735.7 121.5 L734.8 121.1 L733.9 120.7 L733 120.3 L732 119.9 L730.9 119.6 L729.9 119.3 L728.7 119 L727.6 118.8 L726.4 118.5 L725.1 118.3 L723.8 118.1 L722.5 118 L721.1 117.9 L719.7 117.8 L718.2 117.7 L716.6 117.6 L715 117.6 L713.4 117.6 L711.7 117.7 L709.9 117.7 L708.1 117.8 L706.3 117.9 L704.4 118.1 L702.4 118.2 L700.4 118.4 L698.3 118.7 L696.2 118.9 L694.1 119.2 L691.8 119.5 L689.6 119.8 L687.2 120.2 L684.9 120.5 L682.4 120.9 L680 121.4 L677.4 121.8 L674.8 122.3 L672.2 122.8 L669.5 123.3 L666.8 123.8 L664 124.4 L661.2 125 L658.4 125.6 L655.5 126.2 L652.5 126.8 L649.5 127.5 L646.5 128.2 L643.4 128.9 L640.3 129.6 L637.2 130.4 L634 131.1 L630.7 131.9 L627.5 132.7 L624.2 133.5 L620.9 134.3 L617.5 135.2 L614.1 136 L610.7 136.9 M754.2 262.6 L753.7 261.2 L753.2 259.8 L752.7 258.5 L752.2 257.1 L751.8 255.7 L751.3 254.3 L750.8 253 L750.4 251.6 L749.9 250.2 L749.5 248.9 L749 247.5 L748.6 246.1 L748.2 244.8 L747.8 243.4 L747.4 242 L747 240.7 L746.6 239.3 L746.2 238 L745.8 236.6 L745.5 235.3 L745.1 233.9 L744.8 232.6 L744.4 231.2 L744.1 229.9 L743.8 228.6 L743.4 227.2 L743.1 225.9 L742.8 224.6 L742.5 223.2 L742.2 221.9 L741.9 220.6 L741.6 219.3 L741.4 218 L741.1 216.6 L740.8 215.3 L740.6 214 L740.3 212.7 L740.1 211.4 L739.8 210.1 L739.6 208.8 L739.4 207.5 L739.2 206.3 L738.9 205 L738.7 203.7 L738.5 202.4 L738.3 201.2 L738.1 199.9 L737.9 198.6 L737.8 197.4 L737.6 196.1 L737.4 194.9 L737.2 193.6 L737.1 192.4 L736.9 191.1 L736.7 189.9 L736.6 188.7 L736.4 187.5 L736.3 186.3 L736.1 185.1 L736 183.9 L735.8 182.7 L735.7 181.5 L735.5 180.3 L735.4 179.1 L735.2 177.9 L735.1 176.8 L735 175.6 L734.8 174.5 L734.7 173.3 L734.5 172.2 L734.4 171.1 L734.3 169.9 L734.1 168.8 L734 167.7 L733.8 166.6 L733.7 165.5 L733.5 164.5 L733.4 163.4 L733.2 162.3 L733.1 161.3 L732.9 160.2 L732.7 159.2 L732.6 158.2 L732.4 157.2 L732.2 156.2 L732 155.2 L731.8 154.2 L731.6 153.2 L731.4 152.3 L731.1 151.3 L730.9 150.4 L730.6 149.5 L730.4 148.5 L730.1 147.7 L729.8 146.8 L729.5 145.9 L729.2 145 L728.9 144.2 L728.5 143.4 L728.2 142.6 L727.8 141.8 L727.4 141 L727 140.2 L726.6 139.5 L726.1 138.7 L725.7 138 L725.2 137.3 L724.7 136.6 L724.1 136 L723.6 135.3 L723 134.7 L722.4 134.1 L721.8 133.5 L721.1 132.9 L720.4 132.4 L719.7 131.9 L718.9 131.3 L718.2 130.9 L717.4 130.4 L716.5 129.9 L715.6 129.5 L714.7 129.1 L713.8 128.7 L712.8 128.4 L711.8 128 L710.7 127.7 L709.6 127.4 L708.5 127.1 L707.3 126.9 L706.1 126.7 L704.8 126.5 L703.5 126.3 L702.1 126.2 L700.7 126 L699.3 125.9 L697.8 125.9 L696.3 125.8 L694.7 125.8 L693.1 125.8 L691.4 125.8 L689.7 125.8 L688 125.9 L686.2 126 L684.3 126.1 M755.9 262.7 L755.8 261.2 L755.7 259.6 L755.6 258.1 L755.6 256.5 L755.5 255 L755.5 253.4 L755.4 251.9 L755.4 250.3 L755.4 248.7 L755.4 247.2 L755.4 245.6 L755.4 244.1 L755.4 242.5 L755.5 241 L755.5 239.4 L755.6 237.9 L755.6 236.3 L755.7 234.8 L755.8 233.2 L755.9 231.7 L756 230.1 L756.1 228.6 L756.3 227 L756.4 225.5 L756.5 224 L756.7 222.4 L756.8 220.9 L757 219.3 L757.2 217.8 L757.4 216.3 L757.6 214.7 L757.8 213.2 L758 211.6 L758.3 210.1 L758.5 208.6 L758.7 207 L759 205.5 L759.3 204 L759.5 202.5 L759.8 200.9 L760.1 199.4 L760.4 197.9 L760.7 196.4 L761 194.8 L761.4 193.3 L761.7 191.8 L762 190.3 L762.4 188.8 L762.8 187.2 L763.1 185.7 L763.5 184.2 L763.9 182.7 L764.3 181.2 L764.7 179.7 L765.1 178.2 L765.5 176.7 L765.9 175.2 L766.4 173.7 L766.8 172.2 L767.2 170.7 L767.7 169.2 L768.1 167.7 L768.6 166.3 L769.1 164.8 L769.5 163.3 L770 161.8 L770.5 160.3 L771 158.9 L771.5 157.4 L772 155.9 L772.5 154.5 L773 153 L773.5 151.6 L774.1 150.1 L774.6 148.7 L775.1 147.2 L775.7 145.8 L776.2 144.4 L776.7 143 L777.3 141.5 L777.8 140.1 L778.4 138.7 L778.9 137.3 L779.5 135.9 L780 134.5 L780.6 133.1 L781.1 131.7 L781.7 130.3 L782.2 129 L782.8 127.6 L783.4 126.3 L783.9 124.9 L784.4 123.6 L785 122.2 L785.5 120.9 L786.1 119.6 L786.6 118.3 L787.1 117 L787.6 115.7 L788.1 114.4 L788.7 113.2 L789.1 111.9 L789.6 110.7 L790.1 109.5 L790.6 108.2 L791 107 L791.4 105.9 L791.9 104.7 L792.3 103.5 L792.6 102.4 L793 101.3 L793.3 100.2 L793.6 99.1 L793.9 98 L794.2 97 M743.4 261.1 L743.3 259.5 L743.2 258 L743.1 256.4 L743 254.9 L742.9 253.4 L742.9 251.9 L742.8 250.3 L742.8 248.8 L742.8 247.3 L742.8 245.7 L742.8 244.2 L742.8 242.7 L742.8 241.1 L742.8 239.6 L742.8 238.1 L742.9 236.6 L743 235 L743 233.5 L743.1 232 L743.2 230.5 L743.3 229 L743.4 227.4 L743.5 225.9 L743.7 224.4 L743.8 222.9 L743.9 221.4 L744.1 219.9 L744.3 218.3 L744.5 216.8 L744.6 215.3 L744.8 213.8 L745.1 212.3 L745.3 210.8 L745.5 209.3 L745.7 207.8 L746 206.3 L746.2 204.8 L746.5 203.3 L746.8 201.8 L747.1 200.3 L747.4 198.8 L747.7 197.3 L748 195.8 L748.3 194.3 L748.6 192.8 L749 191.3 L749.3 189.9 L749.7 188.4 L750 186.9 L750.4 185.4 L750.8 183.9 L751.1 182.5 L751.5 181 L751.9 179.5 L752.3 178.1 L752.8 176.6 L753.2 175.1 L753.6 173.7 L754 172.2 L754.5 170.8 L754.9 169.3 L755.4 167.9 L755.8 166.4 L756.3 165 L756.8 163.6 L757.3 162.1 L757.7 160.7 L758.2 159.3 L758.7 157.8 L759.2 156.4 L759.7 155 L760.2 153.6 L760.7 152.2 L761.3 150.8 L761.8 149.4 L762.3 148 L762.8 146.6 L763.3 145.3 L763.9 143.9 L764.4 142.5 L764.9 141.2 L765.5 139.8 L766 138.4 L766.5 137.1 L767.1 135.8 L767.6 134.4 L768.1 133.1 L768.6 131.8 L769.2 130.5 L769.7 129.2 L770.2 127.9 L770.7 126.6 L771.2 125.4 L771.7 124.1 L772.2 122.8 L772.7 121.6 L773.2 120.4 L773.7 119.2 L774.1 117.9 L774.6 116.8 L775 115.6 L775.5 114.4 L775.9 113.2 L776.3 112.1 L776.7 111 L777 109.9 L777.4 108.8 L777.7 107.7 M762 258.3 L761.7 256.8 L761.4 255.4 L761.1 253.9 L760.9 252.4 L760.6 250.9 L760.3 249.5 L760.1 248 L759.8 246.5 L759.6 245.1 L759.3 243.6 L759.1 242.1 L758.9 240.7 L758.7 239.2 L758.5 237.7 L758.3 236.3 L758.1 234.8 L757.9 233.4 L757.8 231.9 L757.6 230.4 L757.5 229 L757.3 227.5 L757.2 226.1 L757.1 224.6 L756.9 223.2 L756.8 221.7 L756.7 220.3 L756.6 218.8 L756.5 217.4 L756.5 216 L756.4 214.5 L756.3 213.1 L756.3 211.7 L756.2 210.2 L756.2 208.8 L756.2 207.4 L756.1 206 L756.1 204.5 L756.1 203.1 L756.1 201.7 L756.1 200.3 L756.1 198.9 L756.1 197.5 L756.1 196.1 L756.2 194.7 L756.2 193.3 L756.2 191.9 L756.3 190.5 L756.3 189.1 L756.4 187.7 L756.5 186.3 L756.5 184.9 L756.6 183.6 L756.7 182.2 L756.8 180.8 L756.9 179.5 L757 178.1 L757.1 176.7 L757.2 175.4 L757.3 174 L757.4 172.7 L757.5 171.4 L757.6 170 L757.8 168.7 L757.9 167.4 L758 166.1 L758.1 164.8 L758.3 163.4 L758.4 162.1 L758.6 160.9 L758.7 159.6 L758.8 158.3 L759 157 L759.1 155.7 L759.3 154.5 L759.4 153.2 L759.5 152 L759.7 150.7 L759.8 149.5 L760 148.3 L760.1 147.1 L760.2 145.9 L760.4 144.7 L760.5 143.5 L760.6 142.3 L760.7 141.1 L760.8 140 L760.9 138.8 L761 137.7 L761.1 136.6 L761.2 135.4 L761.3 134.3 L761.3 133.2 L761.4 132.2 L761.4 131.1 L761.5 130 L761.5 129 L761.5 128 L761.5 127 L761.5 126 L761.4 125 L761.4 124 L761.3 123.1 L761.2 122.2 L761.1 121.2 L761 120.3 L760.8 119.5 L760.6 118.6 L760.4 117.8 L760.2 117 L759.9 116.2 L759.7 115.4 L759.3 114.6 L759 113.9 L758.6 113.2 L758.2 112.5 M756.7 266.8 L756.3 265.3 L755.9 263.9 L755.6 262.4 L755.2 260.9 L754.9 259.5 L754.5 258 L754.2 256.5 L753.9 255 L753.6 253.6 L753.3 252.1 L753 250.6 L752.7 249.2 L752.4 247.7 L752.2 246.3 L751.9 244.8 L751.7 243.3 L751.4 241.9 L751.2 240.4 L751 239 L750.8 237.5 L750.6 236.1 L750.4 234.6 L750.2 233.2 L750 231.7 L749.8 230.3 L749.7 228.8 L749.5 227.4 L749.4 226 L749.3 224.5 L749.1 223.1 L749 221.7 L748.9 220.2 L748.8 218.8 L748.7 217.4 L748.6 215.9 L748.5 214.5 L748.5 213.1 L748.4 211.7 L748.3 210.3 L748.3 208.8 L748.3 207.4 L748.2 206 L748.2 204.6 L748.2 203.2 L748.2 201.8 L748.2 200.4 L748.2 199 L748.2 197.6 L748.2 196.2 L748.2 194.9 L748.2 193.5 L748.3 192.1 L748.3 190.7 L748.4 189.4 L748.4 188 L748.5 186.6 L748.5 185.3 L748.6 183.9 L748.7 182.6 L748.7 181.2 L748.8 179.9 L748.9 178.5 L749 177.2 L749.1 175.9 L749.2 174.5 L749.3 173.2 L749.4 171.9 L749.5 170.6 L749.6 169.3 L749.7 168 L749.8 166.7 L750 165.4 L750.1 164.1 L750.2 162.9 L750.3 161.6 L750.5 160.3 L750.6 159.1 L750.7 157.8 L750.8 156.6 L750.9 155.4 L751.1 154.1 L751.2 152.9 L751.3 151.7 L751.4 150.5 L751.5 149.3 L751.6 148.1 L751.8 147 L751.9 145.8 L752 144.7 L752 143.5 L752.1 142.4 L752.2 141.3 L752.3 140.2 L752.3 139.1 L752.4 138 L752.4 136.9 L752.5 135.8 L752.5 134.8 L752.5 133.7 L752.5 132.7 L752.5 131.7 L752.5 130.7 L752.4 129.7 L752.4 128.8 L752.3 127.8 L752.2 126.9 L752.1 126 L752 125.1 L751.8 124.2 L751.6 123.3 L751.4 122.5 L751.2 121.7 L751 120.9 L750.7 120.1 L750.4 119.3 M761.3 269 L761.8 267.3 L762.3 265.7 L762.8 264.1 L763.3 262.5 L763.8 260.8 L764.3 259.2 L764.9 257.6 L765.4 256 L766 254.3 L766.6 252.7 L767.1 251.1 L767.7 249.5 L768.3 247.8 L769 246.2 L769.6 244.6 L770.2 243 L770.9 241.3 L771.5 239.7 L772.2 238.1 L772.9 236.5 L773.5 234.8 L774.2 233.2 L774.9 231.6 L775.7 230 L776.4 228.3 L777.1 226.7 L777.9 225.1 L778.6 223.5 L779.4 221.9 L780.1 220.2 L780.9 218.6 L781.7 217 L782.5 215.4 L783.3 213.7 L784.1 212.1 L785 210.5 L785.8 208.9 L786.6 207.2 L787.5 205.6 L788.3 204 L789.2 202.4 L790.1 200.7 L791 199.1 L791.9 197.5 L792.8 195.9 L793.7 194.3 L794.6 192.6 L795.5 191 L796.5 189.4 L797.4 187.8 L798.4 186.1 L799.3 184.5 L800.3 182.9 L801.3 181.3 L802.2 179.7 L803.2 178 L804.2 176.4 L805.2 174.8 L806.2 173.2 L807.3 171.6 L808.3 169.9 L809.3 168.3 L810.4 166.7 L811.4 165.1 L812.5 163.5 L813.5 161.8 L814.6 160.2 L815.7 158.6 L816.7 157 L817.8 155.4 L818.9 153.7 L820 152.1 L821.1 150.5 L822.2 148.9 L823.3 147.3 L824.5 145.7 L825.6 144 L826.7 142.4 L827.9 140.8 L829 139.2 L830.1 137.6 L831.3 136 L832.5 134.4 L833.6 132.7 L834.8 131.1 L836 129.5 L837.1 127.9 L838.3 126.3 L839.5 124.7 L840.7 123.1 L841.9 121.5 L843.1 119.8 L844.3 118.2 L845.5 116.6 L846.7 115 L847.9 113.4 L849.2 111.8 L850.4 110.2 L851.6 108.6 M748.5 261.6 L749.1 260 L749.7 258.3 L750.3 256.7 L751 255.1 L751.6 253.5 L752.3 251.8 L752.9 250.2 L753.6 248.6 L754.3 247 L755 245.3 L755.7 243.7 L756.4 242.1 L757.2 240.4 L757.9 238.8 L758.7 237.2 L759.4 235.6 L760.2 233.9 L761 232.3 L761.8 230.7 L762.6 229.1 L763.4 227.4 L764.3 225.8 L765.1 224.2 L766 222.6 L766.8 220.9 L767.7 219.3 L768.6 217.7 L769.5 216.1 L770.4 214.4 L771.3 212.8 L772.2 211.2 L773.1 209.6 L774.1 207.9 L775 206.3 L776 204.7 L777 203.1 L777.9 201.5 L778.9 199.8 L779.9 198.2 L780.9 196.6 L782 195 L783 193.3 L784 191.7 L785.1 190.1 L786.1 188.5 L787.2 186.8 L788.2 185.2 L789.3 183.6 L790.4 182 L791.5 180.4 L792.6 178.7 L793.7 177.1 L794.8 175.5 L796 173.9 L797.1 172.3 L798.3 170.6 L799.4 169 L800.6 167.4 L801.7 165.8 L802.9 164.2 L804.1 162.5 L805.3 160.9 L806.5 159.3 L807.7 157.7 L808.9 156.1 L810.1 154.5 L811.3 152.8 L812.6 151.2 L813.8 149.6 L815 148 L816.3 146.4 L817.5 144.8 L818.8 143.2 L820.1 141.5 L821.3 139.9 L822.6 138.3 L823.9 136.7 L825.2 135.1 L826.5 133.5 L827.8 131.9 L829.1 130.3 L830.4 128.7 L831.7 127 L833 125.4 L834.4 123.8 L835.7 122.2 L837 120.6 L838.4 119 L839.7 117.4 L841 115.8 L842.4 114.2 L843.7 112.6 L845.1 111 L846.5 109.4 L847.8 107.8 L849.2 106.2 L850.6 104.6 L851.9 103 L853.3 101.5 L854.7 99.9 L856.1 98.3 L857.4 96.7 L858.8 95.1 L860.2 93.5 L861.6 92 L863 90.4 L864.4 88.8 L865.8 87.3 L867.1 85.7 L868.5 84.1 L869.9 82.6 L871.3 81 L872.7 79.5 L874.1 78 L875.5 76.4 L876.9 74.9 L878.2 73.4 L879.6 71.9 L881 70.4 L882.4 68.9 L883.7 67.4 L885.1 65.9 L886.5 64.5 L887.8 63 L889.2 61.6 L890.5 60.2 L891.9 58.8 L893.2 57.4 L894.5 56.1 L895.8 54.8 L897.1 53.6 L898.4 52.3 L899.7 51.2 L901 50 L902.3 49 L903.6 48 L904.8 47.1 L906.1 46.3 L907.5 45.7 L908.8 45.1 L910.2 44.7 L911.7 44.4 L913.2 44.3 L914.9 44.3 L916.7 44.5 L918.5 44.8 L920.6 45.2 L922.7 45.8 L925 46.6 L927.4 47.4 L929.9 48.3 L932.5 49.3 M755.3 265.5 L755.9 263.9 L756.5 262.2 L757.2 260.6 L757.8 259 L758.5 257.4 L759.2 255.8 L759.9 254.1 L760.6 252.5 L761.3 250.9 L762 249.3 L762.7 247.7 L763.4 246 L764.2 244.4 L764.9 242.8 L765.7 241.2 L766.5 239.6 L767.3 237.9 L768.1 236.3 L768.9 234.7 L769.7 233.1 L770.5 231.5 L771.4 229.8 L772.2 228.2 L773.1 226.6 L774 225 L774.8 223.4 L775.7 221.7 L776.6 220.1 L777.5 218.5 L778.4 216.9 L779.4 215.3 L780.3 213.7 L781.2 212 L782.2 210.4 L783.2 208.8 L784.1 207.2 L785.1 205.6 L786.1 204 L787.1 202.3 L788.1 200.7 L789.1 199.1 L790.1 197.5 L791.2 195.9 L792.2 194.3 L793.2 192.7 L794.3 191.1 L795.4 189.4 L796.4 187.8 L797.5 186.2 L798.6 184.6 L799.7 183 L800.8 181.4 L801.9 179.8 L803 178.2 L804.1 176.6 L805.3 174.9 L806.4 173.3 L807.5 171.7 L808.7 170.1 L809.8 168.5 L811 166.9 L812.2 165.3 L813.3 163.7 L814.5 162.1 L815.7 160.5 L816.9 158.9 L818.1 157.3 L819.3 155.7 L820.5 154.1 L821.7 152.5 L823 150.9 L824.2 149.3 L825.4 147.7 L826.7 146.1 L827.9 144.5 L829.1 142.9 L830.4 141.3 L831.7 139.7 L832.9 138.1 L834.2 136.5 L835.5 134.9 L836.7 133.4 L838 131.8 L839.3 130.2 L840.6 128.6 L841.9 127 L843.2 125.4 L844.4 123.9 L845.7 122.3 L847.1 120.7 L848.4 119.1 L849.7 117.6 L851 116 L852.3 114.4 L853.6 112.9 L854.9 111.3 L856.2 109.8 L857.6 108.2 L858.9 106.7 L860.2 105.1 L861.5 103.6 L862.9 102 L864.2 100.5 L865.5 98.9 L866.8 97.4 L868.2 95.9 L869.5 94.4 L870.8 92.9 L872.1 91.4 L873.5 89.9 L874.8 88.4 L876.1 86.9 L877.4 85.4 L878.7 83.9 L880.1 82.5 L881.4 81 L882.7 79.6 L884 78.1 L885.3 76.7 L886.6 75.3 L887.9 73.9 L889.2 72.6 L890.5 71.2 L891.8 69.9 L893 68.6 L894.3 67.3 L895.6 66 L896.9 64.8 L898.1 63.6 L899.4 62.4 L900.6 61.3 L901.9 60.2 L903.1 59.1 L904.4 58.1 L905.7 57.2 L906.9 56.3 L908.2 55.5 L909.5 54.8 L910.8 54.1 L912.1 53.5 L913.5 53.1 L914.9 52.7 L916.4 52.4 L917.9 52.2 M762.5 252.3 L763 250.6 L763.6 249 L764.2 247.4 L764.8 245.7 L765.4 244.1 L766 242.5 L766.7 240.8 L767.3 239.2 L768 237.6 L768.6 235.9 L769.3 234.3 L770 232.7 L770.7 231 L771.4 229.4 L772.1 227.7 L772.8 226.1 L773.5 224.5 L774.3 222.8 L775 221.2 L775.8 219.6 L776.6 217.9 L777.3 216.3 L778.1 214.7 L778.9 213 L779.8 211.4 L780.6 209.8 L781.4 208.1 L782.2 206.5 L783.1 204.9 L783.9 203.2 L784.8 201.6 L785.7 200 L786.6 198.3 L787.5 196.7 L788.4 195.1 L789.3 193.4 L790.2 191.8 L791.1 190.2 L792.1 188.5 L793 186.9 L794 185.3 L794.9 183.6 L795.9 182 L796.9 180.4 L797.8 178.7 L798.8 177.1 L799.8 175.5 L800.8 173.8 L801.9 172.2 L802.9 170.6 L803.9 168.9 L805 167.3 L806 165.7 L807.1 164 L808.1 162.4 L809.2 160.8 L810.3 159.1 L811.3 157.5 L812.4 155.9 L813.5 154.2 L814.6 152.6 L815.7 151 L816.9 149.4 L818 147.7 L819.1 146.1 L820.2 144.5 L821.4 142.8 L822.5 141.2 L823.7 139.6 L824.8 137.9 L826 136.3 L827.2 134.7 L828.4 133.1 L829.5 131.4 L830.7 129.8 L831.9 128.2 L833.1 126.5 L834.3 124.9 L835.5 123.3 L836.7 121.7 L838 120 L839.2 118.4 L840.4 116.8 L841.6 115.2 L842.9 113.5 L844.1 111.9 L845.4 110.3 L846.6 108.7 L847.9 107 L849.1 105.4 L850.4 103.8 L851.6 102.2 L852.9 100.5 L854.2 98.9 L855.4 97.3 L856.7 95.7 L858 94.1 L859.3 92.4 L860.6 90.8 L861.8 89.2 L863.1 87.6 L864.4 86 L865.7 84.4 L867 82.8 L868.3 81.2 L869.6 79.6 L870.9 78 L872.2 76.4 L873.5 74.8 L874.8 73.2 L876.1 71.6 L877.4 70 L878.7 68.4 L880 66.8 M762.4 257.2 L763.4 255.7 L764.4 254.2 L765.4 252.6 L766.4 251.1 L767.4 249.6 L768.5 248.1 L769.5 246.6 L770.6 245 L771.6 243.5 L772.7 242 L773.7 240.5 L774.8 239 L775.9 237.5 L777 236 L778.1 234.4 L779.2 232.9 L780.3 231.4 L781.5 229.9 L782.6 228.4 L783.7 226.9 L784.9 225.4 L786 223.9 L787.2 222.4 L788.4 220.9 L789.5 219.4 L790.7 217.9 L791.9 216.4 L793.1 214.9 L794.3 213.4 L795.5 211.9 L796.7 210.4 L798 208.9 L799.2 207.4 L800.4 205.9 L801.7 204.5 L802.9 203 L804.2 201.5 L805.4 200 L806.7 198.5 L807.9 197.1 L809.2 195.6 L810.5 194.1 L811.8 192.6 L813.1 191.2 L814.3 189.7 L815.6 188.2 L816.9 186.8 L818.2 185.3 L819.6 183.9 L820.9 182.4 L822.2 181 L823.5 179.5 L824.8 178.1 L826.2 176.6 L827.5 175.2 L828.8 173.7 L830.2 172.3 L831.5 170.9 L832.8 169.5 L834.2 168 L835.5 166.6 L836.9 165.2 L838.2 163.8 L839.6 162.4 L840.9 161 L842.3 159.6 L843.7 158.2 L845 156.8 L846.4 155.4 L847.8 154 L849.1 152.6 L850.5 151.3 L851.9 149.9 L853.2 148.5 L854.6 147.2 L856 145.8 L857.3 144.5 L858.7 143.2 L860.1 141.8 L861.4 140.5 L862.8 139.2 L864.2 137.9 L865.6 136.6 L866.9 135.3 L868.3 134 L869.7 132.7 L871 131.5 L872.4 130.2 L873.8 128.9 L875.1 127.7 L876.5 126.5 L877.8 125.3 L879.2 124.1 L880.6 122.9 L881.9 121.7 L883.3 120.5 L884.6 119.3 L886 118.2 L887.3 117.1 L888.7 115.9 L890 114.8 L891.4 113.7 L892.7 112.7 L894.1 111.6 L895.4 110.6 L896.7 109.5 L898.1 108.5 L899.4 107.6 L900.7 106.6 L902.1 105.6 L903.4 104.7 L904.8 103.8 L906.1 102.9 L907.4 102.1 L908.8 101.3 L910.1 100.5 L911.5 99.7 L912.8 98.9 L914.2 98.2 L915.5 97.5 L916.9 96.8 L918.3 96.2 L919.6 95.6 L921 95 L922.4 94.5 L923.8 94 M760.4 257 L761.1 255.4 L761.7 253.8 L762.4 252.2 L763.1 250.5 L763.8 248.9 L764.5 247.3 L765.2 245.7 L765.9 244.1 L766.6 242.4 L767.4 240.8 L768.1 239.2 L768.9 237.6 L769.7 236 L770.4 234.4 L771.2 232.7 L772 231.1 L772.9 229.5 L773.7 227.9 L774.5 226.3 L775.3 224.6 L776.2 223 L777.1 221.4 L777.9 219.8 L778.8 218.2 L779.7 216.5 L780.6 214.9 L781.5 213.3 L782.4 211.7 L783.3 210.1 L784.3 208.5 L785.2 206.8 L786.2 205.2 L787.1 203.6 L788.1 202 L789.1 200.4 L790.1 198.8 L791 197.2 L792 195.5 L793.1 193.9 L794.1 192.3 L795.1 190.7 L796.1 189.1 L797.2 187.5 L798.2 185.9 L799.3 184.2 L800.3 182.6 L801.4 181 L802.5 179.4 L803.6 177.8 L804.7 176.2 L805.8 174.6 L806.9 173 L808 171.4 L809.1 169.7 L810.2 168.1 L811.4 166.5 L812.5 164.9 L813.7 163.3 L814.8 161.7 L816 160.1 L817.1 158.5 L818.3 156.9 L819.5 155.3 L820.7 153.7 L821.9 152.1 L823 150.5 L824.2 148.9 L825.5 147.3 L826.7 145.7 L827.9 144.1 L829.1 142.5 L830.3 140.9 L831.6 139.3 L832.8 137.7 L834 136.1 L835.3 134.5 L836.5 132.9 L837.8 131.3 L839 129.7 L840.3 128.1 L841.6 126.5 L842.8 125 L844.1 123.4 L845.4 121.8 L846.6 120.2 L847.9 118.6 L849.2 117.1 L850.5 115.5 L851.8 113.9 L853.1 112.3 L854.4 110.8 L855.7 109.2 L857 107.6 L858.3 106.1 L859.6 104.5 L860.9 102.9 L862.2 101.4 L863.5 99.8 L864.8 98.3 L866.1 96.8 L867.4 95.2 L868.7 93.7 L870 92.2 L871.3 90.6 L872.6 89.1 L873.9 87.6 L875.2 86.1 L876.5 84.6 L877.8 83.1 L879.1 81.6 L880.4 80.1 L881.7 78.7 L883 77.2 L884.3 75.8 L885.6 74.3 L886.9 72.9 L888.2 71.5 L889.4 70.1 L890.7 68.7 L892 67.4 L893.2 66 L894.5 64.7 L895.8 63.4 L897 62.2 L898.2 60.9 L899.5 59.8 L900.7 58.6 L902 57.5 L903.2 56.4 L904.4 55.4 L905.7 54.5 L906.9 53.6 L908.2 52.8 L909.5 52.1 L910.8 51.5 L912.1 50.9 L913.5 50.5 L914.9 50.1 L916.4 49.9 L918 49.8 L919.6 49.8 L921.3 50 L923.2 50.2 L925.1 50.6 L927.1 51 L929.3 51.6 L931.5 52.2 L933.8 53 L936.2 53.8 L938.8 54.7 L941.4 55.6 L944.1 56.6 L946.8 57.7 L949.6 58.8 L952.5 60 L955.5 61.2 L958.4 62.4 L961.5 63.7 L964.6 65 L967.7 66.3 L970.8 67.6 L974 69 L977.2 70.4 L980.5 71.8 L983.7 73.2 L987 74.6 M757.9 267.8 L758.6 266.2 L759.4 264.6 L760.1 263 L760.9 261.5 L761.7 259.9 L762.5 258.3 L763.3 256.7 L764.1 255.1 L764.9 253.5 L765.8 252 L766.6 250.4 L767.5 248.8 L768.3 247.2 L769.2 245.7 L770.1 244.1 L771 242.5 L771.9 240.9 L772.8 239.3 L773.7 237.8 L774.6 236.2 L775.5 234.6 L776.5 233 L777.4 231.5 L778.4 229.9 L779.4 228.3 L780.3 226.7 L781.3 225.2 L782.3 223.6 L783.3 222 L784.3 220.5 L785.4 218.9 L786.4 217.3 L787.4 215.7 L788.5 214.2 L789.5 212.6 L790.6 211 L791.7 209.5 L792.7 207.9 L793.8 206.3 L794.9 204.8 L796 203.2 L797.1 201.7 L798.2 200.1 L799.3 198.5 L800.5 197 L801.6 195.4 L802.7 193.9 L803.9 192.3 L805 190.7 L806.2 189.2 L807.4 187.6 L808.5 186.1 L809.7 184.5 L810.9 183 L812.1 181.4 L813.3 179.9 L814.5 178.3 L815.7 176.8 L816.9 175.2 L818.1 173.7 L819.3 172.2 L820.5 170.6 L821.8 169.1 L823 167.5 L824.2 166 L825.5 164.5 L826.7 162.9 L828 161.4 L829.2 159.9 L830.5 158.4 L831.8 156.8 L833 155.3 L834.3 153.8 L835.6 152.3 L836.9 150.8 L838.1 149.2 L839.4 147.7 L840.7 146.2 L842 144.7 L843.3 143.2 L844.6 141.7 L845.9 140.2 L847.2 138.7 L848.5 137.2 L849.8 135.8 L851.1 134.3 L852.4 132.8 L853.7 131.3 L855 129.9 L856.3 128.4 L857.6 126.9 L859 125.5 L860.3 124 L861.6 122.6 L862.9 121.1 L864.2 119.7 L865.5 118.3 L866.8 116.9 L868.2 115.4 L869.5 114 L870.8 112.6 L872.1 111.2 L873.4 109.9 L874.7 108.5 L876 107.1 L877.3 105.7 L878.6 104.4 L879.9 103.1 L881.3 101.7 L882.6 100.4 L883.8 99.1 L885.1 97.8 L886.4 96.5 L887.7 95.3 L889 94 L890.3 92.8 L891.6 91.6 L892.9 90.4 L894.2 89.2 L895.4 88 L896.7 86.9 L898 85.8 L899.2 84.7 L900.5 83.6 L901.8 82.6 L903.1 81.5 L904.3 80.6 L905.6 79.6 L906.9 78.7 L908.2 77.8 L909.4 76.9 L910.7 76.1 L912 75.4 L913.3 74.6 L914.6 73.9 L915.9 73.3 L917.3 72.7 L918.6 72.2 L920 71.7 L921.4 71.2 L922.8 70.9 L924.2 70.5 L925.7 70.3 L927.2 70.1 L928.8 69.9 L930.3 69.8 L931.9 69.8 L933.6 69.8 L935.3 69.9 L937 70.1 L938.8 70.3 L940.7 70.6 L942.5 70.9 L944.5 71.3 L946.5 71.7 L948.5 72.2 L950.6 72.8 L952.8 73.4 L954.9 74 L957.2 74.7 L959.5 75.5 L961.8 76.2 L964.2 77.1 L966.6 77.9 L969.1 78.8 L971.6 79.7 L974.2 80.7 L976.8 81.7 L979.4 82.7 L982.1 83.8 L984.8 84.8 L987.5 85.9 L990.3 87 L993.1 88.2 L995.9 89.4 L998.7 90.5 L1001.6 91.7 L1004.5 93 L1007.4 94.2 L1010.3 95.5 L1013.2 96.7 L1016.2 98 M756.3 263.8 L756.5 262.1 L756.8 260.5 L757.1 258.9 L757.4 257.3 L757.7 255.6 L758 254 L758.3 252.4 L758.7 250.7 L759 249.1 L759.4 247.5 L759.7 245.9 L760.1 244.2 L760.5 242.6 L760.9 241 L761.3 239.4 L761.8 237.7 L762.2 236.1 L762.6 234.5 L763.1 232.9 L763.6 231.2 L764 229.6 L764.5 228 L765 226.3 L765.5 224.7 L766.1 223.1 L766.6 221.5 L767.1 219.8 L767.7 218.2 L768.2 216.6 L768.8 215 L769.4 213.3 L770 211.7 L770.6 210.1 L771.2 208.5 L771.8 206.8 L772.4 205.2 L773.1 203.6 L773.7 202 L774.4 200.3 L775.1 198.7 L775.7 197.1 L776.4 195.5 L777.1 193.8 L777.8 192.2 L778.6 190.6 L779.3 189 L780 187.3 L780.8 185.7 L781.5 184.1 L782.3 182.5 L783.1 180.8 L783.8 179.2 L784.6 177.6 L785.4 176 L786.2 174.4 L787 172.7 L787.9 171.1 L788.7 169.5 L789.5 167.9 L790.4 166.2 L791.3 164.6 L792.1 163 L793 161.4 L793.9 159.8 L794.8 158.1 L795.7 156.5 L796.6 154.9 L797.5 153.3 L798.4 151.7 L799.3 150 L800.3 148.4 L801.2 146.8 L802.2 145.2 L803.1 143.6 L804.1 142 L805.1 140.3 L806.1 138.7 L807 137.1 L808 135.5 L809 133.9 L810 132.3 L811.1 130.6 L812.1 129 L813.1 127.4 L814.1 125.8 L815.2 124.2 L816.2 122.6 L817.3 121 L818.3 119.4 L819.4 117.8 L820.5 116.2 L821.5 114.5 L822.6 112.9 L823.7 111.3 L824.8 109.7 L825.9 108.1 L827 106.5 L828.1 104.9 L829.2 103.3 L830.3 101.7 L831.4 100.1 L832.5 98.5 L833.6 96.9 L834.8 95.4 L835.9 93.8 L837 92.2 L838.2 90.6 L839.3 89 L840.4 87.4 L841.6 85.9 L842.7 84.3 L843.8 82.7 L845 81.1 L846.1 79.6 L847.3 78 L848.4 76.5 L849.5 74.9 L850.7 73.4 L851.8 71.8 L852.9 70.3 L854.1 68.8 L855.2 67.3 L856.3 65.8 L857.4 64.3 L858.5 62.8 L859.5 61.3 L860.6 59.9 L861.6 58.5 L862.6 57 L863.6 55.7 L864.6 54.3 L865.5 53 L866.3 51.7 L867.1 50.4 L867.9 49.2 L868.5 48.1 L869 47 L869.4 46 L869.7 45.1 L869.7 44.3 L869.6 43.6 L869.1 43.1 L868.3 42.7 L867.2 42.5 L865.7 42.4 L863.7 42.5 L861.4 42.8 L858.6 43.3 L855.5 43.9 L851.9 44.6 L848.1 45.5 L843.9 46.4 L839.5 47.4 L969.5 48.6 L972 49.7 L974.7 51 L977.5 52.2 L980.4 53.5 L983.4 54.9 L986.4 56.3 L989.6 57.7 L992.8 59.1 L996 60.5 L999.3 62 L1002.6 63.5 L1006 64.9 L1009.4 66.4 L1012.8 67.9 L1016.2 69.5 L1019.6 71 L1023.1 72.5 L1026.5 74.1 L1030 75.6 L1033.4 77.2 L1036.9 78.7 L1040.4 80.3 L1043.8 81.8 L1047.3 83.4 M761 263.6 L762.2 262.2 L763.5 260.9 L764.7 259.5 L766 258.2 L767.3 256.8 L768.5 255.5 L769.8 254.1 L771.1 252.8 L772.4 251.5 L773.7 250.1 L775 248.8 L776.3 247.5 L777.7 246.1 L779 244.8 L780.3 243.5 L781.7 242.2 L783 240.8 L784.3 239.5 L785.7 238.2 L787.1 236.9 L788.4 235.6 L789.8 234.3 L791.2 233 L792.5 231.7 L793.9 230.4 L795.3 229.1 L796.7 227.8 L798.1 226.5 L799.5 225.2 L800.9 223.9 L802.3 222.6 L803.7 221.3 L805.1 220.1 L806.5 218.8 L808 217.5 L809.4 216.2 L810.8 215 L812.2 213.7 L813.7 212.5 L815.1 211.2 L816.6 210 L818 208.7 L819.4 207.5 L820.9 206.2 L822.3 205 L823.8 203.8 L825.2 202.6 L826.7 201.3 L828.1 200.1 L829.6 198.9 L831.1 197.7 L832.5 196.5 L834 195.3 L835.5 194.1 L836.9 192.9 L838.4 191.8 L839.9 190.6 L841.3 189.4 L842.8 188.3 L844.3 187.1 L845.7 186 L847.2 184.8 L848.7 183.7 L850.1 182.6 L851.6 181.4 L853.1 180.3 L854.6 179.2 L856 178.1 L857.5 177 L859 176 L860.4 174.9 L861.9 173.8 L863.4 172.7 L864.8 171.7 L866.3 170.6 L867.8 169.6 L869.2 168.6 L870.7 167.6 L872.2 166.6 L873.6 165.6 L875.1 164.6 L876.6 163.6 L878 162.6 L879.5 161.7 L881 160.7 L882.4 159.8 L883.9 158.9 L885.3 158 L886.8 157.1 L888.2 156.2 L889.7 155.3 M756.6 269.1 L757.8 267.8 L759.1 266.5 L760.3 265.2 L761.6 263.8 L762.8 262.5 L764.1 261.2 L765.4 259.9 L766.7 258.6 L768 257.3 L769.3 256 L770.6 254.7 L771.9 253.3 L773.2 252 L774.6 250.7 L775.9 249.4 L777.2 248.1 L778.6 246.8 L779.9 245.5 L781.3 244.3 L782.7 243 L784 241.7 L785.4 240.4 L786.8 239.1 L788.1 237.8 L789.5 236.6 L790.9 235.3 L792.3 234 L793.7 232.7 L795.1 231.5 L796.5 230.2 L797.9 229 L799.3 227.7 L800.7 226.4 L802.2 225.2 L803.6 223.9 L805 222.7 L806.4 221.5 L807.9 220.2 L809.3 219 L810.8 217.8 L812.2 216.5 L813.6 215.3 L815.1 214.1 L816.5 212.9 L818 211.7 L819.5 210.5 L820.9 209.3 L822.4 208.1 L823.8 206.9 L825.3 205.7 L826.8 204.5 L828.2 203.3 L829.7 202.1 L831.2 201 L832.6 199.8 L834.1 198.7 L835.6 197.5 L837.1 196.4 L838.5 195.2 L840 194.1 L841.5 192.9 L843 191.8 L844.4 190.7 L845.9 189.6 L847.4 188.5 L848.9 187.4 L850.3 186.3 L851.8 185.2 L853.3 184.1 L854.8 183.1 L856.3 182 L857.7 180.9 L859.2 179.9 L860.7 178.9 L862.2 177.8 L863.7 176.8 L865.1 175.8 L866.6 174.8 L868.1 173.8 L869.6 172.8 L871 171.8 L872.5 170.8 L874 169.9 L875.4 168.9 L876.9 168 L878.4 167.1 L879.9 166.1 L881.3 165.2 L882.8 164.3 L884.3 163.4 L885.7 162.6 L887.2 161.7 L888.7 160.8 L890.1 160 L891.6 159.2 L893 158.4 L894.5 157.6 L896 156.8 L897.4 156 L898.9 155.2 L900.3 154.5 L901.8 153.7 L903.3 153 L904.7 152.3 L906.2 151.6 L907.7 150.9 L909.1 150.3 L910.6 149.6 L912 149 L913.5 148.4 L915 147.8 L916.4 147.2 L917.9 146.6 M762.2 261.8 L763.7 260.7 L765.1 259.5 L766.6 258.4 L768 257.3 L769.5 256.1 L771 255 L772.4 253.9 L773.9 252.8 L775.4 251.6 L776.8 250.5 L778.3 249.4 L779.8 248.3 L781.3 247.2 L782.8 246.1 L784.3 245 L785.8 243.9 L787.3 242.8 L788.8 241.7 L790.3 240.6 L791.8 239.5 L793.3 238.4 L794.8 237.4 L796.4 236.3 L797.9 235.2 L799.4 234.2 L800.9 233.1 L802.5 232 L804 231 L805.5 229.9 L807.1 228.9 L808.6 227.9 L810.1 226.8 L811.7 225.8 L813.2 224.8 L814.7 223.7 L816.3 222.7 L817.8 221.7 L819.4 220.7 L820.9 219.7 L822.5 218.7 L824 217.7 L825.6 216.7 L827.1 215.8 L828.7 214.8 L830.2 213.8 L831.8 212.8 L833.3 211.9 L834.9 210.9 L836.4 210 L838 209.1 L839.5 208.1 L841.1 207.2 L842.6 206.3 L844.2 205.4 L845.7 204.5 L847.3 203.6 L848.9 202.7 L850.4 201.8 L852 200.9 L853.5 200.1 L855.1 199.2 L856.6 198.4 L858.2 197.5 L859.7 196.7 L861.3 195.8 L862.8 195 L864.3 194.2 L865.9 193.4 L867.4 192.6 L869 191.8 L870.5 191.1 L872.1 190.3 L873.6 189.5 L875.2 188.8 L876.7 188 L878.2 187.3 L879.8 186.6 L881.3 185.9 L882.9 185.2 L884.4 184.5 L885.9 183.8 L887.5 183.2 L889 182.5 L890.5 181.9 L892.1 181.2 L893.6 180.6 M770.7 258.4 L771.3 256.8 L771.9 255.2 L772.5 253.5 L773.1 251.9 L773.7 250.3 L774.3 248.6 L774.9 247 L775.6 245.4 L776.2 243.8 L776.9 242.1 L777.5 240.5 L778.2 238.9 L778.9 237.2 L779.6 235.6 L780.3 234 L781 232.4 L781.7 230.7 L782.5 229.1 L783.2 227.5 L784 225.8 L784.7 224.2 L785.5 222.6 L786.3 221 L787 219.3 L787.8 217.7 L788.6 216.1 L789.5 214.4 L790.3 212.8 L791.1 211.2 L791.9 209.6 L792.8 207.9 L793.6 206.3 L794.5 204.7 L795.4 203.1 L796.3 201.4 L797.1 199.8 L798 198.2 L798.9 196.6 L799.8 194.9 L800.8 193.3 L801.7 191.7 L802.6 190.1 L803.6 188.4 L804.5 186.8 L805.5 185.2 L806.4 183.6 L807.4 181.9 L808.4 180.3 L809.4 178.7 L810.3 177.1 L811.3 175.4 L812.3 173.8 L813.4 172.2 L814.4 170.6 L815.4 169 L816.4 167.3 L817.5 165.7 L818.5 164.1 L819.6 162.5 L820.6 160.9 L821.7 159.2 L822.7 157.6 L823.8 156 L824.9 154.4 L826 152.8 L827.1 151.1 L828.2 149.5 L829.3 147.9 L830.4 146.3 L831.5 144.7 L832.6 143.1 L833.7 141.4 L834.8 139.8 L836 138.2 L837.1 136.6 L838.2 135 L839.4 133.4 L840.5 131.8 L841.7 130.2 L842.8 128.6 L844 126.9 L845.2 125.3 L846.3 123.7 L847.5 122.1 L848.7 120.5 L849.9 118.9 L851 117.3 L852.2 115.7 L853.4 114.1 L854.6 112.5 L855.8 110.9 L857 109.3 L858.2 107.7 L859.4 106.1 L860.6 104.6 L861.8 103 L863 101.4 L864.2 99.8 L865.4 98.2 L866.6 96.6 L867.8 95.1 L869.1 93.5 L870.3 91.9 L871.5 90.3 L872.7 88.8 L873.9 87.2 L875.1 85.7 L876.4 84.1 L877.6 82.6 L878.8 81 L880 79.5" fill="none" stroke="#ff2a0a" stroke-width="1.6" stroke-dasharray="1.6 2.1"/>
<path d="M600.2 254.5 L601.2 252.8 L602.1 251.2 L603.1 249.6 L604.2 248 L605.2 246.3 L606.3 244.7 L607.4 243.1 L608.5 241.4 L609.6 239.8 L610.8 238.2 L612 236.6 L613.2 234.9 L614.4 233.3 L615.7 231.7 L616.9 230 L618.2 228.4 L619.6 226.8 L620.9 225.2 L622.3 223.5 L623.6 221.9 L625 220.3 L626.5 218.6 L627.9 217 L629.4 215.4 L630.8 213.8 L632.3 212.1 L633.9 210.5 L635.4 208.9 L637 207.2 L638.6 205.6 L640.2 204 L641.8 202.4 L643.5 200.7 L645.1 199.1 L646.8 197.5 L648.5 195.8 L650.2 194.2 L652 192.6 L653.7 191 L655.5 189.3 L657.3 187.7 L659.2 186.1 L661 184.4 L662.8 182.8 L664.7 181.2 L666.6 179.5 L668.5 177.9 L670.5 176.3 L672.4 174.7 L674.4 173 L676.4 171.4 L678.3 169.8 L680.4 168.1 L682.4 166.5 L684.4 164.9 L686.5 163.3 L688.6 161.6 L690.7 160 L692.8 158.4 L694.9 156.7 L697.1 155.1 L699.3 153.5 L701.4 151.9 L703.6 150.2 L705.8 148.6 L708.1 147 L710.3 145.3 L712.5 143.7 L714.8 142.1 L717.1 140.5 L719.4 138.8 L721.7 137.2 L724 135.6 L726.4 133.9 L728.7 132.3 L731.1 130.7 L733.5 129.1 L735.8 127.4 L738.2 125.8 L740.7 124.2 L743.1 122.5 L745.5 120.9 L748 119.3 L750.4 117.7 L752.9 116 L755.4 114.4 L757.9 112.8 L760.4 111.1 L762.9 109.5 L765.5 107.9 L768 106.3 L770.5 104.6 L773.1 103 L775.7 101.4 L778.2 99.8 L780.8 98.1 L783.4 96.5 L786 94.9 L788.7 93.2 L791.3 91.6 L793.9 90 L796.6 88.4 L799.2 86.7 L801.9 85.1 L804.5 83.5 L807.2 81.8 L809.9 80.2 L812.6 78.6 L815.2 77 L817.9 75.3 L820.7 73.7 L823.4 72.1 L826.1 70.5 L828.8 68.8 L831.5 67.2 L834.3 65.6 L837 63.9 L839.7 62.3 L842.5 60.7 L845.2 59.1 L848 57.4 L850.7 55.8 L853.5 54.2 M599.3 257.3 L600.2 255.6 L601.1 254 L602 252.4 L603 250.7 L603.9 249.1 L604.9 247.5 L605.9 245.8 L607 244.2 L608 242.5 L609.1 240.9 L610.2 239.3 L611.4 237.6 L612.5 236 L613.7 234.4 L614.9 232.7 L616.1 231.1 L617.3 229.5 L618.6 227.8 L619.9 226.2 L621.2 224.6 L622.5 222.9 L623.9 221.3 L625.2 219.6 L626.6 218 L628 216.4 L629.5 214.7 L630.9 213.1 L632.4 211.5 L633.9 209.8 L635.4 208.2 L637 206.6 L638.5 204.9 L640.1 203.3 L641.7 201.7 L643.3 200 L645 198.4 L646.6 196.7 L648.3 195.1 L650 193.5 L651.7 191.8 L653.4 190.2 L655.2 188.6 L657 186.9 L658.8 185.3 L660.6 183.7 L662.4 182 L664.3 180.4 L666.1 178.8 L668 177.1 L669.9 175.5 L671.8 173.8 L673.8 172.2 L675.7 170.6 L677.7 168.9 L679.7 167.3 L681.7 165.7 L683.7 164 L685.8 162.4 L687.8 160.8 L689.9 159.1 L692 157.5 L694.1 155.9 L696.2 154.2 L698.4 152.6 L700.5 151 L702.7 149.3 L704.9 147.7 L707.1 146.1 L709.3 144.4 L711.5 142.8 L713.8 141.2 L716 139.5 L718.3 137.9 L720.6 136.2 L722.9 134.6 L725.2 133 L727.5 131.3 L729.9 129.7 L732.2 128.1 L734.6 126.4 L737 124.8 L739.4 123.2 L741.8 121.5 L744.2 119.9 L746.6 118.3 L749 116.7 L751.5 115 L754 113.4 L756.4 111.8 L758.9 110.1 L761.4 108.5 L763.9 106.9 L766.4 105.2 L769 103.6 L771.5 102 L774 100.3 L776.6 98.7 L779.2 97.1 L781.7 95.4 L784.3 93.8 L786.9 92.2 L789.5 90.6 L792.1 88.9 L794.7 87.3 L797.3 85.7 L800 84.1 L802.6 82.4 L805.2 80.8 L807.9 79.2 L810.5 77.6 L813.2 75.9 L815.8 74.3 L818.5 72.7 M598.5 259 L598.9 257.4 L599.4 255.8 L599.8 254.3 L600.3 252.7 L600.9 251.1 L601.4 249.5 L602 247.9 L602.6 246.3 L603.2 244.8 L603.8 243.2 L604.4 241.6 L605.1 240 L605.8 238.4 L606.5 236.9 L607.2 235.3 L608 233.7 L608.8 232.1 L609.6 230.6 L610.4 229 L611.2 227.4 L612.1 225.8 L612.9 224.3 L613.8 222.7 L614.7 221.1 L615.7 219.5 L616.6 218 L617.6 216.4 L618.6 214.8 L619.6 213.3 L620.6 211.7 L621.7 210.1 L622.7 208.6 L623.8 207 L624.9 205.4 L626.1 203.9 L627.2 202.3 L628.4 200.7 L629.5 199.2 L630.7 197.6 L631.9 196.1 L633.2 194.5 L634.4 193 L635.7 191.4 L637 189.9 L638.3 188.3 L639.6 186.8 L640.9 185.2 L642.3 183.7 L643.6 182.1 L645 180.6 L646.4 179 L647.8 177.5 L649.2 176 L650.7 174.4 L652.1 172.9 L653.6 171.4 L655.1 169.8 L656.6 168.3 L658.1 166.8 L659.6 165.3 L661.1 163.7 L662.7 162.2 L664.2 160.7 L665.8 159.2 M595.4 253.5 L596.3 251.9 L597.4 250.3 L598.4 248.6 L599.4 247 L600.5 245.4 L601.6 243.8 L602.8 242.1 L603.9 240.5 L605.1 238.9 L606.3 237.2 L607.5 235.6 L608.7 234 L610 232.3 L611.3 230.7 L612.6 229.1 L613.9 227.4 L615.3 225.8 L616.7 224.2 L618.1 222.5 L619.5 220.9 L620.9 219.3 L622.4 217.6 L623.9 216 L625.4 214.4 L626.9 212.7 L628.4 211.1 L630 209.5 L631.6 207.8 L633.2 206.2 L634.8 204.6 L636.5 202.9 L638.2 201.3 L639.9 199.7 L641.6 198 L643.3 196.4 L645 194.8 L646.8 193.1 L648.6 191.5 L650.4 189.9 L652.3 188.2 L654.1 186.6 L656 185 L657.9 183.3 L659.8 181.7 L661.7 180.1 L663.6 178.4 L665.6 176.8 L667.6 175.2 L669.6 173.5 L671.6 171.9 L673.6 170.3 L675.7 168.6 L677.7 167 L679.8 165.4 L681.9 163.7 L684 162.1 L686.2 160.5 L688.3 158.8 L690.5 157.2 L692.7 155.6 L694.9 153.9 L697.1 152.3 L699.3 150.7 L701.6 149.1 L703.8 147.4 L706.1 145.8 L708.4 144.2 L710.7 142.5 L713 140.9 L715.4 139.3 L717.7 137.6 L720.1 136 L722.5 134.4 L724.9 132.7 L727.3 131.1 L729.7 129.5 L732.1 127.8 L734.6 126.2 L737 124.6 L739.5 122.9 L742 121.3 L744.5 119.7 L747 118 L749.5 116.4 M602.2 255.1 L603.5 253.5 L604.9 252 L606.3 250.4 L607.7 248.8 L609.2 247.2 L610.7 245.7 L612.2 244.1 L613.7 242.5 L615.2 241 L616.7 239.4 L618.3 237.8 L619.9 236.3 L621.5 234.7 L623.1 233.1 L624.8 231.6 L626.4 230 L628.1 228.4 L629.8 226.9 L631.5 225.3 L633.3 223.8 L635 222.2 L636.8 220.6 L638.6 219.1 L640.4 217.5 L642.3 216 L644.1 214.4 L646 212.8 L647.8 211.3 L649.7 209.7 L651.7 208.2 L653.6 206.6 L655.5 205.1 L657.5 203.5 L659.5 202 L661.5 200.4 L663.5 198.9 L665.5 197.3 L667.6 195.8 L669.6 194.2 L671.7 192.7 L673.8 191.1 L675.9 189.6 L678 188.1 L680.1 186.5 L682.3 185 L684.4 183.5 L686.6 181.9 L688.8 180.4 L691 178.9 L693.2 177.3 L695.4 175.8 L697.6 174.3 L699.9 172.8 L702.1 171.2 L704.4 169.7 L706.7 168.2 L709 166.7 L711.3 165.2 L713.6 163.6 L715.9 162.1 L718.2 160.6 L720.5 159.1 L722.9 157.6 L725.2 156.1 L727.6 154.6 L730 153.1 L732.4 151.6 L734.7 150.1 L737.1 148.7 L739.5 147.2 L741.9 145.7 L744.4 144.2 L746.8 142.7 L749.2 141.3 L751.6 139.8 L754.1 138.4 L756.5 136.9 L758.9 135.4 L761.4 134 L763.8 132.6 L766.3 131.1 L768.7 129.7 L771.2 128.3 L773.6 126.8 L776.1 125.4 L778.6 124 L781 122.6 L783.5 121.2 L785.9 119.8 L788.4 118.4 L790.8 117.1 L793.3 115.7 L795.7 114.3 L798.1 113 L800.6 111.6 L803 110.3 L805.4 109 L807.8 107.7 L810.2 106.4 L812.6 105.1 L815 103.8 L817.4 102.5 L819.8 101.3 L822.1 100.1 L824.5 98.8 L826.8 97.6 L829.1 96.5 L831.4 95.3 L833.7 94.1 L836 93 M594.5 258.3 L596.2 257 L598 255.7 L599.7 254.4 L601.5 253.2 L603.3 251.9 L605.1 250.6 L607 249.3 L608.8 248 L610.6 246.8 L612.5 245.5 L614.4 244.2 L616.3 243 L618.1 241.7 L620.1 240.4 L622 239.2 L623.9 237.9 L625.8 236.7 L627.8 235.4 L629.7 234.2 L631.7 232.9 L633.7 231.7 L635.7 230.5 L637.7 229.2 L639.7 228 L641.7 226.8 L643.7 225.5 L645.7 224.3 L647.8 223.1 L649.8 221.9 L651.9 220.7 L654 219.5 L656 218.3 L658.1 217.1 L660.2 215.9 L662.3 214.7 L664.4 213.5 L666.5 212.3 L668.6 211.1 L670.7 210 L672.8 208.8 L674.9 207.6 L677.1 206.5 L679.2 205.3 L681.3 204.2 L683.5 203 L685.6 201.9 L687.8 200.8 L689.9 199.6 L692.1 198.5 L694.2 197.4 L696.4 196.3 L698.6 195.2 L700.7 194.1 L702.9 193 L705 191.9 L707.2 190.9 L709.4 189.8 L711.5 188.7 L713.7 187.7 L715.9 186.6 L718 185.6 L720.2 184.5 L722.4 183.5 L724.5 182.5 L726.7 181.5 L728.9 180.5 L731 179.5 L733.2 178.5 L735.3 177.5 L737.5 176.6 L739.6 175.6 L741.8 174.7 L743.9 173.7 L746 172.8 L748.2 171.9 L750.3 171 L752.4 170.1 L754.5 169.2 L756.6 168.3 L758.7 167.4 L760.8 166.6 L762.9 165.7 L765 164.9 L767.1 164.1 L769.1 163.3 L771.2 162.5 L773.3 161.7 L775.3 160.9 L777.3 160.1 L779.4 159.4 L781.4 158.7 L783.4 157.9 L785.4 157.2 L787.4 156.5 L789.4 155.9 L791.4 155.2 L793.3 154.6 L795.3 153.9 L797.3 153.3 L799.2 152.7 L801.1 152.1 L803.1 151.5 L805 151 L806.9 150.4 L808.8 149.9 L810.6 149.4 L812.5 148.9 L814.4 148.4 L816.2 148 L818.1 147.6 L819.9 147.1 L821.7 146.7 L823.5 146.3 L825.3 146 L827.1 145.6 L828.9 145.3 L830.7 145 L832.4 144.7 L834.2 144.4 L835.9 144.2 L837.7 143.9 L839.4 143.7 L841.1 143.5 L842.8 143.4 L844.5 143.2 L846.2 143.1 L847.9 143 L849.5 142.9 L851.2 142.8 L852.9 142.7 L854.5 142.7 M603.9 253.4 L605.7 252.3 L607.6 251.1 L609.4 249.9 L611.3 248.7 L613.2 247.5 L615.1 246.4 L617 245.2 L618.9 244 L620.8 242.9 L622.7 241.7 L624.6 240.6 L626.6 239.4 L628.5 238.3 L630.5 237.1 L632.5 236 L634.5 234.8 L636.4 233.7 L638.4 232.6 L640.4 231.5 L642.4 230.3 L644.4 229.2 L646.5 228.1 L648.5 227 L650.5 225.9 L652.5 224.8 L654.6 223.7 L656.6 222.6 L658.7 221.5 L660.7 220.4 L662.8 219.3 L664.8 218.3 L666.9 217.2 L669 216.1 L671.1 215.1 L673.1 214 L675.2 213 L677.3 211.9 L679.4 210.9 L681.5 209.8 L683.6 208.8 L685.7 207.8 L687.8 206.8 L689.9 205.8 L691.9 204.8 L694 203.8 L696.1 202.8 L698.2 201.8 L700.3 200.8 L702.4 199.9 L704.5 198.9 L706.6 198 L708.7 197 L710.8 196.1 L712.9 195.1 L715 194.2 L717.1 193.3 L719.2 192.4 L721.3 191.5 L723.4 190.6 L725.4 189.7 L727.5 188.8 L729.6 188 L731.7 187.1 L733.7 186.3 L735.8 185.4 L737.9 184.6 L739.9 183.8 L742 183 L744 182.2 L746.1 181.4 L748.1 180.6 L750.1 179.8 L752.2 179.1 L754.2 178.3 L756.2 177.6 L758.2 176.9 L760.2 176.1 L762.2 175.4 L764.2 174.7 L766.2 174.1 L768.2 173.4 L770.1 172.7 L772.1 172.1 L774.1 171.5 L776 170.8 L778 170.2 L779.9 169.6 L781.8 169 L783.7 168.5 L785.6 167.9 L787.5 167.4 L789.4 166.9 L791.3 166.3 L793.2 165.8 L795.1 165.4 L796.9 164.9 L798.8 164.4 L800.6 164 L802.5 163.6 L804.3 163.1 L806.1 162.7 L807.9 162.4 L809.7 162 L811.5 161.6 L813.3 161.3 L815.1 161 L816.9 160.7 L818.6 160.4 L820.4 160.1 L822.1 159.9 L823.8 159.6 L825.6 159.4 L827.3 159.2 M592.5 254.5 L594.3 253.4 L596.2 252.3 L598.1 251.1 L600 250 L601.9 248.9 L603.8 247.8 L605.7 246.6 L607.7 245.5 L609.6 244.4 L611.5 243.3 L613.5 242.2 L615.5 241.1 L617.4 240 L619.4 238.9 L621.4 237.8 L623.4 236.7 L625.4 235.6 L627.4 234.5 L629.4 233.5 L631.4 232.4 L633.4 231.3 L635.4 230.3 L637.5 229.2 L639.5 228.1 L641.6 227.1 L643.6 226 L645.7 225 L647.7 224 L649.8 222.9 L651.8 221.9 L653.9 220.9 L656 219.9 L658.1 218.9 L660.1 217.8 L662.2 216.8 L664.3 215.8 L666.4 214.9 L668.5 213.9 L670.6 212.9 L672.6 211.9 L674.7 210.9 L676.8 210 L678.9 209 L681 208.1 L683.1 207.1 L685.2 206.2 L687.3 205.3 L689.4 204.4 L691.5 203.4 L693.6 202.5 L695.7 201.6 L697.8 200.7 L699.9 199.9 L702 199 L704 198.1 L706.1 197.2 L708.2 196.4 L710.3 195.5 L712.4 194.7 L714.4 193.9 L716.5 193 L718.6 192.2 L720.7 191.4 L722.7 190.6 L724.8 189.8 L726.8 189.1 L728.9 188.3 L730.9 187.5 L733 186.8 L735 186.1 L737 185.3 L739 184.6 L741.1 183.9 L743.1 183.2 L745.1 182.5 L747.1 181.8 L749.1 181.2 L751.1 180.5 L753 179.9 L755 179.2 L757 178.6 L758.9 178 L760.9 177.4 L762.8 176.8 L764.8 176.2 L766.7 175.7 L768.6 175.1 L770.5 174.6 L772.4 174.1 L774.3 173.6 L776.2 173.1 L778.1 172.6 L780 172.1 L781.9 171.6 L783.7 171.2 L785.6 170.8 L787.4 170.3 L789.3 169.9 L791.1 169.5 L792.9 169.2 L794.7 168.8 L796.5 168.5 L798.3 168.1 L800.1 167.8 L801.9 167.5 L803.7 167.2 L805.4 166.9 L807.2 166.7 L808.9 166.4 L810.6 166.2 L812.4 166 L814.1 165.8 L815.8 165.6 L817.5 165.4 L819.2 165.3 L820.9 165.1 L822.6 165 L824.3 164.9 L825.9 164.8 L827.6 164.7 L829.3 164.7 L830.9 164.6 L832.6 164.6 L834.2 164.6 L835.8 164.6 L837.4 164.6 L839.1 164.6 L840.7 164.7 L842.3 164.7 L843.9 164.8 L845.5 164.9 L847.1 165 L848.6 165.1 L850.2 165.3 L851.8 165.4 L853.4 165.6 L854.9 165.8 L856.5 166 M597.4 254 L597.7 252.4 L598.1 250.9 L598.4 249.4 L598.8 247.9 L599.2 246.4 L599.6 244.9 L600 243.4 L600.5 241.8 L601 240.3 L601.5 238.8 L602 237.3 L602.5 235.8 L603 234.3 L603.6 232.8 L604.2 231.3 L604.8 229.8 L605.4 228.3 L606.1 226.8 L606.7 225.3 L607.4 223.8 L608.1 222.3 L608.8 220.8 L609.5 219.3 L610.3 217.8 L611.1 216.3 L611.8 214.8 L612.6 213.3 L613.4 211.8 L614.3 210.4 L615.1 208.9 L616 207.4 L616.9 205.9 L617.8 204.4 L618.7 203 L619.6 201.5 L620.6 200 L621.5 198.5 L622.5 197.1 L623.5 195.6 L624.5 194.1 L625.5 192.7 L626.5 191.2 L627.6 189.8 L628.6 188.3 L629.7 186.9 L630.8 185.4 L631.9 184 L633 182.5 L634.1 181.1 L635.3 179.6 L636.4 178.2 L637.6 176.8 L638.7 175.4 L639.9 173.9 L641.1 172.5 L642.3 171.1 L643.5 169.7 L644.8 168.3 L646 166.9 L647.2 165.5 L648.5 164.1 L649.7 162.7 L651 161.3 L652.2 159.9 L653.5 158.5 L654.8 157.1 L656.1 155.8 L657.4 154.4 L658.7 153 L660 151.7 L661.3 150.3 L662.6 149 L663.9 147.7 L665.2 146.3 L666.5 145 L667.8 143.7 M603.6 251.4 L604.9 249.8 L606.3 248.2 L607.7 246.6 L609.1 245 L610.5 243.4 L611.9 241.8 L613.4 240.2 L614.8 238.6 L616.3 237 L617.8 235.4 L619.4 233.8 L620.9 232.2 L622.5 230.6 L624.1 229 L625.7 227.4 L627.4 225.8 L629 224.2 L630.7 222.7 L632.4 221.1 L634.1 219.5 L635.9 217.9 L637.6 216.3 L639.4 214.7 L641.2 213.1 L643 211.5 L644.8 209.9 L646.7 208.3 L648.5 206.7 L650.4 205.1 L652.3 203.6 L654.3 202 L656.2 200.4 L658.1 198.8 L660.1 197.2 L662.1 195.6 L664.1 194 L666.1 192.4 L668.2 190.9 L670.2 189.3 L672.3 187.7 L674.4 186.1 L676.5 184.5 L678.6 183 L680.7 181.4 L682.9 179.8 L685 178.2 L687.2 176.6 L689.4 175.1 L691.6 173.5 L693.8 171.9 L696.1 170.3 L698.3 168.8 L700.6 167.2 L702.8 165.6 L705.1 164.1 L707.4 162.5 L709.7 160.9 L712.1 159.4 L714.4 157.8 L716.7 156.2 L719.1 154.7 L721.5 153.1 L723.8 151.6 L726.2 150 L728.6 148.5 L731 146.9 L733.5 145.3 L735.9 143.8 L738.3 142.3 L740.8 140.7 L743.2 139.2 L745.7 137.6 L748.1 136.1 L750.6 134.6 L753.1 133 L755.6 131.5 L758.1 130 L760.6 128.4 L763.1 126.9 L765.6 125.4 L768.1 123.9 L770.6 122.4 L773.2 120.9 L775.7 119.4 L778.2 117.9 L780.8 116.4 L783.3 114.9 L785.8 113.4 L788.4 111.9 L790.9 110.5 L793.5 109 L796 107.5 L798.5 106.1 L801.1 104.6 L803.6 103.2 L806.1 101.7 L808.7 100.3 L811.2 98.9 L813.7 97.5 L816.2 96.1 L818.7 94.7 L821.2 93.3 L823.7 91.9 L826.2 90.6 L828.6 89.2 L831.1 87.9 L833.5 86.6 L836 85.3 L838.4 84 L840.8 82.7 L843.2 81.5 L845.5 80.2 L847.9 79 L850.2 77.9 L852.5 76.7 L854.8 75.6 L857 74.5 L859.2 73.4 L861.4 72.3 L863.6 71.3 L865.7 70.4 L867.8 69.4 L869.9 68.6 L871.9 67.7 L873.9 66.9 L875.9 66.2 L877.8 65.5 L879.7 64.9 L881.5 64.3 L883.4 63.8 L885.1 63.4 L886.9 63 L888.6 62.7 L890.3 62.5 L892 62.3 L893.6 62.2 L895.3 62.2 L896.9 62.3 L898.5 62.4 L900.1 62.6 L901.7 62.9 L903.3 63.3 L904.9 63.7 L906.5 64.2 L908.1 64.8 L909.7 65.4 L911.4 66.1 L913 66.8 M603 250.6 L604.5 249 L606 247.4 L607.4 245.9 L609 244.3 L610.5 242.8 L612 241.2 L613.6 239.6 L615.2 238.1 L616.8 236.5 L618.4 235 L620.1 233.4 L621.7 231.9 L623.4 230.3 L625.1 228.7 L626.9 227.2 L628.6 225.6 L630.4 224.1 L632.1 222.5 L633.9 221 L635.7 219.4 L637.6 217.9 L639.4 216.3 L641.3 214.8 L643.2 213.2 L645.1 211.7 L647 210.2 L648.9 208.6 L650.9 207.1 L652.8 205.5 L654.8 204 L656.8 202.4 L658.8 200.9 L660.9 199.4 L662.9 197.8 L665 196.3 L667.1 194.8 L669.1 193.2 L671.2 191.7 L673.4 190.2 L675.5 188.6 L677.6 187.1 L679.8 185.6 L682 184.1 L684.2 182.5 L686.4 181 L688.6 179.5 L690.8 178 L693 176.5 L695.3 174.9 L697.5 173.4 L699.8 171.9 L702.1 170.4 L704.4 168.9 L706.7 167.4 L709 165.9 L711.3 164.4 L713.7 162.9 L716 161.4 L718.4 159.9 L720.7 158.4 L723.1 156.9 L725.5 155.5 L727.8 154 L730.2 152.5 L732.6 151 L735 149.6 L737.4 148.1 L739.9 146.6 L742.3 145.2 L744.7 143.7 L747.2 142.3 L749.6 140.8 L752 139.4 L754.5 137.9 L756.9 136.5 L759.4 135.1 L761.8 133.6 L764.3 132.2 L766.8 130.8 L769.2 129.4 L771.7 128 L774.1 126.6 L776.6 125.2 L779.1 123.8 L781.5 122.4 L784 121.1 L786.4 119.7 L788.9 118.3 L791.3 117 L793.8 115.7 L796.2 114.3 L798.6 113 L801.1 111.7 L803.5 110.4 L805.9 109.1 L808.3 107.8 L810.7 106.6 L813.1 105.3 L815.5 104.1 L817.8 102.9 L820.2 101.7 L822.5 100.5 L824.9 99.3 L827.2 98.1 L829.5 97 L831.8 95.8 L834 94.7 L836.3 93.7 L838.5 92.6 L840.7 91.5 L842.9 90.5 L845.1 89.5 L847.2 88.6 L849.4 87.6 L851.5 86.7 L853.6 85.8 L855.6 85 L857.7 84.2 L859.7 83.4 L861.7 82.6 L863.6 81.9 L865.6 81.3 L867.5 80.6 L869.3 80 L871.2 79.5 L873 79 L874.8 78.5 L876.6 78.1 L878.4 77.7 L880.1 77.4 L881.8 77.2 L883.5 76.9 L885.2 76.8 L886.9 76.7 L888.5 76.6 L890.1 76.6 L891.8 76.6 L893.4 76.7 L895 76.9 L896.6 77.1 L898.1 77.3 L899.7 77.6 L901.3 78 L902.9 78.4 L904.4 78.8 L906 79.3 L907.6 79.8 L909.2 80.4 M594.9 257.2 L595.3 255.6 L595.9 254.1 L596.4 252.5 L597 250.9 L597.5 249.3 L598.1 247.8 L598.8 246.2 L599.4 244.6 L600.1 243 L600.8 241.5 L601.5 239.9 L602.2 238.3 L603 236.7 L603.7 235.2 L604.5 233.6 L605.3 232 L606.2 230.5 L607 228.9 L607.9 227.3 L608.8 225.8 L609.7 224.2 L610.7 222.6 L611.6 221.1 L612.6 219.5 L613.6 217.9 L614.6 216.4 L615.6 214.8 L616.7 213.2 L617.8 211.7 L618.9 210.1 L620 208.6 L621.1 207 L622.2 205.4 L623.4 203.9 L624.6 202.3 L625.8 200.8 L627 199.2 L628.3 197.7 L629.5 196.1 L630.8 194.6 L632.1 193 L633.4 191.5 L634.7 189.9 L636.1 188.4 L637.4 186.8 L638.8 185.3 L640.2 183.7 L641.6 182.2 L643 180.7 L644.5 179.1 L645.9 177.6 L647.4 176.1 L648.9 174.5 L650.4 173 L651.9 171.5 L653.5 169.9 L655 168.4 L656.6 166.9 L658.1 165.4 L659.7 163.8 L661.3 162.3 L662.9 160.8 L664.6 159.3 L666.2 157.8 L667.8 156.3 L669.5 154.8 L671.2 153.3 L672.9 151.8 L674.5 150.3 L676.2 148.8 L678 147.3 L679.7 145.8 L681.4 144.3 L683.1 142.8 L684.9 141.3 L686.6 139.9 L688.4 138.4 L690.2 136.9 L691.9 135.5 L693.7 134 L695.5 132.6 L697.3 131.1 L699.1 129.7 L700.9 128.2 L702.7 126.8 L704.5 125.4 L706.3 123.9 L708.1 122.5 L709.9 121.1 L711.7 119.7 L713.5 118.3 L715.3 116.9 L717 115.6 L718.8 114.2 L720.6 112.8 L722.4 111.5 L724.1 110.1 L725.9 108.8 L727.6 107.5 L729.3 106.1 L731 104.8 L732.7 103.5 L734.4 102.3 L736 101 L737.7 99.7 L739.3 98.5 L740.9 97.3 L742.4 96.1 L743.9 94.9 L745.4 93.7 L746.9 92.6 L748.3 91.4 L749.7 90.3 L751 89.2 L752.2 88.2 L753.5 87.1 L754.6 86.1 L755.7 85.1 L756.8 84.2 L757.7 83.2 L758.6 82.3 L759.4 81.5 L760.2 80.6 L760.8 79.8 L761.3 79.1 L761.8 78.4 L762.1 77.7 L762.3 77.1 L762.4 76.5 L762.3 75.9 L762.2 75.5 L761.8 75 L761.4 74.6 L760.8 74.3 L760 74 L759.1 73.8 L758 73.6 M1045.2 73.5 L1043.4 73.4 L1041.7 73.4 L1040.2 73.4 L1038.9 73.5 L1037.7 73.7 L1036.7 73.9 L1035.9 74.2 L1035.1 74.5 L1034.6 74.9 L1034.1 75.3 L1033.8 75.8 L1033.7 76.3 L1033.6 76.9 L1033.7 77.5 M602.5 258 L602.9 256.4 L603.4 254.9 L603.8 253.3 L604.3 251.7 L604.8 250.2 L605.3 248.6 L605.9 247 L606.4 245.5 L607 243.9 L607.6 242.3 L608.2 240.8 L608.9 239.2 L609.5 237.7 L610.2 236.1 L610.9 234.5 L611.7 233 L612.4 231.4 L613.2 229.9 L613.9 228.3 L614.7 226.7 L615.6 225.2 L616.4 223.6 L617.3 222.1 L618.2 220.5 L619.1 219 L620 217.4 L620.9 215.9 L621.9 214.3 L622.8 212.8 L623.8 211.2 L624.8 209.7 L625.9 208.1 L626.9 206.6 L628 205 L629.1 203.5 L630.2 201.9 L631.3 200.4 L632.4 198.9 L633.6 197.3 L634.7 195.8 L635.9 194.2 L637.1 192.7 L638.3 191.2 L639.6 189.6 L640.8 188.1 L642.1 186.6 L643.3 185.1 L644.6 183.5 L646 182 L647.3 180.5 L648.6 179 L650 177.4 L651.3 175.9 L652.7 174.4 L654.1 172.9 L655.5 171.4 L657 169.9 L658.4 168.4 L659.8 166.9 L661.3 165.4 L662.8 163.9 L664.3 162.4 L665.8 160.9 L667.3 159.4 L668.8 157.9 L670.3 156.4 L671.9 154.9 L673.4 153.4 L675 152 L676.5 150.5 L678.1 149 L679.7 147.5 L681.3 146.1 L682.9 144.6 L684.5 143.2 L686.1 141.7 L687.7 140.3 L689.4 138.8 L691 137.4 L692.6 136 L694.3 134.5 L695.9 133.1 L697.5 131.7 L699.2 130.3 L700.8 128.9 L702.5 127.5 L704.1 126.1 L705.8 124.7 L707.4 123.3 L709 122 L710.7 120.6 L712.3 119.3 L713.9 117.9 L715.5 116.6 L717.1 115.3 L718.7 113.9 L720.3 112.6 L721.9 111.3 L723.5 110 L725 108.8 L726.5 107.5 L728 106.3 L729.5 105 L731 103.8 L732.5 102.6 L733.9 101.4 L735.3 100.2 L736.6 99.1 L737.9 97.9 L739.2 96.8 L740.5 95.7 L741.7 94.6 L742.9 93.6 L744 92.5 L745.1 91.5 L746.1 90.6 L747 89.6 L747.9 88.7 L748.8 87.8 L749.5 86.9 L750.2 86 L750.8 85.2 L751.4 84.4 L751.8 83.7 L752.2 83 L752.4 82.3 L752.6 81.7 L752.6 81.1 L752.5 80.6 L752.3 80.1 L752 79.6 L751.6 79.2 L751 78.8 L750.3 78.5 L749.5 78.3 L748.5 78.1 L747.3 77.9 L746 77.8 M1058.9 77.7 L1057.2 77.7 L1055.7 77.7 L1054.3 77.8 L1053.1 78 L1052.1 78.2 L1051.1 78.4 L1050.3 78.7 L1049.7 79.1 L1049.2 79.4 L1048.8 79.9 L1048.5 80.4 L1048.4 80.9 L1048.3 81.5 L1048.4 82.1 L1048.6 82.7 L1048.8 83.4 L1049.2 84.1 L1049.6 84.9 L1050.2 85.7 L1050.8 86.5 L1051.4 87.4 L1052.2 88.3 L1053 89.2 M599.4 255.5 L600.2 253.9 L601 252.2 L601.9 250.6 L602.8 249 L603.7 247.4 L604.6 245.7 L605.5 244.1 L606.5 242.5 L607.5 240.9 L608.5 239.2 L609.5 237.6 L610.6 236 L611.7 234.4 L612.8 232.7 L613.9 231.1 L615 229.5 L616.2 227.9 L617.4 226.2 L618.6 224.6 L619.8 223 L621.1 221.4 L622.4 219.7 L623.7 218.1 L625 216.5 L626.3 214.9 L627.7 213.3 L629 211.6 L630.4 210 L631.9 208.4 L633.3 206.8 L634.8 205.1 L636.2 203.5 L637.7 201.9 L639.3 200.3 L640.8 198.6 L642.4 197 L643.9 195.4 L645.5 193.8 L647.2 192.1 L648.8 190.5 L650.5 188.9 L652.1 187.3 L653.8 185.7 L655.5 184 L657.3 182.4 L659 180.8 L660.8 179.2 L662.6 177.6 L664.4 175.9 L666.2 174.3 L668 172.7 L669.9 171.1 L671.8 169.5 L673.7 167.8 L675.6 166.2 L677.5 164.6 L679.4 163 L681.4 161.4 L683.4 159.7 L685.3 158.1 L687.4 156.5 L689.4 154.9 L691.4 153.3 L693.5 151.7 L695.5 150 L697.6 148.4 L699.7 146.8 L701.8 145.2 L703.9 143.6 L706.1 142 L708.2 140.4 L710.4 138.7 L712.6 137.1 L714.8 135.5 L717 133.9 L719.2 132.3 L721.4 130.7 L723.7 129.1 L725.9 127.5 L728.2 125.9 L730.5 124.3 L732.8 122.6 L735.1 121 L737.4 119.4 L739.7 117.8 L742.1 116.2 L744.4 114.6 L746.8 113 L749.1 111.4 L751.5 109.8 L753.9 108.2 L756.3 106.6 L758.7 105 L761.1 103.4 L763.5 101.9 L765.9 100.3 L768.4 98.7 L770.8 97.1 L773.2 95.5 L775.7 93.9 L778.1 92.4 L780.6 90.8 L783 89.2 L785.5 87.6 L788 86.1 L790.4 84.5 L792.9 82.9 L795.4 81.4 L797.8 79.8 L800.3 78.3 L802.8 76.8 L805.2 75.2 L807.7 73.7 L810.1 72.2 L812.5 70.7 L814.9 69.2 L817.3 67.7 L819.7 66.2 L822.1 64.7 L824.4 63.2 L826.7 61.8 L829 60.4 L831.3 59 L833.5 57.6 L835.6 56.2 L837.7 54.9 L839.7 53.6 L841.6 52.4 L843.4 51.2 L845.1 50 L846.6 48.9 L848 47.9 L849.1 46.9 L850 46.1 L850.6 45.3 L850.9 44.7 L850.8 44.2 L850.3 43.9 L953.5 43.7 L951.8 43.7 L950.5 43.8 L949.7 44.1 L949.3 44.5 L949.3 45.1 L949.6 45.8 L950.1 46.6 L951 47.5 L952 48.5 L953.2 49.5 L954.5 50.7 L956 51.8 L957.6 53.1 L959.2 54.4 L961 55.7 L962.8 57 L964.6 58.4 L966.5 59.8 L968.4 61.2 L970.3 62.6 L972.3 64.1 L974.3 65.5 L976.3 67 L978.4 68.5 L980.4 70 L982.5 71.5 L984.6 73 L986.6 74.6 L988.7 76.1 L990.8 77.6 L992.9 79.2 L995 80.7 L997.1 82.3 L999.2 83.8 L1001.3 85.4 L1003.4 87 L1005.5 88.5 L1007.6 90.1 L1009.7 91.7 L1011.8 93.3 L1013.8 94.8 L1015.9 96.4 L1018 98 M598.6 257 L600 255.4 L601.3 253.9 L602.7 252.3 L604.1 250.7 L605.5 249.1 L607 247.5 L608.4 246 L609.9 244.4 L611.4 242.8 L613 241.2 L614.5 239.7 L616.1 238.1 L617.7 236.5 L619.3 234.9 L620.9 233.4 L622.6 231.8 L624.2 230.2 L625.9 228.6 L627.6 227.1 L629.4 225.5 L631.1 223.9 L632.9 222.4 L634.7 220.8 L636.5 219.2 L638.3 217.7 L640.1 216.1 L642 214.5 L643.8 213 L645.7 211.4 L647.6 209.8 L649.6 208.3 L651.5 206.7 L653.5 205.1 L655.4 203.6 L657.4 202 L659.4 200.5 L661.5 198.9 L663.5 197.4 L665.5 195.8 L667.6 194.2 L669.7 192.7 L671.8 191.1 L673.9 189.6 L676 188 L678.2 186.5 L680.3 185 L682.5 183.4 L684.7 181.9 L686.9 180.3 L689.1 178.8 L691.3 177.2 L693.6 175.7 L695.8 174.2 L698.1 172.6 L700.4 171.1 L702.6 169.6 L704.9 168 L707.2 166.5 L709.6 165 L711.9 163.5 L714.2 161.9 L716.6 160.4 L718.9 158.9 L721.3 157.4 L723.7 155.9 L726.1 154.4 L728.5 152.9 L730.9 151.4 L733.3 149.9 L735.7 148.4 L738.1 146.9 L740.5 145.4 L743 143.9 L745.4 142.4 L747.9 140.9 L750.3 139.5 L752.8 138 L755.2 136.5 L757.7 135.1 L760.2 133.6 L762.6 132.1 L765.1 130.7 L767.6 129.2 L770.1 127.8 L772.6 126.4 L775 124.9 L777.5 123.5 L780 122.1 L782.5 120.7 L785 119.3 L787.5 117.9 L789.9 116.5 L792.4 115.1 L794.9 113.8 L797.3 112.4 L799.8 111 L802.3 109.7 L804.7 108.4 L807.2 107 L809.6 105.7 L812 104.4 L814.4 103.1 L816.8 101.8 L819.2 100.6 L821.6 99.3 L824 98.1 L826.4 96.9 L828.7 95.7 L831.1 94.5 L833.4 93.3 L835.7 92.2 L838 91.1 L840.2 89.9 L842.5 88.9 L844.7 87.8 L846.9 86.8 L849.1 85.8 L851.2 84.8 L853.4 83.8 L855.5 82.9 L857.6 82 L859.6 81.2 L861.7 80.4 L863.7 79.6 L865.6 78.8 L867.6 78.1 L869.5 77.5 L871.4 76.9 L873.3 76.3 L875.1 75.8 L876.9 75.3 L878.7 74.9 L880.5 74.5 L882.2 74.2 L884 73.9 L885.7 73.7 L887.3 73.6 L889 73.5 L890.7 73.4 L892.3 73.4 L893.9 73.5 L895.5 73.6 L897.1 73.8 L898.7 74.1 L900.3 74.3 L901.9 74.7 L903.5 75.1 L905.1 75.5 L906.7 76 L908.3 76.6 L909.9 77.2 L911.5 77.8 L913.1 78.5 L914.8 79.2 L916.4 80 L918 80.8 L919.7 81.6 L921.4 82.5 L923 83.4 L924.7 84.3 L926.4 85.3 L928.1 86.3 L929.8 87.3 L931.6 88.4 L933.3 89.4 L935.1 90.5 L936.8 91.6 L938.6 92.8 L940.4 93.9 L942.2 95.1 L944 96.3 L945.8 97.5 L947.6 98.7 L949.4 100 L951.2 101.2 L953.1 102.5 L954.9 103.8 M597.3 256 L598.7 254.4 L600.2 252.9 L601.7 251.3 L603.1 249.8 L604.7 248.2 L606.2 246.7 L607.8 245.1 L609.3 243.6 L610.9 242 L612.5 240.5 L614.2 238.9 L615.8 237.4 L617.5 235.8 L619.2 234.3 L620.9 232.8 L622.6 231.2 L624.4 229.7 L626.1 228.1 L627.9 226.6 L629.7 225.1 L631.5 223.5 L633.4 222 L635.2 220.4 L637.1 218.9 L639 217.4 L640.9 215.8 L642.8 214.3 L644.8 212.8 L646.7 211.3 L648.7 209.7 L650.7 208.2 L652.7 206.7 L654.7 205.1 L656.7 203.6 L658.8 202.1 L660.8 200.6 L662.9 199.1 L665 197.5 L667.1 196 L669.2 194.5 L671.4 193 L673.5 191.5 L675.7 190 L677.8 188.5 L680 187 L682.2 185.5 L684.4 184 L686.7 182.5 L688.9 181 L691.1 179.5 L693.4 178 L695.7 176.5 L697.9 175 L700.2 173.5 L702.5 172 L704.8 170.6 L707.2 169.1 L709.5 167.6 L711.8 166.1 L714.2 164.7 L716.5 163.2 L718.9 161.7 L721.3 160.3 L723.6 158.8 L726 157.4 L728.4 155.9 L730.8 154.5 L733.2 153 L735.6 151.6 L738 150.1 L740.4 148.7 L742.9 147.3 L745.3 145.9 L747.7 144.5 L750.2 143 L752.6 141.6 L755 140.2 L757.5 138.8 L759.9 137.5 L762.3 136.1 L764.8 134.7 L767.2 133.3 L769.7 132 L772.1 130.6 L774.6 129.3 L777 127.9 L779.4 126.6 L781.9 125.3 L784.3 124 L786.7 122.6 L789.1 121.3 L791.6 120.1 L794 118.8 L796.4 117.5 L798.8 116.3 L801.2 115 L803.5 113.8 L805.9 112.6 L808.3 111.3 L810.6 110.2 L813 109 L815.3 107.8 L817.6 106.7 L819.9 105.5 L822.2 104.4 L824.5 103.3 L826.7 102.2 L829 101.2 L831.2 100.1 L833.4 99.1 L835.6 98.1 L837.8 97.1 L839.9 96.2 L842.1 95.3 L844.2 94.4 L846.3 93.5 L848.4 92.6 L850.4 91.8 L852.4 91 L854.5 90.3 L856.4 89.6 L858.4 88.9 L860.3 88.2 L862.3 87.6 L864.2 87 L866 86.5 L867.9 85.9 L869.7 85.5 L871.5 85.1 L873.3 84.7 L875 84.3 L876.8 84 L878.5 83.8 L880.2 83.6 L881.9 83.4 L883.6 83.3 L885.2 83.2 L886.9 83.2 L888.5 83.2 L890.1 83.3 L891.7 83.4 L893.3 83.6 L894.9 83.8 L896.5 84 L898.1 84.3 L899.7 84.6 L901.2 85 L902.8 85.4 L904.4 85.9 L906 86.4 L907.6 87 L909.2 87.5 L910.7 88.1 L912.3 88.8 L913.9 89.5 L915.5 90.2 L917.2 91 L918.8 91.7 L920.4 92.6 L922 93.4 L923.7 94.3 L925.3 95.2 L927 96.1 L928.6 97.1 L930.3 98 L932 99 L933.7 100 L935.4 101.1 L937.1 102.1 L938.8 103.2 L940.5 104.3 L942.2 105.4 L944 106.6 L945.7 107.7 L947.4 108.9 L949.2 110.1 L951 111.2 L952.7 112.4 L954.5 113.7 L956.2 114.9 L958 116.1 L959.8 117.4 M600.3 255 L601.9 253.6 L603.5 252.1 L605.2 250.7 L606.9 249.2 L608.6 247.8 L610.3 246.3 L612 244.9 L613.7 243.5 L615.5 242 L617.2 240.6 L619 239.2 L620.8 237.7 L622.6 236.3 L624.5 234.9 L626.3 233.4 L628.2 232 L630 230.6 L631.9 229.2 L633.8 227.8 L635.8 226.3 L637.7 224.9 L639.6 223.5 L641.6 222.1 L643.6 220.7 L645.5 219.3 L647.5 217.9 L649.6 216.5 L651.6 215.1 L653.6 213.7 L655.7 212.3 L657.7 210.9 L659.8 209.5 L661.9 208.1 L664 206.7 L666.1 205.3 L668.2 203.9 L670.3 202.6 L672.4 201.2 L674.6 199.8 L676.7 198.5 L678.9 197.1 L681 195.7 L683.2 194.4 L685.4 193 L687.6 191.7 L689.8 190.3 L692 189 L694.2 187.6 L696.5 186.3 L698.7 185 L700.9 183.7 L703.2 182.3 L705.4 181 L707.7 179.7 L709.9 178.4 L712.2 177.1 L714.5 175.8 L716.7 174.5 L719 173.2 L721.3 171.9 L723.6 170.7 L725.8 169.4 L728.1 168.1 L730.4 166.9 L732.7 165.6 L735 164.4 L737.3 163.1 L739.6 161.9 L741.9 160.7 L744.1 159.4 L746.4 158.2 L748.7 157 L751 155.8 L753.3 154.7 L755.6 153.5 L757.9 152.3 L760.1 151.1 L762.4 150 L764.7 148.9 L767 147.7 L769.2 146.6 L771.5 145.5 L773.7 144.4 L776 143.3 L778.2 142.2 L780.5 141.1 L782.7 140.1 L784.9 139 L787.1 138 L789.3 137 L791.5 136 L793.7 135 L795.9 134 L798 133 L800.2 132.1 L802.3 131.2 L804.5 130.2 L806.6 129.3 L808.7 128.4 L810.8 127.6 L812.9 126.7 L815 125.9 L817 125.1 L819.1 124.3 L821.1 123.5 L823.1 122.7 L825.2 122 L827.1 121.3 L829.1 120.6 L831.1 119.9 L833 119.2 L835 118.6 L836.9 118 L838.8 117.4 L840.7 116.8 L842.6 116.3 L844.4 115.8 L846.3 115.3 L848.1 114.8 L850 114.4 L851.8 114 L853.5 113.6 L855.3 113.3 L857.1 112.9 L858.8 112.6 L860.6 112.4 L862.3 112.1 L864 111.9 L865.7 111.7 L867.4 111.5 L869.1 111.4 L870.7 111.3 L872.4 111.2 L874 111.2 L875.7 111.2 L877.3 111.2 L878.9 111.3 L880.5 111.3 L882.1 111.4 L883.7 111.6 L885.3 111.7 L886.9 111.9 L888.5 112.2 L890.1 112.4 L891.7 112.7 L893.2 113 L894.8 113.3 L896.4 113.7 L897.9 114.1 L899.5 114.5 M601.1 257 L602.7 255.6 L604.5 254.3 L606.2 252.9 L607.9 251.6 L609.7 250.2 L611.4 248.9 L613.2 247.5 L615 246.2 L616.8 244.8 L618.6 243.5 L620.5 242.2 L622.3 240.8 L624.2 239.5 L626 238.2 L627.9 236.8 L629.8 235.5 L631.7 234.2 L633.7 232.9 L635.6 231.5 L637.5 230.2 L639.5 228.9 L641.5 227.6 L643.4 226.3 L645.4 225 L647.4 223.7 L649.4 222.4 L651.4 221.1 L653.5 219.8 L655.5 218.5 L657.5 217.2 L659.6 215.9 L661.7 214.7 L663.7 213.4 L665.8 212.1 L667.9 210.8 L670 209.6 L672.1 208.3 L674.2 207 L676.3 205.8 L678.4 204.5 L680.6 203.3 L682.7 202.1 L684.9 200.8 L687 199.6 L689.2 198.4 L691.3 197.1 L693.5 195.9 L695.6 194.7 L697.8 193.5 L700 192.3 L702.2 191.1 L704.3 189.9 L706.5 188.7 L708.7 187.6 L710.9 186.4 L713.1 185.2 L715.3 184.1 L717.5 182.9 L719.7 181.8 L721.9 180.6 L724.1 179.5 L726.3 178.4 L728.5 177.2 L730.7 176.1 L732.9 175 L735 173.9 L737.2 172.8 L739.4 171.8 L741.6 170.7 L743.8 169.6 L746 168.6 L748.2 167.5 L750.4 166.5 L752.5 165.5 L754.7 164.4 L756.9 163.4 L759 162.4 L761.2 161.4 L763.3 160.5 L765.5 159.5 L767.6 158.5 L769.8 157.6 L771.9 156.7 L774 155.7 L776.1 154.8 L778.2 153.9 L780.3 153 L782.4 152.2 L784.5 151.3 L786.6 150.5 L788.7 149.6 L790.7 148.8 L792.8 148 L794.8 147.2 L796.9 146.4 L798.9 145.7 L800.9 144.9 L802.9 144.2 L804.9 143.5 L806.9 142.8 L808.8 142.1 L810.8 141.5 L812.8 140.8 L814.7 140.2 L816.6 139.6 L818.5 139 L820.5 138.4 L822.3 137.8 L824.2 137.3 L826.1 136.8 L828 136.3 L829.8 135.8 L831.7 135.3 L833.5 134.9 L835.3 134.5 L837.1 134.1 L838.9 133.7 L840.7 133.4 L842.5 133 L844.2 132.7 L846 132.4 L847.7 132.2 L849.4 131.9 L851.2 131.7 L852.9 131.5 L854.6 131.3 L856.3 131.1 L857.9 131 L859.6 130.9 L861.3 130.8 L862.9 130.7 L864.6 130.7 L866.2 130.7 L867.9 130.7 L869.5 130.7 L871.1 130.8 L872.7 130.8 L874.3 130.9 L875.9 131.1 L877.5 131.2 L879.1 131.4 L880.7 131.6 L882.3 131.8 L883.9 132 M606 256.1 L607.6 254.7 L609.2 253.3 L610.8 251.8 L612.5 250.4 L614.1 248.9 L615.8 247.5 L617.5 246.1 L619.1 244.6 L620.9 243.2 L622.6 241.8 L624.3 240.4 L626.1 238.9 L627.9 237.5 L629.6 236.1 L631.4 234.7 L633.3 233.2 L635.1 231.8 L636.9 230.4 L638.8 229 L640.7 227.6 L642.6 226.2 L644.5 224.7 L646.4 223.3 L648.3 221.9 L650.2 220.5 L652.2 219.1 L654.1 217.7 L656.1 216.3 L658.1 214.9 L660.1 213.5 L662.1 212.2 L664.1 210.8 L666.2 209.4 L668.2 208 L670.3 206.6 L672.3 205.2 L674.4 203.9 L676.5 202.5 L678.6 201.1 L680.7 199.8 L682.8 198.4 L684.9 197 L687 195.7 L689.2 194.3 L691.3 193 L693.5 191.7 L695.6 190.3 L697.8 189 L700 187.6 L702.2 186.3 L704.3 185 L706.5 183.7 L708.7 182.4 L710.9 181 L713.1 179.7 L715.4 178.4 L717.6 177.1 L719.8 175.8 L722 174.6 L724.3 173.3 L726.5 172 L728.7 170.7 L731 169.5 L733.2 168.2 L735.4 167 L737.7 165.7 L739.9 164.5 L742.2 163.2 L744.4 162 L746.7 160.8 L748.9 159.6 L751.2 158.4 L753.4 157.2 L755.6 156 L757.9 154.8 L760.1 153.6 L762.4 152.5 L764.6 151.3 L766.8 150.2 L769 149 L771.3 147.9 L773.5 146.8 L775.7 145.7 L777.9 144.6 L780.1 143.5 L782.3 142.4 L784.5 141.3 L786.7 140.3 L788.9 139.3 L791 138.2 L793.2 137.2 L795.3 136.2 L797.5 135.2 L799.6 134.2 L801.7 133.3 L803.9 132.3 L806 131.4 L808.1 130.5 L810.1 129.6 L812.2 128.7 L814.3 127.8 L816.3 127 L818.4 126.1 L820.4 125.3 L822.4 124.5 L824.4 123.8 L826.4 123 L828.4 122.3 L830.4 121.5 L832.3 120.8 L834.2 120.2 L836.2 119.5 L838.1 118.9 L840 118.3 L841.9 117.7 L843.7 117.1 L845.6 116.6 L847.4 116.1 L849.2 115.6 L851.1 115.1 L852.9 114.7 L854.6 114.3 L856.4 113.9 L858.2 113.5 L859.9 113.2 L861.7 112.9 L863.4 112.6 L865.1 112.3 L866.8 112.1 L868.5 111.9 L870.2 111.8 L871.8 111.6 L873.5 111.5 L875.1 111.4 L876.8 111.4 L878.4 111.4 L880 111.4 L881.7 111.4 L883.3 111.5 L884.9 111.6 L886.5 111.7 L888.1 111.9 L889.7 112.1 L891.2 112.3 L892.8 112.5 L894.4 112.8 L896 113.1 L897.6 113.4 L899.1 113.8 L900.7 114.1 L902.3 114.5 L903.9 115 L905.4 115.4 L907 115.9 L908.6 116.4 L910.2 116.9 L911.7 117.5 L913.3 118.1 L914.9 118.7 L916.5 119.3 L918.1 120 L919.7 120.6 L921.3 121.3 L922.9 122 L924.5 122.8 L926.1 123.5 L927.7 124.3 L929.3 125.1 L930.9 125.9 L932.5 126.7 L934.2 127.6 L935.8 128.4 L937.4 129.3 L939.1 130.2 L940.7 131.1 L942.4 132 L944 133 L945.7 133.9 L947.3 134.9 L949 135.9 M596.3 253.7 L598 252.3 L599.7 250.9 L601.4 249.4 L603.1 248 L604.9 246.6 L606.6 245.2 L608.4 243.8 L610.2 242.4 L612 241 L613.8 239.6 L615.7 238.2 L617.5 236.8 L619.4 235.4 L621.3 234 L623.2 232.6 L625.1 231.2 L627 229.8 L629 228.4 L630.9 227 L632.9 225.7 L634.9 224.3 L636.9 222.9 L638.9 221.5 L640.9 220.1 L642.9 218.8 L645 217.4 L647 216 L649.1 214.7 L651.1 213.3 L653.2 212 L655.3 210.6 L657.4 209.2 L659.6 207.9 L661.7 206.5 L663.8 205.2 L666 203.9 L668.1 202.5 L670.3 201.2 L672.5 199.9 L674.7 198.5 L676.8 197.2 L679 195.9 L681.2 194.6 L683.5 193.3 L685.7 192 L687.9 190.7 L690.1 189.4 L692.4 188.1 L694.6 186.8 L696.9 185.5 L699.1 184.2 L701.4 182.9 L703.6 181.7 L705.9 180.4 L708.2 179.1 L710.5 177.9 L712.7 176.6 L715 175.4 L717.3 174.2 L719.6 172.9 L721.9 171.7 L724.2 170.5 L726.5 169.3 L728.7 168.1 L731 166.9 L733.3 165.7 L735.6 164.5 L737.9 163.3 L740.2 162.2 L742.5 161 L744.8 159.8 L747 158.7 L749.3 157.6 L751.6 156.4 L753.9 155.3 L756.1 154.2 L758.4 153.1 L760.7 152 L762.9 151 L765.2 149.9 L767.4 148.8 L769.7 147.8 L771.9 146.7 L774.1 145.7 L776.3 144.7 L778.6 143.7 L780.8 142.7 L783 141.8 L785.1 140.8 L787.3 139.8 L789.5 138.9 L791.6 138 L793.8 137.1 L795.9 136.2 L798.1 135.3 L800.2 134.5 L802.3 133.6 L804.4 132.8 L806.5 132 L808.5 131.2 L810.6 130.4 L812.6 129.7 L814.7 128.9 L816.7 128.2 L818.7 127.5 L820.7 126.8 L822.6 126.2 L824.6 125.5 L826.6 124.9 L828.5 124.3 L830.4 123.7 L832.3 123.2 L834.2 122.6 L836.1 122.1 L837.9 121.6 L839.8 121.2 L841.6 120.7 L843.5 120.3 L845.3 119.9 L847.1 119.6 L848.8 119.2 L850.6 118.9 L852.4 118.6 L854.1 118.4 L855.8 118.1 L857.5 117.9 L859.2 117.7 L860.9 117.6 L862.6 117.4 L864.3 117.3 L865.9 117.3 L867.6 117.2 L869.2 117.2 L870.9 117.2 L872.5 117.2 L874.1 117.3 L875.7 117.4 L877.3 117.5 L878.9 117.6 L880.5 117.8 L882.1 118 L883.6 118.2 L885.2 118.5 L886.8 118.7 L888.3 119 L889.9 119.4 L891.4 119.7 L893 120.1 L894.5 120.5 L896.1 120.9 L897.6 121.4 L899.2 121.8 L900.7 122.3 L902.3 122.9 L903.8 123.4 L905.4 124 L906.9 124.5 L908.4 125.2 L910 125.8 L911.5 126.4 L913.1 127.1 L914.6 127.8 L916.2 128.5 L917.8 129.2 L919.3 130 L920.9 130.7 L922.4 131.5 L924 132.3 L925.6 133.1 L927.1 134 L928.7 134.8 L930.3 135.7 L931.9 136.6 L933.5 137.5 L935 138.4 L936.6 139.3 L938.2 140.2 L939.8 141.2 L941.4 142.2 L943 143.1 L944.6 144.1 L946.2 145.1 L947.8 146.1 L949.4 147.2 L951 148.2 L952.7 149.3 L954.3 150.3 L955.9 151.4 M597.9 258.2 L599.2 256.6 L600.5 255.1 L601.8 253.5 L603.1 251.9 L604.5 250.3 L605.8 248.7 L607.2 247.1 L608.6 245.5 L610.1 243.9 L611.5 242.4 L613 240.8 L614.5 239.2 L616 237.6 L617.5 236 L619.1 234.4 L620.6 232.8 L622.2 231.3 L623.9 229.7 L625.5 228.1 L627.1 226.5 L628.8 224.9 L630.5 223.3 L632.2 221.8 L634 220.2 L635.7 218.6 L637.5 217 L639.3 215.4 L641.1 213.9 L642.9 212.3 L644.7 210.7 L646.6 209.1 L648.5 207.6 L650.4 206 L652.3 204.4 L654.2 202.8 L656.1 201.3 L658.1 199.7 L660.1 198.1 L662.1 196.5 L664.1 195 L666.1 193.4 L668.2 191.8 L670.2 190.3 L672.3 188.7 L674.4 187.1 L676.5 185.6 L678.6 184 L680.8 182.4 L682.9 180.9 L685.1 179.3 L687.3 177.7 L689.5 176.2 L691.7 174.6 L693.9 173.1 L696.1 171.5 L698.4 169.9 L700.6 168.4 L702.9 166.8 L705.2 165.3 L707.5 163.7 L709.8 162.2 L712.1 160.6 L714.4 159.1 L716.8 157.6 L719.1 156 L721.5 154.5 L723.8 152.9 L726.2 151.4 L728.6 149.9 L731 148.3 L733.4 146.8 L735.8 145.3 L738.3 143.8 L740.7 142.2 L743.1 140.7 L745.6 139.2 L748 137.7 L750.5 136.2 L753 134.7 L755.4 133.2 L757.9 131.7 L760.4 130.2 L762.9 128.7 L765.4 127.2 L767.9 125.7 L770.4 124.2 L772.9 122.7 L775.4 121.2 L777.9 119.8 L780.4 118.3 L782.9 116.9 L785.4 115.4 L788 113.9 L790.5 112.5 L793 111.1 L795.5 109.6 L798 108.2 L800.5 106.8 L803 105.4 L805.5 104 L808 102.6 L810.5 101.2 L813 99.9 L815.4 98.5 L817.9 97.1 L820.3 95.8 L822.8 94.5 L825.2 93.2 L827.7 91.9 L830.1 90.6 L832.5 89.3 L834.8 88 L837.2 86.8 L839.6 85.6 L841.9 84.4 L844.2 83.2 L846.5 82.1 L848.8 80.9 L851 79.8 L853.3 78.7 L855.5 77.7 L857.6 76.7 L859.8 75.7 L861.9 74.7 L864 73.8 L866.1 72.9 L868.1 72.1 L870.1 71.3 L872.1 70.5 L874 69.8 L875.9 69.2 L877.8 68.6 L879.6 68 L881.4 67.6 L883.2 67.1 L885 66.8 L886.7 66.5 L888.4 66.2 L890.1 66.1 L891.7 66 L893.4 65.9 L895 65.9 L896.6 66 L898.2 66.2 L899.8 66.4 L901.4 66.7 L903 67.1 L904.6 67.5 L906.2 68 L907.7 68.5 L909.4 69.1 L911 69.7 L912.6 70.4 L914.2 71.2 L915.9 72 L917.5 72.8 L919.2 73.7 L920.9 74.6 L922.6 75.5 L924.3 76.5 L926 77.5 L927.8 78.6 L929.5 79.7 L931.3 80.8 L933.1 81.9 L934.9 83.1 L936.7 84.2 L938.5 85.4 L940.3 86.6 L942.1 87.9 L944 89.1 L945.8 90.4 L947.7 91.7 L949.6 93 L951.4 94.3 L953.3 95.6 L955.2 97 L957.1 98.3 L959 99.7 L960.9 101 L962.8 102.4 L964.7 103.8 L966.6 105.2 L968.5 106.6 L970.5 108 L972.4 109.4 L974.3 110.9 L976.2 112.3 L978.2 113.8 L980.1 115.2 L982 116.7 L983.9 118.1 L985.9 119.6 L987.8 121 L989.7 122.5 L991.6 124 L993.5 125.5 L995.4 127 L997.4 128.5 L999.3 130 L1001.2 131.5 L1003.1 133 L1005 134.5 L1006.9 136 L1008.8 137.5 L1010.6 139 L1012.5 140.5 L1014.4 142 L1016.3 143.5 L1018.1 145.1 L1020 146.6 M596.7 256.4 L598.4 255.1 L600.2 253.9 L602 252.6 L603.9 251.4 L605.7 250.1 L607.5 248.9 L609.4 247.7 L611.2 246.4 L613.1 245.2 L615 244 L616.9 242.8 L618.8 241.5 L620.7 240.3 L622.7 239.1 L624.6 237.9 L626.5 236.7 L628.5 235.5 L630.5 234.3 L632.4 233.1 L634.4 231.9 L636.4 230.7 L638.4 229.5 L640.4 228.3 L642.4 227.2 L644.4 226 L646.5 224.8 L648.5 223.6 L650.6 222.5 L652.6 221.3 L654.7 220.1 L656.7 219 L658.8 217.8 L660.9 216.7 L663 215.6 L665 214.4 L667.1 213.3 L669.2 212.2 L671.3 211 L673.4 209.9 L675.5 208.8 L677.7 207.7 L679.8 206.6 L681.9 205.5 L684 204.4 L686.1 203.3 L688.3 202.3 L690.4 201.2 L692.5 200.1 L694.6 199.1 L696.8 198 L698.9 197 L701.1 195.9 L703.2 194.9 L705.3 193.9 L707.5 192.8 L709.6 191.8 L711.7 190.8 L713.9 189.8 L716 188.8 L718.1 187.8 L720.3 186.9 L722.4 185.9 L724.5 184.9 L726.7 184 L728.8 183 L730.9 182.1 L733 181.2 L735.1 180.3 L737.2 179.3 L739.3 178.4 L741.4 177.6 L743.5 176.7 L745.6 175.8 L747.7 174.9 L749.8 174.1 L751.9 173.3 L754 172.4 L756 171.6 L758.1 170.8 L760.1 170 L762.2 169.2 L764.2 168.5 L766.3 167.7 L768.3 166.9 L770.3 166.2 L772.3 165.5 L774.3 164.8 L776.3 164.1 L778.3 163.4 L780.3 162.7 L782.3 162 L784.2 161.4 L786.2 160.8 L788.2 160.1 L790.1 159.5 L792 158.9 L793.9 158.4 L795.9 157.8 L797.8 157.3 L799.7 156.7 L801.5 156.2 L803.4 155.7 L805.3 155.2 L807.1 154.8 L809 154.3 L810.8 153.9 L812.6 153.5 L814.5 153 L816.3 152.7 L818.1 152.3 L819.9 151.9 L821.6 151.6 L823.4 151.3 L825.2 151 L826.9 150.7 L828.7 150.4 L830.4 150.2 L832.1 150 L833.9 149.7 L835.6 149.5 L837.3 149.4 L839 149.2 L840.7 149.1 L842.3 149 L844 148.9 L845.7 148.8 L847.3 148.7 L849 148.7 L850.6 148.6 L852.2 148.6 L853.9 148.6 L855.5 148.7 L857.1 148.7 L858.7 148.8 L860.3 148.9 L861.9 149 L863.5 149.1 L865.1 149.2 L866.7 149.4 L868.2 149.6 L869.8 149.8 L871.4 150 L873 150.2 L874.5 150.5 L876.1 150.7 L877.6 151 L879.2 151.3 L880.7 151.6 L882.3 152 L883.8 152.3 L885.4 152.7 L886.9 153.1 L888.4 153.5 L890 153.9 L891.5 154.3 L893.1 154.8 L894.6 155.3 L896.1 155.8 L897.7 156.3 L899.2 156.8 L900.7 157.3 L902.3 157.9 L903.8 158.4 L905.3 159 L906.9 159.6 L908.4 160.2 L909.9 160.8 L911.5 161.5 L913 162.1 M605.3 246 L605.8 244.5 L606.2 243 L606.7 241.5 L607.1 240 L607.6 238.5 L608.1 236.9 L608.7 235.4 L609.2 233.9 L609.8 232.4 L610.3 230.9 L610.9 229.4 L611.6 227.9 L612.2 226.4 L612.9 224.9 L613.5 223.4 L614.2 221.9 L614.9 220.4 L615.7 218.9 L616.4 217.4 L617.2 215.9 L617.9 214.4 L618.7 212.9 L619.5 211.4 L620.4 210 L621.2 208.5 L622.1 207 L622.9 205.5 L623.8 204 L624.7 202.5 L625.7 201.1 L626.6 199.6 L627.5 198.1 L628.5 196.6 L629.5 195.2 L630.5 193.7 L631.5 192.2 L632.5 190.8 L633.6 189.3 L634.6 187.9 L635.7 186.4 L636.7 185 L637.8 183.5 L638.9 182.1 L640.1 180.6 L641.2 179.2 L642.3 177.7 L643.5 176.3 L644.6 174.9 L645.8 173.4 L647 172 L648.2 170.6 L649.4 169.2 L650.6 167.8 L651.8 166.3 L653 164.9 L654.3 163.5 L655.5 162.1 L656.8 160.7 L658 159.3 L659.3 158 L660.6 156.6 L661.9 155.2 L663.1 153.8 L664.4 152.5 L665.7 151.1 L667 149.7 L668.3 148.4 L669.6 147 L670.9 145.7 L672.2 144.4 L673.5 143.1 L674.8 141.7 L676.1 140.4 L677.4 139.1 L678.7 137.8 L680 136.5 L681.3 135.3 L682.6 134 L683.9 132.7 L685.1 131.5 L686.4 130.2 L687.7 129 L688.9 127.8 L690.1 126.6 L691.4 125.4 L692.6 124.2 L693.8 123 L695 121.8 L696.1 120.7 L697.3 119.5 L698.4 118.4 L699.5 117.3 L700.6 116.2 L701.6 115.1 L702.7 114 L703.6 113 L704.6 111.9 L705.6 110.9 L706.5 109.9 L707.3 109 L708.2 108 L708.9 107.1 L709.7 106.1 L710.4 105.2 L711 104.4 L711.6 103.5 L712.2 102.7 L712.7 101.9 L713.1 101.1 L713.5 100.4 L713.8 99.6 L714 98.9 L714.2 98.3 L714.3 97.6 L714.3 97 L714.3 96.5 L714.1 95.9 L713.9 95.4 L713.6 94.9 L713.2 94.5 L712.7 94.1 L712.1 93.7 L711.4 93.4 L710.6 93.1 L709.7 92.9 L708.7 92.6 L707.6 92.5 L706.4 92.3 L705.1 92.2 L703.6 92.2 L702.1 92.1 M1100.9 92.1 L1099.5 92.2 L1098.1 92.3 L1096.9 92.4 L1095.7 92.6 L1094.7 92.8 L1093.8 93 L1093 93.3 L1092.2 93.7 L1091.6 94 L1091.1 94.4 L1090.7 94.8 L1090.3 95.3 L1090.1 95.8 M593.5 255.9 L593.8 254.3 L594.1 252.8 L594.4 251.3 L594.8 249.8 L595.1 248.3 L595.5 246.8 L595.9 245.3 L596.3 243.8 L596.8 242.3 L597.2 240.7 L597.7 239.2 L598.2 237.7 L598.7 236.2 L599.3 234.7 L599.8 233.2 L600.4 231.7 L601 230.2 L601.6 228.7 L602.2 227.2 L602.9 225.7 L603.5 224.2 L604.2 222.8 L604.9 221.3 L605.6 219.8 L606.4 218.3 L607.1 216.8 L607.9 215.3 L608.7 213.8 L609.5 212.3 L610.3 210.9 L611.2 209.4 L612 207.9 L612.9 206.4 L613.8 205 L614.7 203.5 L615.6 202 L616.5 200.6 L617.5 199.1 L618.4 197.6 L619.4 196.2 L620.4 194.7 L621.4 193.3 L622.4 191.8 L623.5 190.4 L624.5 188.9 L625.6 187.5 L626.7 186 L627.7 184.6 L628.8 183.1 L630 181.7 L631.1 180.3 L632.2 178.9 L633.4 177.4 L634.5 176 L635.7 174.6 L636.9 173.2 L638.1 171.8 L639.3 170.4 L640.5 169 L641.7 167.6 L642.9 166.2 L644.1 164.8 L645.4 163.4 L646.6 162 L647.9 160.6 L649.1 159.3 L650.4 157.9 L651.7 156.6 L653 155.2 L654.2 153.8 L655.5 152.5 L656.8 151.2 L658.1 149.8 L659.4 148.5 L660.7 147.2 L662 145.9 L663.2 144.6 L664.5 143.3 L665.8 142 L667.1 140.7 L668.4 139.4 L669.7 138.2 L670.9 136.9 L672.2 135.7 L673.4 134.4 L674.7 133.2 L675.9 132 L677.2 130.8 L678.4 129.6 L679.6 128.4 L680.8 127.2 L681.9 126.1 L683.1 124.9 L684.2 123.8 L685.4 122.6 L686.5 121.5 L687.6 120.4 L688.6 119.4 L689.6 118.3 L690.6 117.2 L691.6 116.2 L692.6 115.2 L693.5 114.2 L694.4 113.2 L695.2 112.2 L696 111.3 L696.8 110.4 L697.5 109.5 L698.2 108.6 L698.8 107.7 L699.4 106.9 L699.9 106.1 L700.4 105.3 L700.8 104.5 L701.2 103.8 L701.4 103.1 L701.7 102.4 L701.8 101.7 L701.9 101.1 L701.9 100.5 L701.9 99.9 L701.7 99.4 L701.5 98.9 L701.2 98.4 L700.8 98 L700.3 97.6 L699.8 97.2 L699.1 96.9 L698.3 96.6 L697.5 96.3 L696.5 96.1 L695.4 95.9 L694.2 95.7 L693 95.6 M599.6 255.8 L599.1 254.7 L598.6 253.5 L598.2 252.4 L597.7 251.3 L597.2 250.1 L596.8 249 L596.4 247.9 L595.9 246.8 L595.5 245.6 L595.1 244.5 L594.7 243.4 L594.3 242.3 L594 241.2 L593.6 240.1 L593.2 239 L592.9 237.9 L592.5 236.8 L592.2 235.7 L591.9 234.6 L591.5 233.5 L591.2 232.5 L590.9 231.4 L590.6 230.3 L590.3 229.3 L590 228.2 L589.7 227.1 L589.4 226.1 L589.2 225 L588.9 224 L588.6 223 L588.4 221.9 L588.1 220.9 L587.9 219.9 L587.6 218.8 L587.4 217.8 L587.1 216.8 L586.9 215.8 L586.7 214.8 L586.5 213.8 L586.2 212.9 L586 211.9 L585.8 210.9 L585.6 209.9 L585.3 209 L585.1 208 L584.9 207.1 L584.7 206.1 L584.5 205.2 L584.3 204.3 L584.1 203.3 L583.8 202.4 L583.6 201.5 L583.4 200.6 L583.2 199.7 L582.9 198.9 L582.7 198 L582.5 197.1 L582.3 196.2 L582 195.4 L581.8 194.5 L581.5 193.7 L581.3 192.9 L581 192.1 L580.7 191.3 L580.5 190.4 L580.2 189.7 L579.9 188.9 L579.6 188.1 L579.3 187.3 L579 186.6 L578.7 185.8 L578.3 185.1 L578 184.4 L577.6 183.7 L577.3 183 L576.9 182.3 L576.5 181.6 L576.1 180.9 L575.7 180.2 L575.3 179.6 L574.8 178.9 L574.4 178.3 L573.9 177.7 L573.4 177.1 L572.9 176.5 L572.4 175.9 L571.8 175.4 L571.3 174.8 L570.7 174.3 L570.1 173.7 L569.5 173.2 L568.8 172.7 L568.2 172.2 L567.5 171.7 L566.8 171.3 L566 170.8 L565.3 170.4 L564.5 169.9 L563.7 169.5 L562.9 169.1 L562 168.7 L561.2 168.4 L560.3 168 L559.3 167.7 L558.4 167.4 L557.4 167 L556.4 166.7 L555.3 166.5 L554.3 166.2 L553.2 165.9 L552 165.7 L550.9 165.5 L549.7 165.3 L548.5 165.1 L547.2 164.9 L545.9 164.8 L544.6 164.6 L543.2 164.5 L541.9 164.4 L540.4 164.3 L539 164.2 L537.5 164.1 L536 164.1 L534.4 164 L532.8 164 L531.2 164 L529.6 164 L527.9 164.1 L526.1 164.1 L524.4 164.2 L522.6 164.2 L520.7 164.3 L518.9 164.4 L517 164.6 L515 164.7 L513.1 164.8 L511 165 L509 165.2 L506.9 165.4 M596.3 257.3 L595.8 256.1 L595.4 254.9 L595 253.7 L594.6 252.5 L594.2 251.4 L593.9 250.2 L593.5 249 L593.1 247.8 L592.8 246.7 L592.5 245.5 L592.1 244.3 L591.8 243.2 L591.5 242 L591.2 240.9 L590.9 239.7 L590.6 238.6 L590.4 237.4 L590.1 236.3 L589.9 235.2 L589.6 234 L589.4 232.9 L589.2 231.8 L589 230.7 L588.7 229.5 L588.5 228.4 L588.3 227.3 L588.2 226.2 L588 225.1 L587.8 224 L587.6 222.9 L587.5 221.8 L587.3 220.7 L587.2 219.7 L587 218.6 L586.9 217.5 L586.8 216.5 L586.6 215.4 L586.5 214.3 L586.4 213.3 L586.3 212.3 L586.2 211.2 L586.1 210.2 L586 209.2 L585.9 208.1 L585.8 207.1 L585.7 206.1 L585.6 205.1 L585.5 204.1 L585.4 203.1 L585.3 202.2 L585.2 201.2 L585.1 200.2 L585 199.3 L584.9 198.3 L584.8 197.4 L584.7 196.4 L584.6 195.5 L584.5 194.6 L584.4 193.6 L584.3 192.7 L584.2 191.8 L584.1 190.9 L584 190.1 L583.8 189.2 L583.7 188.3 L583.6 187.5 L583.4 186.6 L583.3 185.8 L583.1 184.9 L583 184.1 L582.8 183.3 L582.6 182.5 L582.4 181.7 L582.2 180.9 L582 180.2 L581.8 179.4 L581.5 178.7 L581.3 177.9 L581 177.2 L580.7 176.5 L580.5 175.8 L580.2 175.1 L579.8 174.4 L579.5 173.7 L579.1 173.1 L578.8 172.4 L578.4 171.8 L578 171.2 L577.6 170.5 L577.1 169.9 L576.7 169.4 L576.2 168.8 L575.7 168.2 L575.1 167.7 L574.6 167.2 L574 166.6 L573.4 166.1 L572.8 165.6 L572.2 165.2 L571.5 164.7 L570.8 164.3 L570.1 163.8 L569.3 163.4 L568.5 163 L567.7 162.6 L566.9 162.3 L566 161.9 L565.1 161.6 L564.2 161.2 L563.2 160.9 L562.2 160.6 L561.2 160.4 L560.1 160.1 L559 159.9 L557.9 159.6 L556.7 159.4 L555.5 159.2 L554.3 159 L553 158.9 L551.7 158.7 L550.4 158.6 L549 158.5 L547.6 158.4 L546.1 158.3 L544.6 158.2 L543.1 158.2 M599.1 253.2 L599.1 251.8 L599 250.4 L599 249.1 L598.9 247.7 L598.9 246.4 L598.9 245 L599 243.7 L599 242.3 L599.1 241 L599.1 239.6 L599.2 238.3 L599.3 236.9 L599.4 235.6 L599.5 234.3 L599.7 232.9 L599.8 231.6 L600 230.3 L600.1 228.9 L600.3 227.6 L600.5 226.3 L600.7 225 L601 223.7 L601.2 222.3 L601.4 221 L601.7 219.7 L602 218.4 L602.3 217.1 L602.6 215.8 L602.9 214.5 L603.2 213.2 L603.5 212 L603.9 210.7 L604.2 209.4 L604.6 208.1 L604.9 206.8 L605.3 205.6 L605.7 204.3 L606.1 203 L606.5 201.8 L606.9 200.5 L607.3 199.3 L607.8 198.1 L608.2 196.8 L608.6 195.6 L609.1 194.4 L609.5 193.1 L610 191.9 L610.5 190.7 L610.9 189.5 L611.4 188.3 L611.9 187.1 L612.4 185.9 L612.9 184.7 L613.4 183.5 L613.9 182.4 L614.4 181.2 L614.9 180 L615.4 178.9 L615.9 177.8 L616.4 176.6 L616.9 175.5 L617.4 174.4 L617.9 173.2 L618.4 172.1 L618.9 171 L619.4 169.9 L619.9 168.9 L620.3 167.8 L620.8 166.7 L621.3 165.7 L621.8 164.6 L622.2 163.6 L622.7 162.5 L623.1 161.5 L623.6 160.5 L624 159.5 L624.4 158.5 L624.8 157.5 L625.2 156.6 L625.6 155.6 L626 154.7 L626.3 153.8 L626.7 152.8 L627 151.9 L627.3 151 L627.6 150.1 L627.9 149.3 L628.1 148.4 L628.3 147.6 L628.5 146.8 L628.7 145.9 L628.9 145.1 L629 144.4 L629.1 143.6 L629.2 142.8 L629.2 142.1 L629.3 141.4 L629.3 140.7 L629.2 140 L629.1 139.3 L629 138.7 L628.9 138 L628.7 137.4 L628.5 136.8 L628.3 136.2 L628 135.7 L627.6 135.1 L627.2 134.6 L626.8 134.1 L626.4 133.6 L625.9 133.2 L625.3 132.7 L624.7 132.3 L624 131.9 L623.3 131.6 L622.6 131.2 L621.8 130.9 L620.9 130.6 L620 130.3 L619 130 L618 129.8 L616.9 129.6 L615.8 129.4 L614.6 129.2 L613.4 129 L612.1 128.9 L610.7 128.8 L609.2 128.7 L607.8 128.7 L606.2 128.6 L604.6 128.6 L602.9 128.7 L601.2 128.7 L599.4 128.8 M1205.6 128.8 L1204.3 129 L1203 129.1 L1201.8 129.2 L1200.7 129.4 L1199.6 129.6 L1198.5 129.9 L1197.6 130.1 L1196.7 130.4 L1195.8 130.7 L1195 131" fill="none" stroke="#ffa500" stroke-width="1.6" stroke-dasharray="1.6 2.1"/>
<path d="M580.4 152 L584.7 146 M971.4 92.1 L960.1 83.6 M996.7 83.4 L999 90.1 M1000.6 101.7 L1006.3 117.3 M946.1 110.6 L957.2 116.5 M955.9 105.7 L962.2 111.9 M1093.2 130 L1092.1 134 M833.3 190 L846.2 187.6 M913 62 L921.7 71.2 M913.3 89.9 L918.8 100.4 M871.1 80 L872.4 67.8 M1012 78.2 L1028.5 80.7 M853.2 148.6 L867.6 146.2 M660 135.2 L705.3 108.8 M661.3 127.5 L696.6 128.4 M848.3 137 L834.5 142.6 M676.9 157.5 L710.1 139.4 M926.5 154 L912.6 160" fill="none" stroke="#6a6a6a" stroke-width="1.7"/>
<path d="M794.2 65.8 L758.2 73.2 M1049.2 74.6 L1061.9 81.4" fill="none" stroke="#ee82ee" stroke-width="1.7"/>
<path d="M1026.9 74.6 L1053.1 88.2" fill="none" stroke="#adff2f" stroke-width="1.7"/>
<path d="M653.3 108.4 L659.6 106.7 M865.2 81.4 L874 102.8 M931.5 74.6 L937.4 85.3 M1165.5 121.9 L1153.9 119.9 M1234.7 140.1 L1219.9 143.2" fill="none" stroke="#ffee00" stroke-width="1.7"/>
<path d="M610.7 136.9 L482.7 176.9 M684.3 126.1 L666.8 129 M794.2 97 L780.6 83.4 M777.7 107.7 L775.7 99.9 M758.2 112.5 L755 106.7 M750.4 119.3 L747.5 114.5 M851.6 108.6 L880 79.5 M932.5 49.3 L946.1 54.2 M917.9 52.2 L930.6 55.2 M880 66.8 L885.8 60 M923.8 94 L935.4 90.2 M987 74.6 L1045.3 99.9 M1016.2 98 L1069.7 124.2 M1047.3 83.4 L1074.5 96 M889.7 155.3 L908.2 143.7 M917.9 146.6 L925.7 144.6 M893.6 180.6 L930.6 170.9 M880 79.5 L896 58" fill="none" stroke="#ff2a0a" stroke-width="1.7"/>
<path d="M853.5 54.2 L891 33 M818.5 72.7 L833.1 64.9 M665.8 159.2 L750.4 92.1 M749.5 116.4 L776.7 100.9 M836 93 L861.3 81.4 M854.5 142.7 L873 142.7 M827.3 159.2 L852.6 159.2 M856.5 166 L872 168.6 M667.8 143.7 L679.5 138.8 M913 66.8 L922.8 72.7 M909.2 80.4 L921.8 86.3 M1033.7 77.5 L1038.5 83.4 M1053 89.2 L1058 94 M1018 98 L1026.9 104.8 M954.9 103.8 L971.4 116.4 M959.8 117.4 L975.3 129 M899.5 114.5 L916 122.3 M883.9 132 L901.4 137.8 M949 135.9 L979.2 155.3 M955.9 151.4 L964.6 156.3 M1020 146.6 L1039.5 162.1 M913 162.1 L927.7 168 M1090.1 95.8 L1094 105.9 M1111.9 95.5 L1101.8 95.8 M1298.5 165.4 L1288.4 166.1 M543.1 158.2 L534.2 157.3 M1195 131 L1185.8 131.9" fill="none" stroke="#ffa500" stroke-width="1.7"/>
<g fill="#ff8060"><circle cx="891" cy="33" r="1.3"/><circle cx="833.1" cy="64.9" r="1.3"/><circle cx="750.4" cy="92.1" r="1.3"/><circle cx="776.7" cy="100.9" r="1.3"/><circle cx="861.3" cy="81.4" r="1.3"/><circle cx="873" cy="142.7" r="1.3"/><circle cx="852.6" cy="159.2" r="1.3"/><circle cx="872" cy="168.6" r="1.3"/><circle cx="679.5" cy="138.8" r="1.3"/><circle cx="922.8" cy="72.7" r="1.3"/><circle cx="921.8" cy="86.3" r="1.3"/><circle cx="1038.5" cy="83.4" r="1.3"/><circle cx="1058" cy="94" r="1.3"/><circle cx="1026.9" cy="104.8" r="1.3"/><circle cx="971.4" cy="116.4" r="1.3"/><circle cx="975.3" cy="129" r="1.3"/><circle cx="916" cy="122.3" r="1.3"/><circle cx="901.4" cy="137.8" r="1.3"/><circle cx="979.2" cy="155.3" r="1.3"/><circle cx="964.6" cy="156.3" r="1.3"/><circle cx="1039.5" cy="162.1" r="1.3"/><circle cx="927.7" cy="168" r="1.3"/><circle cx="1094" cy="105.9" r="1.3"/><circle cx="1101.8" cy="95.8" r="1.3"/><circle cx="1288.4" cy="166.1" r="1.3"/><circle cx="534.2" cy="157.3" r="1.3"/><circle cx="1185.8" cy="131.9" r="1.3"/><circle cx="482.7" cy="176.9" r="1.3"/><circle cx="666.8" cy="129" r="1.3"/><circle cx="780.6" cy="83.4" r="1.3"/><circle cx="775.7" cy="99.9" r="1.3"/><circle cx="755" cy="106.7" r="1.3"/><circle cx="747.5" cy="114.5" r="1.3"/><circle cx="880" cy="79.5" r="1.3"/><circle cx="946.1" cy="54.2" r="1.3"/><circle cx="930.6" cy="55.2" r="1.3"/><circle cx="885.8" cy="60" r="1.3"/><circle cx="935.4" cy="90.2" r="1.3"/><circle cx="1045.3" cy="99.9" r="1.3"/><circle cx="1069.7" cy="124.2" r="1.3"/><circle cx="1074.5" cy="96" r="1.3"/><circle cx="908.2" cy="143.7" r="1.3"/><circle cx="925.7" cy="144.6" r="1.3"/><circle cx="930.6" cy="170.9" r="1.3"/><circle cx="896" cy="58" r="1.3"/><circle cx="659.6" cy="106.7" r="1.3"/><circle cx="874" cy="102.8" r="1.3"/><circle cx="937.4" cy="85.3" r="1.3"/><circle cx="1153.9" cy="119.9" r="1.3"/><circle cx="1219.9" cy="143.2" r="1.3"/><circle cx="758.2" cy="73.2" r="1.3"/><circle cx="1061.9" cy="81.4" r="1.3"/><circle cx="1053.1" cy="88.2" r="1.3"/></g>
<path d="M574.3 257.4 h7 M577.8 253.9 v7 M564 271.3 h7 M567.5 267.8 v7 M576.3 274.8 h7 M579.8 271.3 v7 M596 262.3 h7 M599.5 258.8 v7 M587.5 268 h7 M591 264.5 v7 M578.5 272 h7 M582 268.5 v7 M734.8 272.2 h7 M738.3 268.7 v7 M745.9 268.3 h7 M749.4 264.8 v7 M763.7 271.1 h7 M767.2 267.6 v7 M769.3 270 h7 M772.8 266.5 v7 M760.9 281.7 h7 M764.4 278.2 v7 M752.6 273.3 h7 M756.1 269.8 v7 M744.8 273.9 h7 M748.3 270.4 v7 M767.1 273.9 h7 M770.6 270.4 v7 M753.5 266 h7 M757 262.5 v7 M549.8 165.6 h7 M553.3 162.1 v7 M593.2 158.2 h7 M596.7 154.7 v7 M573.1 158 h7 M576.6 154.5 v7 M744.3 327.1 h7 M747.8 323.6 v7 M769.2 327.1 h7 M772.7 323.6 v7 M707.8 245.3 h7 M711.3 241.8 v7" stroke="#ff1a1a" stroke-width="1.5" fill="none"/>
<ellipse cx="588.8" cy="267.7" rx="30.7" ry="22.2" transform="rotate(-35 588.8 267.7)" fill="none" stroke="#ffa500" stroke-width="2.08"/>
<ellipse cx="757.7" cy="276.7" rx="26" ry="24.6" transform="rotate(-30 757.7 276.7)" fill="none" stroke="#ff2a0a" stroke-width="2.08"/>
<ellipse cx="763.7" cy="326.7" rx="25.3" ry="25.3" transform="rotate(0 763.7 326.7)" fill="none" stroke="#ee82ee" stroke-width="2.08"/>
<ellipse cx="729.8" cy="242.6" rx="31.7" ry="19.6" transform="rotate(-40 729.8 242.6)" fill="none" stroke="#adff2f" stroke-width="2.08"/>
<ellipse cx="567.3" cy="158.5" rx="60" ry="11.5" transform="rotate(-22 567.3 158.5)" fill="none" stroke="#ffee00" stroke-width="2.08"/>
<g font-family="&quot;Liberation Sans&quot;, sans-serif" font-size="10.8" fill="#fff" text-anchor="middle">
<text x="588.8" y="271.6">ORI</text>
<text x="757.7" y="280.6">STA</text>
<text x="763.7" y="330.6">OER</text>
<text x="729.8" y="246.5">CTA</text>
<text x="567.5" y="163.4">LUM</text>
</g>
<g font-family="&quot;Liberation Mono&quot;, monospace" font-size="13.9" fill="#fff">
<text x="315.5" y="29.9" xml:space="preserve">GR0002</text>
<text x="315.5" y="43" xml:space="preserve">Beg: 20251026 16:39:01 (sol = 213.17°)</text>
<text x="315.5" y="56.1" xml:space="preserve">End: 20251027 03:55:03 (sol = 213.63°)</text>
<text x="315.5" y="69.2" xml:space="preserve">--------------------------------------</text>
<text x="315.5" y="82.3" xml:space="preserve">...: 40</text>
<text x="315.5" y="95.4" xml:space="preserve">ORI: 31</text>
<text x="315.5" y="108.5" xml:space="preserve">STA: 21</text>
<text x="315.5" y="121.6" xml:space="preserve">LUM: 5</text>
<text x="315.5" y="134.7" xml:space="preserve">OER: 2</text>
<text x="315.5" y="147.8" xml:space="preserve">CTA: 1</text>
</g>
<g font-family="&quot;Liberation Sans&quot;, sans-serif" font-size="31.0" fill="#5c5c5c">
<text transform="translate(149.6 696.7) rotate(-90) scale(0.852 1)">APR</text>
<text transform="translate(294.5 701.1) rotate(-90) scale(0.877 1)">MAY</text>
<text transform="translate(436.7 690.4) rotate(-90) scale(0.821 1)">JUN</text>
<text transform="translate(576.7 685.4) rotate(-90) scale(0.791 1)">JUL</text>
<text transform="translate(723.7 700.4) rotate(-90) scale(0.862 1)">AUG</text>
<text transform="translate(872.8 694) rotate(-90) scale(0.806 1)">SEP</text>
<text transform="translate(1016.7 700.5) rotate(-90) scale(0.871 1)">OCT</text>
<text transform="translate(1169.5 704.5) rotate(-90) scale(0.880 1)">NOV</text>
<text transform="translate(1318.9 700.6) rotate(-90) scale(0.855 1)">DEC</text>
<text transform="translate(1469.5 688.3) rotate(-90) scale(0.799 1)">JAN</text>
<text transform="translate(1628.6 696) rotate(-90) scale(0.839 1)">FEB</text>
<text transform="translate(1766.7 705) rotate(-90) scale(0.882 1)">MAR</text>
</g>
<path d="M106 834 L129 834 M165 834 L345 834 M365.7 834 L625 834 M635 834 L786 834 M807 834 L899 834 M920 834 L973 834 M984 834 L1066 834 M1082 834 L1203 834 M1244 834 L1326 834 M1337 834 L1355 834 M1381 834 L1444 834 M1459 834 L1512 834 M1523 834 L1547 834 M1724 834 L1748 834 M1758 834 L1782 834" stroke="#ee82ee" stroke-width="4" fill="none"/><path d="M165 817.7 L188 817.7 M223 817.7 L286 817.7 M312 817.7 L340 817.7 M365.7 817.7 L492 817.7 M508 817.7 L654 817.7 M704 817.7 L737 817.7 M773 817.7 L845 817.7 M871 817.7 L988 817.7 M1003 817.7 L1017 817.7 M1062 817.7 L1213 817.7 M1244 817.7 L1267 817.7 M1293 817.7 L1316 817.7 M1342 817.7 L1365 817.7 M1386 817.7 L1429 817.7 M1459 817.7 L1483 817.7 M1548 817.7 L1571 817.7" stroke="#e01ef0" stroke-width="4" fill="none"/><path d="M165 801.3 L188 801.3 M258 801.3 L487 801.3 M508 801.3 L615 801.3 M626 801.3 L718 801.3 M729 801.3 L826 801.3 M949 801.3 L1149 801.3 M1160 801.3 L1248 801.3 M1258 801.3 L1444 801.3 M1459 801.3 L1483 801.3 M1552 801.3 L1576 801.3" stroke="#ff2200" stroke-width="4" fill="none"/><path d="M194 785 L218 785 M321 785 L507 785 M518 785 L541 785 M557 785 L683 785 M807 785 L831 785 M954 785 L973 785 M988 785 L1125 785 M1155 785 L1218 785 M1244 785 L1267 785 M1317 785 L1341 785 M1396 785 L1419 785 M1464 785 L1650 785" stroke="#ffa500" stroke-width="4" fill="none"/><path d="M341 768.7 L370 768.7 M410 768.7 L448 768.7 M469 768.7 L492 768.7 M527 768.7 L546 768.7 M562 768.7 L590 768.7 M616 768.7 L649 768.7 M959 768.7 L988 768.7 M1062 768.7 L1086 768.7 M1101 768.7 L1125 768.7 M1160 768.7 L1194 768.7 M1248 768.7 L1272 768.7 M1425 768.7 L1512 768.7" stroke="#ffee00" stroke-width="4" fill="none"/><path d="M420 752.4 L443 752.4 M532 752.4 L556 752.4 M567 752.4 L590 752.4 M621 752.4 L742 752.4 M969 752.4 L1135 752.4 M1185 752.4 L1346 752.4 M1469 752.4 L1493 752.4" stroke="#adff2f" stroke-width="4" fill="none"/><path d="M429 736 L453 736 M576 736 L733 736 M993 736 L1105 736 M1116 736 L1223 736 M1263 736 L1292 736 M1489 736 L1512 736" stroke="#5ad000" stroke-width="4" fill="none"/><path d="M591 719.7 L615 719.7 M655 719.7 L772 719.7 M1072 719.7 L1243 719.7 M1263 719.7 L1287 719.7" stroke="#00ee77" stroke-width="4" fill="none"/><path d="M596 703.4 L733 703.4 M1091 703.4 L1120 703.4 M1199 703.4 L1223 703.4 M1273 703.4 L1326 703.4" stroke="#10d8f0" stroke-width="4" fill="none"/><path d="M1111 687 L1135 687" stroke="#0010cc" stroke-width="4" fill="none"/>
<path d="M74 641.4 L74 842.1 M218 641.4 L218 842.1 M365 641.4 L365 842.1 M505 641.4 L505 842.1 M650 641.4 L650 842.1 M797 641.4 L797 842.1 M940 641.4 L940 842.1 M1091 641.4 L1091 842.1 M1239 641.4 L1239 842.1 M1394 641.4 L1394 842.1 M1548 641.4 L1548 842.1 M1687 641.4 L1687 842.1" stroke="#ffffff" stroke-opacity="0.42" stroke-width="2.08" stroke-dasharray="2.08 3.44" fill="none"/>
<path d="M1065.3 641.4 V842.1 M1067.5 641.4 V842.1" stroke="#ff0000" stroke-width="1.4" stroke-dasharray="5.1 2.2" fill="none"/>
<path d="M113 834 h8 M117 830 v8 M241 834 h8 M245 830 v8 M510.6 834 h8 M514.6 830 v8 M706.5 834 h8 M710.5 830 v8 M833 834 h8 M837 830 v8 M962 834 h8 M966 830 v8 M986 834 h8 M990 830 v8 M1116 834 h8 M1120 830 v8 M1295 834 h8 M1299 830 v8 M1342 834 h8 M1346 830 v8 M1413 834 h8 M1417 830 v8 M1482 834 h8 M1486 830 v8 M1531 834 h8 M1535 830 v8 M1732 834 h8 M1736 830 v8 M1766 834 h8 M1770 830 v8 M172 817.7 h8 M176 813.7 v8 M256 817.7 h8 M260 813.7 v8 M323 817.7 h8 M327 813.7 v8 M437 817.7 h8 M441 813.7 v8 M599 817.7 h8 M603 813.7 v8 M717 817.7 h8 M721 813.7 v8 M793 817.7 h8 M797 813.7 v8 M939 817.7 h8 M943 813.7 v8 M1006 817.7 h8 M1010 813.7 v8 M1153 817.7 h8 M1157 813.7 v8 M1251 817.7 h8 M1255 813.7 v8 M1300 817.7 h8 M1304 813.7 v8 M1349 817.7 h8 M1353 813.7 v8 M1403 817.7 h8 M1407 813.7 v8 M1467 817.7 h8 M1471 813.7 v8 M1555 817.7 h8 M1559 813.7 v8 M174 801.3 h8 M178 797.3 v8 M377.6 801.3 h8 M381.6 797.3 v8 M545 801.3 h8 M549 797.3 v8 M682 801.3 h8 M686 797.3 v8 M741 801.3 h8 M745 797.3 v8 M1075 801.3 h8 M1079 797.3 v8 M1217 801.3 h8 M1221 797.3 v8 M1305 801.3 h8 M1309 797.3 v8 M1467 801.3 h8 M1471 797.3 v8 M1560 801.3 h8 M1564 797.3 v8 M202 785 h8 M206 781 v8 M400 785 h8 M404 781 v8 M525 785 h8 M529 781 v8 M639 785 h8 M643 781 v8 M815 785 h8 M819 781 v8 M959 785 h8 M963 781 v8 M1040 785 h8 M1044 781 v8 M1188 785 h8 M1192 781 v8 M1251 785 h8 M1255 781 v8 M1325 785 h8 M1329 781 v8 M1403 785 h8 M1407 781 v8 M1546 785 h8 M1550 781 v8 M356 768.7 h8 M360 764.7 v8 M425 768.7 h8 M429 764.7 v8 M475.5 768.7 h8 M479.5 764.7 v8 M534.6 768.7 h8 M538.6 764.7 v8 M571 768.7 h8 M575 764.7 v8 M631 768.7 h8 M635 764.7 v8 M974 768.7 h8 M978 764.7 v8 M1070 768.7 h8 M1074 764.7 v8 M1109 768.7 h8 M1113 764.7 v8 M1178 768.7 h8 M1182 764.7 v8 M1256 768.7 h8 M1260 764.7 v8 M1467 768.7 h8 M1471 764.7 v8 M427 752.4 h8 M431 748.4 v8 M540 752.4 h8 M544 748.4 v8 M574 752.4 h8 M578 748.4 v8 M704 752.4 h8 M708 748.4 v8 M1094 752.4 h8 M1098 748.4 v8 M1271 752.4 h8 M1275 748.4 v8 M1477 752.4 h8 M1481 748.4 v8 M437 736 h8 M441 732 v8 M631 736 h8 M635 732 v8 M1039 736 h8 M1043 732 v8 M1168 736 h8 M1172 732 v8 M1275 736 h8 M1279 732 v8 M1497 736 h8 M1501 732 v8 M599 719.7 h8 M603 715.7 v8 M727 719.7 h8 M731 715.7 v8 M1188 719.7 h8 M1192 715.7 v8 M1271 719.7 h8 M1275 715.7 v8 M687 703.4 h8 M691 699.4 v8 M1102 703.4 h8 M1106 699.4 v8 M1207 703.4 h8 M1211 699.4 v8 M1300 703.4 h8 M1304 699.4 v8 M1119 687 h8 M1123 683 v8" stroke="#fff" stroke-width="2.1" fill="none"/>
<g font-family="&quot;Liberation Sans&quot;, sans-serif" font-size="11.1" fill="#f0f0f0" text-anchor="middle"><text x="117.5" y="831.8">KSE</text><text x="255" y="831.8">ETA</text><text x="495.4" y="831.8">NZC</text><text x="710.5" y="831.8">NDA</text><text x="853" y="831.8">SPE</text><text x="946.5" y="831.8">ARD</text><text x="1025" y="831.8">EGE</text><text x="1142.5" y="831.8">NTA</text><text x="1285" y="831.8">MON</text><text x="1346" y="831.8">URS</text><text x="1412.5" y="831.8">AHY</text><text x="1485.5" y="831.8">GUM</text><text x="1535" y="831.8">OHY</text><text x="1736" y="831.8">XHE</text><text x="1770" y="831.8">EVI</text><text x="176.5" y="815.5">AVB</text><text x="254.5" y="815.5">ELY</text><text x="326" y="815.5">CAM</text><text x="428.9" y="815.5">SSG</text><text x="581" y="815.5">PCA</text><text x="720.5" y="815.5">AUD</text><text x="809" y="815.5">AUR</text><text x="929.5" y="815.5">DSX</text><text x="1010" y="815.5">OCU</text><text x="1137.5" y="815.5">OER</text><text x="1255.5" y="815.5">DKD</text><text x="1304.5" y="815.5">DSV</text><text x="1353.5" y="815.5">ALY</text><text x="1407.5" y="815.5">JLE</text><text x="1471" y="815.5">SCC</text><text x="1559.5" y="815.5">FEV</text><text x="176.5" y="799.1">LYR</text><text x="372.5" y="799.1">JMC</text><text x="561.5" y="799.1">JPE</text><text x="672" y="799.1">PAU</text><text x="777.5" y="799.1">NIA</text><text x="1049" y="799.1">STA</text><text x="1204" y="799.1">NOO</text><text x="1351" y="799.1">COM</text><text x="1471" y="799.1">NCC</text><text x="1564" y="799.1">FED</text><text x="206" y="782.8">HVI</text><text x="414" y="782.8">ARI</text><text x="529.5" y="782.8">SZC</text><text x="620" y="782.8">CAP</text><text x="819" y="782.8">NUE</text><text x="963.5" y="782.8">OCT</text><text x="1056.5" y="782.8">ORI</text><text x="1186.5" y="782.8">AMO</text><text x="1255.5" y="782.8">DPC</text><text x="1329" y="782.8">XVI</text><text x="1407.5" y="782.8">QUA</text><text x="1557" y="782.8">AAN</text><text x="355.5" y="766.5">TAH</text><text x="429" y="766.5">JEA</text><text x="480.5" y="766.5">JIP</text><text x="536.5" y="766.5">PPS</text><text x="576" y="766.5">ZCS</text><text x="632.5" y="766.5">GDR</text><text x="973.5" y="766.5">DRA</text><text x="1074" y="766.5">LUM</text><text x="1113" y="766.5">RPU</text><text x="1177" y="766.5">THA</text><text x="1260" y="766.5">PSU</text><text x="1468.5" y="766.5">XCB</text><text x="431.5" y="750.1">JRC</text><text x="544" y="750.1">CAN</text><text x="578.5" y="750.1">FAN</text><text x="681.5" y="750.1">PER</text><text x="1052" y="750.1">CTA</text><text x="1265.5" y="750.1">HYD</text><text x="1481" y="750.1">XUM</text><text x="441" y="733.8">COR</text><text x="654.5" y="733.8">SDA</text><text x="1049" y="733.8">LMI</text><text x="1169.5" y="733.8">LEQ</text><text x="1277.5" y="733.8">EHY</text><text x="1500.5" y="733.8">ECV</text><text x="603" y="717.5">JXA</text><text x="713.5" y="717.5">KCG</text><text x="1157.5" y="717.5">AND</text><text x="1275" y="717.5">DAD</text><text x="664.5" y="701.2">ERI</text><text x="1105.5" y="701.2">SLD</text><text x="1211" y="701.2">ORS</text><text x="1299.5" y="701.2">GEM</text><text x="1123" y="684.8">KUM</text></g>
<rect x="19.5" y="641.5" width="1766" height="201" fill="none" stroke="#fff" stroke-width="1"/>
<path d="M19.5 842.5 v4.9 M264.8 842.5 v4.9 M510.1 842.5 v4.9 M755.3 842.5 v4.9 M1000.6 842.5 v4.9 M1245.9 842.5 v4.9 M1491.2 842.5 v4.9 M1736.4 842.5 v4.9" stroke="#fff" stroke-width="1.1" fill="none"/>
<g font-family="&quot;Liberation Sans&quot;, sans-serif" font-size="14.5" fill="#fff" text-anchor="middle"><text x="20.4" y="862.3">0</text><text x="265.7" y="862.3">50</text><text x="511" y="862.3">100</text><text x="756.2" y="862.3">150</text><text x="1001.5" y="862.3">200</text><text x="1246.8" y="862.3">250</text><text x="1492.1" y="862.3">300</text><text x="1737.3" y="862.3">350</text><text x="902.3" y="882.3" textLength="146" lengthAdjust="spacingAndGlyphs">Solar longitude (deg)</text></g>
</svg></body></html>
